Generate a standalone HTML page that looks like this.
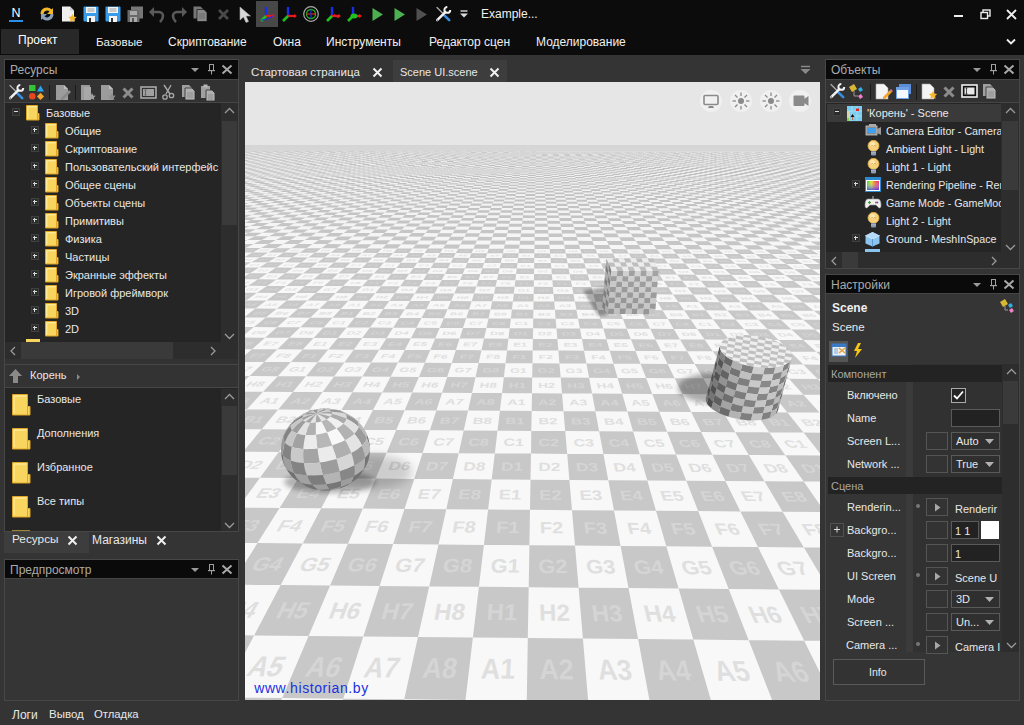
<!DOCTYPE html>
<html><head><meta charset="utf-8">
<style>
*{box-sizing:border-box;margin:0;padding:0}
html,body{width:1024px;height:725px;overflow:hidden;background:#343434;font-family:"Liberation Sans",sans-serif;color:#e8e8e8}
.a{position:absolute}
.t{position:absolute;white-space:nowrap;line-height:1}
svg{position:absolute;overflow:visible}
.ttl{position:absolute;background:#0a0a0a;height:20px}
.ttl span{position:absolute;left:5px;top:4px;font-size:12px;color:#aaaaaa;white-space:nowrap;line-height:1}
.bd{position:absolute;border:1px solid #454545}
</style></head><body>
<!-- top toolbar -->
<div class="a" style="left:0;top:0;width:1024px;height:55px;background:#0c0c0c"></div>
<div class="t" style="left:11.5px;top:7.42px;font-size:12.5px;color:#ffffff;font-weight:normal">N</div>
<div class="a" style="left:9px;top:20px;width:14px;height:2px;background:#2b8ee8"></div>
<svg style="left:39px;top:6px" width="16" height="16" viewBox="0 0 16 16"><path d="M3 8a5 5 0 0 1 9-3" stroke="#f0b82a" stroke-width="3" fill="none"/><path d="M14 2v6h-6z" fill="#f0b82a"/><path d="M13 8a5 5 0 0 1-9 3" stroke="#8aa0b8" stroke-width="3" fill="none"/><path d="M2 14V8h6z" fill="#8aa0b8"/></svg>
<svg style="left:61px;top:6px" width="16" height="16" viewBox="0 0 16 16"><path d="M1 0.5h8l4 4v11H1z" fill="#f0f0f0"/><path d="M9 0.5v4h4z" fill="#ccc"/><path d="M11.5 8l1.3 2.6 2.8.4-2 2 .5 2.8-2.6-1.4-2.6 1.4.5-2.8-2-2 2.8-.4z" fill="#f5b82e"/></svg>
<svg style="left:83px;top:6px" width="16" height="16" viewBox="0 0 16 16"><rect x="0.5" y="0.5" width="15" height="15" rx="1" fill="#3a9ce8"/><rect x="3" y="1" width="10" height="6" fill="#f4f4f4"/><path d="M4.5 3h7M4.5 5h7" stroke="#888" stroke-width="0.8"/><rect x="4" y="10" width="8" height="6" fill="#f4f4f4"/><rect x="6" y="12" width="2" height="4" fill="#333"/></svg>
<svg style="left:105px;top:6px" width="16" height="16" viewBox="0 0 16 16"><rect x="0.5" y="0.5" width="15" height="15" rx="1" fill="#3a9ce8"/><rect x="3" y="1" width="10" height="6" fill="#f4f4f4"/><path d="M4.5 3h7M4.5 5h7" stroke="#888" stroke-width="0.8"/><rect x="4" y="10" width="8" height="6" fill="#f4f4f4"/><rect x="6" y="12" width="2" height="4" fill="#333"/></svg>
<svg style="left:127px;top:6px" width="16" height="16" viewBox="0 0 16 16"><rect x="4" y="0.5" width="12" height="12" fill="#777"/><rect x="0.5" y="4" width="12" height="12" fill="#6a6a6a"/><rect x="3" y="5" width="7" height="4" fill="#aaa"/><rect x="3" y="11" width="7" height="5" fill="#aaa"/><rect x="5" y="12" width="2" height="4" fill="#555"/></svg>
<svg style="left:149px;top:6px" width="16" height="16" viewBox="0 0 16 16"><path d="M4 6h6a4 4 0 0 1 4 4c0 3-2 5-3 6" stroke="#5a5a5a" stroke-width="2.6" fill="none"/><path d="M0 6l5-5v10z" fill="#5a5a5a"/></svg>
<svg style="left:171px;top:6px" width="16" height="16" viewBox="0 0 16 16"><path d="M12 6H6a4 4 0 0 0-4 4c0 3 2 5 3 6" stroke="#5a5a5a" stroke-width="2.6" fill="none"/><path d="M16 6l-5-5v10z" fill="#5a5a5a"/></svg>
<svg style="left:193px;top:6px" width="15" height="16" viewBox="0 0 15 16"><path d="M0.5 0.5h7l3 3v9H0.5z" fill="#777"/><path d="M4 3.5h7l3 3v9H4z" fill="#8a8a8a" stroke="#111" stroke-width="0.7"/><path d="M6 8h6M6 10h6M6 12h6" stroke="#666" stroke-width="0.9"/></svg>
<svg style="left:217px;top:8px" width="13" height="13" viewBox="0 0 13 13"><path d="M2 2l9 9M11 2l-9 9" stroke="#4a4a4a" stroke-width="2.8"/></svg>
<svg style="left:239px;top:6px" width="12" height="17" viewBox="0 0 12 17"><path d="M1 1v13l3.5-3 2.5 5.5 2.5-1-2.5-5.5h4.5z" fill="#d8d8d8" stroke="#aaa" stroke-width="0.6"/></svg>
<div class="a" style="left:256px;top:1px;width:22px;height:26px;background:#484848"></div>
<svg style="left:259px;top:6px" width="18" height="18" viewBox="0 0 18 18"><path d="M7 10V1" stroke="#1a30e8" stroke-width="2.4"/><path d="M7 10h8" stroke="#e81a1a" stroke-width="2.2"/><path d="M16 10l-3-2v4z" fill="#e81a1a"/><path d="M7 10l-5 5" stroke="#20c020" stroke-width="2.6"/><path d="M2 14c3 0 9-2 12-4" stroke="#1a30e8" stroke-width="1.2" fill="none"/></svg>
<svg style="left:281px;top:6px" width="18" height="18" viewBox="0 0 18 18"><path d="M7 10V1" stroke="#1a30e8" stroke-width="2.4"/><path d="M7 10h8" stroke="#e81a1a" stroke-width="2.2"/><path d="M16 10l-3-2v4z" fill="#e81a1a"/><path d="M7 10l-5 5" stroke="#20c020" stroke-width="2.6"/></svg>
<svg style="left:303px;top:6px" width="16" height="16" viewBox="0 0 16 16"><circle cx="8" cy="8" r="7.3" fill="none" stroke="#aaa" stroke-width="1.2"/><circle cx="8" cy="8" r="4.5" fill="none" stroke="#20b020" stroke-width="1.3"/><path d="M3.5 8h9" stroke="#e02020" stroke-width="1.2"/><path d="M8 3.5v9" stroke="#2030e0" stroke-width="1.2"/></svg>
<svg style="left:325px;top:6px" width="18" height="18" viewBox="0 0 18 18"><path d="M7 10V1" stroke="#1a30e8" stroke-width="2.4"/><path d="M7 10h8" stroke="#e81a1a" stroke-width="2.2"/><path d="M16 10l-3-2v4z" fill="#e81a1a"/><path d="M7 10l-5 5" stroke="#20c020" stroke-width="2.6"/><path d="M9 8l4 4" stroke="#e81a1a" stroke-width="1"/></svg>
<svg style="left:346px;top:6px" width="18" height="18" viewBox="0 0 18 18"><path d="M7 10V1" stroke="#1a30e8" stroke-width="2.4"/><path d="M7 10h8" stroke="#e81a1a" stroke-width="2.2"/><path d="M16 10l-3-2v4z" fill="#e81a1a"/><path d="M7 10l-5 5" stroke="#20c020" stroke-width="2.6"/><ellipse cx="8" cy="10" rx="3.5" ry="2.5" fill="#20c020"/></svg>
<svg style="left:372px;top:7px" width="12" height="15" viewBox="0 0 12 15"><path d="M0.5 1l10.5 6.5L0.5 14z" fill="#4caf50"/></svg>
<svg style="left:394px;top:7px" width="12" height="15" viewBox="0 0 12 15"><path d="M0.5 1l10.5 6.5L0.5 14z" fill="#4caf50"/></svg>
<svg style="left:416px;top:7px" width="12" height="15" viewBox="0 0 12 15"><path d="M0.5 1l10.5 6.5L0.5 14z" fill="#505050"/></svg>
<svg style="left:435px;top:6px" width="17" height="17" viewBox="0 0 17 17"><path d="M2 1.5L7.5 7" stroke="#b0b0b0" stroke-width="1.2" stroke-linecap="round"/><path d="M8.8 8.8l5.4 5.4" stroke="#3a8ee0" stroke-width="2.6" stroke-linecap="round"/>
<path d="M2.2 14.2L10.3 6.1" stroke="#f2f2f2" stroke-width="2.4" stroke-linecap="round"/><path d="M12.3 1A2.9 2.9 0 1 0 15.2 3.9" stroke="#f2f2f2" stroke-width="2" fill="none"/><circle cx="2.3" cy="14.1" r="0.7" fill="#333"/></svg>
<svg style="left:460px;top:10px" width="8" height="10" viewBox="0 0 8 10"><path d="M0.5 1h7" stroke="#ddd" stroke-width="1.4"/><path d="M0 3.5h8l-4 4z" fill="#ddd"/></svg>
<div class="t" style="left:481px;top:7.84px;font-size:12px;color:#f0f0f0">Example...</div>
<div class="a" style="left:954px;top:15px;width:9px;height:2px;background:#eee"></div>
<svg style="left:980px;top:9px" width="11" height="11" viewBox="0 0 11 11"><rect x="3" y="1" width="7" height="6" fill="none" stroke="#eee" stroke-width="1.4"/><rect x="1" y="3.5" width="6.5" height="6" fill="#0c0c0c" stroke="#eee" stroke-width="1.4"/></svg>
<svg style="left:1006px;top:9px" width="11" height="11" viewBox="0 0 11 11"><path d="M1 1l9 9M10 1l-9 9" stroke="#eee" stroke-width="1.8"/></svg>
<svg style="left:1006px;top:38px" width="10" height="8" viewBox="0 0 10 8"><path d="M1 1.5l4 4 4-4" stroke="#eee" stroke-width="1.8" fill="none"/></svg>
<!-- menu -->
<div class="a" style="left:1px;top:29px;width:78px;height:25px;background:#282828"></div>
<div class="t" style="left:18px;top:34px;font-size:12px;color:#fff">Проект</div>
<div class="t" style="left:96px;top:36px;font-size:11.6px;color:#f0f0f0">Базовые</div>
<div class="t" style="left:168px;top:36px;font-size:12px;color:#f0f0f0">Скриптование</div>
<div class="t" style="left:273px;top:36px;font-size:12px;color:#f0f0f0">Окна</div>
<div class="t" style="left:326px;top:36px;font-size:12px;color:#f0f0f0">Инструменты</div>
<div class="t" style="left:429px;top:36px;font-size:12px;color:#f0f0f0">Редактор сцен</div>
<div class="t" style="left:536px;top:36px;font-size:12px;color:#f0f0f0">Моделирование</div>

<!-- ===== LEFT: Ресурсы panel ===== -->
<div class="a" style="left:4px;top:59px;width:235px;height:473px;border:1px solid #474747;background:#323232"></div>
<div class="a" style="left:5px;top:103px;width:233px;height:239px;background:#252525"></div>
<div class="ttl" style="left:5px;top:60px;width:233px;height:19px"><span style="font-size:12px;top:4px">Ресурсы</span></div>
<svg style="left:190px;top:66px" width="10" height="8"><path d="M1 2h8l-4 4z" fill="#9a9a9a"/></svg>
<svg style="left:206px;top:63px" width="10" height="13"><rect x="3.5" y="1.5" width="4" height="6" fill="none" stroke="#a0a0a0"/><rect x="2" y="7" width="7" height="1.2" fill="#a0a0a0"/><rect x="5" y="8" width="1" height="3.5" fill="#a0a0a0"/></svg>
<svg style="left:221px;top:64px" width="12" height="11"><path d="M1.5 1.5l9 8M10.5 1.5l-9 8" stroke="#a8a8a8" stroke-width="2"/></svg>
<div class="a" style="left:5px;top:79px;width:233px;height:24px;background:#323232;border-top:1px solid #454545;border-bottom:1px solid #454545"></div>
<svg width="0" height="0" style="position:absolute"><defs>
<symbol id="fold" viewBox="0 0 14 16"><path d="M0.5 0.5h11v8h1.5v6.5H0.5z" fill="#f8d55e" stroke="#e0a524"/><path d="M1.8 1.8h8.8M1.8 1.8v12" stroke="#fff2b0" stroke-width="1"/><path d="M11.5 8.5v6.5" stroke="#e0a524"/></symbol>
<symbol id="bulb" viewBox="0 0 13 16"><circle cx="6.5" cy="5.8" r="5.5" fill="#f8d27a" stroke="#e0ae4a" stroke-width="0.8"/><circle cx="5.5" cy="4.5" r="2.5" fill="#fde7b0"/><path d="M4 6.5l1-1.5 1.5 1.5 1.5-1.5 1 1.5" stroke="#d9a040" stroke-width="0.7" fill="none"/><rect x="4" y="11" width="5" height="4.5" rx="1" fill="#7d8fa8"/><path d="M4 12.5h5M4 14h5" stroke="#b8c4d4" stroke-width="0.6"/></symbol>
</defs></svg><svg style="left:8px;top:84px" width="17" height="17" viewBox="0 0 17 17"><path d="M2 1.5L7.5 7" stroke="#b0b0b0" stroke-width="1.2" stroke-linecap="round"/><path d="M8.8 8.8l5.4 5.4" stroke="#3a8ee0" stroke-width="2.6" stroke-linecap="round"/>
<path d="M2.2 14.2L10.3 6.1" stroke="#f2f2f2" stroke-width="2.4" stroke-linecap="round"/><path d="M12.3 1A2.9 2.9 0 1 0 15.2 3.9" stroke="#f2f2f2" stroke-width="2" fill="none"/><circle cx="2.3" cy="14.1" r="0.7" fill="#333"/></svg>
<svg style="left:28px;top:84px" width="17" height="17" viewBox="0 0 17 17"><rect x="1" y="1" width="6.5" height="6" fill="#36c236"/><path d="M9 7.5L12.5 1.5 16 7.5z" fill="#2aa6f0"/>
<circle cx="4.3" cy="12.3" r="3.3" fill="#e8461e"/><path d="M12.5 8.8l3.6 3.6-3.6 3.6-3.6-3.6z" fill="#f3a530"/></svg>
<div class="a" style="left:49px;top:85px;width:1px;height:15px;background:#1a1a1a"></div>
<svg style="left:54px;top:84px" width="17" height="17" viewBox="0 0 17 17"><path d="M2 1h8l4 4v11H2z" fill="#9c9c9c"/><path d="M10 1v4h4" fill="#bdbdbd"/><path d="M7 14l8-8 2 2-8 8H7z" fill="#8a8a8a"/></svg>
<div class="a" style="left:75px;top:85px;width:1px;height:15px;background:#1a1a1a"></div>
<svg style="left:80px;top:84px" width="17" height="17" viewBox="0 0 17 17"><path d="M1 1h9v15H1z" fill="#9a9a9a"/><path d="M4 3h7v13H4z" fill="#a8a8a8"/><path d="M12 9l1.2 2.4 2.6.3-1.9 1.8.5 2.6-2.4-1.3-2.4 1.3.5-2.6-1.9-1.8 2.6-.3z" fill="#a0a0a0"/></svg>
<svg style="left:100px;top:84px" width="17" height="17" viewBox="0 0 17 17"><path d="M1 1h8l4 4v11H1z" fill="#9c9c9c"/><path d="M9 1v4h4z" fill="#c0c0c0"/><path d="M12 9l1.2 2.4 2.6.3-1.9 1.8.5 2.6-2.4-1.3-2.4 1.3.5-2.6-1.9-1.8 2.6-.3z" fill="#8e8e8e"/></svg>
<svg style="left:121px;top:86px" width="14" height="14" viewBox="0 0 14 14"><path d="M2.5 2.5l9 9M11.5 2.5l-9 9" stroke="#8c8c8c" stroke-width="3"/></svg>
<svg style="left:140px;top:86px" width="17" height="13" viewBox="0 0 17 13"><rect x="1" y="1" width="15" height="11" fill="none" stroke="#a8a8a8" stroke-width="1.6"/><rect x="3" y="3" width="11" height="7" fill="#a0a0a0"/><path d="M4.5 4h2M5.5 4v5M4.5 9h2" stroke="#555" stroke-width="0.8"/></svg>
<svg style="left:161px;top:84px" width="15" height="17" viewBox="0 0 15 17"><path d="M3 1l6 9M10 1L5 10" stroke="#a8a8a8" stroke-width="1.4"/><circle cx="4" cy="13" r="2.2" fill="none" stroke="#a8a8a8" stroke-width="1.3"/><circle cx="10.5" cy="11.5" r="2.2" fill="none" stroke="#a8a8a8" stroke-width="1.3"/></svg>
<svg style="left:181px;top:84px" width="15" height="17" viewBox="0 0 15 17"><path d="M1 1h7l3 3v9H1z" fill="#a0a0a0"/><path d="M4 4h7l3 3v9H4z" fill="#b0b0b0" stroke="#2f2f2f" stroke-width="0.8"/><path d="M6 9h6M6 11h6M6 13h6" stroke="#8a8a8a" stroke-width="0.9"/></svg>
<svg style="left:200px;top:84px" width="16" height="17" viewBox="0 0 16 17"><path d="M1 2h9v12H1z" fill="#a0a0a0"/><rect x="3.5" y="0.5" width="4" height="3" fill="#b8b8b8"/><path d="M6 6h6l3 3v8H6z" fill="#b0b0b0" stroke="#2f2f2f" stroke-width="0.8"/><path d="M8 11h5M8 13h5M8 15h5" stroke="#8a8a8a" stroke-width="0.9"/></svg>
<!-- tree -->
<div class="a" style="left:221px;top:103px;width:17px;height:239px;background:#2d2d2d"></div>
<div class="a" style="left:222px;top:121px;width:15px;height:104px;background:#3a3a3a"></div>
<svg style="left:224px;top:107px" width="11" height="8"><path d="M1 6l4.5-4.5L10 6" stroke="#9a9a9a" stroke-width="1.3" fill="none"/></svg>
<svg style="left:224px;top:332px" width="11" height="8"><path d="M1 2l4.5 4.5L10 2" stroke="#9a9a9a" stroke-width="1.3" fill="none"/></svg>
<div class="a" style="left:0;top:0;width:221px;height:342px;overflow:hidden"><svg style="left:12px;top:108px" width="8" height="8" viewBox="0 0 8 8"><rect x="0.5" y="0.5" width="7" height="7" fill="#2c2c2c" stroke="#404040"/><rect x="2" y="3" width="4" height="1" fill="#d8d8d8"/></svg>
<svg style="left:26px;top:105px" width="14" height="16" viewBox="0 0 14 16"><use href="#fold"/></svg>
<div class="t" style="left:46px;top:107.69px;font-size:11px;color:#e8e8e8">Базовые</div>
<svg style="left:31px;top:126px" width="8" height="8" viewBox="0 0 8 8"><rect x="0.5" y="0.5" width="7" height="7" fill="#2c2c2c" stroke="#404040"/><rect x="2" y="3" width="4" height="1" fill="#d8d8d8"/><rect x="3" y="2" width="1" height="4" fill="#d8d8d8"/></svg>
<svg style="left:45px;top:123px" width="14" height="16" viewBox="0 0 14 16"><use href="#fold"/></svg>
<div class="t" style="left:65px;top:125.69px;font-size:11px;color:#e8e8e8">Общие</div>
<svg style="left:31px;top:144px" width="8" height="8" viewBox="0 0 8 8"><rect x="0.5" y="0.5" width="7" height="7" fill="#2c2c2c" stroke="#404040"/><rect x="2" y="3" width="4" height="1" fill="#d8d8d8"/><rect x="3" y="2" width="1" height="4" fill="#d8d8d8"/></svg>
<svg style="left:45px;top:141px" width="14" height="16" viewBox="0 0 14 16"><use href="#fold"/></svg>
<div class="t" style="left:65px;top:143.69px;font-size:11px;color:#e8e8e8">Скриптование</div>
<svg style="left:31px;top:162px" width="8" height="8" viewBox="0 0 8 8"><rect x="0.5" y="0.5" width="7" height="7" fill="#2c2c2c" stroke="#404040"/><rect x="2" y="3" width="4" height="1" fill="#d8d8d8"/><rect x="3" y="2" width="1" height="4" fill="#d8d8d8"/></svg>
<svg style="left:45px;top:159px" width="14" height="16" viewBox="0 0 14 16"><use href="#fold"/></svg>
<div class="t" style="left:65px;top:161.69px;font-size:11px;color:#e8e8e8">Пользовательский интерфейс</div>
<svg style="left:31px;top:180px" width="8" height="8" viewBox="0 0 8 8"><rect x="0.5" y="0.5" width="7" height="7" fill="#2c2c2c" stroke="#404040"/><rect x="2" y="3" width="4" height="1" fill="#d8d8d8"/><rect x="3" y="2" width="1" height="4" fill="#d8d8d8"/></svg>
<svg style="left:45px;top:177px" width="14" height="16" viewBox="0 0 14 16"><use href="#fold"/></svg>
<div class="t" style="left:65px;top:179.69px;font-size:11px;color:#e8e8e8">Общее сцены</div>
<svg style="left:31px;top:198px" width="8" height="8" viewBox="0 0 8 8"><rect x="0.5" y="0.5" width="7" height="7" fill="#2c2c2c" stroke="#404040"/><rect x="2" y="3" width="4" height="1" fill="#d8d8d8"/><rect x="3" y="2" width="1" height="4" fill="#d8d8d8"/></svg>
<svg style="left:45px;top:195px" width="14" height="16" viewBox="0 0 14 16"><use href="#fold"/></svg>
<div class="t" style="left:65px;top:197.69px;font-size:11px;color:#e8e8e8">Объекты сцены</div>
<svg style="left:31px;top:216px" width="8" height="8" viewBox="0 0 8 8"><rect x="0.5" y="0.5" width="7" height="7" fill="#2c2c2c" stroke="#404040"/><rect x="2" y="3" width="4" height="1" fill="#d8d8d8"/><rect x="3" y="2" width="1" height="4" fill="#d8d8d8"/></svg>
<svg style="left:45px;top:213px" width="14" height="16" viewBox="0 0 14 16"><use href="#fold"/></svg>
<div class="t" style="left:65px;top:215.69px;font-size:11px;color:#e8e8e8">Примитивы</div>
<svg style="left:31px;top:234px" width="8" height="8" viewBox="0 0 8 8"><rect x="0.5" y="0.5" width="7" height="7" fill="#2c2c2c" stroke="#404040"/><rect x="2" y="3" width="4" height="1" fill="#d8d8d8"/><rect x="3" y="2" width="1" height="4" fill="#d8d8d8"/></svg>
<svg style="left:45px;top:231px" width="14" height="16" viewBox="0 0 14 16"><use href="#fold"/></svg>
<div class="t" style="left:65px;top:233.69px;font-size:11px;color:#e8e8e8">Физика</div>
<svg style="left:31px;top:252px" width="8" height="8" viewBox="0 0 8 8"><rect x="0.5" y="0.5" width="7" height="7" fill="#2c2c2c" stroke="#404040"/><rect x="2" y="3" width="4" height="1" fill="#d8d8d8"/><rect x="3" y="2" width="1" height="4" fill="#d8d8d8"/></svg>
<svg style="left:45px;top:249px" width="14" height="16" viewBox="0 0 14 16"><use href="#fold"/></svg>
<div class="t" style="left:65px;top:251.69px;font-size:11px;color:#e8e8e8">Частицы</div>
<svg style="left:31px;top:270px" width="8" height="8" viewBox="0 0 8 8"><rect x="0.5" y="0.5" width="7" height="7" fill="#2c2c2c" stroke="#404040"/><rect x="2" y="3" width="4" height="1" fill="#d8d8d8"/><rect x="3" y="2" width="1" height="4" fill="#d8d8d8"/></svg>
<svg style="left:45px;top:267px" width="14" height="16" viewBox="0 0 14 16"><use href="#fold"/></svg>
<div class="t" style="left:65px;top:269.69px;font-size:11px;color:#e8e8e8">Экранные эффекты</div>
<svg style="left:31px;top:288px" width="8" height="8" viewBox="0 0 8 8"><rect x="0.5" y="0.5" width="7" height="7" fill="#2c2c2c" stroke="#404040"/><rect x="2" y="3" width="4" height="1" fill="#d8d8d8"/><rect x="3" y="2" width="1" height="4" fill="#d8d8d8"/></svg>
<svg style="left:45px;top:285px" width="14" height="16" viewBox="0 0 14 16"><use href="#fold"/></svg>
<div class="t" style="left:65px;top:287.69px;font-size:11px;color:#e8e8e8">Игровой фреймворк</div>
<svg style="left:31px;top:306px" width="8" height="8" viewBox="0 0 8 8"><rect x="0.5" y="0.5" width="7" height="7" fill="#2c2c2c" stroke="#404040"/><rect x="2" y="3" width="4" height="1" fill="#d8d8d8"/><rect x="3" y="2" width="1" height="4" fill="#d8d8d8"/></svg>
<svg style="left:45px;top:303px" width="14" height="16" viewBox="0 0 14 16"><use href="#fold"/></svg>
<div class="t" style="left:65px;top:305.69px;font-size:11px;color:#e8e8e8">3D</div>
<svg style="left:31px;top:324px" width="8" height="8" viewBox="0 0 8 8"><rect x="0.5" y="0.5" width="7" height="7" fill="#2c2c2c" stroke="#404040"/><rect x="2" y="3" width="4" height="1" fill="#d8d8d8"/><rect x="3" y="2" width="1" height="4" fill="#d8d8d8"/></svg>
<svg style="left:45px;top:321px" width="14" height="16" viewBox="0 0 14 16"><use href="#fold"/></svg>
<div class="t" style="left:65px;top:323.69px;font-size:11px;color:#e8e8e8">2D</div>
<div class="a" style="left:26px;top:339px;width:14px;height:3px;background:#f8d55e"></div></div>
<!-- hscroll -->
<div class="a" style="left:5px;top:342px;width:233px;height:17px;background:#2d2d2d"></div>
<div class="a" style="left:21px;top:342px;width:152px;height:17px;background:#3a3a3a"></div>
<svg style="left:9px;top:346px" width="8" height="10"><path d="M6 1L2 5l4 4" stroke="#9a9a9a" stroke-width="1.3" fill="none"/></svg>
<svg style="left:209px;top:346px" width="8" height="10"><path d="M2 1l4 4-4 4" stroke="#9a9a9a" stroke-width="1.3" fill="none"/></svg>
<!-- breadcrumb + list -->
<div class="a" style="left:5px;top:364px;width:233px;height:1px;background:#474747"></div>
<div class="a" style="left:5px;top:365px;width:233px;height:23px;background:#333333;border-bottom:1px solid #474747"></div>
<div class="a" style="left:5px;top:388px;width:233px;height:143px;background:#252525"></div>
<svg style="left:8px;top:368px" width="15" height="16"><path d="M7.5 1L1 8h4v7h5V8h4z" fill="#8a8a8a"/></svg>
<div class="t" style="left:30px;top:370px;font-size:11px">Корень</div>
<svg style="left:76px;top:373px" width="5" height="8"><path d="M1 1l3 3-3 3z" fill="#8a8a8a"/></svg>
<div class="a" style="left:221px;top:389px;width:17px;height:142px;background:#2d2d2d"></div>
<div class="a" style="left:222px;top:406px;width:15px;height:69px;background:#3a3a3a"></div>
<svg style="left:224px;top:393px" width="11" height="8"><path d="M1 6l4.5-4.5L10 6" stroke="#9a9a9a" stroke-width="1.3" fill="none"/></svg>
<svg style="left:224px;top:521px" width="11" height="8"><path d="M1 2l4.5 4.5L10 2" stroke="#9a9a9a" stroke-width="1.3" fill="none"/></svg>
<svg style="left:12px;top:394px" width="19" height="22" viewBox="0 0 19 22"><path d="M0.5 0.5h15v12h2.5v8.5H0.5z" fill="#f8d55e" stroke="#e0a524"/><path d="M2 2h12.5M2 2v17" stroke="#fff2b0"/><path d="M15.5 12.5v8.5" stroke="#e0a524"/></svg>
<div class="t" style="left:37px;top:394.19px;font-size:11px;color:#e8e8e8">Базовые</div>
<svg style="left:12px;top:428px" width="19" height="22" viewBox="0 0 19 22"><path d="M0.5 0.5h15v12h2.5v8.5H0.5z" fill="#f8d55e" stroke="#e0a524"/><path d="M2 2h12.5M2 2v17" stroke="#fff2b0"/><path d="M15.5 12.5v8.5" stroke="#e0a524"/></svg>
<div class="t" style="left:37px;top:428.19px;font-size:11px;color:#e8e8e8">Дополнения</div>
<svg style="left:12px;top:462px" width="19" height="22" viewBox="0 0 19 22"><path d="M0.5 0.5h15v12h2.5v8.5H0.5z" fill="#f8d55e" stroke="#e0a524"/><path d="M2 2h12.5M2 2v17" stroke="#fff2b0"/><path d="M15.5 12.5v8.5" stroke="#e0a524"/></svg>
<div class="t" style="left:37px;top:462.19px;font-size:11px;color:#e8e8e8">Избранное</div>
<svg style="left:12px;top:496px" width="19" height="22" viewBox="0 0 19 22"><path d="M0.5 0.5h15v12h2.5v8.5H0.5z" fill="#f8d55e" stroke="#e0a524"/><path d="M2 2h12.5M2 2v17" stroke="#fff2b0"/><path d="M15.5 12.5v8.5" stroke="#e0a524"/></svg>
<div class="t" style="left:37px;top:496.19px;font-size:11px;color:#e8e8e8">Все типы</div>
<div class="a" style="left:12px;top:530px;width:18px;height:1px;background:#a08530"></div>
<!-- tabs -->
<div class="a" style="left:4px;top:532px;width:85px;height:21px;background:#3d3d3d"></div>
<div class="t" style="left:12px;top:534px;font-size:11.8px">Ресурсы</div>
<svg style="left:67px;top:535px" width="11" height="11"><path d="M1.5 1.5l8 8M9.5 1.5l-8 8" stroke="#f0f0f0" stroke-width="2"/></svg>
<div class="t" style="left:92px;top:534px;font-size:12px">Магазины</div>
<svg style="left:156px;top:535px" width="11" height="11"><path d="M1.5 1.5l8 8M9.5 1.5l-8 8" stroke="#f0f0f0" stroke-width="2"/></svg>

<!-- ===== LEFT: Предпросмотр ===== -->
<div class="a" style="left:4px;top:559px;width:235px;height:142px;border:1px solid #474747;background:#353535"></div>
<div class="ttl" style="left:5px;top:560px;width:233px;height:19px;border-bottom:1px solid #454545"><span style="font-size:12px;top:4px">Предпросмотр</span></div>
<svg style="left:190px;top:566px" width="10" height="8"><path d="M1 2h8l-4 4z" fill="#9a9a9a"/></svg>
<svg style="left:206px;top:563px" width="10" height="13"><rect x="3.5" y="1.5" width="4" height="6" fill="none" stroke="#a0a0a0"/><rect x="2" y="7" width="7" height="1.2" fill="#a0a0a0"/><rect x="5" y="8" width="1" height="3.5" fill="#a0a0a0"/></svg>
<svg style="left:221px;top:564px" width="12" height="11"><path d="M1.5 1.5l9 8M10.5 1.5l-9 8" stroke="#a8a8a8" stroke-width="2"/></svg>

<!-- bottom bar -->
<div class="t" style="left:12px;top:709px;font-size:12px">Логи</div>
<div class="t" style="left:49px;top:709px;font-size:11.5px">Вывод</div>
<div class="t" style="left:94px;top:709px;font-size:11.3px">Отладка</div>

<!-- ===== CENTER tabs ===== -->
<div class="t" style="left:251px;top:67px;font-size:11.5px">Стартовая страница</div>
<svg style="left:372px;top:67px" width="11" height="11"><path d="M1.5 1.5l8 8M9.5 1.5l-8 8" stroke="#f0f0f0" stroke-width="2"/></svg>
<div class="a" style="left:393px;top:60px;width:114px;height:22px;background:#3d3d3d"></div>
<div class="t" style="left:400px;top:67px;font-size:11px">Scene UI.scene</div>
<svg style="left:489px;top:67px" width="11" height="11"><path d="M1.5 1.5l8 8M9.5 1.5l-8 8" stroke="#f0f0f0" stroke-width="2"/></svg>
<svg style="left:800px;top:65px" width="11" height="11"><path d="M1 1.5h9" stroke="#8a8a8a" stroke-width="1.5"/><path d="M0.5 4h10l-5 5z" fill="#8a8a8a"/></svg>

<!-- ===== RIGHT: Объекты ===== -->
<div class="a" style="left:825px;top:59px;width:195px;height:210px;border:1px solid #474747;background:#252525"></div>
<div class="ttl" style="left:826px;top:60px;width:193px;height:19px"><span style="font-size:12px;top:4px">Объекты</span></div>
<svg style="left:972px;top:66px" width="10" height="8"><path d="M1 2h8l-4 4z" fill="#9a9a9a"/></svg>
<svg style="left:988px;top:63px" width="10" height="13"><rect x="3.5" y="1.5" width="4" height="6" fill="none" stroke="#a0a0a0"/><rect x="2" y="7" width="7" height="1.2" fill="#a0a0a0"/><rect x="5" y="8" width="1" height="3.5" fill="#a0a0a0"/></svg>
<svg style="left:1003px;top:64px" width="12" height="11"><path d="M1.5 1.5l9 8M10.5 1.5l-9 8" stroke="#a8a8a8" stroke-width="2"/></svg>
<div class="a" style="left:826px;top:79px;width:193px;height:24px;background:#323232;border-top:1px solid #454545;border-bottom:1px solid #454545"></div>
<svg style="left:829px;top:83px" width="17" height="17" viewBox="0 0 17 17"><path d="M2 1.5L7.5 7" stroke="#b0b0b0" stroke-width="1.2" stroke-linecap="round"/><path d="M8.8 8.8l5.4 5.4" stroke="#3a8ee0" stroke-width="2.6" stroke-linecap="round"/>
<path d="M2.2 14.2L10.3 6.1" stroke="#f2f2f2" stroke-width="2.4" stroke-linecap="round"/><path d="M12.3 1A2.9 2.9 0 1 0 15.2 3.9" stroke="#f2f2f2" stroke-width="2" fill="none"/><circle cx="2.3" cy="14.1" r="0.7" fill="#333"/></svg>
<svg style="left:848px;top:83px" width="17" height="17" viewBox="0 0 17 17"><path d="M1 4l5-3 3 5-5 3z" fill="#d8b830"/><path d="M6 8v5h4" stroke="#999" fill="none"/><path d="M10 6l3-2 2 3-3 2z" fill="#30b0e8"/><path d="M10 13l3-2 2 3-3 2z" fill="#f080c8"/></svg>
<div class="a" style="left:870px;top:84px;width:1px;height:16px;background:#1a1a1a"></div>
<svg style="left:875px;top:83px" width="17" height="17" viewBox="0 0 17 17"><path d="M1 1h8l4 4v11H1z" fill="#f4f4f4" stroke="#aaa" stroke-width="0.6"/><path d="M8 14l7-7 2 2-7 7H8z" fill="#f3a530"/><path d="M15 7l2 2 1-1-2-2z" fill="#e070a0"/></svg>
<svg style="left:895px;top:83px" width="17" height="17" viewBox="0 0 17 17"><rect x="4" y="1" width="12" height="10" fill="#5b8ed6"/><rect x="1" y="4" width="13" height="12" fill="#6ea0e8"/><rect x="2" y="7" width="11" height="8" fill="#f4f8ff"/></svg>
<div class="a" style="left:916px;top:84px;width:1px;height:16px;background:#1a1a1a"></div>
<svg style="left:921px;top:83px" width="17" height="17" viewBox="0 0 17 17"><path d="M1 1h8l4 4v11H1z" fill="#f4f4f4" stroke="#aaa" stroke-width="0.6"/><path d="M12 8l1.3 2.6 2.8.4-2 2 .5 2.8-2.6-1.4-2.6 1.4.5-2.8-2-2 2.8-.4z" fill="#f5b82e"/></svg>
<svg style="left:942px;top:85px" width="14" height="14" viewBox="0 0 14 14"><path d="M2.5 2.5l9 9M11.5 2.5l-9 9" stroke="#8c8c8c" stroke-width="3"/></svg>
<svg style="left:961px;top:84px" width="17" height="15" viewBox="0 0 17 15"><rect x="1" y="1" width="15" height="12" fill="#111" stroke="#f0f0f0" stroke-width="1.6"/><rect x="3.5" y="3.5" width="10" height="7" fill="#e8e8e8"/><path d="M4.5 4h2M5.5 4v6M4.5 10h2" stroke="#222" stroke-width="0.8"/></svg>
<svg style="left:982px;top:83px" width="15" height="17" viewBox="0 0 15 17"><path d="M1 1h7l3 3v9H1z" fill="#a0a0a0"/><path d="M4 4h7l3 3v9H4z" fill="#b0b0b0" stroke="#2f2f2f" stroke-width="0.8"/><path d="M6 9h6M6 11h6M6 13h6" stroke="#8a8a8a" stroke-width="0.9"/></svg>
<div class="a" style="left:1001px;top:103px;width:18px;height:150px;background:#2d2d2d"></div>
<div class="a" style="left:1002px;top:121px;width:16px;height:69px;background:#3a3a3a"></div>
<svg style="left:1005px;top:107px" width="11" height="8"><path d="M1 6l4.5-4.5L10 6" stroke="#9a9a9a" stroke-width="1.3" fill="none"/></svg>
<svg style="left:1005px;top:243px" width="11" height="8"><path d="M1 2l4.5 4.5L10 2" stroke="#9a9a9a" stroke-width="1.3" fill="none"/></svg>
<div class="a" style="left:827px;top:104px;width:174px;height:18px;background:#3a3a3a"></div>
<div class="a" style="left:0;top:0;width:1001px;height:252px;overflow:hidden"><svg style="left:833px;top:108px" width="8" height="8" viewBox="0 0 8 8"><rect x="0.5" y="0.5" width="7" height="7" fill="#2c2c2c" stroke="#404040"/><rect x="2" y="3" width="4" height="1" fill="#d8d8d8"/></svg>
<svg style="left:847px;top:106px" width="15" height="15" viewBox="0 0 15 15"><rect width="15" height="15" fill="#78cdf0"/><rect x="0" y="5" width="3" height="10" fill="#e8d098"/><rect x="0" y="12" width="2" height="3" fill="#8acc40"/><path d="M5 0v15M10 0v15M0 5h15M0 10h15" stroke="#a8e0f6" stroke-width="0.8"/><path d="M5.5 14V9" stroke="#c07050"/><path d="M3.5 11l2-3 2 3z" fill="#111"/><rect x="9" y="2.5" width="3" height="2.5" fill="#e82020"/></svg>
<div class="t" style="left:867px;top:107.69px;font-size:11px;color:#e8e8e8">'Корень' - Scene</div>
<svg style="left:865px;top:124px" width="17" height="12" viewBox="0 0 17 12"><rect x="1" y="2" width="11" height="9" fill="#8c8c8c" stroke="#ccc" stroke-width="0.8"/><rect x="3" y="4" width="7" height="5" fill="#3fa0f0"/><path d="M12 5l4-2v8l-4-2z" fill="#9a9a9a"/><rect x="4" y="0" width="7" height="2" fill="#aaa"/></svg>
<div class="t" style="left:886px;top:125.94px;font-size:10.7px;color:#e8e8e8">Camera Editor - Camera</div>
<svg style="left:867px;top:140px" width="13" height="16" viewBox="0 0 13 16"><use href="#bulb"/></svg>
<div class="t" style="left:886px;top:143.94px;font-size:10.7px;color:#e8e8e8">Ambient Light - Light</div>
<svg style="left:867px;top:158px" width="13" height="16" viewBox="0 0 13 16"><use href="#bulb"/></svg>
<div class="t" style="left:886px;top:161.94px;font-size:10.7px;color:#e8e8e8">Light 1 - Light</div>
<svg style="left:852px;top:180px" width="8" height="8" viewBox="0 0 8 8"><rect x="0.5" y="0.5" width="7" height="7" fill="#2c2c2c" stroke="#404040"/><rect x="2" y="3" width="4" height="1" fill="#d8d8d8"/><rect x="3" y="2" width="1" height="4" fill="#d8d8d8"/></svg>
<svg style="left:865px;top:177px" width="16" height="15" viewBox="0 0 16 15"><defs><linearGradient id="rg" x1="0" x2="1"><stop offset="0" stop-color="#30d040"/><stop offset=".35" stop-color="#e0e020"/><stop offset=".7" stop-color="#f06030"/><stop offset="1" stop-color="#f02080"/></linearGradient><linearGradient id="rg2" x1="0" y1="0" x2="0" y2="1"><stop offset="0" stop-color="#fff" stop-opacity="0"/><stop offset="1" stop-color="#4040f0" stop-opacity=".8"/></linearGradient></defs><rect x="0.5" y="0.5" width="15" height="14" fill="#fff" stroke="#2a8ad0"/><rect x="1" y="1" width="14" height="2" fill="#2a8ad0"/><rect x="2" y="4" width="12" height="9" fill="url(#rg)"/><rect x="2" y="4" width="12" height="9" fill="url(#rg2)"/></svg>
<div class="t" style="left:886px;top:179.94px;font-size:10.7px;color:#e8e8e8">Rendering Pipeline - Rendering</div>
<svg style="left:865px;top:196px" width="16" height="13" viewBox="0 0 16 13"><path d="M3 3h10c2 0 3 3 3 6s-1 3-2 3l-3-3H5l-3 3c-1 0-2 0-2-3s1-6 3-6z" fill="#f0f0f0" stroke="#999" stroke-width="0.6"/><path d="M3 6.5h3M4.5 5v3" stroke="#40a030" stroke-width="1.2"/><circle cx="11" cy="6.5" r="0.9" fill="#e03030"/><circle cx="12.5" cy="6.5" r="0.9" fill="#3070e0"/><rect x="7.5" y="0" width="1" height="3" fill="#bbb"/></svg>
<div class="t" style="left:886px;top:197.94px;font-size:10.7px;color:#e8e8e8">Game Mode - GameMode</div>
<svg style="left:867px;top:212px" width="13" height="16" viewBox="0 0 13 16"><use href="#bulb"/></svg>
<div class="t" style="left:886px;top:215.94px;font-size:10.7px;color:#e8e8e8">Light 2 - Light</div>
<svg style="left:852px;top:234px" width="8" height="8" viewBox="0 0 8 8"><rect x="0.5" y="0.5" width="7" height="7" fill="#2c2c2c" stroke="#404040"/><rect x="2" y="3" width="4" height="1" fill="#d8d8d8"/><rect x="3" y="2" width="1" height="4" fill="#d8d8d8"/></svg>
<svg style="left:865px;top:231px" width="15" height="16" viewBox="0 0 15 16"><path d="M7.5 1L14.5 4.5v8L7.5 15.5 0.5 12.5v-8z" fill="#8cc4f0"/><path d="M0.5 4.5L7.5 8l7-3.5" stroke="#d8eeff" fill="none"/><path d="M7.5 8v7.5" stroke="#5a9ad0"/><path d="M7.5 1L0.5 4.5 7.5 8l7-3.5z" fill="#b8dcf8"/></svg>
<div class="t" style="left:886px;top:233.94px;font-size:10.7px;color:#e8e8e8">Ground - MeshInSpace</div>
<svg style="left:865px;top:249px" width="15" height="3" viewBox="0 0 15 3"><rect width="15" height="3" fill="#8cc4f0"/></svg></div>
<div class="a" style="left:826px;top:252px;width:193px;height:16px;background:#2d2d2d"></div>
<div class="a" style="left:842px;top:252px;width:16px;height:16px;background:#3a3a3a"></div>
<svg style="left:830px;top:256px" width="8" height="10"><path d="M6 1L2 5l4 4" stroke="#9a9a9a" stroke-width="1.3" fill="none"/></svg>
<svg style="left:990px;top:256px" width="8" height="10"><path d="M2 1l4 4-4 4" stroke="#9a9a9a" stroke-width="1.3" fill="none"/></svg>

<!-- ===== RIGHT: Настройки ===== -->
<div class="a" style="left:825px;top:274px;width:195px;height:427px;border:1px solid #474747;background:#353535"></div>
<div class="ttl" style="left:826px;top:275px;width:193px;height:19px;border-bottom:1px solid #454545"><span style="font-size:12px;top:4px">Настройки</span></div>
<svg style="left:972px;top:281px" width="10" height="8"><path d="M1 2h8l-4 4z" fill="#9a9a9a"/></svg>
<svg style="left:988px;top:278px" width="10" height="13"><rect x="3.5" y="1.5" width="4" height="6" fill="none" stroke="#a0a0a0"/><rect x="2" y="7" width="7" height="1.2" fill="#a0a0a0"/><rect x="5" y="8" width="1" height="3.5" fill="#a0a0a0"/></svg>
<svg style="left:1003px;top:279px" width="12" height="11"><path d="M1.5 1.5l9 8M10.5 1.5l-9 8" stroke="#a8a8a8" stroke-width="2"/></svg>
<div class="t" style="left:832px;top:301.84px;font-size:12px;color:#f0f0f0;font-weight:bold">Scene</div>
<div class="t" style="left:832px;top:322.27px;font-size:11.5px;color:#e8e8e8">Scene</div>
<svg style="left:999px;top:298px" width="16" height="16" viewBox="0 0 16 16"><path d="M1 4l5-3 3 5-5 3z" fill="#d8b830"/><path d="M6 8v4h3" stroke="#999" fill="none"/><path d="M9 7l3-2 2 3-3 2z" fill="#30b0e8"/><path d="M10 12l3-2 2 3-3 2z" fill="#f080c8"/></svg>
<div class="a" style="left:829px;top:341px;width:19px;height:21px;background:#555"></div>
<svg style="left:831px;top:342px" width="16" height="16" viewBox="0 0 16 16"><rect x="1" y="2" width="14" height="12" fill="#f0f0f0" stroke="#3a7ac8" stroke-width="1"/><rect x="1" y="2" width="14" height="3" fill="#3a7ac8"/><path d="M3 7h4M3 9h4M3 11h4" stroke="#6090d0" stroke-width="0.8"/><path d="M8 6l6 5M8 11l6-5" stroke="#e0a040" stroke-width="1.5"/></svg>
<svg style="left:853px;top:343px" width="10" height="15" viewBox="0 0 10 15"><path d="M5 0L1 8h3l-2 7 7-9H5l3-6z" fill="#f5c518"/></svg>
<div class="a" style="left:828px;top:364px;width:78px;height:288px;background:#353535"></div>
<div class="a" style="left:912px;top:364px;width:90px;height:288px;background:#313131"></div>
<div class="a" style="left:1002px;top:364px;width:17px;height:288px;background:#2d2d2d"></div>
<div class="a" style="left:1003px;top:381px;width:15px;height:43px;background:#3a3a3a"></div>
<svg style="left:1006px;top:368px" width="11" height="8" viewBox="0 0 11 8"><path d="M1 6l4.5-4.5L10 6" stroke="#9a9a9a" stroke-width="1.3" fill="none"/></svg>
<svg style="left:1006px;top:641px" width="11" height="8" viewBox="0 0 11 8"><path d="M1 2l4.5 4.5L10 2" stroke="#9a9a9a" stroke-width="1.3" fill="none"/></svg>
<div class="a" style="left:828px;top:365px;width:174px;height:17px;background:#232323"></div>
<div class="t" style="left:831px;top:368.69px;font-size:11px;color:#a8a8a8">Компонент</div>
<div class="a" style="left:828px;top:477px;width:174px;height:17px;background:#232323"></div>
<div class="t" style="left:831px;top:480.69px;font-size:11px;color:#a8a8a8">Сцена</div>
<div class="a" style="left:906px;top:382px;width:7px;height:95px;background:#3b3b3b"></div>
<div class="a" style="left:906px;top:494px;width:7px;height:158px;background:#3b3b3b"></div>
<div class="t" style="left:847px;top:389.69px;font-size:11px;color:#e8e8e8">Включено</div>
<svg style="left:951px;top:388px" width="15" height="15" viewBox="0 0 15 15"><rect x="0.5" y="0.5" width="14" height="14" fill="#252525" stroke="#aaa"/><path d="M3 7.5l3 3 6-7" stroke="#fff" stroke-width="1.8" fill="none"/></svg>
<div class="t" style="left:847px;top:412.69px;font-size:11px;color:#e8e8e8">Name</div>
<div class="a" style="left:951px;top:409px;width:49px;height:18px;background:#222;border:1px solid #5a5a5a"></div>
<div class="t" style="left:847px;top:435.69px;font-size:11px;color:#e8e8e8">Screen L...</div>
<div class="a" style="left:926px;top:432px;width:22px;height:18px;background:#333;border:1px solid #555"></div>
<div class="a" style="left:951px;top:432px;width:49px;height:18px;background:#2f2f2f;border:1px solid #5a5a5a"></div><div class="t" style="left:956px;top:436.19px;font-size:11px;color:#e8e8e8">Auto</div><svg style="left:985px;top:439px" width="9" height="5" viewBox="0 0 9 5"><path d="M0 0h9L4.5 5z" fill="#b0b0b0"/></svg>
<div class="t" style="left:847px;top:458.69px;font-size:11px;color:#e8e8e8">Network ...</div>
<div class="a" style="left:926px;top:455px;width:22px;height:18px;background:#333;border:1px solid #555"></div>
<div class="a" style="left:951px;top:455px;width:49px;height:18px;background:#2f2f2f;border:1px solid #5a5a5a"></div><div class="t" style="left:956px;top:459.19px;font-size:11px;color:#e8e8e8">True</div><svg style="left:985px;top:462px" width="9" height="5" viewBox="0 0 9 5"><path d="M0 0h9L4.5 5z" fill="#b0b0b0"/></svg>
<div class="t" style="left:847px;top:501.69px;font-size:11px;color:#e8e8e8">Renderin...</div>
<div class="a" style="left:916px;top:504px;width:4px;height:4px;border-radius:2px;background:#777"></div>
<div class="a" style="left:926px;top:498px;width:22px;height:18px;background:#333;border:1px solid #555"></div><svg style="left:935px;top:503px" width="6" height="9" viewBox="0 0 6 9"><path d="M0 0.5l5.5 4L0 8.5z" fill="#a8a8a8"/></svg>
<div class="t" style="left:955px;top:503.69px;font-size:11px;color:#e8e8e8">Renderir</div>
<svg style="left:830px;top:523px" width="14" height="14" viewBox="0 0 14 14"><rect x="0.5" y="0.5" width="13" height="13" fill="#353535" stroke="#505050"/><rect x="4" y="6" width="6" height="1" fill="#ddd"/><rect x="6.5" y="3.5" width="1" height="6" fill="#ddd"/></svg>
<div class="t" style="left:847px;top:524.69px;font-size:11px;color:#e8e8e8">Backgro...</div>
<div class="a" style="left:926px;top:521px;width:22px;height:18px;background:#333;border:1px solid #555"></div>
<div class="a" style="left:951px;top:521px;width:28px;height:18px;background:#222;border:1px solid #5a5a5a"></div>
<div class="t" style="left:955px;top:525.69px;font-size:11px;color:#e8e8e8">1 1</div>
<div class="a" style="left:981px;top:521px;width:18px;height:18px;background:#fff"></div>
<div class="t" style="left:847px;top:547.69px;font-size:11px;color:#e8e8e8">Backgro...</div>
<div class="a" style="left:926px;top:544px;width:22px;height:18px;background:#333;border:1px solid #555"></div>
<div class="a" style="left:951px;top:544px;width:49px;height:18px;background:#222;border:1px solid #5a5a5a"></div>
<div class="t" style="left:955px;top:548.69px;font-size:11px;color:#e8e8e8">1</div>
<div class="t" style="left:847px;top:570.69px;font-size:11px;color:#e8e8e8">UI Screen</div>
<div class="a" style="left:916px;top:573px;width:4px;height:4px;border-radius:2px;background:#777"></div>
<div class="a" style="left:926px;top:567px;width:22px;height:18px;background:#333;border:1px solid #555"></div><svg style="left:935px;top:572px" width="6" height="9" viewBox="0 0 6 9"><path d="M0 0.5l5.5 4L0 8.5z" fill="#a8a8a8"/></svg>
<div class="t" style="left:955px;top:572.69px;font-size:11px;color:#e8e8e8">Scene U</div>
<div class="t" style="left:847px;top:593.69px;font-size:11px;color:#e8e8e8">Mode</div>
<div class="a" style="left:926px;top:590px;width:22px;height:18px;background:#333;border:1px solid #555"></div>
<div class="a" style="left:951px;top:590px;width:49px;height:18px;background:#2f2f2f;border:1px solid #5a5a5a"></div><div class="t" style="left:956px;top:594.19px;font-size:11px;color:#e8e8e8">3D</div><svg style="left:985px;top:597px" width="9" height="5" viewBox="0 0 9 5"><path d="M0 0h9L4.5 5z" fill="#b0b0b0"/></svg>
<div class="t" style="left:847px;top:616.69px;font-size:11px;color:#e8e8e8">Screen ...</div>
<div class="a" style="left:926px;top:613px;width:22px;height:18px;background:#333;border:1px solid #555"></div>
<div class="a" style="left:951px;top:613px;width:49px;height:18px;background:#2f2f2f;border:1px solid #5a5a5a"></div><div class="t" style="left:956px;top:617.19px;font-size:11px;color:#e8e8e8">Un...</div><svg style="left:985px;top:620px" width="9" height="5" viewBox="0 0 9 5"><path d="M0 0h9L4.5 5z" fill="#b0b0b0"/></svg>
<div class="t" style="left:846px;top:639.69px;font-size:11px;color:#e8e8e8">Camera ...</div>
<div class="a" style="left:916px;top:642px;width:4px;height:4px;border-radius:2px;background:#777"></div>
<div class="a" style="left:926px;top:636px;width:22px;height:18px;background:#333;border:1px solid #555"></div><svg style="left:935px;top:641px" width="6" height="9" viewBox="0 0 6 9"><path d="M0 0.5l5.5 4L0 8.5z" fill="#a8a8a8"/></svg>
<div class="t" style="left:955px;top:641.69px;font-size:11px;color:#e8e8e8">Camera I</div>
<div class="a" style="left:833px;top:659px;width:92px;height:26px;background:#333;border:1px solid #5a5a5a"></div>
<div class="t" style="left:869px;top:667.11px;font-size:10.5px;color:#e8e8e8">Info</div>

<svg class="a" style="left:244px;top:82px" width="576" height="618" viewBox="0 0 576 618">
<defs><clipPath id="vc"><rect x="1" width="575" height="618"/></clipPath>
</defs>
<g clip-path="url(#vc)">
<rect width="576" height="618" fill="#e6e6e6"/>
<rect y="63" width="576" height="555" fill="#f8f8f8"/>
<linearGradient id="farg" x1="0" y1="0" x2="0" y2="1"><stop offset="0" stop-color="#e0e0e0"/><stop offset="1" stop-color="#e2e2e2"/></linearGradient><rect y="63" width="576" height="6.8" fill="url(#farg)"/>
<path d="M-63.8,693.5 4.9,694.4 38.2,616.0 -22.6,615.4ZM73.8,695.2 142.8,696.0 160.2,617.3 99.2,616.7ZM212.1,696.9 281.4,697.7 282.8,618.6 221.5,618.0ZM351.0,698.5 420.7,699.4 405.8,620.0 344.2,619.3ZM490.6,700.2 560.7,701.1 529.4,621.3 467.6,620.6ZM630.9,701.9 701.3,702.8 653.5,622.6 591.4,621.9Z" fill="#c8c8c8"/><path d="M-83.3,614.7 -22.6,615.4 10.1,553.4 -44.3,552.9ZM38.2,616.0 99.2,616.7 119.3,554.5 64.6,553.9ZM160.2,617.3 221.5,618.0 228.9,555.5 174.0,555.0ZM282.8,618.6 344.2,619.3 338.9,556.6 283.8,556.0ZM405.8,620.0 467.6,620.6 449.3,557.6 394.1,557.1ZM529.4,621.3 591.4,621.9 560.2,558.7 504.7,558.2ZM653.5,622.6 715.8,623.3 671.5,559.8 615.8,559.2Z" fill="#c8c8c8"/><path d="M-98.7,552.4 -44.3,552.9 -12.7,502.7 -62.0,502.2ZM10.1,553.4 64.6,553.9 86.1,503.5 36.7,503.1ZM119.3,554.5 174.0,555.0 185.2,504.4 135.6,504.0ZM228.9,555.5 283.8,556.0 284.7,505.3 234.9,504.8ZM338.9,556.6 394.1,557.1 384.5,506.1 334.6,505.7ZM449.3,557.6 504.7,558.2 484.7,507.0 434.6,506.6ZM560.2,558.7 615.8,559.2 585.2,507.9 534.9,507.4Z" fill="#c8c8c8"/><path d="M-111.1,501.8 -62.0,502.2 -31.5,460.7 -76.5,460.3ZM-12.7,502.7 36.7,503.1 58.7,461.4 13.5,461.0ZM86.1,503.5 135.6,504.0 149.1,462.1 103.9,461.8ZM185.2,504.4 234.9,504.8 239.9,462.9 194.5,462.5ZM284.7,505.3 334.6,505.7 331.0,463.6 285.4,463.2ZM384.5,506.1 434.6,506.6 422.3,464.3 376.6,463.9ZM484.7,507.0 534.9,507.4 514.0,465.0 468.1,464.7ZM585.2,507.9 635.6,508.3 605.9,465.8 559.9,465.4Z" fill="#c8c8c8"/><path d="M-31.5,460.7 13.5,461.0 35.6,426.0 -5.9,425.7ZM58.7,461.4 103.9,461.8 118.8,426.6 77.2,426.3ZM149.1,462.1 194.5,462.5 202.3,427.2 160.5,426.9ZM239.9,462.9 285.4,463.2 286.0,427.8 244.1,427.5ZM331.0,463.6 376.6,463.9 370.0,428.5 328.0,428.2ZM422.3,464.3 468.1,464.7 454.2,429.1 412.0,428.8ZM514.0,465.0 559.9,465.4 538.6,429.7 496.4,429.4ZM605.9,465.8 652.0,466.1 623.3,430.3 580.9,430.0Z" fill="#c8c8c8"/><path d="M-47.4,425.4 -5.9,425.7 15.9,395.8 -22.5,395.6ZM35.6,426.0 77.2,426.3 93.0,396.4 54.4,396.1ZM118.8,426.6 160.5,426.9 170.2,396.9 131.6,396.6ZM202.3,427.2 244.1,427.5 247.7,397.4 208.9,397.1ZM286.0,427.8 328.0,428.2 325.4,397.9 286.5,397.7ZM370.0,428.5 412.0,428.8 403.3,398.5 364.3,398.2ZM454.2,429.1 496.4,429.4 481.4,399.0 442.3,398.7ZM538.6,429.7 580.9,430.0 559.7,399.5 520.5,399.3ZM623.3,430.3 665.7,430.6 638.2,400.1 598.9,399.8Z" fill="#c8c8c8"/><path d="M-60.9,395.3 -22.5,395.6 -1.0,369.8 -36.8,369.6ZM15.9,395.8 54.4,396.1 70.7,370.3 34.8,370.0ZM93.0,396.4 131.6,396.6 142.6,370.7 106.6,370.5ZM170.2,396.9 208.9,397.1 214.7,371.2 178.6,370.9ZM247.7,397.4 286.5,397.7 287.0,371.6 250.8,371.4ZM325.4,397.9 364.3,398.2 359.4,372.1 323.2,371.9ZM403.3,398.5 442.3,398.7 432.0,372.6 395.7,372.3ZM481.4,399.0 520.5,399.3 504.8,373.0 468.4,372.8ZM559.7,399.5 598.9,399.8 577.8,373.5 541.3,373.3ZM638.2,400.1 677.5,400.4 651.0,374.0 614.4,373.7Z" fill="#c8c8c8"/><path d="M-72.6,369.3 -36.8,369.6 -15.8,347.1 -49.3,346.9ZM-1.0,369.8 34.8,370.0 51.3,347.5 17.7,347.3ZM70.7,370.3 106.6,370.5 118.5,347.9 84.9,347.7ZM142.6,370.7 178.6,370.9 185.9,348.3 152.2,348.1ZM214.7,371.2 250.8,371.4 253.5,348.7 219.7,348.5ZM287.0,371.6 323.2,371.9 321.2,349.1 287.3,348.9ZM359.4,372.1 395.7,372.3 389.1,349.5 355.1,349.3ZM432.0,372.6 468.4,372.8 457.1,350.0 423.1,349.8ZM504.8,373.0 541.3,373.3 525.3,350.4 491.2,350.2ZM577.8,373.5 614.4,373.7 593.7,350.8 559.5,350.6Z" fill="#c8c8c8"/><path d="M-82.7,346.7 -49.3,346.9 -28.8,327.2 -60.3,327.0ZM-15.8,347.1 17.7,347.3 34.2,327.5 2.7,327.4ZM51.3,347.5 84.9,347.7 97.4,327.9 65.8,327.7ZM118.5,347.9 152.2,348.1 160.7,328.3 129.0,328.1ZM185.9,348.3 219.7,348.5 224.1,328.6 192.4,328.4ZM253.5,348.7 287.3,348.9 287.7,329.0 255.9,328.8ZM321.2,349.1 355.1,349.3 351.4,329.3 319.5,329.2ZM389.1,349.5 423.1,349.8 415.2,329.7 383.3,329.5ZM457.1,350.0 491.2,350.2 479.2,330.1 447.2,329.9ZM525.3,350.4 559.5,350.6 543.4,330.4 511.3,330.2ZM593.7,350.8 627.9,351.0 607.6,330.8 575.5,330.6Z" fill="#c8c8c8"/><path d="M-28.8,327.2 2.7,327.4 19.1,309.8 -10.6,309.7ZM34.2,327.5 65.8,327.7 78.6,310.1 48.9,310.0ZM97.4,327.9 129.0,328.1 138.3,310.5 108.4,310.3ZM160.7,328.3 192.4,328.4 198.1,310.8 168.2,310.6ZM224.1,328.6 255.9,328.8 258.0,311.1 228.0,310.9ZM287.7,329.0 319.5,329.2 318.0,311.4 288.0,311.3ZM351.4,329.3 383.3,329.5 378.2,311.8 348.1,311.6ZM415.2,329.7 447.2,329.9 438.4,312.1 408.3,311.9ZM479.2,330.1 511.3,330.2 498.8,312.4 468.6,312.2ZM543.4,330.4 575.5,330.6 559.4,312.7 529.1,312.6ZM607.6,330.8 639.8,331.0 620.0,313.1 589.7,312.9Z" fill="#c8c8c8"/><path d="M-40.3,309.5 -10.6,309.7 5.6,294.0 -22.5,293.9ZM19.1,309.8 48.9,310.0 61.9,294.3 33.8,294.2ZM78.6,310.1 108.4,310.3 118.3,294.6 90.1,294.5ZM138.3,310.5 168.2,310.6 174.9,294.9 146.6,294.8ZM198.1,310.8 228.0,310.9 231.5,295.2 203.2,295.0ZM258.0,311.1 288.0,311.3 288.2,295.5 259.9,295.3ZM318.0,311.4 348.1,311.6 345.1,295.8 316.7,295.6ZM378.2,311.8 408.3,311.9 402.1,296.1 373.6,295.9ZM438.4,312.1 468.6,312.2 459.2,296.3 430.6,296.2ZM498.8,312.4 529.1,312.6 516.3,296.6 487.7,296.5ZM559.4,312.7 589.7,312.9 573.7,296.9 545.0,296.8ZM620.0,313.1 650.4,313.2 631.1,297.2 602.3,297.1Z" fill="#c8c8c8"/><path d="M-50.6,293.8 -22.5,293.9 -6.5,279.9 -33.2,279.7ZM5.6,294.0 33.8,294.2 46.9,280.1 20.2,280.0ZM61.9,294.3 90.1,294.5 100.4,280.4 73.7,280.2ZM118.3,294.6 146.6,294.8 154.0,280.6 127.2,280.5ZM174.9,294.9 203.2,295.0 207.7,280.9 180.9,280.8ZM231.5,295.2 259.9,295.3 261.5,281.2 234.6,281.0ZM288.2,295.5 316.7,295.6 315.4,281.4 288.5,281.3ZM345.1,295.8 373.6,295.9 369.5,281.7 342.4,281.6ZM402.1,296.1 430.6,296.2 423.6,281.9 396.5,281.8ZM459.2,296.3 487.7,296.5 477.8,282.2 450.6,282.1ZM516.3,296.6 545.0,296.8 532.1,282.5 504.9,282.3ZM573.7,296.9 602.3,297.1 586.5,282.7 559.3,282.6Z" fill="#c8c8c8"/><path d="M-59.8,279.6 -33.2,279.7 -17.4,267.1 -42.8,266.9ZM-6.5,279.9 20.2,280.0 33.4,267.3 8.0,267.2ZM46.9,280.1 73.7,280.2 84.3,267.5 58.8,267.4ZM100.4,280.4 127.2,280.5 135.2,267.8 109.7,267.7ZM154.0,280.6 180.9,280.8 186.3,268.0 160.8,267.9ZM207.7,280.9 234.6,281.0 237.5,268.2 211.9,268.1ZM261.5,281.2 288.5,281.3 288.7,268.5 263.1,268.4ZM315.4,281.4 342.4,281.6 340.0,268.7 314.4,268.6ZM369.5,281.7 396.5,281.8 391.5,269.0 365.7,268.8ZM423.6,281.9 450.6,282.1 443.0,269.2 417.2,269.1ZM477.8,282.2 504.9,282.3 494.6,269.4 468.8,269.3ZM532.1,282.5 559.3,282.6 546.3,269.7 520.4,269.6ZM586.5,282.7 613.7,282.9 598.1,269.9 572.2,269.8Z" fill="#c8c8c8"/><path d="M-68.1,266.8 -42.8,266.9 -27.3,255.5 -51.5,255.4ZM-17.4,267.1 8.0,267.2 21.1,255.7 -3.1,255.6ZM33.4,267.3 58.8,267.4 69.6,255.9 45.3,255.8ZM84.3,267.5 109.7,267.7 118.2,256.1 93.9,256.0ZM135.2,267.8 160.8,267.9 166.9,256.3 142.5,256.2ZM186.3,268.0 211.9,268.1 215.6,256.5 191.2,256.4ZM237.5,268.2 263.1,268.4 264.4,256.8 240.0,256.6ZM288.7,268.5 314.4,268.6 313.4,257.0 288.9,256.9ZM340.0,268.7 365.7,268.8 362.4,257.2 337.9,257.1ZM391.5,269.0 417.2,269.1 411.4,257.4 386.9,257.3ZM443.0,269.2 468.8,269.3 460.6,257.6 436.0,257.5ZM494.6,269.4 520.4,269.6 509.9,257.8 485.2,257.7ZM546.3,269.7 572.2,269.8 559.2,258.1 534.5,257.9ZM598.1,269.9 624.0,270.0 608.6,258.3 583.9,258.2Z" fill="#c8c8c8"/><path d="M-27.3,255.5 -3.1,255.6 9.9,245.1 -13.2,245.0ZM21.1,255.7 45.3,255.8 56.3,245.3 33.1,245.2ZM69.6,255.9 93.9,256.0 102.7,245.5 79.5,245.4ZM118.2,256.1 142.5,256.2 149.2,245.7 125.9,245.6ZM166.9,256.3 191.2,256.4 195.7,245.9 172.4,245.8ZM215.6,256.5 240.0,256.6 242.4,246.1 219.0,246.0ZM264.4,256.8 288.9,256.9 289.1,246.3 265.7,246.2ZM313.4,257.0 337.9,257.1 335.9,246.5 312.5,246.4ZM362.4,257.2 386.9,257.3 382.7,246.7 359.3,246.6ZM411.4,257.4 436.0,257.5 429.7,246.9 406.2,246.8ZM460.6,257.6 485.2,257.7 476.7,247.1 453.2,247.0ZM509.9,257.8 534.5,257.9 523.8,247.3 500.2,247.2ZM559.2,258.1 583.9,258.2 570.9,247.5 547.4,247.4ZM608.6,258.3 633.3,258.4 618.2,247.7 594.6,247.6Z" fill="#c8c8c8"/><path d="M-36.3,244.9 -13.2,245.0 -0.3,235.4 -22.5,235.3ZM9.9,245.1 33.1,245.2 44.0,235.6 21.8,235.5ZM56.3,245.3 79.5,245.4 88.5,235.8 66.2,235.7ZM102.7,245.5 125.9,245.6 133.0,235.9 110.7,235.8ZM149.2,245.7 172.4,245.8 177.5,236.1 155.2,236.0ZM195.7,245.9 219.0,246.0 222.2,236.3 199.8,236.2ZM242.4,246.1 265.7,246.2 266.9,236.5 244.5,236.4ZM289.1,246.3 312.5,246.4 311.6,236.7 289.2,236.6ZM335.9,246.5 359.3,246.6 356.5,236.8 334.0,236.8ZM382.7,246.7 406.2,246.8 401.4,237.0 378.9,236.9ZM429.7,246.9 453.2,247.0 446.4,237.2 423.9,237.1ZM476.7,247.1 500.2,247.2 491.4,237.4 468.9,237.3ZM523.8,247.3 547.4,247.4 536.5,237.6 514.0,237.5ZM570.9,247.5 594.6,247.6 581.7,237.8 559.1,237.7ZM618.2,247.7 641.8,247.8 627.0,237.9 604.3,237.9Z" fill="#c8c8c8"/><path d="M-44.6,235.2 -22.5,235.3 -9.7,226.5 -31.0,226.4ZM-0.3,235.4 21.8,235.5 32.8,226.7 11.5,226.6ZM44.0,235.6 66.2,235.7 75.4,226.8 54.1,226.7ZM88.5,235.8 110.7,235.8 118.1,227.0 96.7,226.9ZM133.0,235.9 155.2,236.0 160.8,227.2 139.4,227.1ZM177.5,236.1 199.8,236.2 203.6,227.3 182.2,227.2ZM222.2,236.3 244.5,236.4 246.5,227.5 225.0,227.4ZM266.9,236.5 289.2,236.6 289.4,227.7 267.9,227.6ZM311.6,236.7 334.0,236.8 332.4,227.8 310.9,227.7ZM356.5,236.8 378.9,236.9 375.4,228.0 353.9,227.9ZM401.4,237.0 423.9,237.1 418.5,228.2 397.0,228.1ZM446.4,237.2 468.9,237.3 461.7,228.3 440.1,228.2ZM491.4,237.4 514.0,237.5 504.9,228.5 483.3,228.4ZM536.5,237.6 559.1,237.7 548.3,228.7 526.6,228.6ZM581.7,237.8 604.3,237.9 591.6,228.8 569.9,228.8Z" fill="#c8c8c8"/><path d="M-52.2,226.3 -31.0,226.4 -18.4,218.3 -38.8,218.2ZM-9.7,226.5 11.5,226.6 22.5,218.4 2.0,218.4ZM32.8,226.7 54.1,226.7 63.4,218.6 42.9,218.5ZM75.4,226.8 96.7,226.9 104.4,218.7 83.9,218.7ZM118.1,227.0 139.4,227.1 145.4,218.9 124.9,218.8ZM160.8,227.2 182.2,227.2 186.5,219.1 166.0,219.0ZM203.6,227.3 225.0,227.4 227.7,219.2 207.1,219.1ZM246.5,227.5 267.9,227.6 268.9,219.4 248.3,219.3ZM289.4,227.7 310.9,227.7 310.2,219.5 289.5,219.4ZM332.4,227.8 353.9,227.9 351.5,219.7 330.8,219.6ZM375.4,228.0 397.0,228.1 392.9,219.8 372.2,219.8ZM418.5,228.2 440.1,228.2 434.3,220.0 413.6,219.9ZM461.7,228.3 483.3,228.4 475.9,220.2 455.1,220.1ZM504.9,228.5 526.6,228.6 517.4,220.3 496.6,220.2ZM548.3,228.7 569.9,228.8 559.1,220.5 538.2,220.4ZM591.6,228.8 613.3,228.9 600.7,220.6 579.9,220.5Z" fill="#c8c8c8"/><path d="M-18.4,218.3 2.0,218.4 12.9,210.8 -6.7,210.8ZM22.5,218.4 42.9,218.5 52.3,211.0 32.6,210.9ZM63.4,218.6 83.9,218.7 91.7,211.1 72.0,211.1ZM104.4,218.7 124.9,218.8 131.2,211.3 111.4,211.2ZM145.4,218.9 166.0,219.0 170.7,211.4 151.0,211.3ZM186.5,219.1 207.1,219.1 210.3,211.6 190.5,211.5ZM227.7,219.2 248.3,219.3 250.0,211.7 230.1,211.6ZM268.9,219.4 289.5,219.4 289.7,211.9 269.8,211.8ZM310.2,219.5 330.8,219.6 329.4,212.0 309.5,211.9ZM351.5,219.7 372.2,219.8 369.2,212.1 349.3,212.1ZM392.9,219.8 413.6,219.9 409.1,212.3 389.1,212.2ZM434.3,220.0 455.1,220.1 449.0,212.4 429.0,212.4ZM475.9,220.2 496.6,220.2 489.0,212.6 469.0,212.5ZM517.4,220.3 538.2,220.4 529.0,212.7 509.0,212.7ZM559.1,220.5 579.9,220.5 569.1,212.9 549.0,212.8ZM600.7,220.6 621.6,220.7 609.2,213.0 589.1,212.9Z" fill="#c8c8c8"/><path d="M-26.4,210.7 -6.7,210.8 4.1,203.8 -14.9,203.7ZM12.9,210.8 32.6,210.9 42.0,203.9 23.0,203.9ZM52.3,211.0 72.0,211.1 80.0,204.1 61.0,204.0ZM91.7,211.1 111.4,211.2 118.0,204.2 99.0,204.1ZM131.2,211.3 151.0,211.3 156.1,204.3 137.0,204.3ZM170.7,211.4 190.5,211.5 194.2,204.5 175.1,204.4ZM210.3,211.6 230.1,211.6 232.4,204.6 213.3,204.5ZM250.0,211.7 269.8,211.8 270.6,204.7 251.5,204.7ZM289.7,211.9 309.5,211.9 308.9,204.9 289.8,204.8ZM329.4,212.0 349.3,212.1 347.3,205.0 328.1,204.9ZM369.2,212.1 389.1,212.2 385.6,205.1 366.4,205.1ZM409.1,212.3 429.0,212.4 424.1,205.3 404.9,205.2ZM449.0,212.4 469.0,212.5 462.6,205.4 443.3,205.3ZM489.0,212.6 509.0,212.7 501.1,205.6 481.8,205.5ZM529.0,212.7 549.0,212.8 539.7,205.7 520.4,205.6ZM569.1,212.9 589.1,212.9 578.3,205.8 559.0,205.8ZM609.2,213.0 629.3,213.1 617.0,206.0 597.7,205.9Z" fill="#c8c8c8"/><path d="M-33.8,203.7 -14.9,203.7 -4.2,197.3 -22.5,197.2ZM4.1,203.8 23.0,203.9 32.4,197.4 14.1,197.3ZM42.0,203.9 61.0,204.0 69.1,197.5 50.7,197.4ZM80.0,204.1 99.0,204.1 105.7,197.6 87.4,197.6ZM118.0,204.2 137.0,204.3 142.5,197.8 124.1,197.7ZM156.1,204.3 175.1,204.4 179.3,197.9 160.9,197.8ZM194.2,204.5 213.3,204.5 216.1,198.0 197.7,197.9ZM232.4,204.6 251.5,204.7 253.0,198.1 234.5,198.1ZM270.6,204.7 289.8,204.8 289.9,198.3 271.4,198.2ZM308.9,204.9 328.1,204.9 326.9,198.4 308.4,198.3ZM347.3,205.0 366.4,205.1 363.9,198.5 345.4,198.4ZM385.6,205.1 404.9,205.2 400.9,198.6 382.4,198.6ZM424.1,205.3 443.3,205.3 438.0,198.8 419.5,198.7ZM462.6,205.4 481.8,205.5 475.2,198.9 456.6,198.8ZM501.1,205.6 520.4,205.6 512.4,199.0 493.8,198.9ZM539.7,205.7 559.0,205.8 549.7,199.1 531.0,199.1ZM578.3,205.8 597.7,205.9 587.0,199.3 568.3,199.2Z" fill="#c8c8c8"/><path d="M-40.7,197.1 -22.5,197.2 -11.9,191.1 -29.5,191.1ZM-4.2,197.3 14.1,197.3 23.5,191.3 5.8,191.2ZM32.4,197.4 50.7,197.4 58.9,191.4 41.2,191.3ZM69.1,197.5 87.4,197.6 94.3,191.5 76.6,191.4ZM105.7,197.6 124.1,197.7 129.8,191.6 112.0,191.6ZM142.5,197.8 160.9,197.8 165.3,191.7 147.5,191.7ZM179.3,197.9 197.7,197.9 200.9,191.9 183.1,191.8ZM216.1,198.0 234.5,198.1 236.5,192.0 218.7,191.9ZM253.0,198.1 271.4,198.2 272.1,192.1 254.3,192.0ZM289.9,198.3 308.4,198.3 307.8,192.2 290.0,192.1ZM326.9,198.4 345.4,198.4 343.6,192.3 325.7,192.3ZM363.9,198.5 382.4,198.6 379.4,192.4 361.5,192.4ZM400.9,198.6 419.5,198.7 415.2,192.6 397.3,192.5ZM438.0,198.8 456.6,198.8 451.1,192.7 433.1,192.6ZM475.2,198.9 493.8,198.9 487.0,192.8 469.0,192.7ZM512.4,199.0 531.0,199.1 523.0,192.9 505.0,192.9ZM549.7,199.1 568.3,199.2 559.0,193.0 541.0,193.0ZM587.0,199.3 605.6,199.3 595.0,193.2 577.0,193.1Z" fill="#c8c8c8"/><path d="M-47.2,191.0 -29.5,191.1 -19.0,185.4 -36.1,185.4ZM-11.9,191.1 5.8,191.2 15.1,185.6 -2.0,185.5ZM23.5,191.3 41.2,191.3 49.4,185.7 32.2,185.6ZM58.9,191.4 76.6,191.4 83.6,185.8 66.5,185.7ZM94.3,191.5 112.0,191.6 117.9,185.9 100.8,185.8ZM129.8,191.6 147.5,191.7 152.3,186.0 135.1,185.9ZM165.3,191.7 183.1,191.8 186.7,186.1 169.5,186.0ZM200.9,191.9 218.7,191.9 221.1,186.2 203.9,186.2ZM236.5,192.0 254.3,192.0 255.6,186.3 238.3,186.3ZM272.1,192.1 290.0,192.1 290.1,186.4 272.8,186.4ZM307.8,192.2 325.7,192.3 324.6,186.5 307.4,186.5ZM343.6,192.3 361.5,192.4 359.2,186.7 341.9,186.6ZM379.4,192.4 397.3,192.5 393.9,186.8 376.5,186.7ZM415.2,192.6 433.1,192.6 428.5,186.9 411.2,186.8ZM451.1,192.7 469.0,192.7 463.3,187.0 445.9,186.9ZM487.0,192.8 505.0,192.9 498.0,187.1 480.6,187.0ZM523.0,192.9 541.0,193.0 532.8,187.2 515.4,187.2ZM559.0,193.0 577.0,193.1 567.7,187.3 550.2,187.3ZM595.0,193.2 613.1,193.2 602.5,187.4 585.1,187.4Z" fill="#c8c8c8"/><path d="M-19.0,185.4 -2.0,185.5 7.3,180.2 -9.2,180.2ZM15.1,185.6 32.2,185.6 40.5,180.3 23.9,180.3ZM49.4,185.7 66.5,185.7 73.6,180.4 57.0,180.4ZM83.6,185.8 100.8,185.8 106.8,180.5 90.2,180.5ZM117.9,185.9 135.1,185.9 140.1,180.6 123.5,180.6ZM152.3,186.0 169.5,186.0 173.4,180.7 156.7,180.7ZM186.7,186.1 203.9,186.2 206.7,180.8 190.0,180.8ZM221.1,186.2 238.3,186.3 240.1,180.9 223.4,180.9ZM255.6,186.3 272.8,186.4 273.5,181.0 256.8,181.0ZM290.1,186.4 307.4,186.5 306.9,181.1 290.2,181.1ZM324.6,186.5 341.9,186.6 340.4,181.2 323.6,181.2ZM359.2,186.7 376.5,186.7 373.9,181.3 357.1,181.3ZM393.9,186.8 411.2,186.8 407.4,181.4 390.7,181.4ZM428.5,186.9 445.9,186.9 441.0,181.6 424.2,181.5ZM463.3,187.0 480.6,187.0 474.7,181.7 457.9,181.6ZM498.0,187.1 515.4,187.2 508.3,181.8 491.5,181.7ZM532.8,187.2 550.2,187.3 542.1,181.9 525.2,181.8ZM567.7,187.3 585.1,187.4 575.8,182.0 558.9,181.9ZM602.5,187.4 620.0,187.5 609.6,182.1 592.7,182.0Z" fill="#c8c8c8"/><path d="M-25.8,180.1 -9.2,180.2 -0.0,175.2 -16.0,175.1ZM7.3,180.2 23.9,180.3 32.1,175.3 16.0,175.2ZM40.5,180.3 57.0,180.4 64.2,175.4 48.2,175.3ZM73.6,180.4 90.2,180.5 96.4,175.5 80.3,175.4ZM106.8,180.5 123.5,180.6 128.6,175.6 112.5,175.5ZM140.1,180.6 156.7,180.7 160.9,175.7 144.8,175.6ZM173.4,180.7 190.0,180.8 193.2,175.8 177.0,175.7ZM206.7,180.8 223.4,180.9 225.5,175.9 209.3,175.8ZM240.1,180.9 256.8,181.0 257.9,176.0 241.7,175.9ZM273.5,181.0 290.2,181.1 290.3,176.1 274.1,176.0ZM306.9,181.1 323.6,181.2 322.7,176.2 306.5,176.1ZM340.4,181.2 357.1,181.3 355.2,176.3 338.9,176.2ZM373.9,181.3 390.7,181.4 387.7,176.4 371.4,176.3ZM407.4,181.4 424.2,181.5 420.2,176.5 403.9,176.4ZM441.0,181.6 457.9,181.6 452.8,176.6 436.5,176.5ZM474.7,181.7 491.5,181.7 485.4,176.7 469.1,176.6ZM508.3,181.8 525.2,181.8 518.0,176.8 501.7,176.7ZM542.1,181.9 558.9,181.9 550.7,176.9 534.4,176.8ZM575.8,182.0 592.7,182.0 583.5,177.0 567.1,176.9Z" fill="#c8c8c8"/><path d="M-32.1,175.1 -16.0,175.1 -6.9,170.5 -22.5,170.4ZM-0.0,175.2 16.0,175.2 24.2,170.6 8.7,170.5ZM32.1,175.3 48.2,175.3 55.4,170.7 39.8,170.6ZM64.2,175.4 80.3,175.4 86.6,170.7 71.0,170.7ZM96.4,175.5 112.5,175.5 117.9,170.8 102.3,170.8ZM128.6,175.6 144.8,175.6 149.2,170.9 133.5,170.9ZM160.9,175.7 177.0,175.7 180.5,171.0 164.8,171.0ZM193.2,175.8 209.3,175.8 211.8,171.1 196.1,171.1ZM225.5,175.9 241.7,175.9 243.2,171.2 227.5,171.2ZM257.9,176.0 274.1,176.0 274.6,171.3 258.9,171.2ZM290.3,176.1 306.5,176.1 306.1,171.4 290.3,171.3ZM322.7,176.2 338.9,176.2 337.5,171.5 321.8,171.4ZM355.2,176.3 371.4,176.3 369.1,171.6 353.3,171.5ZM387.7,176.4 403.9,176.4 400.6,171.7 384.8,171.6ZM420.2,176.5 436.5,176.5 432.2,171.8 416.4,171.7ZM452.8,176.6 469.1,176.6 463.8,171.9 448.0,171.8ZM485.4,176.7 501.7,176.7 495.5,171.9 479.7,171.9ZM518.0,176.8 534.4,176.8 527.2,172.0 511.3,172.0ZM550.7,176.9 567.1,176.9 558.9,172.1 543.0,172.1ZM583.5,177.0 599.8,177.0 590.7,172.2 574.8,172.2Z" fill="#c8c8c8"/><path d="M-38.0,170.4 -22.5,170.4 -13.4,166.0 -28.5,166.0ZM-6.9,170.5 8.7,170.5 16.8,166.1 1.7,166.1ZM24.2,170.6 39.8,170.6 47.1,166.2 32.0,166.2ZM55.4,170.7 71.0,170.7 77.4,166.3 62.3,166.2ZM86.6,170.7 102.3,170.8 107.7,166.4 92.6,166.3ZM117.9,170.8 133.5,170.9 138.1,166.5 122.9,166.4ZM149.2,170.9 164.8,171.0 168.5,166.5 153.3,166.5ZM180.5,171.0 196.1,171.1 198.9,166.6 183.7,166.6ZM211.8,171.1 227.5,171.2 229.4,166.7 214.2,166.7ZM243.2,171.2 258.9,171.2 259.9,166.8 244.6,166.8ZM274.6,171.3 290.3,171.3 290.4,166.9 275.1,166.8ZM306.1,171.4 321.8,171.4 321.0,167.0 305.7,166.9ZM337.5,171.5 353.3,171.5 351.6,167.1 336.3,167.0ZM369.1,171.6 384.8,171.6 382.2,167.2 366.9,167.1ZM400.6,171.7 416.4,171.7 412.8,167.2 397.5,167.2ZM432.2,171.8 448.0,171.8 443.5,167.3 428.2,167.3ZM463.8,171.9 479.7,171.9 474.2,167.4 458.9,167.4ZM495.5,171.9 511.3,172.0 505.0,167.5 489.6,167.5ZM527.2,172.0 543.0,172.1 535.8,167.6 520.4,167.6ZM558.9,172.1 574.8,172.2 566.6,167.7 551.2,167.6ZM590.7,172.2 606.6,172.3 597.4,167.8 582.0,167.7Z" fill="#c8c8c8"/><path d="M-13.4,166.0 1.7,166.1 9.9,161.9 -4.8,161.9ZM16.8,166.1 32.0,166.2 39.3,162.0 24.6,162.0ZM47.1,166.2 62.3,166.2 68.7,162.1 54.0,162.0ZM77.4,166.3 92.6,166.3 98.2,162.2 83.4,162.1ZM107.7,166.4 122.9,166.4 127.7,162.2 112.9,162.2ZM138.1,166.5 153.3,166.5 157.2,162.3 142.4,162.3ZM168.5,166.5 183.7,166.6 186.8,162.4 172.0,162.4ZM198.9,166.6 214.2,166.7 216.4,162.5 201.6,162.4ZM229.4,166.7 244.6,166.8 246.0,162.6 231.2,162.5ZM259.9,166.8 275.1,166.8 275.6,162.7 260.8,162.6ZM290.4,166.9 305.7,166.9 305.3,162.7 290.5,162.7ZM321.0,167.0 336.3,167.0 335.0,162.8 320.2,162.8ZM351.6,167.1 366.9,167.1 364.8,162.9 349.9,162.9ZM382.2,167.2 397.5,167.2 394.6,163.0 379.7,162.9ZM412.8,167.2 428.2,167.3 424.4,163.1 409.5,163.0ZM443.5,167.3 458.9,167.4 454.2,163.1 439.3,163.1ZM474.2,167.4 489.6,167.5 484.1,163.2 469.1,163.2ZM505.0,167.5 520.4,167.6 514.0,163.3 499.0,163.3ZM535.8,167.6 551.2,167.6 543.9,163.4 528.9,163.4ZM566.6,167.7 582.0,167.7 573.9,163.5 558.9,163.4ZM597.4,167.8 612.9,167.8 603.8,163.6 588.8,163.5Z" fill="#c8c8c8"/><path d="M-19.5,161.8 -4.8,161.9 3.3,157.9 -11.0,157.9ZM9.9,161.9 24.6,162.0 31.9,158.0 17.6,158.0ZM39.3,162.0 54.0,162.0 60.5,158.1 46.2,158.1ZM68.7,162.1 83.4,162.1 89.1,158.2 74.8,158.1ZM98.2,162.2 112.9,162.2 117.8,158.3 103.5,158.2ZM127.7,162.2 142.4,162.3 146.5,158.3 132.2,158.3ZM157.2,162.3 172.0,162.4 175.3,158.4 160.9,158.4ZM186.8,162.4 201.6,162.4 204.1,158.5 189.7,158.4ZM216.4,162.5 231.2,162.5 232.9,158.6 218.5,158.5ZM246.0,162.6 260.8,162.6 261.7,158.6 247.3,158.6ZM275.6,162.7 290.5,162.7 290.6,158.7 276.1,158.7ZM305.3,162.7 320.2,162.8 319.4,158.8 305.0,158.8ZM335.0,162.8 349.9,162.9 348.4,158.9 333.9,158.8ZM364.8,162.9 379.7,162.9 377.3,159.0 362.8,158.9ZM394.6,163.0 409.5,163.0 406.3,159.0 391.8,159.0ZM424.4,163.1 439.3,163.1 435.3,159.1 420.8,159.1ZM454.2,163.1 469.1,163.2 464.3,159.2 449.8,159.2ZM484.1,163.2 499.0,163.3 493.4,159.3 478.8,159.2ZM514.0,163.3 528.9,163.4 522.5,159.4 507.9,159.3ZM543.9,163.4 558.9,163.4 551.6,159.4 537.0,159.4ZM573.9,163.5 588.8,163.5 580.7,159.5 566.1,159.5ZM603.8,163.6 618.8,163.6 609.9,159.6 595.3,159.6Z" fill="#c8c8c8"/><path d="M-25.3,157.9 -11.0,157.9 -3.0,154.2 -16.9,154.1ZM3.3,157.9 17.6,158.0 24.8,154.3 10.9,154.2ZM31.9,158.0 46.2,158.1 52.7,154.3 38.8,154.3ZM60.5,158.1 74.8,158.1 80.6,154.4 66.6,154.4ZM89.1,158.2 103.5,158.2 108.5,154.5 94.6,154.4ZM117.8,158.3 132.2,158.3 136.5,154.6 122.5,154.5ZM146.5,158.3 160.9,158.4 164.4,154.6 150.4,154.6ZM175.3,158.4 189.7,158.4 192.4,154.7 178.4,154.7ZM204.1,158.5 218.5,158.5 220.4,154.8 206.4,154.7ZM232.9,158.6 247.3,158.6 248.5,154.9 234.5,154.8ZM261.7,158.6 276.1,158.7 276.6,154.9 262.5,154.9ZM290.6,158.7 305.0,158.8 304.7,155.0 290.6,155.0ZM319.4,158.8 333.9,158.8 332.8,155.1 318.7,155.0ZM348.4,158.9 362.8,158.9 361.0,155.2 346.9,155.1ZM377.3,159.0 391.8,159.0 389.1,155.2 375.0,155.2ZM406.3,159.0 420.8,159.1 417.4,155.3 403.3,155.3ZM435.3,159.1 449.8,159.2 445.6,155.4 431.5,155.3ZM464.3,159.2 478.8,159.2 473.9,155.5 459.7,155.4ZM493.4,159.3 507.9,159.3 502.2,155.5 488.0,155.5ZM522.5,159.4 537.0,159.4 530.5,155.6 516.3,155.6ZM551.6,159.4 566.1,159.5 558.8,155.7 544.7,155.6ZM580.7,159.5 595.3,159.6 587.2,155.8 573.0,155.7Z" fill="#c8c8c8"/><path d="M-30.8,154.1 -16.9,154.1 -8.9,150.6 -22.4,150.6ZM-3.0,154.2 10.9,154.2 18.2,150.7 4.6,150.7ZM24.8,154.3 38.8,154.3 45.3,150.8 31.8,150.7ZM52.7,154.3 66.6,154.4 72.5,150.8 58.9,150.8ZM80.6,154.4 94.6,154.4 99.7,150.9 86.1,150.9ZM108.5,154.5 122.5,154.5 126.9,151.0 113.3,150.9ZM136.5,154.6 150.4,154.6 154.1,151.0 140.5,151.0ZM164.4,154.6 178.4,154.7 181.4,151.1 167.7,151.1ZM192.4,154.7 206.4,154.7 208.7,151.2 195.0,151.2ZM220.4,154.8 234.5,154.8 236.0,151.3 222.3,151.2ZM248.5,154.9 262.5,154.9 263.3,151.3 249.6,151.3ZM276.6,154.9 290.6,155.0 290.7,151.4 277.0,151.4ZM304.7,155.0 318.7,155.0 318.1,151.5 304.4,151.4ZM332.8,155.1 346.9,155.1 345.5,151.5 331.8,151.5ZM361.0,155.2 375.0,155.2 372.9,151.6 359.2,151.6ZM389.1,155.2 403.3,155.3 400.4,151.7 386.7,151.6ZM417.4,155.3 431.5,155.3 427.9,151.8 414.1,151.7ZM445.6,155.4 459.7,155.4 455.4,151.8 441.6,151.8ZM473.9,155.5 488.0,155.5 482.9,151.9 469.2,151.9ZM502.2,155.5 516.3,155.6 510.5,152.0 496.7,151.9ZM530.5,155.6 544.7,155.6 538.1,152.0 524.3,152.0ZM558.8,155.7 573.0,155.7 565.7,152.1 551.9,152.1ZM587.2,155.8 601.4,155.8 593.4,152.2 579.6,152.1Z" fill="#c8c8c8"/><path d="M-36.0,150.6 -22.4,150.6 -14.5,147.2 -27.7,147.2ZM-8.9,150.6 4.6,150.7 11.9,147.3 -1.3,147.3ZM18.2,150.7 31.8,150.7 38.3,147.4 25.1,147.3ZM45.3,150.8 58.9,150.8 64.8,147.4 51.6,147.4ZM72.5,150.8 86.1,150.9 91.3,147.5 78.0,147.5ZM99.7,150.9 113.3,150.9 117.8,147.6 104.5,147.5ZM126.9,151.0 140.5,151.0 144.3,147.6 131.1,147.6ZM154.1,151.0 167.7,151.1 170.9,147.7 157.6,147.7ZM181.4,151.1 195.0,151.2 197.5,147.8 184.2,147.7ZM208.7,151.2 222.3,151.2 224.1,147.8 210.8,147.8ZM236.0,151.3 249.6,151.3 250.7,147.9 237.4,147.9ZM263.3,151.3 277.0,151.4 277.4,148.0 264.1,147.9ZM290.7,151.4 304.4,151.4 304.1,148.0 290.7,148.0ZM318.1,151.5 331.8,151.5 330.8,148.1 317.4,148.1ZM345.5,151.5 359.2,151.6 357.5,148.2 344.2,148.2ZM372.9,151.6 386.7,151.6 384.3,148.3 370.9,148.2ZM400.4,151.7 414.1,151.7 411.1,148.3 397.7,148.3ZM427.9,151.8 441.6,151.8 437.9,148.4 424.5,148.4ZM455.4,151.8 469.2,151.9 464.7,148.5 451.3,148.4ZM482.9,151.9 496.7,151.9 491.6,148.5 478.1,148.5ZM510.5,152.0 524.3,152.0 518.4,148.6 505.0,148.6ZM538.1,152.0 551.9,152.1 545.4,148.7 531.9,148.6ZM565.7,152.1 579.6,152.1 572.3,148.7 558.8,148.7ZM593.4,152.2 607.2,152.2 599.2,148.8 585.8,148.8Z" fill="#c8c8c8"/><path d="M-14.5,147.2 -1.3,147.3 5.9,144.1 -7.0,144.1ZM11.9,147.3 25.1,147.3 31.7,144.2 18.8,144.1ZM38.3,147.4 51.6,147.4 57.5,144.2 44.6,144.2ZM64.8,147.4 78.0,147.5 83.3,144.3 70.4,144.3ZM91.3,147.5 104.5,147.5 109.2,144.3 96.2,144.3ZM117.8,147.6 131.1,147.6 135.0,144.4 122.1,144.4ZM144.3,147.6 157.6,147.7 160.9,144.5 148.0,144.4ZM170.9,147.7 184.2,147.7 186.9,144.5 173.9,144.5ZM197.5,147.8 210.8,147.8 212.8,144.6 199.8,144.6ZM224.1,147.8 237.4,147.9 238.8,144.7 225.8,144.6ZM250.7,147.9 264.1,147.9 264.8,144.7 251.8,144.7ZM277.4,148.0 290.7,148.0 290.8,144.8 277.8,144.8ZM304.1,148.0 317.4,148.1 316.8,144.9 303.8,144.8ZM330.8,148.1 344.2,148.2 342.9,144.9 329.9,144.9ZM357.5,148.2 370.9,148.2 369.0,145.0 355.9,145.0ZM384.3,148.3 397.7,148.3 395.1,145.1 382.0,145.0ZM411.1,148.3 424.5,148.4 421.2,145.1 408.1,145.1ZM437.9,148.4 451.3,148.4 447.4,145.2 434.3,145.2ZM464.7,148.5 478.1,148.5 473.6,145.3 460.5,145.2ZM491.6,148.5 505.0,148.6 499.8,145.3 486.7,145.3ZM518.4,148.6 531.9,148.6 526.0,145.4 512.9,145.3ZM545.4,148.7 558.8,148.7 552.2,145.4 539.1,145.4ZM572.3,148.7 585.8,148.8 578.5,145.5 565.4,145.5ZM599.2,148.8 612.7,148.8 604.8,145.6 591.7,145.5Z" fill="#c8c8c8"/><path d="M-19.9,144.0 -7.0,144.1 0.2,141.0 -12.4,141.0ZM5.9,144.1 18.8,144.1 25.3,141.1 12.8,141.1ZM31.7,144.2 44.6,144.2 50.5,141.2 37.9,141.1ZM57.5,144.2 70.4,144.3 75.7,141.2 63.1,141.2ZM83.3,144.3 96.2,144.3 100.9,141.3 88.3,141.2ZM109.2,144.3 122.1,144.4 126.2,141.3 113.6,141.3ZM135.0,144.4 148.0,144.4 151.5,141.4 138.8,141.4ZM160.9,144.5 173.9,144.5 176.8,141.5 164.1,141.4ZM186.9,144.5 199.8,144.6 202.1,141.5 189.4,141.5ZM212.8,144.6 225.8,144.6 227.4,141.6 214.7,141.6ZM238.8,144.7 251.8,144.7 252.8,141.6 240.1,141.6ZM264.8,144.7 277.8,144.8 278.1,141.7 265.4,141.7ZM290.8,144.8 303.8,144.8 303.5,141.8 290.8,141.7ZM316.8,144.9 329.9,144.9 329.0,141.8 316.3,141.8ZM342.9,144.9 355.9,145.0 354.4,141.9 341.7,141.9ZM369.0,145.0 382.0,145.0 379.9,142.0 367.1,141.9ZM395.1,145.1 408.1,145.1 405.4,142.0 392.6,142.0ZM421.2,145.1 434.3,145.2 430.9,142.1 418.1,142.0ZM447.4,145.2 460.5,145.2 456.4,142.1 443.7,142.1ZM473.6,145.3 486.7,145.3 482.0,142.2 469.2,142.2ZM499.8,145.3 512.9,145.3 507.6,142.3 494.8,142.2ZM526.0,145.4 539.1,145.4 533.2,142.3 520.4,142.3ZM552.2,145.4 565.4,145.5 558.8,142.4 546.0,142.4ZM578.5,145.5 591.7,145.5 584.4,142.4 571.6,142.4Z" fill="#c8c8c8"/><path d="M-25.0,141.0 -12.4,141.0 -5.3,138.1 -17.5,138.1ZM0.2,141.0 12.8,141.1 19.3,138.2 7.0,138.1ZM25.3,141.1 37.9,141.1 43.9,138.2 31.6,138.2ZM50.5,141.2 63.1,141.2 68.5,138.3 56.2,138.3ZM75.7,141.2 88.3,141.2 93.1,138.3 80.8,138.3ZM100.9,141.3 113.6,141.3 117.8,138.4 105.4,138.4ZM126.2,141.3 138.8,141.4 142.4,138.5 130.1,138.4ZM151.5,141.4 164.1,141.4 167.1,138.5 154.8,138.5ZM176.8,141.5 189.4,141.5 191.8,138.6 179.5,138.6ZM202.1,141.5 214.7,141.6 216.6,138.6 204.2,138.6ZM227.4,141.6 240.1,141.6 241.3,138.7 228.9,138.7ZM252.8,141.6 265.4,141.7 266.1,138.8 253.7,138.7ZM278.1,141.7 290.8,141.7 290.9,138.8 278.5,138.8ZM303.5,141.8 316.3,141.8 315.7,138.9 303.3,138.8ZM329.0,141.8 341.7,141.9 340.5,138.9 328.1,138.9ZM354.4,141.9 367.1,141.9 365.4,139.0 353.0,139.0ZM379.9,142.0 392.6,142.0 390.3,139.1 377.8,139.0ZM405.4,142.0 418.1,142.0 415.2,139.1 402.7,139.1ZM430.9,142.1 443.7,142.1 440.1,139.2 427.6,139.1ZM456.4,142.1 469.2,142.2 465.1,139.2 452.6,139.2ZM482.0,142.2 494.8,142.2 490.0,139.3 477.5,139.3ZM507.6,142.3 520.4,142.3 515.0,139.3 502.5,139.3ZM533.2,142.3 546.0,142.4 540.0,139.4 527.5,139.4ZM558.8,142.4 571.6,142.4 565.0,139.5 552.5,139.4ZM584.4,142.4 597.3,142.5 590.1,139.5 577.6,139.5Z" fill="#c8c8c8"/><path d="M-29.8,138.1 -17.5,138.1 -10.5,135.3 -22.4,135.3ZM-5.3,138.1 7.0,138.1 13.5,135.4 1.5,135.4ZM19.3,138.2 31.6,138.2 37.6,135.4 25.5,135.4ZM43.9,138.2 56.2,138.3 61.6,135.5 49.6,135.5ZM68.5,138.3 80.8,138.3 85.6,135.6 73.6,135.5ZM93.1,138.3 105.4,138.4 109.7,135.6 97.7,135.6ZM117.8,138.4 130.1,138.4 133.8,135.7 121.8,135.6ZM142.4,138.5 154.8,138.5 157.9,135.7 145.9,135.7ZM167.1,138.5 179.5,138.6 182.1,135.8 170.0,135.7ZM191.8,138.6 204.2,138.6 206.2,135.8 194.1,135.8ZM216.6,138.6 228.9,138.7 230.4,135.9 218.3,135.9ZM241.3,138.7 253.7,138.7 254.6,135.9 242.5,135.9ZM266.1,138.8 278.5,138.8 278.8,136.0 266.7,136.0ZM290.9,138.8 303.3,138.8 303.1,136.1 290.9,136.0ZM315.7,138.9 328.1,138.9 327.3,136.1 315.2,136.1ZM340.5,138.9 353.0,139.0 351.6,136.2 339.4,136.1ZM365.4,139.0 377.8,139.0 375.9,136.2 363.7,136.2ZM390.3,139.1 402.7,139.1 400.2,136.3 388.0,136.3ZM415.2,139.1 427.6,139.1 424.5,136.3 412.4,136.3ZM440.1,139.2 452.6,139.2 448.9,136.4 436.7,136.4ZM465.1,139.2 477.5,139.3 473.3,136.5 461.1,136.4ZM490.0,139.3 502.5,139.3 497.7,136.5 485.5,136.5ZM515.0,139.3 527.5,139.4 522.1,136.6 509.9,136.5ZM540.0,139.4 552.5,139.4 546.6,136.6 534.3,136.6ZM565.0,139.5 577.6,139.5 571.0,136.7 558.8,136.7ZM590.1,139.5 602.6,139.6 595.5,136.7 583.3,136.7Z" fill="#c8c8c8"/><path d="M-10.5,135.3 1.5,135.4 8.0,132.7 -3.7,132.7ZM13.5,135.4 25.5,135.4 31.5,132.8 19.8,132.8ZM37.6,135.4 49.6,135.5 55.0,132.8 43.3,132.8ZM61.6,135.5 73.6,135.5 78.5,132.9 66.8,132.9ZM85.6,135.6 97.7,135.6 102.0,132.9 90.3,132.9ZM109.7,135.6 121.8,135.6 125.6,133.0 113.8,133.0ZM133.8,135.7 145.9,135.7 149.2,133.0 137.4,133.0ZM157.9,135.7 170.0,135.7 172.8,133.1 161.0,133.1ZM182.1,135.8 194.1,135.8 196.4,133.2 184.6,133.1ZM206.2,135.8 218.3,135.9 220.0,133.2 208.2,133.2ZM230.4,135.9 242.5,135.9 243.6,133.3 231.8,133.2ZM254.6,135.9 266.7,136.0 267.3,133.3 255.5,133.3ZM278.8,136.0 290.9,136.0 291.0,133.4 279.1,133.3ZM303.1,136.1 315.2,136.1 314.7,133.4 302.8,133.4ZM327.3,136.1 339.4,136.1 338.4,133.5 326.5,133.5ZM351.6,136.2 363.7,136.2 362.1,133.5 350.3,133.5ZM375.9,136.2 388.0,136.3 385.9,133.6 374.0,133.6ZM400.2,136.3 412.4,136.3 409.7,133.6 397.8,133.6ZM424.5,136.3 436.7,136.4 433.5,133.7 421.6,133.7ZM448.9,136.4 461.1,136.4 457.3,133.8 445.4,133.7ZM473.3,136.5 485.5,136.5 481.2,133.8 469.2,133.8ZM497.7,136.5 509.9,136.5 505.0,133.9 493.1,133.8ZM522.1,136.6 534.3,136.6 528.9,133.9 517.0,133.9ZM546.6,136.6 558.8,136.7 552.8,134.0 540.8,133.9ZM571.0,136.7 583.3,136.7 576.7,134.0 564.7,134.0ZM595.5,136.7 607.7,136.8 600.6,134.1 588.7,134.1Z" fill="#c8c8c8"/><path d="M-15.4,132.7 -3.7,132.7 2.8,130.2 -8.7,130.2ZM8.0,132.7 19.8,132.8 25.7,130.2 14.3,130.2ZM31.5,132.8 43.3,132.8 48.7,130.3 37.2,130.3ZM55.0,132.8 66.8,132.9 71.7,130.3 60.2,130.3ZM78.5,132.9 90.3,132.9 94.7,130.4 83.2,130.4ZM102.0,132.9 113.8,133.0 117.7,130.4 106.2,130.4ZM125.6,133.0 137.4,133.0 140.8,130.5 129.3,130.5ZM149.2,133.0 161.0,133.1 163.8,130.5 152.3,130.5ZM172.8,133.1 184.6,133.1 186.9,130.6 175.4,130.6ZM196.4,133.2 208.2,133.2 210.0,130.6 198.5,130.6ZM220.0,133.2 231.8,133.2 233.1,130.7 221.6,130.7ZM243.6,133.3 255.5,133.3 256.3,130.7 244.7,130.7ZM267.3,133.3 279.1,133.3 279.4,130.8 267.9,130.8ZM291.0,133.4 302.8,133.4 302.6,130.9 291.0,130.8ZM314.7,133.4 326.5,133.5 325.8,130.9 314.2,130.9ZM338.4,133.5 350.3,133.5 349.0,131.0 337.4,130.9ZM362.1,133.5 374.0,133.6 372.2,131.0 360.6,131.0ZM385.9,133.6 397.8,133.6 395.5,131.1 383.9,131.0ZM409.7,133.6 421.6,133.7 418.8,131.1 407.1,131.1ZM433.5,133.7 445.4,133.7 442.0,131.2 430.4,131.1ZM457.3,133.8 469.2,133.8 465.4,131.2 453.7,131.2ZM481.2,133.8 493.1,133.8 488.7,131.3 477.0,131.2ZM505.0,133.9 517.0,133.9 512.0,131.3 500.3,131.3ZM528.9,133.9 540.8,133.9 535.4,131.4 523.7,131.3ZM552.8,134.0 564.7,134.0 558.8,131.4 547.1,131.4ZM576.7,134.0 588.7,134.1 582.2,131.5 570.5,131.5ZM600.6,134.1 612.6,134.1 605.6,131.5 593.9,131.5Z" fill="#c8c8c8"/><path d="M-20.2,130.1 -8.7,130.2 -2.2,127.7 -13.5,127.7ZM2.8,130.2 14.3,130.2 20.2,127.8 9.0,127.8ZM25.7,130.2 37.2,130.3 42.7,127.8 31.4,127.8ZM48.7,130.3 60.2,130.3 65.2,127.9 53.9,127.9ZM71.7,130.3 83.2,130.4 87.7,127.9 76.4,127.9ZM94.7,130.4 106.2,130.4 110.2,128.0 98.9,128.0ZM117.7,130.4 129.3,130.5 132.8,128.0 121.5,128.0ZM140.8,130.5 152.3,130.5 155.3,128.1 144.0,128.1ZM163.8,130.5 175.4,130.6 177.9,128.1 166.6,128.1ZM186.9,130.6 198.5,130.6 200.5,128.2 189.2,128.2ZM210.0,130.6 221.6,130.7 223.1,128.2 211.8,128.2ZM233.1,130.7 244.7,130.7 245.7,128.3 234.4,128.3ZM256.3,130.7 267.9,130.8 268.4,128.3 257.1,128.3ZM279.4,130.8 291.0,130.8 291.1,128.4 279.7,128.4ZM302.6,130.9 314.2,130.9 313.7,128.4 302.4,128.4ZM325.8,130.9 337.4,130.9 336.5,128.5 325.1,128.5ZM349.0,131.0 360.6,131.0 359.2,128.5 347.8,128.5ZM372.2,131.0 383.9,131.0 381.9,128.6 370.5,128.6ZM395.5,131.1 407.1,131.1 404.7,128.6 393.3,128.6ZM418.8,131.1 430.4,131.1 427.4,128.7 416.1,128.7ZM442.0,131.2 453.7,131.2 450.2,128.7 438.8,128.7ZM465.4,131.2 477.0,131.2 473.1,128.8 461.6,128.8ZM488.7,131.3 500.3,131.3 495.9,128.8 484.5,128.8ZM512.0,131.3 523.7,131.3 518.7,128.9 507.3,128.9ZM535.4,131.4 547.1,131.4 541.6,128.9 530.2,128.9ZM558.8,131.4 570.5,131.5 564.5,129.0 553.0,129.0ZM582.2,131.5 593.9,131.5 587.4,129.0 575.9,129.0Z" fill="#c8c8c8"/><path d="M-24.7,127.7 -13.5,127.7 -7.1,125.4 -18.1,125.4ZM-2.2,127.7 9.0,127.8 14.9,125.5 3.9,125.4ZM20.2,127.8 31.4,127.8 36.9,125.5 25.9,125.5ZM42.7,127.8 53.9,127.9 58.9,125.6 47.9,125.5ZM65.2,127.9 76.4,127.9 81.0,125.6 69.9,125.6ZM87.7,127.9 98.9,128.0 103.0,125.7 92.0,125.6ZM110.2,128.0 121.5,128.0 125.1,125.7 114.0,125.7ZM132.8,128.0 144.0,128.1 147.2,125.8 136.1,125.7ZM155.3,128.1 166.6,128.1 169.3,125.8 158.2,125.8ZM177.9,128.1 189.2,128.2 191.4,125.8 180.3,125.8ZM200.5,128.2 211.8,128.2 213.5,125.9 202.4,125.9ZM223.1,128.2 234.4,128.3 235.7,125.9 224.6,125.9ZM245.7,128.3 257.1,128.3 257.8,126.0 246.7,126.0ZM268.4,128.3 279.7,128.4 280.0,126.0 268.9,126.0ZM291.1,128.4 302.4,128.4 302.2,126.1 291.1,126.1ZM313.7,128.4 325.1,128.5 324.4,126.1 313.3,126.1ZM336.5,128.5 347.8,128.5 346.7,126.2 335.5,126.2ZM359.2,128.5 370.5,128.6 368.9,126.2 357.8,126.2ZM381.9,128.6 393.3,128.6 391.2,126.3 380.0,126.3ZM404.7,128.6 416.1,128.7 413.5,126.3 402.3,126.3ZM427.4,128.7 438.8,128.7 435.8,126.4 424.6,126.3ZM450.2,128.7 461.6,128.8 458.1,126.4 446.9,126.4ZM473.1,128.8 484.5,128.8 480.4,126.5 469.3,126.4ZM495.9,128.8 507.3,128.9 502.8,126.5 491.6,126.5ZM518.7,128.9 530.2,128.9 525.2,126.6 514.0,126.5ZM541.6,128.9 553.0,129.0 547.5,126.6 536.3,126.6ZM564.5,129.0 575.9,129.0 570.0,126.7 558.7,126.6ZM587.4,129.0 598.8,129.1 592.4,126.7 581.2,126.7Z" fill="#c8c8c8"/><path d="M-29.0,125.4 -18.1,125.4 -11.7,123.2 -22.4,123.2ZM-7.1,125.4 3.9,125.4 9.8,123.2 -0.9,123.2ZM14.9,125.5 25.9,125.5 31.4,123.3 20.6,123.3ZM36.9,125.5 47.9,125.5 52.9,123.3 42.2,123.3ZM58.9,125.6 69.9,125.6 74.5,123.4 63.7,123.3ZM81.0,125.6 92.0,125.6 96.1,123.4 85.3,123.4ZM103.0,125.7 114.0,125.7 117.7,123.5 106.9,123.4ZM125.1,125.7 136.1,125.7 139.3,123.5 128.5,123.5ZM147.2,125.8 158.2,125.8 161.0,123.5 150.1,123.5ZM169.3,125.8 180.3,125.8 182.6,123.6 171.8,123.6ZM191.4,125.8 202.4,125.9 204.3,123.6 193.5,123.6ZM213.5,125.9 224.6,125.9 226.0,123.7 215.1,123.7ZM235.7,125.9 246.7,126.0 247.7,123.7 236.8,123.7ZM257.8,126.0 268.9,126.0 269.4,123.8 258.5,123.8ZM280.0,126.0 291.1,126.1 291.1,123.8 280.3,123.8ZM302.2,126.1 313.3,126.1 312.9,123.9 302.0,123.8ZM324.4,126.1 335.5,126.2 334.7,123.9 323.8,123.9ZM346.7,126.2 357.8,126.2 356.4,124.0 345.6,123.9ZM368.9,126.2 380.0,126.3 378.2,124.0 367.3,124.0ZM391.2,126.3 402.3,126.3 400.1,124.1 389.2,124.0ZM413.5,126.3 424.6,126.3 421.9,124.1 411.0,124.1ZM435.8,126.4 446.9,126.4 443.8,124.1 432.8,124.1ZM458.1,126.4 469.3,126.4 465.6,124.2 454.7,124.2ZM480.4,126.5 491.6,126.5 487.5,124.2 476.6,124.2ZM502.8,126.5 514.0,126.5 509.4,124.3 498.4,124.3ZM525.2,126.6 536.3,126.6 531.3,124.3 520.4,124.3ZM547.5,126.6 558.7,126.6 553.3,124.4 542.3,124.4ZM570.0,126.7 581.2,126.7 575.2,124.4 564.2,124.4ZM592.4,126.7 603.6,126.7 597.2,124.5 586.2,124.5Z" fill="#c8c8c8"/><path d="M-11.7,123.2 -0.9,123.2 5.0,121.1 -5.6,121.1ZM9.8,123.2 20.6,123.3 26.1,121.1 15.5,121.1ZM31.4,123.3 42.2,123.3 47.2,121.2 36.6,121.1ZM52.9,123.3 63.7,123.3 68.3,121.2 57.8,121.2ZM74.5,123.4 85.3,123.4 89.5,121.3 78.9,121.2ZM96.1,123.4 106.9,123.4 110.6,121.3 100.1,121.3ZM117.7,123.5 128.5,123.5 131.8,121.3 121.2,121.3ZM139.3,123.5 150.1,123.5 153.0,121.4 142.4,121.4ZM161.0,123.5 171.8,123.6 174.2,121.4 163.6,121.4ZM182.6,123.6 193.5,123.6 195.5,121.5 184.8,121.5ZM204.3,123.6 215.1,123.7 216.7,121.5 206.1,121.5ZM226.0,123.7 236.8,123.7 238.0,121.6 227.3,121.5ZM247.7,123.7 258.5,123.8 259.2,121.6 248.6,121.6ZM269.4,123.8 280.3,123.8 280.5,121.7 269.9,121.6ZM291.1,123.8 302.0,123.8 301.8,121.7 291.2,121.7ZM312.9,123.9 323.8,123.9 323.2,121.7 312.5,121.7ZM334.7,123.9 345.6,123.9 344.5,121.8 333.8,121.8ZM356.4,124.0 367.3,124.0 365.8,121.8 355.2,121.8ZM378.2,124.0 389.2,124.0 387.2,121.9 376.5,121.9ZM400.1,124.1 411.0,124.1 408.6,121.9 397.9,121.9ZM421.9,124.1 432.8,124.1 430.0,122.0 419.3,121.9ZM443.8,124.1 454.7,124.2 451.4,122.0 440.7,122.0ZM465.6,124.2 476.6,124.2 472.8,122.1 462.1,122.0ZM487.5,124.2 498.4,124.3 494.3,122.1 483.6,122.1ZM509.4,124.3 520.4,124.3 515.8,122.1 505.0,122.1ZM531.3,124.3 542.3,124.4 537.2,122.2 526.5,122.2ZM553.3,124.4 564.2,124.4 558.7,122.2 548.0,122.2ZM575.2,124.4 586.2,124.5 580.2,122.3 569.5,122.3ZM597.2,124.5 608.2,124.5 601.8,122.3 591.0,122.3Z" fill="#c8c8c8"/><path d="M-16.1,121.0 -5.6,121.1 0.3,119.0 -10.0,119.0ZM5.0,121.1 15.5,121.1 21.0,119.1 10.6,119.0ZM26.1,121.1 36.6,121.1 41.7,119.1 31.3,119.1ZM47.2,121.2 57.8,121.2 62.4,119.1 52.0,119.1ZM68.3,121.2 78.9,121.2 83.1,119.2 72.7,119.2ZM89.5,121.3 100.1,121.3 103.9,119.2 93.5,119.2ZM110.6,121.3 121.2,121.3 124.6,119.3 114.2,119.3ZM131.8,121.3 142.4,121.4 145.4,119.3 135.0,119.3ZM153.0,121.4 163.6,121.4 166.2,119.4 155.8,119.3ZM174.2,121.4 184.8,121.5 187.0,119.4 176.6,119.4ZM195.5,121.5 206.1,121.5 207.8,119.4 197.4,119.4ZM216.7,121.5 227.3,121.5 228.6,119.5 218.2,119.5ZM238.0,121.6 248.6,121.6 249.5,119.5 239.0,119.5ZM259.2,121.6 269.9,121.6 270.3,119.6 259.9,119.6ZM280.5,121.7 291.2,121.7 291.2,119.6 280.8,119.6ZM301.8,121.7 312.5,121.7 312.1,119.7 301.7,119.6ZM323.2,121.7 333.8,121.8 333.0,119.7 322.6,119.7ZM344.5,121.8 355.2,121.8 353.9,119.7 343.5,119.7ZM365.8,121.8 376.5,121.9 374.9,119.8 364.4,119.8ZM387.2,121.9 397.9,121.9 395.8,119.8 385.3,119.8ZM408.6,121.9 419.3,121.9 416.8,119.9 406.3,119.9ZM430.0,122.0 440.7,122.0 437.8,119.9 427.3,119.9ZM451.4,122.0 462.1,122.0 458.8,120.0 448.3,119.9ZM472.8,122.1 483.6,122.1 479.8,120.0 469.3,120.0ZM494.3,122.1 505.0,122.1 500.8,120.0 490.3,120.0ZM515.8,122.1 526.5,122.2 521.9,120.1 511.3,120.1ZM537.2,122.2 548.0,122.2 542.9,120.1 532.4,120.1ZM558.7,122.2 569.5,122.3 564.0,120.2 553.5,120.2ZM580.2,122.3 591.0,122.3 585.1,120.2 574.5,120.2Z" fill="#c8c8c8"/><path d="M-20.4,119.0 -10.0,119.0 -4.2,117.0 -14.3,117.0ZM0.3,119.0 10.6,119.0 16.1,117.1 5.9,117.1ZM21.0,119.1 31.3,119.1 36.4,117.1 26.2,117.1ZM41.7,119.1 52.0,119.1 56.7,117.2 46.5,117.1ZM62.4,119.1 72.7,119.2 77.0,117.2 66.8,117.2ZM83.1,119.2 93.5,119.2 97.3,117.2 87.2,117.2ZM103.9,119.2 114.2,119.3 117.7,117.3 107.5,117.3ZM124.6,119.3 135.0,119.3 138.0,117.3 127.9,117.3ZM145.4,119.3 155.8,119.3 158.4,117.4 148.2,117.3ZM166.2,119.4 176.6,119.4 178.8,117.4 168.6,117.4ZM187.0,119.4 197.4,119.4 199.2,117.5 189.0,117.4ZM207.8,119.4 218.2,119.5 219.7,117.5 209.4,117.5ZM228.6,119.5 239.0,119.5 240.1,117.5 229.9,117.5ZM249.5,119.5 259.9,119.6 260.5,117.6 250.3,117.6ZM270.3,119.6 280.8,119.6 281.0,117.6 270.8,117.6ZM291.2,119.6 301.7,119.6 301.5,117.7 291.2,117.6ZM312.1,119.7 322.6,119.7 322.0,117.7 311.7,117.7ZM333.0,119.7 343.5,119.7 342.5,117.7 332.2,117.7ZM353.9,119.7 364.4,119.8 363.0,117.8 352.8,117.8ZM374.9,119.8 385.3,119.8 383.6,117.8 373.3,117.8ZM395.8,119.8 406.3,119.9 404.1,117.9 393.8,117.8ZM416.8,119.9 427.3,119.9 424.7,117.9 414.4,117.9ZM437.8,119.9 448.3,119.9 445.3,117.9 435.0,117.9ZM458.8,120.0 469.3,120.0 465.9,118.0 455.6,118.0ZM479.8,120.0 490.3,120.0 486.5,118.0 476.2,118.0ZM500.8,120.0 511.3,120.1 507.1,118.1 496.8,118.0ZM521.9,120.1 532.4,120.1 527.7,118.1 517.4,118.1ZM542.9,120.1 553.5,120.2 548.4,118.2 538.1,118.1ZM564.0,120.2 574.5,120.2 569.1,118.2 558.7,118.2ZM585.1,120.2 595.6,120.2 589.7,118.2 579.4,118.2Z" fill="#c8c8c8"/><path d="M-24.5,117.0 -14.3,117.0 -8.5,115.1 -18.5,115.1ZM-4.2,117.0 5.9,117.1 11.4,115.2 1.4,115.2ZM16.1,117.1 26.2,117.1 31.3,115.2 21.3,115.2ZM36.4,117.1 46.5,117.1 51.2,115.3 41.2,115.2ZM56.7,117.2 66.8,117.2 71.1,115.3 61.2,115.3ZM77.0,117.2 87.2,117.2 91.1,115.3 81.1,115.3ZM97.3,117.2 107.5,117.3 111.0,115.4 101.0,115.4ZM117.7,117.3 127.9,117.3 131.0,115.4 121.0,115.4ZM138.0,117.3 148.2,117.3 151.0,115.5 141.0,115.4ZM158.4,117.4 168.6,117.4 171.0,115.5 161.0,115.5ZM178.8,117.4 189.0,117.4 191.0,115.5 181.0,115.5ZM199.2,117.5 209.4,117.5 211.0,115.6 201.0,115.6ZM219.7,117.5 229.9,117.5 231.1,115.6 221.0,115.6ZM240.1,117.5 250.3,117.6 251.1,115.7 241.1,115.6ZM260.5,117.6 270.8,117.6 271.2,115.7 261.2,115.7ZM281.0,117.6 291.2,117.6 291.3,115.7 281.2,115.7ZM301.5,117.7 311.7,117.7 311.4,115.8 301.3,115.8ZM322.0,117.7 332.2,117.7 331.5,115.8 321.4,115.8ZM342.5,117.7 352.8,117.8 351.6,115.8 341.5,115.8ZM363.0,117.8 373.3,117.8 371.8,115.9 361.7,115.9ZM383.6,117.8 393.8,117.8 391.9,115.9 381.8,115.9ZM404.1,117.9 414.4,117.9 412.1,116.0 402.0,115.9ZM424.7,117.9 435.0,117.9 432.3,116.0 422.2,116.0ZM445.3,117.9 455.6,118.0 452.5,116.0 442.4,116.0ZM465.9,118.0 476.2,118.0 472.7,116.1 462.6,116.1ZM486.5,118.0 496.8,118.0 492.9,116.1 482.8,116.1ZM507.1,118.1 517.4,118.1 513.1,116.2 503.0,116.1ZM527.7,118.1 538.1,118.1 533.4,116.2 523.2,116.2ZM548.4,118.2 558.7,118.2 553.6,116.2 543.5,116.2ZM569.1,118.2 579.4,118.2 573.9,116.3 563.8,116.3ZM589.7,118.2 600.1,118.3 594.2,116.3 584.1,116.3Z" fill="#c8c8c8"/><path d="M-28.4,115.1 -18.5,115.1 -12.7,113.3 -22.4,113.3ZM-8.5,115.1 1.4,115.2 6.8,113.3 -2.9,113.3ZM11.4,115.2 21.3,115.2 26.4,113.4 16.6,113.4ZM31.3,115.2 41.2,115.2 45.9,113.4 36.1,113.4ZM51.2,115.3 61.2,115.3 65.5,113.5 55.7,113.4ZM71.1,115.3 81.1,115.3 85.0,113.5 75.2,113.5ZM91.1,115.3 101.0,115.4 104.6,113.5 94.8,113.5ZM111.0,115.4 121.0,115.4 124.2,113.6 114.4,113.6ZM131.0,115.4 141.0,115.4 143.8,113.6 134.0,113.6ZM151.0,115.5 161.0,115.5 163.4,113.6 153.6,113.6ZM171.0,115.5 181.0,115.5 183.1,113.7 173.3,113.7ZM191.0,115.5 201.0,115.6 202.7,113.7 192.9,113.7ZM211.0,115.6 221.0,115.6 222.4,113.8 212.6,113.7ZM231.1,115.6 241.1,115.6 242.1,113.8 232.2,113.8ZM251.1,115.7 261.2,115.7 261.7,113.8 251.9,113.8ZM271.2,115.7 281.2,115.7 281.5,113.9 271.6,113.9ZM291.3,115.7 301.3,115.8 301.2,113.9 291.3,113.9ZM311.4,115.8 321.4,115.8 320.9,114.0 311.0,113.9ZM331.5,115.8 341.5,115.8 340.6,114.0 330.8,114.0ZM351.6,115.8 361.7,115.9 360.4,114.0 350.5,114.0ZM371.8,115.9 381.8,115.9 380.2,114.1 370.3,114.0ZM391.9,115.9 402.0,115.9 399.9,114.1 390.1,114.1ZM412.1,116.0 422.2,116.0 419.7,114.1 409.8,114.1ZM432.3,116.0 442.4,116.0 439.6,114.2 429.7,114.2ZM452.5,116.0 462.6,116.1 459.4,114.2 449.5,114.2ZM472.7,116.1 482.8,116.1 479.2,114.3 469.3,114.2ZM492.9,116.1 503.0,116.1 499.1,114.3 489.1,114.3ZM513.1,116.2 523.2,116.2 518.9,114.3 509.0,114.3ZM533.4,116.2 543.5,116.2 538.8,114.4 528.9,114.4ZM553.6,116.2 563.8,116.3 558.7,114.4 548.8,114.4ZM573.9,116.3 584.1,116.3 578.6,114.5 568.7,114.4ZM594.2,116.3 604.4,116.4 598.5,114.5 588.6,114.5Z" fill="#c8c8c8"/><path d="M-12.7,113.3 -2.9,113.3 2.5,111.6 -7.1,111.6ZM6.8,113.3 16.6,113.4 21.6,111.6 12.0,111.6ZM26.4,113.4 36.1,113.4 40.8,111.6 31.2,111.6ZM45.9,113.4 55.7,113.4 60.0,111.7 50.4,111.7ZM65.5,113.5 75.2,113.5 79.2,111.7 69.6,111.7ZM85.0,113.5 94.8,113.5 98.4,111.8 88.8,111.7ZM104.6,113.5 114.4,113.6 117.7,111.8 108.0,111.8ZM124.2,113.6 134.0,113.6 136.9,111.8 127.3,111.8ZM143.8,113.6 153.6,113.6 156.2,111.9 146.5,111.8ZM163.4,113.6 173.3,113.7 175.4,111.9 165.8,111.9ZM183.1,113.7 192.9,113.7 194.7,111.9 185.1,111.9ZM202.7,113.7 212.6,113.7 214.0,112.0 204.4,112.0ZM222.4,113.8 232.2,113.8 233.3,112.0 223.7,112.0ZM242.1,113.8 251.9,113.8 252.7,112.1 243.0,112.0ZM261.7,113.8 271.6,113.9 272.0,112.1 262.3,112.1ZM281.5,113.9 291.3,113.9 291.3,112.1 281.7,112.1ZM301.2,113.9 311.0,113.9 310.7,112.2 301.0,112.1ZM320.9,114.0 330.8,114.0 330.1,112.2 320.4,112.2ZM340.6,114.0 350.5,114.0 349.5,112.2 339.8,112.2ZM360.4,114.0 370.3,114.0 368.9,112.3 359.2,112.3ZM380.2,114.1 390.1,114.1 388.3,112.3 378.6,112.3ZM399.9,114.1 409.8,114.1 407.7,112.4 398.0,112.3ZM419.7,114.1 429.7,114.2 427.1,112.4 417.4,112.4ZM439.6,114.2 449.5,114.2 446.6,112.4 436.9,112.4ZM459.4,114.2 469.3,114.2 466.1,112.5 456.3,112.4ZM479.2,114.3 489.1,114.3 485.5,112.5 475.8,112.5ZM499.1,114.3 509.0,114.3 505.0,112.5 495.3,112.5ZM518.9,114.3 528.9,114.4 524.5,112.6 514.8,112.6ZM538.8,114.4 548.8,114.4 544.1,112.6 534.3,112.6ZM558.7,114.4 568.7,114.4 563.6,112.6 553.8,112.6ZM578.6,114.5 588.6,114.5 583.1,112.7 573.4,112.7Z" fill="#c8c8c8"/><path d="M-16.7,111.5 -7.1,111.6 -1.7,109.9 -11.2,109.9ZM2.5,111.6 12.0,111.6 17.1,109.9 7.7,109.9ZM21.6,111.6 31.2,111.6 35.9,109.9 26.5,109.9ZM40.8,111.6 50.4,111.7 54.8,110.0 45.3,110.0ZM60.0,111.7 69.6,111.7 73.6,110.0 64.2,110.0ZM79.2,111.7 88.8,111.7 92.5,110.0 83.0,110.0ZM98.4,111.8 108.0,111.8 111.4,110.1 101.9,110.1ZM117.7,111.8 127.3,111.8 130.3,110.1 120.8,110.1ZM136.9,111.8 146.5,111.8 149.2,110.2 139.7,110.1ZM156.2,111.9 165.8,111.9 168.1,110.2 158.6,110.2ZM175.4,111.9 185.1,111.9 187.0,110.2 177.5,110.2ZM194.7,111.9 204.4,112.0 206.0,110.3 196.5,110.2ZM214.0,112.0 223.7,112.0 224.9,110.3 215.4,110.3ZM233.3,112.0 243.0,112.0 243.9,110.3 234.4,110.3ZM252.7,112.1 262.3,112.1 262.9,110.4 253.4,110.4ZM272.0,112.1 281.7,112.1 281.9,110.4 272.4,110.4ZM291.3,112.1 301.0,112.1 300.9,110.4 291.4,110.4ZM310.7,112.2 320.4,112.2 319.9,110.5 310.4,110.5ZM330.1,112.2 339.8,112.2 338.9,110.5 329.4,110.5ZM349.5,112.2 359.2,112.3 358.0,110.5 348.4,110.5ZM368.9,112.3 378.6,112.3 377.0,110.6 367.5,110.6ZM388.3,112.3 398.0,112.3 396.1,110.6 386.6,110.6ZM407.7,112.4 417.4,112.4 415.2,110.7 405.6,110.6ZM427.1,112.4 436.9,112.4 434.3,110.7 424.7,110.7ZM446.6,112.4 456.3,112.4 453.4,110.7 443.8,110.7ZM466.1,112.5 475.8,112.5 472.5,110.8 462.9,110.7ZM485.5,112.5 495.3,112.5 491.6,110.8 482.1,110.8ZM505.0,112.5 514.8,112.6 510.8,110.8 501.2,110.8ZM524.5,112.6 534.3,112.6 529.9,110.9 520.4,110.9ZM544.1,112.6 553.8,112.6 549.1,110.9 539.5,110.9ZM563.6,112.6 573.4,112.7 568.3,110.9 558.7,110.9ZM583.1,112.7 592.9,112.7 587.5,111.0 577.9,111.0Z" fill="#c8c8c8"/><path d="M-20.6,109.8 -11.2,109.9 -5.8,108.2 -15.0,108.2ZM-1.7,109.9 7.7,109.9 12.7,108.3 3.4,108.2ZM17.1,109.9 26.5,109.9 31.2,108.3 21.9,108.3ZM35.9,109.9 45.3,110.0 49.7,108.3 40.4,108.3ZM54.8,110.0 64.2,110.0 68.2,108.4 58.9,108.3ZM73.6,110.0 83.0,110.0 86.7,108.4 77.5,108.4ZM92.5,110.0 101.9,110.1 105.3,108.4 96.0,108.4ZM111.4,110.1 120.8,110.1 123.8,108.5 114.6,108.5ZM130.3,110.1 139.7,110.1 142.4,108.5 133.1,108.5ZM149.2,110.2 158.6,110.2 161.0,108.5 151.7,108.5ZM168.1,110.2 177.5,110.2 179.6,108.6 170.3,108.6ZM187.0,110.2 196.5,110.2 198.2,108.6 188.9,108.6ZM206.0,110.3 215.4,110.3 216.8,108.6 207.5,108.6ZM224.9,110.3 234.4,110.3 235.4,108.7 226.1,108.7ZM243.9,110.3 253.4,110.4 254.1,108.7 244.8,108.7ZM262.9,110.4 272.4,110.4 272.7,108.7 263.4,108.7ZM281.9,110.4 291.4,110.4 291.4,108.8 282.1,108.8ZM300.9,110.4 310.4,110.5 310.1,108.8 300.7,108.8ZM319.9,110.5 329.4,110.5 328.8,108.8 319.4,108.8ZM338.9,110.5 348.4,110.5 347.5,108.9 338.1,108.9ZM358.0,110.5 367.5,110.6 366.2,108.9 356.8,108.9ZM377.0,110.6 386.6,110.6 384.9,109.0 375.5,108.9ZM396.1,110.6 405.6,110.6 403.6,109.0 394.3,109.0ZM415.2,110.7 424.7,110.7 422.4,109.0 413.0,109.0ZM434.3,110.7 443.8,110.7 441.2,109.1 431.8,109.0ZM453.4,110.7 462.9,110.7 459.9,109.1 450.5,109.1ZM472.5,110.8 482.1,110.8 478.7,109.1 469.3,109.1ZM491.6,110.8 501.2,110.8 497.5,109.2 488.1,109.1ZM510.8,110.8 520.4,110.9 516.3,109.2 506.9,109.2ZM529.9,110.9 539.5,110.9 535.1,109.2 525.7,109.2ZM549.1,110.9 558.7,110.9 554.0,109.3 544.6,109.3ZM568.3,110.9 577.9,111.0 572.8,109.3 563.4,109.3ZM587.5,111.0 597.1,111.0 591.7,109.3 582.3,109.3Z" fill="#c8c8c8"/><path d="M-24.3,108.2 -15.0,108.2 -9.7,106.6 -18.8,106.6ZM-5.8,108.2 3.4,108.2 8.4,106.7 -0.7,106.7ZM12.7,108.3 21.9,108.3 26.6,106.7 17.5,106.7ZM31.2,108.3 40.4,108.3 44.8,106.7 35.7,106.7ZM49.7,108.3 58.9,108.3 63.0,106.8 53.9,106.8ZM68.2,108.4 77.5,108.4 81.2,106.8 72.1,106.8ZM86.7,108.4 96.0,108.4 99.4,106.8 90.3,106.8ZM105.3,108.4 114.6,108.5 117.6,106.9 108.5,106.9ZM123.8,108.5 133.1,108.5 135.9,106.9 126.8,106.9ZM142.4,108.5 151.7,108.5 154.1,106.9 145.0,106.9ZM161.0,108.5 170.3,108.6 172.4,107.0 163.3,107.0ZM179.6,108.6 188.9,108.6 190.7,107.0 181.5,107.0ZM198.2,108.6 207.5,108.6 209.0,107.0 199.8,107.0ZM216.8,108.6 226.1,108.7 227.3,107.1 218.1,107.1ZM235.4,108.7 244.8,108.7 245.6,107.1 236.4,107.1ZM254.1,108.7 263.4,108.7 263.9,107.1 254.7,107.1ZM272.7,108.7 282.1,108.8 282.2,107.2 273.1,107.2ZM291.4,108.8 300.7,108.8 300.6,107.2 291.4,107.2ZM310.1,108.8 319.4,108.8 319.0,107.2 309.8,107.2ZM328.8,108.8 338.1,108.9 337.3,107.3 328.1,107.3ZM347.5,108.9 356.8,108.9 355.7,107.3 346.5,107.3ZM366.2,108.9 375.5,108.9 374.1,107.3 364.9,107.3ZM384.9,109.0 394.3,109.0 392.5,107.4 383.3,107.4ZM403.6,109.0 413.0,109.0 410.9,107.4 401.7,107.4ZM422.4,109.0 431.8,109.0 429.4,107.4 420.1,107.4ZM441.2,109.1 450.5,109.1 447.8,107.5 438.6,107.5ZM459.9,109.1 469.3,109.1 466.2,107.5 457.0,107.5ZM478.7,109.1 488.1,109.1 484.7,107.5 475.5,107.5ZM497.5,109.2 506.9,109.2 503.2,107.6 493.9,107.6ZM516.3,109.2 525.7,109.2 521.7,107.6 512.4,107.6ZM535.1,109.2 544.6,109.3 540.2,107.6 530.9,107.6ZM554.0,109.3 563.4,109.3 558.7,107.7 549.4,107.7ZM572.8,109.3 582.3,109.3 577.2,107.7 567.9,107.7ZM591.7,109.3 601.1,109.4 595.7,107.8 586.5,107.7Z" fill="#c8c8c8"/><path d="M-9.7,106.6 -0.7,106.7 4.3,105.1 -4.6,105.1ZM8.4,106.7 17.5,106.7 22.2,105.2 13.3,105.2ZM26.6,106.7 35.7,106.7 40.1,105.2 31.1,105.2ZM44.8,106.7 53.9,106.8 58.0,105.2 49.0,105.2ZM63.0,106.8 72.1,106.8 75.8,105.3 66.9,105.3ZM81.2,106.8 90.3,106.8 93.8,105.3 84.8,105.3ZM99.4,106.8 108.5,106.9 111.7,105.3 102.7,105.3ZM117.6,106.9 126.8,106.9 129.6,105.4 120.6,105.4ZM135.9,106.9 145.0,106.9 147.5,105.4 138.6,105.4ZM154.1,106.9 163.3,107.0 165.5,105.4 156.5,105.4ZM172.4,107.0 181.5,107.0 183.4,105.5 174.5,105.4ZM190.7,107.0 199.8,107.0 201.4,105.5 192.4,105.5ZM209.0,107.0 218.1,107.1 219.4,105.5 210.4,105.5ZM227.3,107.1 236.4,107.1 237.4,105.6 228.4,105.5ZM245.6,107.1 254.7,107.1 255.4,105.6 246.4,105.6ZM263.9,107.1 273.1,107.2 273.4,105.6 264.4,105.6ZM282.2,107.2 291.4,107.2 291.4,105.7 282.4,105.6ZM300.6,107.2 309.8,107.2 309.5,105.7 300.5,105.7ZM319.0,107.2 328.1,107.3 327.5,105.7 318.5,105.7ZM337.3,107.3 346.5,107.3 345.6,105.8 336.6,105.7ZM355.7,107.3 364.9,107.3 363.7,105.8 354.6,105.8ZM374.1,107.3 383.3,107.4 381.8,105.8 372.7,105.8ZM392.5,107.4 401.7,107.4 399.9,105.9 390.8,105.8ZM410.9,107.4 420.1,107.4 418.0,105.9 408.9,105.9ZM429.4,107.4 438.6,107.5 436.1,105.9 427.0,105.9ZM447.8,107.5 457.0,107.5 454.2,106.0 445.1,105.9ZM466.2,107.5 475.5,107.5 472.4,106.0 463.3,106.0ZM484.7,107.5 493.9,107.6 490.5,106.0 481.4,106.0ZM503.2,107.6 512.4,107.6 508.7,106.1 499.6,106.0ZM521.7,107.6 530.9,107.6 526.8,106.1 517.8,106.1ZM540.2,107.6 549.4,107.7 545.0,106.1 535.9,106.1ZM558.7,107.7 567.9,107.7 563.2,106.2 554.1,106.1ZM577.2,107.7 586.5,107.7 581.4,106.2 572.3,106.2ZM595.7,107.8 605.0,107.8 599.7,106.2 590.5,106.2Z" fill="#c8c8c8"/><path d="M-13.5,105.1 -4.6,105.1 0.4,103.7 -8.4,103.6ZM4.3,105.1 13.3,105.2 17.9,103.7 9.2,103.7ZM22.2,105.2 31.1,105.2 35.5,103.7 26.7,103.7ZM40.1,105.2 49.0,105.2 53.1,103.8 44.3,103.7ZM58.0,105.2 66.9,105.3 70.7,103.8 61.9,103.8ZM75.8,105.3 84.8,105.3 88.3,103.8 79.5,103.8ZM93.8,105.3 102.7,105.3 105.9,103.8 97.1,103.8ZM111.7,105.3 120.6,105.4 123.5,103.9 114.7,103.9ZM129.6,105.4 138.6,105.4 141.1,103.9 132.3,103.9ZM147.5,105.4 156.5,105.4 158.8,103.9 150.0,103.9ZM165.5,105.4 174.5,105.4 176.4,104.0 167.6,104.0ZM183.4,105.5 192.4,105.5 194.1,104.0 185.3,104.0ZM201.4,105.5 210.4,105.5 211.8,104.0 202.9,104.0ZM219.4,105.5 228.4,105.5 229.5,104.1 220.6,104.1ZM237.4,105.6 246.4,105.6 247.2,104.1 238.3,104.1ZM255.4,105.6 264.4,105.6 264.9,104.1 256.0,104.1ZM273.4,105.6 282.4,105.6 282.6,104.2 273.7,104.1ZM291.4,105.7 300.5,105.7 300.3,104.2 291.5,104.2ZM309.5,105.7 318.5,105.7 318.1,104.2 309.2,104.2ZM327.5,105.7 336.6,105.7 335.8,104.3 327.0,104.2ZM345.6,105.8 354.6,105.8 353.6,104.3 344.7,104.3ZM363.7,105.8 372.7,105.8 371.4,104.3 362.5,104.3ZM381.8,105.8 390.8,105.8 389.2,104.4 380.3,104.3ZM399.9,105.9 408.9,105.9 407.0,104.4 398.1,104.4ZM418.0,105.9 427.0,105.9 424.8,104.4 415.9,104.4ZM436.1,105.9 445.1,105.9 442.6,104.4 433.7,104.4ZM454.2,106.0 463.3,106.0 460.4,104.5 451.5,104.5ZM472.4,106.0 481.4,106.0 478.3,104.5 469.3,104.5ZM490.5,106.0 499.6,106.0 496.1,104.5 487.2,104.5ZM508.7,106.1 517.8,106.1 514.0,104.6 505.0,104.6ZM526.8,106.1 535.9,106.1 531.8,104.6 522.9,104.6ZM545.0,106.1 554.1,106.1 549.7,104.6 540.8,104.6ZM563.2,106.2 572.3,106.2 567.6,104.7 558.7,104.7ZM581.4,106.2 590.5,106.2 585.5,104.7 576.6,104.7Z" fill="#c8c8c8"/><path d="M-17.2,103.6 -8.4,103.6 -3.5,102.2 -12.1,102.2ZM0.4,103.7 9.2,103.7 13.8,102.3 5.2,102.2ZM17.9,103.7 26.7,103.7 31.1,102.3 22.4,102.3ZM35.5,103.7 44.3,103.7 48.4,102.3 39.7,102.3ZM53.1,103.8 61.9,103.8 65.7,102.4 57.0,102.3ZM70.7,103.8 79.5,103.8 83.0,102.4 74.3,102.4ZM88.3,103.8 97.1,103.8 100.3,102.4 91.6,102.4ZM105.9,103.8 114.7,103.9 117.6,102.4 109.0,102.4ZM123.5,103.9 132.3,103.9 135.0,102.5 126.3,102.5ZM141.1,103.9 150.0,103.9 152.3,102.5 143.6,102.5ZM158.8,103.9 167.6,104.0 169.7,102.5 161.0,102.5ZM176.4,104.0 185.3,104.0 187.1,102.6 178.4,102.5ZM194.1,104.0 202.9,104.0 204.4,102.6 195.7,102.6ZM211.8,104.0 220.6,104.1 221.8,102.6 213.1,102.6ZM229.5,104.1 238.3,104.1 239.2,102.7 230.5,102.6ZM247.2,104.1 256.0,104.1 256.6,102.7 247.9,102.7ZM264.9,104.1 273.7,104.1 274.1,102.7 265.3,102.7ZM282.6,104.2 291.5,104.2 291.5,102.7 282.8,102.7ZM300.3,104.2 309.2,104.2 308.9,102.8 300.2,102.8ZM318.1,104.2 327.0,104.2 326.4,102.8 317.7,102.8ZM335.8,104.3 344.7,104.3 343.9,102.8 335.1,102.8ZM353.6,104.3 362.5,104.3 361.3,102.9 352.6,102.9ZM371.4,104.3 380.3,104.3 378.8,102.9 370.1,102.9ZM389.2,104.4 398.1,104.4 396.3,102.9 387.6,102.9ZM407.0,104.4 415.9,104.4 413.8,103.0 405.1,102.9ZM424.8,104.4 433.7,104.4 431.3,103.0 422.6,103.0ZM442.6,104.4 451.5,104.5 448.9,103.0 440.1,103.0ZM460.4,104.5 469.3,104.5 466.4,103.1 457.6,103.0ZM478.3,104.5 487.2,104.5 484.0,103.1 475.2,103.1ZM496.1,104.5 505.0,104.6 501.5,103.1 492.7,103.1ZM514.0,104.6 522.9,104.6 519.1,103.1 510.3,103.1ZM531.8,104.6 540.8,104.6 536.7,103.2 527.9,103.2ZM549.7,104.6 558.7,104.7 554.3,103.2 545.5,103.2ZM567.6,104.7 576.6,104.7 571.9,103.2 563.1,103.2ZM585.5,104.7 594.5,104.7 589.5,103.3 580.7,103.3Z" fill="#c8c8c8"/><path d="M-20.7,102.2 -12.1,102.2 -7.2,100.8 -15.6,100.8ZM-3.5,102.2 5.2,102.2 9.8,100.9 1.3,100.9ZM13.8,102.3 22.4,102.3 26.8,100.9 18.3,100.9ZM31.1,102.3 39.7,102.3 43.8,100.9 35.3,100.9ZM48.4,102.3 57.0,102.3 60.8,101.0 52.3,100.9ZM65.7,102.4 74.3,102.4 77.9,101.0 69.3,101.0ZM83.0,102.4 91.6,102.4 94.9,101.0 86.4,101.0ZM100.3,102.4 109.0,102.4 111.9,101.0 103.4,101.0ZM117.6,102.4 126.3,102.5 129.0,101.1 120.5,101.1ZM135.0,102.5 143.6,102.5 146.1,101.1 137.5,101.1ZM152.3,102.5 161.0,102.5 163.1,101.1 154.6,101.1ZM169.7,102.5 178.4,102.5 180.2,101.2 171.7,101.2ZM187.1,102.6 195.7,102.6 197.3,101.2 188.8,101.2ZM204.4,102.6 213.1,102.6 214.4,101.2 205.9,101.2ZM221.8,102.6 230.5,102.6 231.5,101.3 223.0,101.2ZM239.2,102.7 247.9,102.7 248.7,101.3 240.1,101.3ZM256.6,102.7 265.3,102.7 265.8,101.3 257.2,101.3ZM274.1,102.7 282.8,102.7 282.9,101.3 274.4,101.3ZM291.5,102.7 300.2,102.8 300.1,101.4 291.5,101.4ZM308.9,102.8 317.7,102.8 317.3,101.4 308.7,101.4ZM326.4,102.8 335.1,102.8 334.4,101.4 325.9,101.4ZM343.9,102.8 352.6,102.9 351.6,101.5 343.0,101.4ZM361.3,102.9 370.1,102.9 368.8,101.5 360.2,101.5ZM378.8,102.9 387.6,102.9 386.0,101.5 377.4,101.5ZM396.3,102.9 405.1,102.9 403.2,101.6 394.6,101.5ZM413.8,103.0 422.6,103.0 420.5,101.6 411.9,101.6ZM431.3,103.0 440.1,103.0 437.7,101.6 429.1,101.6ZM448.9,103.0 457.6,103.0 455.0,101.6 446.3,101.6ZM466.4,103.1 475.2,103.1 472.2,101.7 463.6,101.7ZM484.0,103.1 492.7,103.1 489.5,101.7 480.9,101.7ZM501.5,103.1 510.3,103.1 506.8,101.7 498.1,101.7ZM519.1,103.1 527.9,103.2 524.1,101.8 515.4,101.7ZM536.7,103.2 545.5,103.2 541.4,101.8 532.7,101.8ZM554.3,103.2 563.1,103.2 558.7,101.8 550.0,101.8ZM571.9,103.2 580.7,103.3 576.0,101.9 567.3,101.8ZM589.5,103.3 598.3,103.3 593.3,101.9 584.6,101.9Z" fill="#c8c8c8"/><path d="M-24.1,100.8 -15.6,100.8 -10.7,99.5 -19.1,99.5ZM-7.2,100.8 1.3,100.9 6.0,99.5 -2.4,99.5ZM9.8,100.9 18.3,100.9 22.7,99.6 14.3,99.5ZM26.8,100.9 35.3,100.9 39.4,99.6 31.1,99.6ZM43.8,100.9 52.3,100.9 56.2,99.6 47.8,99.6ZM60.8,101.0 69.3,101.0 72.9,99.6 64.5,99.6ZM77.9,101.0 86.4,101.0 89.7,99.7 81.3,99.7ZM94.9,101.0 103.4,101.0 106.4,99.7 98.1,99.7ZM111.9,101.0 120.5,101.1 123.2,99.7 114.8,99.7ZM129.0,101.1 137.5,101.1 140.0,99.8 131.6,99.7ZM146.1,101.1 154.6,101.1 156.8,99.8 148.4,99.8ZM163.1,101.1 171.7,101.2 173.6,99.8 165.2,99.8ZM180.2,101.2 188.8,101.2 190.4,99.8 182.0,99.8ZM197.3,101.2 205.9,101.2 207.3,99.9 198.8,99.9ZM214.4,101.2 223.0,101.2 224.1,99.9 215.7,99.9ZM231.5,101.3 240.1,101.3 240.9,99.9 232.5,99.9ZM248.7,101.3 257.2,101.3 257.8,100.0 249.4,99.9ZM265.8,101.3 274.4,101.3 274.7,100.0 266.2,100.0ZM282.9,101.3 291.5,101.4 291.5,100.0 283.1,100.0ZM300.1,101.4 308.7,101.4 308.4,100.0 300.0,100.0ZM317.3,101.4 325.9,101.4 325.3,100.1 316.9,100.1ZM334.4,101.4 343.0,101.4 342.2,100.1 333.8,100.1ZM351.6,101.5 360.2,101.5 359.1,100.1 350.7,100.1ZM368.8,101.5 377.4,101.5 376.1,100.2 367.6,100.1ZM386.0,101.5 394.6,101.5 393.0,100.2 384.5,100.2ZM403.2,101.6 411.9,101.6 410.0,100.2 401.5,100.2ZM420.5,101.6 429.1,101.6 426.9,100.3 418.4,100.2ZM437.7,101.6 446.3,101.6 443.9,100.3 435.4,100.3ZM455.0,101.6 463.6,101.7 460.9,100.3 452.4,100.3ZM472.2,101.7 480.9,101.7 477.8,100.3 469.3,100.3ZM489.5,101.7 498.1,101.7 494.8,100.4 486.3,100.4ZM506.8,101.7 515.4,101.7 511.8,100.4 503.3,100.4ZM524.1,101.8 532.7,101.8 528.9,100.4 520.3,100.4ZM541.4,101.8 550.0,101.8 545.9,100.5 537.4,100.4ZM558.7,101.8 567.3,101.8 562.9,100.5 554.4,100.5ZM576.0,101.9 584.6,101.9 580.0,100.5 571.4,100.5ZM593.3,101.9 602.0,101.9 597.0,100.5 588.5,100.5Z" fill="#c8c8c8"/><path d="M-10.7,99.5 -2.4,99.5 2.2,98.2 -6.0,98.2ZM6.0,99.5 14.3,99.5 18.7,98.3 10.5,98.2ZM22.7,99.6 31.1,99.6 35.2,98.3 26.9,98.3ZM39.4,99.6 47.8,99.6 51.6,98.3 43.4,98.3ZM56.2,99.6 64.5,99.6 68.1,98.3 59.9,98.3ZM72.9,99.6 81.3,99.7 84.6,98.4 76.4,98.4ZM89.7,99.7 98.1,99.7 101.1,98.4 92.9,98.4ZM106.4,99.7 114.8,99.7 117.6,98.4 109.4,98.4ZM123.2,99.7 131.6,99.7 134.1,98.5 125.9,98.4ZM140.0,99.8 148.4,99.8 150.7,98.5 142.4,98.5ZM156.8,99.8 165.2,99.8 167.2,98.5 158.9,98.5ZM173.6,99.8 182.0,99.8 183.8,98.5 175.5,98.5ZM190.4,99.8 198.8,99.9 200.3,98.6 192.0,98.6ZM207.3,99.9 215.7,99.9 216.9,98.6 208.6,98.6ZM224.1,99.9 232.5,99.9 233.5,98.6 225.2,98.6ZM240.9,99.9 249.4,99.9 250.1,98.6 241.8,98.6ZM257.8,100.0 266.2,100.0 266.6,98.7 258.3,98.7ZM274.7,100.0 283.1,100.0 283.3,98.7 275.0,98.7ZM291.5,100.0 300.0,100.0 299.9,98.7 291.6,98.7ZM308.4,100.0 316.9,100.1 316.5,98.8 308.2,98.7ZM325.3,100.1 333.8,100.1 333.1,98.8 324.8,98.8ZM342.2,100.1 350.7,100.1 349.8,98.8 341.5,98.8ZM359.1,100.1 367.6,100.1 366.4,98.8 358.1,98.8ZM376.1,100.2 384.5,100.2 383.1,98.9 374.8,98.9ZM393.0,100.2 401.5,100.2 399.8,98.9 391.4,98.9ZM410.0,100.2 418.4,100.2 416.5,98.9 408.1,98.9ZM426.9,100.3 435.4,100.3 433.1,99.0 424.8,98.9ZM443.9,100.3 452.4,100.3 449.9,99.0 441.5,99.0ZM460.9,100.3 469.3,100.3 466.6,99.0 458.2,99.0ZM477.8,100.3 486.3,100.4 483.3,99.0 474.9,99.0ZM494.8,100.4 503.3,100.4 500.0,99.1 491.7,99.1ZM511.8,100.4 520.3,100.4 516.8,99.1 508.4,99.1ZM528.9,100.4 537.4,100.4 533.5,99.1 525.1,99.1ZM545.9,100.5 554.4,100.5 550.3,99.2 541.9,99.1ZM562.9,100.5 571.4,100.5 567.0,99.2 558.7,99.2ZM580.0,100.5 588.5,100.5 583.8,99.2 575.4,99.2Z" fill="#c8c8c8"/><path d="M-14.2,98.2 -6.0,98.2 -1.4,97.0 -9.5,97.0ZM2.2,98.2 10.5,98.2 14.8,97.0 6.7,97.0ZM18.7,98.3 26.9,98.3 31.0,97.0 22.9,97.0ZM35.2,98.3 43.4,98.3 47.2,97.1 39.1,97.0ZM51.6,98.3 59.9,98.3 63.5,97.1 55.3,97.1ZM68.1,98.3 76.4,98.4 79.7,97.1 71.6,97.1ZM84.6,98.4 92.9,98.4 95.9,97.1 87.8,97.1ZM101.1,98.4 109.4,98.4 112.2,97.2 104.1,97.1ZM117.6,98.4 125.9,98.4 128.5,97.2 120.3,97.2ZM134.1,98.5 142.4,98.5 144.7,97.2 136.6,97.2ZM150.7,98.5 158.9,98.5 161.0,97.2 152.9,97.2ZM167.2,98.5 175.5,98.5 177.3,97.3 169.2,97.3ZM183.8,98.5 192.0,98.6 193.6,97.3 185.4,97.3ZM200.3,98.6 208.6,98.6 209.9,97.3 201.7,97.3ZM216.9,98.6 225.2,98.6 226.2,97.4 218.1,97.3ZM233.5,98.6 241.8,98.6 242.5,97.4 234.4,97.4ZM250.1,98.6 258.3,98.7 258.9,97.4 250.7,97.4ZM266.6,98.7 275.0,98.7 275.2,97.4 267.1,97.4ZM283.3,98.7 291.6,98.7 291.6,97.5 283.4,97.4ZM299.9,98.7 308.2,98.7 307.9,97.5 299.8,97.5ZM316.5,98.8 324.8,98.8 324.3,97.5 316.1,97.5ZM333.1,98.8 341.5,98.8 340.7,97.5 332.5,97.5ZM349.8,98.8 358.1,98.8 357.1,97.6 348.9,97.6ZM366.4,98.8 374.8,98.9 373.5,97.6 365.3,97.6ZM383.1,98.9 391.4,98.9 389.9,97.6 381.7,97.6ZM399.8,98.9 408.1,98.9 406.3,97.7 398.1,97.6ZM416.5,98.9 424.8,98.9 422.8,97.7 414.5,97.7ZM433.1,99.0 441.5,99.0 439.2,97.7 431.0,97.7ZM449.9,99.0 458.2,99.0 455.6,97.7 447.4,97.7ZM466.6,99.0 474.9,99.0 472.1,97.8 463.9,97.7ZM483.3,99.0 491.7,99.1 488.6,97.8 480.3,97.8ZM500.0,99.1 508.4,99.1 505.0,97.8 496.8,97.8ZM516.8,99.1 525.1,99.1 521.5,97.8 513.3,97.8ZM533.5,99.1 541.9,99.1 538.0,97.9 529.8,97.9ZM550.3,99.2 558.7,99.2 554.5,97.9 546.3,97.9ZM567.0,99.2 575.4,99.2 571.0,97.9 562.8,97.9ZM583.8,99.2 592.2,99.2 587.6,98.0 579.3,97.9Z" fill="#c8c8c8"/><path d="M-17.6,96.9 -9.5,97.0 -4.9,95.8 -12.9,95.7ZM-1.4,97.0 6.7,97.0 11.1,95.8 3.1,95.8ZM14.8,97.0 22.9,97.0 27.0,95.8 19.0,95.8ZM31.0,97.0 39.1,97.0 43.0,95.8 35.0,95.8ZM47.2,97.1 55.3,97.1 59.0,95.9 51.0,95.8ZM63.5,97.1 71.6,97.1 74.9,95.9 66.9,95.9ZM79.7,97.1 87.8,97.1 90.9,95.9 82.9,95.9ZM95.9,97.1 104.1,97.1 106.9,95.9 98.9,95.9ZM112.2,97.2 120.3,97.2 122.9,96.0 114.9,95.9ZM128.5,97.2 136.6,97.2 139.0,96.0 131.0,96.0ZM144.7,97.2 152.9,97.2 155.0,96.0 147.0,96.0ZM161.0,97.2 169.2,97.3 171.0,96.0 163.0,96.0ZM177.3,97.3 185.4,97.3 187.1,96.1 179.1,96.1ZM193.6,97.3 201.7,97.3 203.1,96.1 195.1,96.1ZM209.9,97.3 218.1,97.3 219.2,96.1 211.2,96.1ZM226.2,97.4 234.4,97.4 235.3,96.1 227.2,96.1ZM242.5,97.4 250.7,97.4 251.4,96.2 243.3,96.2ZM258.9,97.4 267.1,97.4 267.5,96.2 259.4,96.2ZM275.2,97.4 283.4,97.4 283.6,96.2 275.5,96.2ZM291.6,97.5 299.8,97.5 299.7,96.3 291.6,96.2ZM307.9,97.5 316.1,97.5 315.8,96.3 307.7,96.3ZM324.3,97.5 332.5,97.5 331.9,96.3 323.8,96.3ZM340.7,97.5 348.9,97.6 348.0,96.3 340.0,96.3ZM357.1,97.6 365.3,97.6 364.2,96.4 356.1,96.3ZM373.5,97.6 381.7,97.6 380.3,96.4 372.3,96.4ZM389.9,97.6 398.1,97.6 396.5,96.4 388.4,96.4ZM406.3,97.7 414.5,97.7 412.7,96.4 404.6,96.4ZM422.8,97.7 431.0,97.7 428.9,96.5 420.8,96.5ZM439.2,97.7 447.4,97.7 445.1,96.5 437.0,96.5ZM455.6,97.7 463.9,97.7 461.3,96.5 453.2,96.5ZM472.1,97.8 480.3,97.8 477.5,96.5 469.4,96.5ZM488.6,97.8 496.8,97.8 493.7,96.6 485.6,96.6ZM505.0,97.8 513.3,97.8 509.9,96.6 501.8,96.6ZM521.5,97.8 529.8,97.9 526.1,96.6 518.0,96.6ZM538.0,97.9 546.3,97.9 542.4,96.7 534.3,96.6ZM554.5,97.9 562.8,97.9 558.6,96.7 550.5,96.7ZM571.0,97.9 579.3,97.9 574.9,96.7 566.8,96.7ZM587.6,98.0 595.8,98.0 591.2,96.7 583.0,96.7Z" fill="#c8c8c8"/><path d="M-20.8,95.7 -12.9,95.7 -8.3,94.6 -16.2,94.6ZM-4.9,95.8 3.1,95.8 7.4,94.6 -0.5,94.6ZM11.1,95.8 19.0,95.8 23.1,94.6 15.3,94.6ZM27.0,95.8 35.0,95.8 38.8,94.6 31.0,94.6ZM43.0,95.8 51.0,95.8 54.6,94.7 46.7,94.7ZM59.0,95.9 66.9,95.9 70.3,94.7 62.5,94.7ZM74.9,95.9 82.9,95.9 86.1,94.7 78.2,94.7ZM90.9,95.9 98.9,95.9 101.8,94.7 94.0,94.7ZM106.9,95.9 114.9,95.9 117.6,94.8 109.7,94.8ZM122.9,96.0 131.0,96.0 133.4,94.8 125.5,94.8ZM139.0,96.0 147.0,96.0 149.2,94.8 141.3,94.8ZM155.0,96.0 163.0,96.0 165.0,94.9 157.1,94.8ZM171.0,96.0 179.1,96.1 180.8,94.9 172.9,94.9ZM187.1,96.1 195.1,96.1 196.6,94.9 188.7,94.9ZM203.1,96.1 211.2,96.1 212.4,94.9 204.5,94.9ZM219.2,96.1 227.2,96.1 228.2,95.0 220.3,94.9ZM235.3,96.1 243.3,96.2 244.1,95.0 236.1,95.0ZM251.4,96.2 259.4,96.2 259.9,95.0 252.0,95.0ZM267.5,96.2 275.5,96.2 275.8,95.0 267.8,95.0ZM283.6,96.2 291.6,96.2 291.6,95.1 283.7,95.0ZM299.7,96.3 307.7,96.3 307.5,95.1 299.6,95.1ZM315.8,96.3 323.8,96.3 323.4,95.1 315.4,95.1ZM331.9,96.3 340.0,96.3 339.3,95.1 331.3,95.1ZM348.0,96.3 356.1,96.3 355.2,95.2 347.2,95.1ZM364.2,96.4 372.3,96.4 371.1,95.2 363.1,95.2ZM380.3,96.4 388.4,96.4 387.0,95.2 379.0,95.2ZM396.5,96.4 404.6,96.4 402.9,95.2 395.0,95.2ZM412.7,96.4 420.8,96.5 418.8,95.3 410.9,95.2ZM428.9,96.5 437.0,96.5 434.8,95.3 426.8,95.3ZM445.1,96.5 453.2,96.5 450.7,95.3 442.8,95.3ZM461.3,96.5 469.4,96.5 466.7,95.3 458.7,95.3ZM477.5,96.5 485.6,96.6 482.7,95.4 474.7,95.4ZM493.7,96.6 501.8,96.6 498.6,95.4 490.7,95.4ZM509.9,96.6 518.0,96.6 514.6,95.4 506.6,95.4ZM526.1,96.6 534.3,96.6 530.6,95.4 522.6,95.4ZM542.4,96.7 550.5,96.7 546.6,95.5 538.6,95.5ZM558.6,96.7 566.8,96.7 562.6,95.5 554.6,95.5ZM574.9,96.7 583.0,96.7 578.7,95.5 570.7,95.5ZM591.2,96.7 599.3,96.7 594.7,95.5 586.7,95.5Z" fill="#c8c8c8"/><path d="M-8.3,94.6 -0.5,94.6 3.9,93.4 -3.9,93.4ZM7.4,94.6 15.3,94.6 19.4,93.5 11.6,93.5ZM23.1,94.6 31.0,94.6 34.8,93.5 27.1,93.5ZM38.8,94.6 46.7,94.7 50.3,93.5 42.6,93.5ZM54.6,94.7 62.5,94.7 65.8,93.5 58.1,93.5ZM70.3,94.7 78.2,94.7 81.4,93.6 73.6,93.6ZM86.1,94.7 94.0,94.7 96.9,93.6 89.1,93.6ZM101.8,94.7 109.7,94.8 112.4,93.6 104.7,93.6ZM117.6,94.8 125.5,94.8 128.0,93.6 120.2,93.6ZM133.4,94.8 141.3,94.8 143.5,93.7 135.7,93.7ZM149.2,94.8 157.1,94.8 159.1,93.7 151.3,93.7ZM165.0,94.9 172.9,94.9 174.6,93.7 166.8,93.7ZM180.8,94.9 188.7,94.9 190.2,93.7 182.4,93.7ZM196.6,94.9 204.5,94.9 205.8,93.8 198.0,93.8ZM212.4,94.9 220.3,94.9 221.4,93.8 213.6,93.8ZM228.2,95.0 236.1,95.0 237.0,93.8 229.2,93.8ZM244.1,95.0 252.0,95.0 252.6,93.8 244.8,93.8ZM259.9,95.0 267.8,95.0 268.2,93.9 260.4,93.9ZM275.8,95.0 283.7,95.0 283.8,93.9 276.0,93.9ZM291.6,95.1 299.6,95.1 299.5,93.9 291.6,93.9ZM307.5,95.1 315.4,95.1 315.1,93.9 307.3,93.9ZM323.4,95.1 331.3,95.1 330.8,94.0 322.9,94.0ZM339.3,95.1 347.2,95.1 346.4,94.0 338.6,94.0ZM355.2,95.2 363.1,95.2 362.1,94.0 354.2,94.0ZM371.1,95.2 379.0,95.2 377.8,94.0 369.9,94.0ZM387.0,95.2 395.0,95.2 393.4,94.1 385.6,94.1ZM402.9,95.2 410.9,95.2 409.1,94.1 401.3,94.1ZM418.8,95.3 426.8,95.3 424.8,94.1 417.0,94.1ZM434.8,95.3 442.8,95.3 440.5,94.1 432.7,94.1ZM450.7,95.3 458.7,95.3 456.3,94.2 448.4,94.2ZM466.7,95.3 474.7,95.4 472.0,94.2 464.1,94.2ZM482.7,95.4 490.7,95.4 487.7,94.2 479.9,94.2ZM498.6,95.4 506.6,95.4 503.5,94.2 495.6,94.2ZM514.6,95.4 522.6,95.4 519.2,94.3 511.3,94.3ZM530.6,95.4 538.6,95.5 535.0,94.3 527.1,94.3ZM546.6,95.5 554.6,95.5 550.7,94.3 542.9,94.3ZM562.6,95.5 570.7,95.5 566.5,94.3 558.6,94.3ZM578.7,95.5 586.7,95.5 582.3,94.4 574.4,94.4ZM594.7,95.5 602.7,95.6 598.1,94.4 590.2,94.4Z" fill="#c8c8c8"/><path d="M-11.6,93.4 -3.9,93.4 0.4,92.3 -7.2,92.3ZM3.9,93.4 11.6,93.5 15.7,92.4 8.1,92.3ZM19.4,93.5 27.1,93.5 31.0,92.4 23.3,92.4ZM34.8,93.5 42.6,93.5 46.2,92.4 38.6,92.4ZM50.3,93.5 58.1,93.5 61.5,92.4 53.9,92.4ZM65.8,93.5 73.6,93.6 76.8,92.5 69.1,92.4ZM81.4,93.6 89.1,93.6 92.1,92.5 84.4,92.5ZM96.9,93.6 104.7,93.6 107.4,92.5 99.7,92.5ZM112.4,93.6 120.2,93.6 122.7,92.5 115.0,92.5ZM128.0,93.6 135.7,93.7 138.0,92.5 130.4,92.5ZM143.5,93.7 151.3,93.7 153.3,92.6 145.7,92.6ZM159.1,93.7 166.8,93.7 168.7,92.6 161.0,92.6ZM174.6,93.7 182.4,93.7 184.0,92.6 176.4,92.6ZM190.2,93.7 198.0,93.8 199.4,92.6 191.7,92.6ZM205.8,93.8 213.6,93.8 214.7,92.7 207.1,92.7ZM221.4,93.8 229.2,93.8 230.1,92.7 222.4,92.7ZM237.0,93.8 244.8,93.8 245.5,92.7 237.8,92.7ZM252.6,93.8 260.4,93.9 260.9,92.7 253.2,92.7ZM268.2,93.9 276.0,93.9 276.3,92.8 268.6,92.8ZM283.8,93.9 291.6,93.9 291.7,92.8 284.0,92.8ZM299.5,93.9 307.3,93.9 307.1,92.8 299.4,92.8ZM315.1,93.9 322.9,94.0 322.5,92.8 314.8,92.8ZM330.8,94.0 338.6,94.0 337.9,92.9 330.2,92.9ZM346.4,94.0 354.2,94.0 353.4,92.9 345.6,92.9ZM362.1,94.0 369.9,94.0 368.8,92.9 361.1,92.9ZM377.8,94.0 385.6,94.1 384.2,92.9 376.5,92.9ZM393.4,94.1 401.3,94.1 399.7,93.0 392.0,92.9ZM409.1,94.1 417.0,94.1 415.2,93.0 407.4,93.0ZM424.8,94.1 432.7,94.1 430.6,93.0 422.9,93.0ZM440.5,94.1 448.4,94.2 446.1,93.0 438.4,93.0ZM456.3,94.2 464.1,94.2 461.6,93.1 453.9,93.0ZM472.0,94.2 479.9,94.2 477.1,93.1 469.4,93.1ZM487.7,94.2 495.6,94.2 492.6,93.1 484.9,93.1ZM503.5,94.2 511.3,94.3 508.1,93.1 500.4,93.1ZM519.2,94.3 527.1,94.3 523.7,93.2 515.9,93.1ZM535.0,94.3 542.9,94.3 539.2,93.2 531.4,93.2ZM550.7,94.3 558.6,94.3 554.7,93.2 547.0,93.2ZM566.5,94.3 574.4,94.4 570.3,93.2 562.5,93.2ZM582.3,94.4 590.2,94.4 585.9,93.3 578.1,93.2Z" fill="#c8c8c8"/><path d="M-14.8,92.3 -7.2,92.3 -2.9,91.2 -10.4,91.2ZM0.4,92.3 8.1,92.3 12.1,91.3 4.6,91.3ZM15.7,92.4 23.3,92.4 27.2,91.3 19.7,91.3ZM31.0,92.4 38.6,92.4 42.2,91.3 34.7,91.3ZM46.2,92.4 53.9,92.4 57.3,91.3 49.8,91.3ZM61.5,92.4 69.1,92.4 72.3,91.4 64.8,91.4ZM76.8,92.5 84.4,92.5 87.4,91.4 79.9,91.4ZM92.1,92.5 99.7,92.5 102.5,91.4 95.0,91.4ZM107.4,92.5 115.0,92.5 117.6,91.4 110.0,91.4ZM122.7,92.5 130.4,92.5 132.7,91.5 125.1,91.4ZM138.0,92.5 145.7,92.6 147.8,91.5 140.2,91.5ZM153.3,92.6 161.0,92.6 162.9,91.5 155.3,91.5ZM168.7,92.6 176.4,92.6 178.0,91.5 170.5,91.5ZM184.0,92.6 191.7,92.6 193.2,91.6 185.6,91.5ZM199.4,92.6 207.1,92.7 208.3,91.6 200.7,91.6ZM214.7,92.7 222.4,92.7 223.4,91.6 215.9,91.6ZM230.1,92.7 237.8,92.7 238.6,91.6 231.0,91.6ZM245.5,92.7 253.2,92.7 253.7,91.6 246.2,91.6ZM260.9,92.7 268.6,92.8 268.9,91.7 261.3,91.7ZM276.3,92.8 284.0,92.8 284.1,91.7 276.5,91.7ZM291.7,92.8 299.4,92.8 299.3,91.7 291.7,91.7ZM307.1,92.8 314.8,92.8 314.5,91.7 306.9,91.7ZM322.5,92.8 330.2,92.9 329.7,91.8 322.1,91.8ZM337.9,92.9 345.6,92.9 344.9,91.8 337.3,91.8ZM353.4,92.9 361.1,92.9 360.1,91.8 352.5,91.8ZM368.8,92.9 376.5,92.9 375.3,91.8 367.7,91.8ZM384.2,92.9 392.0,92.9 390.5,91.9 382.9,91.9ZM399.7,93.0 407.4,93.0 405.8,91.9 398.2,91.9ZM415.2,93.0 422.9,93.0 421.0,91.9 413.4,91.9ZM430.6,93.0 438.4,93.0 436.3,91.9 428.7,91.9ZM446.1,93.0 453.9,93.0 451.6,92.0 443.9,91.9ZM461.6,93.1 469.4,93.1 466.8,92.0 459.2,92.0ZM477.1,93.1 484.9,93.1 482.1,92.0 474.5,92.0ZM492.6,93.1 500.4,93.1 497.4,92.0 489.8,92.0ZM508.1,93.1 515.9,93.1 512.7,92.1 505.0,92.0ZM523.7,93.2 531.4,93.2 528.0,92.1 520.3,92.1ZM539.2,93.2 547.0,93.2 543.3,92.1 535.7,92.1ZM554.7,93.2 562.5,93.2 558.6,92.1 551.0,92.1ZM570.3,93.2 578.1,93.2 574.0,92.1 566.3,92.1ZM585.9,93.3 593.6,93.3 589.3,92.2 581.6,92.2Z" fill="#c8c8c8"/><path d="M-17.9,91.2 -10.4,91.2 -6.1,90.2 -13.5,90.2ZM-2.9,91.2 4.6,91.3 8.7,90.2 1.3,90.2ZM12.1,91.3 19.7,91.3 23.5,90.2 16.1,90.2ZM27.2,91.3 34.7,91.3 38.3,90.3 30.9,90.3ZM42.2,91.3 49.8,91.3 53.2,90.3 45.8,90.3ZM57.3,91.3 64.8,91.4 68.0,90.3 60.6,90.3ZM72.3,91.4 79.9,91.4 82.9,90.3 75.5,90.3ZM87.4,91.4 95.0,91.4 97.8,90.4 90.3,90.3ZM102.5,91.4 110.0,91.4 112.6,90.4 105.2,90.4ZM117.6,91.4 125.1,91.4 127.5,90.4 120.1,90.4ZM132.7,91.5 140.2,91.5 142.4,90.4 135.0,90.4ZM147.8,91.5 155.3,91.5 157.3,90.4 149.8,90.4ZM162.9,91.5 170.5,91.5 172.2,90.5 164.7,90.5ZM178.0,91.5 185.6,91.5 187.1,90.5 179.6,90.5ZM193.2,91.6 200.7,91.6 202.0,90.5 194.6,90.5ZM208.3,91.6 215.9,91.6 217.0,90.5 209.5,90.5ZM223.4,91.6 231.0,91.6 231.9,90.6 224.4,90.6ZM238.6,91.6 246.2,91.6 246.8,90.6 239.4,90.6ZM253.7,91.6 261.3,91.7 261.8,90.6 254.3,90.6ZM268.9,91.7 276.5,91.7 276.7,90.6 269.3,90.6ZM284.1,91.7 291.7,91.7 291.7,90.7 284.2,90.6ZM299.3,91.7 306.9,91.7 306.7,90.7 299.2,90.7ZM314.5,91.7 322.1,91.8 321.7,90.7 314.2,90.7ZM329.7,91.8 337.3,91.8 336.6,90.7 329.1,90.7ZM344.9,91.8 352.5,91.8 351.6,90.7 344.1,90.7ZM360.1,91.8 367.7,91.8 366.6,90.8 359.1,90.8ZM375.3,91.8 382.9,91.9 381.7,90.8 374.1,90.8ZM390.5,91.9 398.2,91.9 396.7,90.8 389.2,90.8ZM405.8,91.9 413.4,91.9 411.7,90.8 404.2,90.8ZM421.0,91.9 428.7,91.9 426.7,90.9 419.2,90.9ZM436.3,91.9 443.9,91.9 441.8,90.9 434.3,90.9ZM451.6,92.0 459.2,92.0 456.8,90.9 449.3,90.9ZM466.8,92.0 474.5,92.0 471.9,90.9 464.4,90.9ZM482.1,92.0 489.8,92.0 487.0,91.0 479.4,90.9ZM497.4,92.0 505.0,92.0 502.0,91.0 494.5,91.0ZM512.7,92.1 520.3,92.1 517.1,91.0 509.6,91.0ZM528.0,92.1 535.7,92.1 532.2,91.0 524.7,91.0ZM543.3,92.1 551.0,92.1 547.3,91.0 539.7,91.0ZM558.6,92.1 566.3,92.1 562.4,91.1 554.9,91.1ZM574.0,92.1 581.6,92.2 577.5,91.1 570.0,91.1ZM589.3,92.2 597.0,92.2 592.6,91.1 585.1,91.1Z" fill="#c8c8c8"/><path d="M-21.0,90.2 -13.5,90.2 -9.3,89.2 -16.6,89.2ZM-6.1,90.2 1.3,90.2 5.3,89.2 -2.0,89.2ZM8.7,90.2 16.1,90.2 19.9,89.2 12.6,89.2ZM23.5,90.2 30.9,90.3 34.6,89.2 27.3,89.2ZM38.3,90.3 45.8,90.3 49.2,89.3 41.9,89.2ZM53.2,90.3 60.6,90.3 63.8,89.3 56.5,89.3ZM68.0,90.3 75.5,90.3 78.5,89.3 71.2,89.3ZM82.9,90.3 90.3,90.3 93.1,89.3 85.8,89.3ZM97.8,90.4 105.2,90.4 107.8,89.3 100.5,89.3ZM112.6,90.4 120.1,90.4 122.5,89.4 115.1,89.4ZM127.5,90.4 135.0,90.4 137.2,89.4 129.8,89.4ZM142.4,90.4 149.8,90.4 151.8,89.4 144.5,89.4ZM157.3,90.4 164.7,90.5 166.5,89.4 159.2,89.4ZM172.2,90.5 179.6,90.5 181.2,89.5 173.9,89.5ZM187.1,90.5 194.6,90.5 195.9,89.5 188.6,89.5ZM202.0,90.5 209.5,90.5 210.7,89.5 203.3,89.5ZM217.0,90.5 224.4,90.6 225.4,89.5 218.0,89.5ZM231.9,90.6 239.4,90.6 240.1,89.6 232.7,89.5ZM246.8,90.6 254.3,90.6 254.8,89.6 247.5,89.6ZM261.8,90.6 269.3,90.6 269.6,89.6 262.2,89.6ZM276.7,90.6 284.2,90.6 284.3,89.6 277.0,89.6ZM291.7,90.7 299.2,90.7 299.1,89.6 291.7,89.6ZM306.7,90.7 314.2,90.7 313.9,89.7 306.5,89.7ZM321.7,90.7 329.1,90.7 328.6,89.7 321.3,89.7ZM336.6,90.7 344.1,90.7 343.4,89.7 336.0,89.7ZM351.6,90.7 359.1,90.8 358.2,89.7 350.8,89.7ZM366.6,90.8 374.1,90.8 373.0,89.8 365.6,89.7ZM381.7,90.8 389.2,90.8 387.8,89.8 380.4,89.8ZM396.7,90.8 404.2,90.8 402.6,89.8 395.2,89.8ZM411.7,90.8 419.2,90.9 417.5,89.8 410.0,89.8ZM426.7,90.9 434.3,90.9 432.3,89.8 424.9,89.8ZM441.8,90.9 449.3,90.9 447.1,89.9 439.7,89.9ZM456.8,90.9 464.4,90.9 462.0,89.9 454.5,89.9ZM471.9,90.9 479.4,90.9 476.8,89.9 469.4,89.9ZM487.0,91.0 494.5,91.0 491.7,89.9 484.2,89.9ZM502.0,91.0 509.6,91.0 506.5,90.0 499.1,89.9ZM517.1,91.0 524.7,91.0 521.4,90.0 514.0,90.0ZM532.2,91.0 539.7,91.0 536.3,90.0 528.8,90.0ZM547.3,91.0 554.9,91.1 551.2,90.0 543.7,90.0ZM562.4,91.1 570.0,91.1 566.1,90.1 558.6,90.0ZM577.5,91.1 585.1,91.1 581.0,90.1 573.5,90.1ZM592.6,91.1 600.2,91.1 595.9,90.1 588.4,90.1Z" fill="#c8c8c8"/><path d="M-9.3,89.2 -2.0,89.2 2.1,88.2 -5.1,88.2ZM5.3,89.2 12.6,89.2 16.5,88.2 9.3,88.2ZM19.9,89.2 27.3,89.2 30.9,88.2 23.7,88.2ZM34.6,89.2 41.9,89.2 45.3,88.3 38.1,88.3ZM49.2,89.3 56.5,89.3 59.8,88.3 52.5,88.3ZM63.8,89.3 71.2,89.3 74.2,88.3 67.0,88.3ZM78.5,89.3 85.8,89.3 88.7,88.3 81.4,88.3ZM93.1,89.3 100.5,89.3 103.1,88.4 95.9,88.3ZM107.8,89.3 115.1,89.4 117.6,88.4 110.3,88.4ZM122.5,89.4 129.8,89.4 132.1,88.4 124.8,88.4ZM137.2,89.4 144.5,89.4 146.5,88.4 139.3,88.4ZM151.8,89.4 159.2,89.4 161.0,88.4 153.8,88.4ZM166.5,89.4 173.9,89.5 175.5,88.5 168.3,88.4ZM181.2,89.5 188.6,89.5 190.0,88.5 182.8,88.5ZM195.9,89.5 203.3,89.5 204.5,88.5 197.3,88.5ZM210.7,89.5 218.0,89.5 219.0,88.5 211.8,88.5ZM225.4,89.5 232.7,89.5 233.6,88.5 226.3,88.5ZM240.1,89.6 247.5,89.6 248.1,88.6 240.8,88.6ZM254.8,89.6 262.2,89.6 262.6,88.6 255.4,88.6ZM269.6,89.6 277.0,89.6 277.2,88.6 269.9,88.6ZM284.3,89.6 291.7,89.6 291.7,88.6 284.5,88.6ZM299.1,89.6 306.5,89.7 306.3,88.7 299.0,88.6ZM313.9,89.7 321.3,89.7 320.9,88.7 313.6,88.7ZM328.6,89.7 336.0,89.7 335.4,88.7 328.1,88.7ZM343.4,89.7 350.8,89.7 350.0,88.7 342.7,88.7ZM358.2,89.7 365.6,89.7 364.6,88.7 357.3,88.7ZM373.0,89.8 380.4,89.8 379.2,88.8 371.9,88.8ZM387.8,89.8 395.2,89.8 393.8,88.8 386.5,88.8ZM402.6,89.8 410.0,89.8 408.4,88.8 401.1,88.8ZM417.5,89.8 424.9,89.8 423.0,88.8 415.7,88.8ZM432.3,89.8 439.7,89.9 437.7,88.9 430.4,88.8ZM447.1,89.9 454.5,89.9 452.3,88.9 445.0,88.9ZM462.0,89.9 469.4,89.9 466.9,88.9 459.6,88.9ZM476.8,89.9 484.2,89.9 481.6,88.9 474.3,88.9ZM491.7,89.9 499.1,89.9 496.2,88.9 488.9,88.9ZM506.5,90.0 514.0,90.0 510.9,89.0 503.6,89.0ZM521.4,90.0 528.8,90.0 525.6,89.0 518.2,89.0ZM536.3,90.0 543.7,90.0 540.3,89.0 532.9,89.0ZM551.2,90.0 558.6,90.0 554.9,89.0 547.6,89.0ZM566.1,90.1 573.5,90.1 569.6,89.1 562.3,89.0ZM581.0,90.1 588.4,90.1 584.3,89.1 577.0,89.1Z" fill="#c8c8c8"/><path d="M-12.4,88.2 -5.1,88.2 -1.1,87.2 -8.2,87.2ZM2.1,88.2 9.3,88.2 13.1,87.3 6.0,87.2ZM16.5,88.2 23.7,88.2 27.3,87.3 20.2,87.3ZM30.9,88.2 38.1,88.3 41.6,87.3 34.4,87.3ZM45.3,88.3 52.5,88.3 55.8,87.3 48.7,87.3ZM59.8,88.3 67.0,88.3 70.0,87.3 62.9,87.3ZM74.2,88.3 81.4,88.3 84.3,87.4 77.2,87.3ZM88.7,88.3 95.9,88.3 98.6,87.4 91.4,87.4ZM103.1,88.4 110.3,88.4 112.8,87.4 105.7,87.4ZM117.6,88.4 124.8,88.4 127.1,87.4 120.0,87.4ZM132.1,88.4 139.3,88.4 141.4,87.4 134.2,87.4ZM146.5,88.4 153.8,88.4 155.7,87.5 148.5,87.5ZM161.0,88.4 168.3,88.4 170.0,87.5 162.8,87.5ZM175.5,88.5 182.8,88.5 184.3,87.5 177.1,87.5ZM190.0,88.5 197.3,88.5 198.6,87.5 191.4,87.5ZM204.5,88.5 211.8,88.5 212.9,87.5 205.7,87.5ZM219.0,88.5 226.3,88.5 227.2,87.6 220.0,87.6ZM233.6,88.5 240.8,88.6 241.5,87.6 234.4,87.6ZM248.1,88.6 255.4,88.6 255.9,87.6 248.7,87.6ZM262.6,88.6 269.9,88.6 270.2,87.6 263.0,87.6ZM277.2,88.6 284.5,88.6 284.6,87.7 277.4,87.6ZM291.7,88.6 299.0,88.6 298.9,87.7 291.8,87.7ZM306.3,88.7 313.6,88.7 313.3,87.7 306.1,87.7ZM320.9,88.7 328.1,88.7 327.7,87.7 320.5,87.7ZM335.4,88.7 342.7,88.7 342.1,87.7 334.9,87.7ZM350.0,88.7 357.3,88.7 356.4,87.8 349.2,87.8ZM364.6,88.7 371.9,88.8 370.8,87.8 363.6,87.8ZM379.2,88.8 386.5,88.8 385.2,87.8 378.0,87.8ZM393.8,88.8 401.1,88.8 399.6,87.8 392.4,87.8ZM408.4,88.8 415.7,88.8 414.1,87.9 406.9,87.8ZM423.0,88.8 430.4,88.8 428.5,87.9 421.3,87.9ZM437.7,88.9 445.0,88.9 442.9,87.9 435.7,87.9ZM452.3,88.9 459.6,88.9 457.4,87.9 450.1,87.9ZM466.9,88.9 474.3,88.9 471.8,87.9 464.6,87.9ZM481.6,88.9 488.9,88.9 486.2,88.0 479.0,87.9ZM496.2,88.9 503.6,89.0 500.7,88.0 493.5,88.0ZM510.9,89.0 518.2,89.0 515.2,88.0 507.9,88.0ZM525.6,89.0 532.9,89.0 529.6,88.0 522.4,88.0ZM540.3,89.0 547.6,89.0 544.1,88.0 536.9,88.0ZM554.9,89.0 562.3,89.0 558.6,88.1 551.4,88.1ZM569.6,89.1 577.0,89.1 573.1,88.1 565.9,88.1ZM584.3,89.1 591.7,89.1 587.6,88.1 580.4,88.1Z" fill="#c8c8c8"/><path d="M-15.3,87.2 -8.2,87.2 -4.2,86.3 -11.2,86.3ZM-1.1,87.2 6.0,87.2 9.8,86.3 2.8,86.3ZM13.1,87.3 20.2,87.3 23.8,86.3 16.8,86.3ZM27.3,87.3 34.4,87.3 37.9,86.3 30.9,86.3ZM41.6,87.3 48.7,87.3 51.9,86.4 44.9,86.4ZM55.8,87.3 62.9,87.3 66.0,86.4 59.0,86.4ZM70.0,87.3 77.2,87.3 80.0,86.4 73.0,86.4ZM84.3,87.4 91.4,87.4 94.1,86.4 87.1,86.4ZM98.6,87.4 105.7,87.4 108.2,86.5 101.1,86.4ZM112.8,87.4 120.0,87.4 122.3,86.5 115.2,86.5ZM127.1,87.4 134.2,87.4 136.4,86.5 129.3,86.5ZM141.4,87.4 148.5,87.5 150.4,86.5 143.4,86.5ZM155.7,87.5 162.8,87.5 164.5,86.5 157.5,86.5ZM170.0,87.5 177.1,87.5 178.7,86.6 171.6,86.5ZM184.3,87.5 191.4,87.5 192.8,86.6 185.7,86.6ZM198.6,87.5 205.7,87.5 206.9,86.6 199.8,86.6ZM212.9,87.5 220.0,87.6 221.0,86.6 214.0,86.6ZM227.2,87.6 234.4,87.6 235.2,86.6 228.1,86.6ZM241.5,87.6 248.7,87.6 249.3,86.7 242.2,86.7ZM255.9,87.6 263.0,87.6 263.4,86.7 256.4,86.7ZM270.2,87.6 277.4,87.6 277.6,86.7 270.5,86.7ZM284.6,87.7 291.8,87.7 291.8,86.7 284.7,86.7ZM298.9,87.7 306.1,87.7 305.9,86.7 298.9,86.7ZM313.3,87.7 320.5,87.7 320.1,86.8 313.0,86.8ZM327.7,87.7 334.9,87.7 334.3,86.8 327.2,86.8ZM342.1,87.7 349.2,87.8 348.5,86.8 341.4,86.8ZM356.4,87.8 363.6,87.8 362.7,86.8 355.6,86.8ZM370.8,87.8 378.0,87.8 376.9,86.9 369.8,86.8ZM385.2,87.8 392.4,87.8 391.1,86.9 384.0,86.9ZM399.6,87.8 406.9,87.8 405.3,86.9 398.2,86.9ZM414.1,87.9 421.3,87.9 419.5,86.9 412.4,86.9ZM428.5,87.9 435.7,87.9 433.8,86.9 426.7,86.9ZM442.9,87.9 450.1,87.9 448.0,87.0 440.9,86.9ZM457.4,87.9 464.6,87.9 462.3,87.0 455.1,87.0ZM471.8,87.9 479.0,87.9 476.5,87.0 469.4,87.0ZM486.2,88.0 493.5,88.0 490.8,87.0 483.6,87.0ZM500.7,88.0 507.9,88.0 505.0,87.0 497.9,87.0ZM515.2,88.0 522.4,88.0 519.3,87.1 512.2,87.1ZM529.6,88.0 536.9,88.0 533.6,87.1 526.5,87.1ZM544.1,88.0 551.4,88.1 547.9,87.1 540.7,87.1ZM558.6,88.1 565.9,88.1 562.2,87.1 555.0,87.1ZM573.1,88.1 580.4,88.1 576.5,87.1 569.3,87.1ZM587.6,88.1 594.9,88.1 590.8,87.2 583.6,87.2Z" fill="#c8c8c8"/><path d="M-18.2,86.3 -11.2,86.3 -7.2,85.4 -14.1,85.4ZM-4.2,86.3 2.8,86.3 6.6,85.4 -0.3,85.4ZM9.8,86.3 16.8,86.3 20.5,85.4 13.5,85.4ZM23.8,86.3 30.9,86.3 34.3,85.4 27.4,85.4ZM37.9,86.3 44.9,86.4 48.2,85.5 41.2,85.4ZM51.9,86.4 59.0,86.4 62.0,85.5 55.1,85.5ZM66.0,86.4 73.0,86.4 75.9,85.5 69.0,85.5ZM80.0,86.4 87.1,86.4 89.8,85.5 82.9,85.5ZM94.1,86.4 101.1,86.4 103.7,85.5 96.7,85.5ZM108.2,86.5 115.2,86.5 117.6,85.6 110.6,85.5ZM122.3,86.5 129.3,86.5 131.5,85.6 124.5,85.6ZM136.4,86.5 143.4,86.5 145.4,85.6 138.4,85.6ZM150.4,86.5 157.5,86.5 159.3,85.6 152.3,85.6ZM164.5,86.5 171.6,86.5 173.2,85.6 166.2,85.6ZM178.7,86.6 185.7,86.6 187.1,85.7 180.2,85.6ZM192.8,86.6 199.8,86.6 201.1,85.7 194.1,85.7ZM206.9,86.6 214.0,86.6 215.0,85.7 208.0,85.7ZM221.0,86.6 228.1,86.6 228.9,85.7 222.0,85.7ZM235.2,86.6 242.2,86.7 242.9,85.7 235.9,85.7ZM249.3,86.7 256.4,86.7 256.9,85.8 249.9,85.7ZM263.4,86.7 270.5,86.7 270.8,85.8 263.8,85.8ZM277.6,86.7 284.7,86.7 284.8,85.8 277.8,85.8ZM291.8,86.7 298.9,86.7 298.8,85.8 291.8,85.8ZM305.9,86.7 313.0,86.8 312.8,85.8 305.8,85.8ZM320.1,86.8 327.2,86.8 326.8,85.9 319.8,85.8ZM334.3,86.8 341.4,86.8 340.8,85.9 333.7,85.9ZM348.5,86.8 355.6,86.8 354.8,85.9 347.8,85.9ZM362.7,86.8 369.8,86.8 368.8,85.9 361.8,85.9ZM376.9,86.9 384.0,86.9 382.8,85.9 375.8,85.9ZM391.1,86.9 398.2,86.9 396.8,86.0 389.8,86.0ZM405.3,86.9 412.4,86.9 410.8,86.0 403.8,86.0ZM419.5,86.9 426.7,86.9 424.9,86.0 417.9,86.0ZM433.8,86.9 440.9,86.9 438.9,86.0 431.9,86.0ZM448.0,87.0 455.1,87.0 453.0,86.0 446.0,86.0ZM462.3,87.0 469.4,87.0 467.1,86.1 460.0,86.1ZM476.5,87.0 483.6,87.0 481.1,86.1 474.1,86.1ZM490.8,87.0 497.9,87.0 495.2,86.1 488.2,86.1ZM505.0,87.0 512.2,87.1 509.3,86.1 502.2,86.1ZM519.3,87.1 526.5,87.1 523.4,86.1 516.3,86.1ZM533.6,87.1 540.7,87.1 537.5,86.2 530.4,86.2ZM547.9,87.1 555.0,87.1 551.6,86.2 544.5,86.2ZM562.2,87.1 569.3,87.1 565.7,86.2 558.6,86.2ZM576.5,87.1 583.6,87.2 579.8,86.2 572.7,86.2ZM590.8,87.2 598.0,87.2 593.9,86.2 586.8,86.2Z" fill="#c8c8c8"/><path d="M-7.2,85.4 -0.3,85.4 3.5,84.5 -3.3,84.5ZM6.6,85.4 13.5,85.4 17.2,84.5 10.3,84.5ZM20.5,85.4 27.4,85.4 30.8,84.5 24.0,84.5ZM34.3,85.4 41.2,85.4 44.5,84.6 37.7,84.5ZM48.2,85.5 55.1,85.5 58.2,84.6 51.4,84.6ZM62.0,85.5 69.0,85.5 71.9,84.6 65.0,84.6ZM75.9,85.5 82.9,85.5 85.6,84.6 78.7,84.6ZM89.8,85.5 96.7,85.5 99.3,84.6 92.4,84.6ZM103.7,85.5 110.6,85.5 113.0,84.7 106.1,84.6ZM117.6,85.6 124.5,85.6 126.7,84.7 119.9,84.7ZM131.5,85.6 138.4,85.6 140.4,84.7 133.6,84.7ZM145.4,85.6 152.3,85.6 154.2,84.7 147.3,84.7ZM159.3,85.6 166.2,85.6 167.9,84.7 161.0,84.7ZM173.2,85.6 180.2,85.6 181.6,84.8 174.8,84.7ZM187.1,85.7 194.1,85.7 195.4,84.8 188.5,84.8ZM201.1,85.7 208.0,85.7 209.1,84.8 202.3,84.8ZM215.0,85.7 222.0,85.7 222.9,84.8 216.0,84.8ZM228.9,85.7 235.9,85.7 236.7,84.8 229.8,84.8ZM242.9,85.7 249.9,85.7 250.4,84.9 243.5,84.8ZM256.9,85.8 263.8,85.8 264.2,84.9 257.3,84.9ZM270.8,85.8 277.8,85.8 278.0,84.9 271.1,84.9ZM284.8,85.8 291.8,85.8 291.8,84.9 284.9,84.9ZM298.8,85.8 305.8,85.8 305.6,84.9 298.7,84.9ZM312.8,85.8 319.8,85.8 319.4,85.0 312.5,84.9ZM326.8,85.9 333.7,85.9 333.2,85.0 326.3,85.0ZM340.8,85.9 347.8,85.9 347.0,85.0 340.1,85.0ZM354.8,85.9 361.8,85.9 360.9,85.0 353.9,85.0ZM368.8,85.9 375.8,85.9 374.7,85.0 367.8,85.0ZM382.8,85.9 389.8,86.0 388.5,85.1 381.6,85.0ZM396.8,86.0 403.8,86.0 402.4,85.1 395.5,85.1ZM410.8,86.0 417.9,86.0 416.2,85.1 409.3,85.1ZM424.9,86.0 431.9,86.0 430.1,85.1 423.2,85.1ZM438.9,86.0 446.0,86.0 444.0,85.1 437.0,85.1ZM453.0,86.0 460.0,86.1 457.8,85.2 450.9,85.1ZM467.1,86.1 474.1,86.1 471.7,85.2 464.8,85.2ZM481.1,86.1 488.2,86.1 485.6,85.2 478.7,85.2ZM495.2,86.1 502.2,86.1 499.5,85.2 492.5,85.2ZM509.3,86.1 516.3,86.1 513.4,85.2 506.4,85.2ZM523.4,86.1 530.4,86.2 527.3,85.3 520.3,85.2ZM537.5,86.2 544.5,86.2 541.2,85.3 534.3,85.3ZM551.6,86.2 558.6,86.2 555.1,85.3 548.2,85.3ZM565.7,86.2 572.7,86.2 569.1,85.3 562.1,85.3ZM579.8,86.2 586.8,86.2 583.0,85.3 576.0,85.3Z" fill="#c8c8c8"/><path d="M-10.1,84.5 -3.3,84.5 0.5,83.6 -6.3,83.6ZM3.5,84.5 10.3,84.5 14.0,83.6 7.2,83.6ZM17.2,84.5 24.0,84.5 27.5,83.7 20.7,83.7ZM30.8,84.5 37.7,84.5 41.0,83.7 34.2,83.7ZM44.5,84.6 51.4,84.6 54.5,83.7 47.7,83.7ZM58.2,84.6 65.0,84.6 68.0,83.7 61.2,83.7ZM71.9,84.6 78.7,84.6 81.5,83.7 74.7,83.7ZM85.6,84.6 92.4,84.6 95.0,83.8 88.2,83.8ZM99.3,84.6 106.1,84.6 108.5,83.8 101.8,83.8ZM113.0,84.7 119.9,84.7 122.1,83.8 115.3,83.8ZM126.7,84.7 133.6,84.7 135.6,83.8 128.8,83.8ZM140.4,84.7 147.3,84.7 149.2,83.8 142.4,83.8ZM154.2,84.7 161.0,84.7 162.7,83.9 155.9,83.8ZM167.9,84.7 174.8,84.7 176.3,83.9 169.5,83.9ZM181.6,84.8 188.5,84.8 189.8,83.9 183.1,83.9ZM195.4,84.8 202.3,84.8 203.4,83.9 196.6,83.9ZM209.1,84.8 216.0,84.8 217.0,83.9 210.2,83.9ZM222.9,84.8 229.8,84.8 230.6,84.0 223.8,83.9ZM236.7,84.8 243.5,84.8 244.2,84.0 237.4,84.0ZM250.4,84.9 257.3,84.9 257.8,84.0 251.0,84.0ZM264.2,84.9 271.1,84.9 271.4,84.0 264.6,84.0ZM278.0,84.9 284.9,84.9 285.0,84.0 278.2,84.0ZM291.8,84.9 298.7,84.9 298.6,84.1 291.8,84.0ZM305.6,84.9 312.5,84.9 312.2,84.1 305.4,84.1ZM319.4,85.0 326.3,85.0 325.9,84.1 319.1,84.1ZM333.2,85.0 340.1,85.0 339.5,84.1 332.7,84.1ZM347.0,85.0 353.9,85.0 353.2,84.1 346.3,84.1ZM360.9,85.0 367.8,85.0 366.8,84.2 360.0,84.1ZM374.7,85.0 381.6,85.0 380.5,84.2 373.6,84.2ZM388.5,85.1 395.5,85.1 394.1,84.2 387.3,84.2ZM402.4,85.1 409.3,85.1 407.8,84.2 401.0,84.2ZM416.2,85.1 423.2,85.1 421.5,84.2 414.6,84.2ZM430.1,85.1 437.0,85.1 435.2,84.2 428.3,84.2ZM444.0,85.1 450.9,85.1 448.9,84.3 442.0,84.3ZM457.8,85.2 464.8,85.2 462.6,84.3 455.7,84.3ZM471.7,85.2 478.7,85.2 476.3,84.3 469.4,84.3ZM485.6,85.2 492.5,85.2 490.0,84.3 483.1,84.3ZM499.5,85.2 506.4,85.2 503.7,84.3 496.8,84.3ZM513.4,85.2 520.3,85.2 517.4,84.4 510.5,84.4ZM527.3,85.3 534.3,85.3 531.1,84.4 524.3,84.4ZM541.2,85.3 548.2,85.3 544.9,84.4 538.0,84.4ZM555.1,85.3 562.1,85.3 558.6,84.4 551.7,84.4ZM569.1,85.3 576.0,85.3 572.4,84.4 565.5,84.4ZM583.0,85.3 590.0,85.3 586.1,84.5 579.2,84.5Z" fill="#c8c8c8"/><path d="M-13.0,83.6 -6.3,83.6 -2.5,82.8 -9.1,82.8ZM0.5,83.6 7.2,83.6 10.8,82.8 4.2,82.8ZM14.0,83.6 20.7,83.7 24.2,82.8 17.5,82.8ZM27.5,83.7 34.2,83.7 37.5,82.8 30.8,82.8ZM41.0,83.7 47.7,83.7 50.8,82.9 44.1,82.8ZM54.5,83.7 61.2,83.7 64.1,82.9 57.5,82.9ZM68.0,83.7 74.7,83.7 77.5,82.9 70.8,82.9ZM81.5,83.7 88.2,83.8 90.8,82.9 84.2,82.9ZM95.0,83.8 101.8,83.8 104.2,82.9 97.5,82.9ZM108.5,83.8 115.3,83.8 117.6,82.9 110.9,82.9ZM122.1,83.8 128.8,83.8 130.9,83.0 124.2,83.0ZM135.6,83.8 142.4,83.8 144.3,83.0 137.6,83.0ZM149.2,83.8 155.9,83.8 157.7,83.0 151.0,83.0ZM162.7,83.9 169.5,83.9 171.1,83.0 164.4,83.0ZM176.3,83.9 183.1,83.9 184.5,83.0 177.8,83.0ZM189.8,83.9 196.6,83.9 197.9,83.1 191.2,83.1ZM203.4,83.9 210.2,83.9 211.3,83.1 204.6,83.1ZM217.0,83.9 223.8,83.9 224.7,83.1 218.0,83.1ZM230.6,84.0 237.4,84.0 238.1,83.1 231.4,83.1ZM244.2,84.0 251.0,84.0 251.5,83.1 244.8,83.1ZM257.8,84.0 264.6,84.0 264.9,83.2 258.2,83.1ZM271.4,84.0 278.2,84.0 278.4,83.2 271.7,83.2ZM285.0,84.0 291.8,84.0 291.8,83.2 285.1,83.2ZM298.6,84.1 305.4,84.1 305.3,83.2 298.5,83.2ZM312.2,84.1 319.1,84.1 318.7,83.2 312.0,83.2ZM325.9,84.1 332.7,84.1 332.2,83.3 325.5,83.2ZM339.5,84.1 346.3,84.1 345.7,83.3 338.9,83.3ZM353.2,84.1 360.0,84.1 359.1,83.3 352.4,83.3ZM366.8,84.2 373.6,84.2 372.6,83.3 365.9,83.3ZM380.5,84.2 387.3,84.2 386.1,83.3 379.4,83.3ZM394.1,84.2 401.0,84.2 399.6,83.3 392.8,83.3ZM407.8,84.2 414.6,84.2 413.1,83.4 406.3,83.4ZM421.5,84.2 428.3,84.2 426.6,83.4 419.8,83.4ZM435.2,84.2 442.0,84.3 440.1,83.4 433.4,83.4ZM448.9,84.3 455.7,84.3 453.6,83.4 446.9,83.4ZM462.6,84.3 469.4,84.3 467.1,83.4 460.4,83.4ZM476.3,84.3 483.1,84.3 480.7,83.5 473.9,83.5ZM490.0,84.3 496.8,84.3 494.2,83.5 487.4,83.5ZM503.7,84.3 510.5,84.4 507.8,83.5 501.0,83.5ZM517.4,84.4 524.3,84.4 521.3,83.5 514.5,83.5ZM531.1,84.4 538.0,84.4 534.9,83.5 528.1,83.5ZM544.9,84.4 551.7,84.4 548.4,83.6 541.6,83.6ZM558.6,84.4 565.5,84.4 562.0,83.6 555.2,83.6ZM572.4,84.4 579.2,84.5 575.6,83.6 568.8,83.6ZM586.1,84.5 593.0,84.5 589.2,83.6 582.4,83.6Z" fill="#c8c8c8"/><path d="M-15.8,82.8 -9.1,82.8 -5.4,82.0 -11.9,81.9ZM-2.5,82.8 4.2,82.8 7.8,82.0 1.2,82.0ZM10.8,82.8 17.5,82.8 20.9,82.0 14.4,82.0ZM24.2,82.8 30.8,82.8 34.1,82.0 27.5,82.0ZM37.5,82.8 44.1,82.8 47.3,82.0 40.7,82.0ZM50.8,82.9 57.5,82.9 60.4,82.0 53.8,82.0ZM64.1,82.9 70.8,82.9 73.6,82.1 67.0,82.1ZM77.5,82.9 84.2,82.9 86.8,82.1 80.2,82.1ZM90.8,82.9 97.5,82.9 100.0,82.1 93.4,82.1ZM104.2,82.9 110.9,82.9 113.2,82.1 106.6,82.1ZM117.6,82.9 124.2,83.0 126.4,82.1 119.8,82.1ZM130.9,83.0 137.6,83.0 139.6,82.2 133.0,82.1ZM144.3,83.0 151.0,83.0 152.8,82.2 146.2,82.2ZM157.7,83.0 164.4,83.0 166.0,82.2 159.4,82.2ZM171.1,83.0 177.8,83.0 179.2,82.2 172.6,82.2ZM184.5,83.0 191.2,83.1 192.4,82.2 185.8,82.2ZM197.9,83.1 204.6,83.1 205.7,82.2 199.1,82.2ZM211.3,83.1 218.0,83.1 218.9,82.3 212.3,82.3ZM224.7,83.1 231.4,83.1 232.2,82.3 225.5,82.3ZM238.1,83.1 244.8,83.1 245.4,82.3 238.8,82.3ZM251.5,83.1 258.2,83.1 258.7,82.3 252.0,82.3ZM264.9,83.2 271.7,83.2 271.9,82.3 265.3,82.3ZM278.4,83.2 285.1,83.2 285.2,82.4 278.6,82.4ZM291.8,83.2 298.5,83.2 298.5,82.4 291.8,82.4ZM305.3,83.2 312.0,83.2 311.8,82.4 305.1,82.4ZM318.7,83.2 325.5,83.2 325.1,82.4 318.4,82.4ZM332.2,83.3 338.9,83.3 338.3,82.4 331.7,82.4ZM345.7,83.3 352.4,83.3 351.6,82.5 345.0,82.4ZM359.1,83.3 365.9,83.3 365.0,82.5 358.3,82.5ZM372.6,83.3 379.4,83.3 378.3,82.5 371.6,82.5ZM386.1,83.3 392.8,83.3 391.6,82.5 384.9,82.5ZM399.6,83.3 406.3,83.4 404.9,82.5 398.2,82.5ZM413.1,83.4 419.8,83.4 418.2,82.5 411.6,82.5ZM426.6,83.4 433.4,83.4 431.6,82.6 424.9,82.6ZM440.1,83.4 446.9,83.4 444.9,82.6 438.3,82.6ZM453.6,83.4 460.4,83.4 458.3,82.6 451.6,82.6ZM467.1,83.4 473.9,83.5 471.6,82.6 465.0,82.6ZM480.7,83.5 487.4,83.5 485.0,82.6 478.3,82.6ZM494.2,83.5 501.0,83.5 498.4,82.7 491.7,82.6ZM507.8,83.5 514.5,83.5 511.7,82.7 505.1,82.7ZM521.3,83.5 528.1,83.5 525.1,82.7 518.4,82.7ZM534.9,83.5 541.6,83.6 538.5,82.7 531.8,82.7ZM548.4,83.6 555.2,83.6 551.9,82.7 545.2,82.7ZM562.0,83.6 568.8,83.6 565.3,82.8 558.6,82.7ZM575.6,83.6 582.4,83.6 578.7,82.8 572.0,82.8ZM589.2,83.6 595.9,83.6 592.1,82.8 585.4,82.8Z" fill="#c8c8c8"/><path d="M-18.5,81.9 -11.9,81.9 -8.2,81.1 -14.6,81.1ZM-5.4,82.0 1.2,82.0 4.8,81.2 -1.7,81.2ZM7.8,82.0 14.4,82.0 17.8,81.2 11.3,81.2ZM20.9,82.0 27.5,82.0 30.8,81.2 24.3,81.2ZM34.1,82.0 40.7,82.0 43.8,81.2 37.3,81.2ZM47.3,82.0 53.8,82.0 56.8,81.2 50.3,81.2ZM60.4,82.0 67.0,82.1 69.8,81.3 63.3,81.2ZM73.6,82.1 80.2,82.1 82.8,81.3 76.3,81.3ZM86.8,82.1 93.4,82.1 95.8,81.3 89.3,81.3ZM100.0,82.1 106.6,82.1 108.9,81.3 102.4,81.3ZM113.2,82.1 119.8,82.1 121.9,81.3 115.4,81.3ZM126.4,82.1 133.0,82.1 134.9,81.3 128.4,81.3ZM139.6,82.2 146.2,82.2 148.0,81.4 141.5,81.4ZM152.8,82.2 159.4,82.2 161.0,81.4 154.5,81.4ZM166.0,82.2 172.6,82.2 174.1,81.4 167.6,81.4ZM179.2,82.2 185.8,82.2 187.1,81.4 180.6,81.4ZM192.4,82.2 199.1,82.2 200.2,81.4 193.7,81.4ZM205.7,82.2 212.3,82.3 213.3,81.5 206.8,81.4ZM218.9,82.3 225.5,82.3 226.4,81.5 219.8,81.5ZM232.2,82.3 238.8,82.3 239.5,81.5 232.9,81.5ZM245.4,82.3 252.0,82.3 252.5,81.5 246.0,81.5ZM258.7,82.3 265.3,82.3 265.6,81.5 259.1,81.5ZM271.9,82.3 278.6,82.4 278.7,81.5 272.2,81.5ZM285.2,82.4 291.8,82.4 291.9,81.6 285.3,81.6ZM298.5,82.4 305.1,82.4 305.0,81.6 298.4,81.6ZM311.8,82.4 318.4,82.4 318.1,81.6 311.5,81.6ZM325.1,82.4 331.7,82.4 331.2,81.6 324.7,81.6ZM338.3,82.4 345.0,82.4 344.3,81.6 337.8,81.6ZM351.6,82.5 358.3,82.5 357.5,81.7 350.9,81.6ZM365.0,82.5 371.6,82.5 370.6,81.7 364.1,81.7ZM378.3,82.5 384.9,82.5 383.8,81.7 377.2,81.7ZM391.6,82.5 398.2,82.5 396.9,81.7 390.4,81.7ZM404.9,82.5 411.6,82.5 410.1,81.7 403.5,81.7ZM418.2,82.5 424.9,82.6 423.3,81.7 416.7,81.7ZM431.6,82.6 438.3,82.6 436.4,81.8 429.9,81.8ZM444.9,82.6 451.6,82.6 449.6,81.8 443.0,81.8ZM458.3,82.6 465.0,82.6 462.8,81.8 456.2,81.8ZM471.6,82.6 478.3,82.6 476.0,81.8 469.4,81.8ZM485.0,82.6 491.7,82.6 489.2,81.8 482.6,81.8ZM498.4,82.7 505.1,82.7 502.4,81.9 495.8,81.8ZM511.7,82.7 518.4,82.7 515.6,81.9 509.0,81.9ZM525.1,82.7 531.8,82.7 528.8,81.9 522.2,81.9ZM538.5,82.7 545.2,82.7 542.1,81.9 535.4,81.9ZM551.9,82.7 558.6,82.7 555.3,81.9 548.7,81.9ZM565.3,82.8 572.0,82.8 568.5,81.9 561.9,81.9ZM578.7,82.8 585.4,82.8 581.8,82.0 575.1,82.0ZM592.1,82.8 598.8,82.8 595.0,82.0 588.4,82.0Z" fill="#c8c8c8"/><path d="M-8.2,81.1 -1.7,81.2 1.9,80.4 -4.5,80.4ZM4.8,81.2 11.3,81.2 14.7,80.4 8.3,80.4ZM17.8,81.2 24.3,81.2 27.6,80.4 21.2,80.4ZM30.8,81.2 37.3,81.2 40.4,80.4 34.0,80.4ZM43.8,81.2 50.3,81.2 53.3,80.4 46.8,80.4ZM56.8,81.2 63.3,81.2 66.1,80.5 59.7,80.5ZM69.8,81.3 76.3,81.3 79.0,80.5 72.5,80.5ZM82.8,81.3 89.3,81.3 91.8,80.5 85.4,80.5ZM95.8,81.3 102.4,81.3 104.7,80.5 98.2,80.5ZM108.9,81.3 115.4,81.3 117.6,80.5 111.1,80.5ZM121.9,81.3 128.4,81.3 130.4,80.6 124.0,80.5ZM134.9,81.3 141.5,81.4 143.3,80.6 136.9,80.6ZM148.0,81.4 154.5,81.4 156.2,80.6 149.8,80.6ZM161.0,81.4 167.6,81.4 169.1,80.6 162.6,80.6ZM174.1,81.4 180.6,81.4 182.0,80.6 175.5,80.6ZM187.1,81.4 193.7,81.4 194.9,80.6 188.4,80.6ZM200.2,81.4 206.8,81.4 207.8,80.7 201.3,80.7ZM213.3,81.5 219.8,81.5 220.7,80.7 214.3,80.7ZM226.4,81.5 232.9,81.5 233.6,80.7 227.2,80.7ZM239.5,81.5 246.0,81.5 246.6,80.7 240.1,80.7ZM252.5,81.5 259.1,81.5 259.5,80.7 253.0,80.7ZM265.6,81.5 272.2,81.5 272.4,80.7 266.0,80.7ZM278.7,81.5 285.3,81.6 285.4,80.8 278.9,80.8ZM291.9,81.6 298.4,81.6 298.3,80.8 291.9,80.8ZM305.0,81.6 311.5,81.6 311.3,80.8 304.8,80.8ZM318.1,81.6 324.7,81.6 324.3,80.8 317.8,80.8ZM331.2,81.6 337.8,81.6 337.2,80.8 330.7,80.8ZM344.3,81.6 350.9,81.6 350.2,80.9 343.7,80.8ZM357.5,81.7 364.1,81.7 363.2,80.9 356.7,80.9ZM370.6,81.7 377.2,81.7 376.2,80.9 369.7,80.9ZM383.8,81.7 390.4,81.7 389.2,80.9 382.7,80.9ZM396.9,81.7 403.5,81.7 402.2,80.9 395.7,80.9ZM410.1,81.7 416.7,81.7 415.2,80.9 408.7,80.9ZM423.3,81.7 429.9,81.8 428.2,81.0 421.7,81.0ZM436.4,81.8 443.0,81.8 441.2,81.0 434.7,81.0ZM449.6,81.8 456.2,81.8 454.2,81.0 447.7,81.0ZM462.8,81.8 469.4,81.8 467.2,81.0 460.7,81.0ZM476.0,81.8 482.6,81.8 480.3,81.0 473.8,81.0ZM489.2,81.8 495.8,81.8 493.3,81.1 486.8,81.0ZM502.4,81.9 509.0,81.9 506.4,81.1 499.8,81.1ZM515.6,81.9 522.2,81.9 519.4,81.1 512.9,81.1ZM528.8,81.9 535.4,81.9 532.5,81.1 525.9,81.1ZM542.1,81.9 548.7,81.9 545.5,81.1 539.0,81.1ZM555.3,81.9 561.9,81.9 558.6,81.1 552.1,81.1ZM568.5,81.9 575.1,82.0 571.7,81.2 565.1,81.2ZM581.8,82.0 588.4,82.0 584.7,81.2 578.2,81.2Z" fill="#c8c8c8"/><path d="M-10.9,80.4 -4.5,80.4 -0.9,79.6 -7.2,79.6ZM1.9,80.4 8.3,80.4 11.8,79.6 5.4,79.6ZM14.7,80.4 21.2,80.4 24.4,79.6 18.1,79.6ZM27.6,80.4 34.0,80.4 37.1,79.7 30.8,79.7ZM40.4,80.4 46.8,80.4 49.8,79.7 43.5,79.7ZM53.3,80.4 59.7,80.5 62.5,79.7 56.1,79.7ZM66.1,80.5 72.5,80.5 75.2,79.7 68.8,79.7ZM79.0,80.5 85.4,80.5 87.9,79.7 81.5,79.7ZM91.8,80.5 98.2,80.5 100.6,79.7 94.2,79.7ZM104.7,80.5 111.1,80.5 113.3,79.8 107.0,79.8ZM117.6,80.5 124.0,80.5 126.0,79.8 119.7,79.8ZM130.4,80.6 136.9,80.6 138.8,79.8 132.4,79.8ZM143.3,80.6 149.8,80.6 151.5,79.8 145.1,79.8ZM156.2,80.6 162.6,80.6 164.2,79.8 157.8,79.8ZM169.1,80.6 175.5,80.6 177.0,79.9 170.6,79.8ZM182.0,80.6 188.4,80.6 189.7,79.9 183.3,79.9ZM194.9,80.6 201.3,80.7 202.5,79.9 196.1,79.9ZM207.8,80.7 214.3,80.7 215.2,79.9 208.8,79.9ZM220.7,80.7 227.2,80.7 228.0,79.9 221.6,79.9ZM233.6,80.7 240.1,80.7 240.7,79.9 234.4,79.9ZM246.6,80.7 253.0,80.7 253.5,80.0 247.1,79.9ZM259.5,80.7 266.0,80.7 266.3,80.0 259.9,80.0ZM272.4,80.7 278.9,80.8 279.1,80.0 272.7,80.0ZM285.4,80.8 291.9,80.8 291.9,80.0 285.5,80.0ZM298.3,80.8 304.8,80.8 304.7,80.0 298.3,80.0ZM311.3,80.8 317.8,80.8 317.5,80.0 311.1,80.0ZM324.3,80.8 330.7,80.8 330.3,80.1 323.9,80.1ZM337.2,80.8 343.7,80.8 343.1,80.1 336.7,80.1ZM350.2,80.9 356.7,80.9 355.9,80.1 349.5,80.1ZM363.2,80.9 369.7,80.9 368.7,80.1 362.3,80.1ZM376.2,80.9 382.7,80.9 381.6,80.1 375.2,80.1ZM389.2,80.9 395.7,80.9 394.4,80.1 388.0,80.1ZM402.2,80.9 408.7,80.9 407.3,80.2 400.8,80.2ZM415.2,80.9 421.7,81.0 420.1,80.2 413.7,80.2ZM428.2,81.0 434.7,81.0 433.0,80.2 426.5,80.2ZM441.2,81.0 447.7,81.0 445.8,80.2 439.4,80.2ZM454.2,81.0 460.7,81.0 458.7,80.2 452.3,80.2ZM467.2,81.0 473.8,81.0 471.6,80.3 465.1,80.2ZM480.3,81.0 486.8,81.0 484.4,80.3 478.0,80.3ZM493.3,81.1 499.8,81.1 497.3,80.3 490.9,80.3ZM506.4,81.1 512.9,81.1 510.2,80.3 503.8,80.3ZM519.4,81.1 525.9,81.1 523.1,80.3 516.7,80.3ZM532.5,81.1 539.0,81.1 536.0,80.3 529.6,80.3ZM545.5,81.1 552.1,81.1 548.9,80.4 542.5,80.3ZM558.6,81.1 565.1,81.2 561.8,80.4 555.4,80.4ZM571.7,81.2 578.2,81.2 574.7,80.4 568.3,80.4ZM584.7,81.2 591.3,81.2 587.7,80.4 581.2,80.4Z" fill="#c8c8c8"/><path d="M-13.6,79.6 -7.2,79.6 -3.7,78.9 -9.9,78.9ZM-0.9,79.6 5.4,79.6 8.8,78.9 2.6,78.9ZM11.8,79.6 18.1,79.6 21.4,78.9 15.1,78.9ZM24.4,79.6 30.8,79.7 33.9,78.9 27.6,78.9ZM37.1,79.7 43.5,79.7 46.4,78.9 40.2,78.9ZM49.8,79.7 56.1,79.7 59.0,78.9 52.7,78.9ZM62.5,79.7 68.8,79.7 71.5,79.0 65.2,79.0ZM75.2,79.7 81.5,79.7 84.1,79.0 77.8,79.0ZM87.9,79.7 94.2,79.7 96.6,79.0 90.3,79.0ZM100.6,79.7 107.0,79.8 109.2,79.0 102.9,79.0ZM113.3,79.8 119.7,79.8 121.7,79.0 115.5,79.0ZM126.0,79.8 132.4,79.8 134.3,79.0 128.0,79.0ZM138.8,79.8 145.1,79.8 146.9,79.1 140.6,79.1ZM151.5,79.8 157.8,79.8 159.5,79.1 153.2,79.1ZM164.2,79.8 170.6,79.8 172.0,79.1 165.8,79.1ZM177.0,79.9 183.3,79.9 184.6,79.1 178.3,79.1ZM189.7,79.9 196.1,79.9 197.2,79.1 190.9,79.1ZM202.5,79.9 208.8,79.9 209.8,79.1 203.5,79.1ZM215.2,79.9 221.6,79.9 222.4,79.2 216.1,79.2ZM228.0,79.9 234.4,79.9 235.1,79.2 228.8,79.2ZM240.7,79.9 247.1,79.9 247.7,79.2 241.4,79.2ZM253.5,80.0 259.9,80.0 260.3,79.2 254.0,79.2ZM266.3,80.0 272.7,80.0 272.9,79.2 266.6,79.2ZM279.1,80.0 285.5,80.0 285.6,79.3 279.3,79.2ZM291.9,80.0 298.3,80.0 298.2,79.3 291.9,79.3ZM304.7,80.0 311.1,80.0 310.9,79.3 304.5,79.3ZM317.5,80.0 323.9,80.1 323.5,79.3 317.2,79.3ZM330.3,80.1 336.7,80.1 336.2,79.3 329.8,79.3ZM343.1,80.1 349.5,80.1 348.8,79.3 342.5,79.3ZM355.9,80.1 362.3,80.1 361.5,79.4 355.2,79.3ZM368.7,80.1 375.2,80.1 374.2,79.4 367.8,79.4ZM381.6,80.1 388.0,80.1 386.9,79.4 380.5,79.4ZM394.4,80.1 400.8,80.2 399.5,79.4 393.2,79.4ZM407.3,80.2 413.7,80.2 412.2,79.4 405.9,79.4ZM420.1,80.2 426.5,80.2 424.9,79.4 418.6,79.4ZM433.0,80.2 439.4,80.2 437.6,79.5 431.3,79.4ZM445.8,80.2 452.3,80.2 450.3,79.5 444.0,79.5ZM458.7,80.2 465.1,80.2 463.1,79.5 456.7,79.5ZM471.6,80.3 478.0,80.3 475.8,79.5 469.4,79.5ZM484.4,80.3 490.9,80.3 488.5,79.5 482.1,79.5ZM497.3,80.3 503.8,80.3 501.2,79.5 494.9,79.5ZM510.2,80.3 516.7,80.3 514.0,79.6 507.6,79.6ZM523.1,80.3 529.6,80.3 526.7,79.6 520.3,79.6ZM536.0,80.3 542.5,80.3 539.5,79.6 533.1,79.6ZM548.9,80.4 555.4,80.4 552.2,79.6 545.8,79.6ZM561.8,80.4 568.3,80.4 565.0,79.6 558.6,79.6ZM574.7,80.4 581.2,80.4 577.7,79.6 571.3,79.6ZM587.7,80.4 594.1,80.4 590.5,79.7 584.1,79.7Z" fill="#c8c8c8"/><path d="M-16.2,78.8 -9.9,78.9 -6.4,78.1 -12.5,78.1ZM-3.7,78.9 2.6,78.9 6.0,78.1 -0.2,78.1ZM8.8,78.9 15.1,78.9 18.4,78.2 12.2,78.2ZM21.4,78.9 27.6,78.9 30.8,78.2 24.6,78.2ZM33.9,78.9 40.2,78.9 43.1,78.2 36.9,78.2ZM46.4,78.9 52.7,78.9 55.5,78.2 49.3,78.2ZM59.0,78.9 65.2,79.0 67.9,78.2 61.7,78.2ZM71.5,79.0 77.8,79.0 80.3,78.2 74.1,78.2ZM84.1,79.0 90.3,79.0 92.7,78.3 86.5,78.3ZM96.6,79.0 102.9,79.0 105.1,78.3 98.9,78.3ZM109.2,79.0 115.5,79.0 117.5,78.3 111.3,78.3ZM121.7,79.0 128.0,79.0 130.0,78.3 123.8,78.3ZM134.3,79.0 140.6,79.1 142.4,78.3 136.2,78.3ZM146.9,79.1 153.2,79.1 154.8,78.3 148.6,78.3ZM159.5,79.1 165.8,79.1 167.3,78.4 161.0,78.4ZM172.0,79.1 178.3,79.1 179.7,78.4 173.5,78.4ZM184.6,79.1 190.9,79.1 192.1,78.4 185.9,78.4ZM197.2,79.1 203.5,79.1 204.6,78.4 198.4,78.4ZM209.8,79.1 216.1,79.2 217.0,78.4 210.8,78.4ZM222.4,79.2 228.8,79.2 229.5,78.4 223.3,78.4ZM235.1,79.2 241.4,79.2 242.0,78.5 235.7,78.5ZM247.7,79.2 254.0,79.2 254.5,78.5 248.2,78.5ZM260.3,79.2 266.6,79.2 266.9,78.5 260.7,78.5ZM272.9,79.2 279.3,79.2 279.4,78.5 273.2,78.5ZM285.6,79.3 291.9,79.3 291.9,78.5 285.7,78.5ZM298.2,79.3 304.5,79.3 304.4,78.5 298.2,78.5ZM310.9,79.3 317.2,79.3 316.9,78.6 310.6,78.6ZM323.5,79.3 329.8,79.3 329.4,78.6 323.2,78.6ZM336.2,79.3 342.5,79.3 341.9,78.6 335.7,78.6ZM348.8,79.3 355.2,79.3 354.4,78.6 348.2,78.6ZM361.5,79.4 367.8,79.4 367.0,78.6 360.7,78.6ZM374.2,79.4 380.5,79.4 379.5,78.6 373.2,78.6ZM386.9,79.4 393.2,79.4 392.0,78.7 385.7,78.7ZM399.5,79.4 405.9,79.4 404.6,78.7 398.3,78.7ZM412.2,79.4 418.6,79.4 417.1,78.7 410.8,78.7ZM424.9,79.4 431.3,79.4 429.6,78.7 423.4,78.7ZM437.6,79.5 444.0,79.5 442.2,78.7 435.9,78.7ZM450.3,79.5 456.7,79.5 454.8,78.7 448.5,78.7ZM463.1,79.5 469.4,79.5 467.3,78.8 461.0,78.8ZM475.8,79.5 482.1,79.5 479.9,78.8 473.6,78.8ZM488.5,79.5 494.9,79.5 492.5,78.8 486.2,78.8ZM501.2,79.5 507.6,79.6 505.1,78.8 498.8,78.8ZM514.0,79.6 520.3,79.6 517.6,78.8 511.3,78.8ZM526.7,79.6 533.1,79.6 530.2,78.8 523.9,78.8ZM539.5,79.6 545.8,79.6 542.8,78.9 536.5,78.9ZM552.2,79.6 558.6,79.6 555.4,78.9 549.1,78.9ZM565.0,79.6 571.3,79.6 568.0,78.9 561.7,78.9ZM577.7,79.6 584.1,79.7 580.7,78.9 574.3,78.9ZM590.5,79.7 596.9,79.7 593.3,78.9 587.0,78.9Z" fill="#c8c8c8"/><path d="M-18.7,78.1 -12.5,78.1 -9.0,77.4 -15.1,77.4ZM-6.4,78.1 -0.2,78.1 3.2,77.4 -2.9,77.4ZM6.0,78.1 12.2,78.2 15.5,77.4 9.3,77.4ZM18.4,78.2 24.6,78.2 27.7,77.5 21.6,77.5ZM30.8,78.2 36.9,78.2 39.9,77.5 33.8,77.5ZM43.1,78.2 49.3,78.2 52.2,77.5 46.0,77.5ZM55.5,78.2 61.7,78.2 64.4,77.5 58.3,77.5ZM67.9,78.2 74.1,78.2 76.7,77.5 70.5,77.5ZM80.3,78.2 86.5,78.3 88.9,77.5 82.8,77.5ZM92.7,78.3 98.9,78.3 101.2,77.6 95.0,77.6ZM105.1,78.3 111.3,78.3 113.4,77.6 107.3,77.6ZM117.5,78.3 123.8,78.3 125.7,77.6 119.6,77.6ZM130.0,78.3 136.2,78.3 138.0,77.6 131.9,77.6ZM142.4,78.3 148.6,78.3 150.3,77.6 144.1,77.6ZM154.8,78.3 161.0,78.4 162.6,77.6 156.4,77.6ZM167.3,78.4 173.5,78.4 174.9,77.7 168.7,77.7ZM179.7,78.4 185.9,78.4 187.2,77.7 181.0,77.7ZM192.1,78.4 198.4,78.4 199.5,77.7 193.3,77.7ZM204.6,78.4 210.8,78.4 211.8,77.7 205.6,77.7ZM217.0,78.4 223.3,78.4 224.1,77.7 217.9,77.7ZM229.5,78.4 235.7,78.5 236.4,77.7 230.3,77.7ZM242.0,78.5 248.2,78.5 248.7,77.8 242.6,77.7ZM254.5,78.5 260.7,78.5 261.1,77.8 254.9,77.8ZM266.9,78.5 273.2,78.5 273.4,77.8 267.2,77.8ZM279.4,78.5 285.7,78.5 285.7,77.8 279.6,77.8ZM291.9,78.5 298.2,78.5 298.1,77.8 291.9,77.8ZM304.4,78.5 310.6,78.6 310.4,77.8 304.3,77.8ZM316.9,78.6 323.2,78.6 322.8,77.9 316.6,77.8ZM329.4,78.6 335.7,78.6 335.2,77.9 329.0,77.9ZM341.9,78.6 348.2,78.6 347.5,77.9 341.3,77.9ZM354.4,78.6 360.7,78.6 359.9,77.9 353.7,77.9ZM367.0,78.6 373.2,78.6 372.3,77.9 366.1,77.9ZM379.5,78.6 385.7,78.7 384.7,77.9 378.5,77.9ZM392.0,78.7 398.3,78.7 397.1,78.0 390.9,77.9ZM404.6,78.7 410.8,78.7 409.4,78.0 403.2,78.0ZM417.1,78.7 423.4,78.7 421.8,78.0 415.6,78.0ZM429.6,78.7 435.9,78.7 434.2,78.0 428.0,78.0ZM442.2,78.7 448.5,78.7 446.7,78.0 440.5,78.0ZM454.8,78.7 461.0,78.8 459.1,78.0 452.9,78.0ZM467.3,78.8 473.6,78.8 471.5,78.1 465.3,78.0ZM479.9,78.8 486.2,78.8 483.9,78.1 477.7,78.1ZM492.5,78.8 498.8,78.8 496.3,78.1 490.1,78.1ZM505.1,78.8 511.3,78.8 508.8,78.1 502.6,78.1ZM517.6,78.8 523.9,78.8 521.2,78.1 515.0,78.1ZM530.2,78.8 536.5,78.9 533.7,78.1 527.4,78.1ZM542.8,78.9 549.1,78.9 546.1,78.2 539.9,78.1ZM555.4,78.9 561.7,78.9 558.6,78.2 552.4,78.2ZM568.0,78.9 574.3,78.9 571.0,78.2 564.8,78.2ZM580.7,78.9 587.0,78.9 583.5,78.2 577.3,78.2Z" fill="#c8c8c8"/><path d="M-9.0,77.4 -2.9,77.4 0.5,76.7 -5.5,76.7ZM3.2,77.4 9.3,77.4 12.6,76.7 6.6,76.7ZM15.5,77.4 21.6,77.5 24.7,76.8 18.6,76.8ZM27.7,77.5 33.8,77.5 36.8,76.8 30.7,76.8ZM39.9,77.5 46.0,77.5 48.9,76.8 42.8,76.8ZM52.2,77.5 58.3,77.5 61.0,76.8 54.9,76.8ZM64.4,77.5 70.5,77.5 73.1,76.8 67.0,76.8ZM76.7,77.5 82.8,77.5 85.2,76.8 79.2,76.8ZM88.9,77.5 95.0,77.6 97.3,76.9 91.3,76.9ZM101.2,77.6 107.3,77.6 109.5,76.9 103.4,76.9ZM113.4,77.6 119.6,77.6 121.6,76.9 115.5,76.9ZM125.7,77.6 131.9,77.6 133.7,76.9 127.6,76.9ZM138.0,77.6 144.1,77.6 145.9,76.9 139.8,76.9ZM150.3,77.6 156.4,77.6 158.0,76.9 151.9,76.9ZM162.6,77.6 168.7,77.7 170.1,77.0 164.1,76.9ZM174.9,77.7 181.0,77.7 182.3,77.0 176.2,77.0ZM187.2,77.7 193.3,77.7 194.5,77.0 188.4,77.0ZM199.5,77.7 205.6,77.7 206.6,77.0 200.5,77.0ZM211.8,77.7 217.9,77.7 218.8,77.0 212.7,77.0ZM224.1,77.7 230.3,77.7 231.0,77.0 224.9,77.0ZM236.4,77.7 242.6,77.7 243.2,77.1 237.1,77.0ZM248.7,77.8 254.9,77.8 255.3,77.1 249.2,77.1ZM261.1,77.8 267.2,77.8 267.5,77.1 261.4,77.1ZM273.4,77.8 279.6,77.8 279.7,77.1 273.6,77.1ZM285.7,77.8 291.9,77.8 291.9,77.1 285.8,77.1ZM298.1,77.8 304.3,77.8 304.1,77.1 298.0,77.1ZM310.4,77.8 316.6,77.8 316.3,77.1 310.2,77.1ZM322.8,77.9 329.0,77.9 328.6,77.2 322.5,77.2ZM335.2,77.9 341.3,77.9 340.8,77.2 334.7,77.2ZM347.5,77.9 353.7,77.9 353.0,77.2 346.9,77.2ZM359.9,77.9 366.1,77.9 365.2,77.2 359.1,77.2ZM372.3,77.9 378.5,77.9 377.5,77.2 371.4,77.2ZM384.7,77.9 390.9,77.9 389.7,77.2 383.6,77.2ZM397.1,78.0 403.2,78.0 402.0,77.3 395.8,77.3ZM409.4,78.0 415.6,78.0 414.2,77.3 408.1,77.3ZM421.8,78.0 428.0,78.0 426.5,77.3 420.4,77.3ZM434.2,78.0 440.5,78.0 438.7,77.3 432.6,77.3ZM446.7,78.0 452.9,78.0 451.0,77.3 444.9,77.3ZM459.1,78.0 465.3,78.0 463.3,77.3 457.1,77.3ZM471.5,78.1 477.7,78.1 475.6,77.4 469.4,77.3ZM483.9,78.1 490.1,78.1 487.8,77.4 481.7,77.4ZM496.3,78.1 502.6,78.1 500.1,77.4 494.0,77.4ZM508.8,78.1 515.0,78.1 512.4,77.4 506.3,77.4ZM521.2,78.1 527.4,78.1 524.7,77.4 518.6,77.4ZM533.7,78.1 539.9,78.1 537.0,77.4 530.9,77.4ZM546.1,78.2 552.4,78.2 549.3,77.5 543.2,77.4ZM558.6,78.2 564.8,78.2 561.7,77.5 555.5,77.5ZM571.0,78.2 577.3,78.2 574.0,77.5 567.8,77.5ZM583.5,78.2 589.8,78.2 586.3,77.5 580.1,77.5Z" fill="#c8c8c8"/><path d="M-11.6,76.7 -5.5,76.7 -2.1,76.1 -8.1,76.0ZM0.5,76.7 6.6,76.7 9.8,76.1 3.8,76.1ZM12.6,76.7 18.6,76.8 21.8,76.1 15.8,76.1ZM24.7,76.8 30.7,76.8 33.7,76.1 27.7,76.1ZM36.8,76.8 42.8,76.8 45.7,76.1 39.7,76.1ZM48.9,76.8 54.9,76.8 57.6,76.1 51.7,76.1ZM61.0,76.8 67.0,76.8 69.6,76.1 63.6,76.1ZM73.1,76.8 79.2,76.8 81.6,76.2 75.6,76.2ZM85.2,76.8 91.3,76.9 93.6,76.2 87.6,76.2ZM97.3,76.9 103.4,76.9 105.5,76.2 99.6,76.2ZM109.5,76.9 115.5,76.9 117.5,76.2 111.5,76.2ZM121.6,76.9 127.6,76.9 129.5,76.2 123.5,76.2ZM133.7,76.9 139.8,76.9 141.5,76.2 135.5,76.2ZM145.9,76.9 151.9,76.9 153.5,76.3 147.5,76.2ZM158.0,76.9 164.1,76.9 165.5,76.3 159.5,76.3ZM170.1,77.0 176.2,77.0 177.6,76.3 171.5,76.3ZM182.3,77.0 188.4,77.0 189.6,76.3 183.6,76.3ZM194.5,77.0 200.5,77.0 201.6,76.3 195.6,76.3ZM206.6,77.0 212.7,77.0 213.6,76.3 207.6,76.3ZM218.8,77.0 224.9,77.0 225.7,76.3 219.6,76.3ZM231.0,77.0 237.1,77.0 237.7,76.4 231.7,76.4ZM243.2,77.1 249.2,77.1 249.7,76.4 243.7,76.4ZM255.3,77.1 261.4,77.1 261.8,76.4 255.8,76.4ZM267.5,77.1 273.6,77.1 273.8,76.4 267.8,76.4ZM279.7,77.1 285.8,77.1 285.9,76.4 279.9,76.4ZM291.9,77.1 298.0,77.1 298.0,76.4 291.9,76.4ZM304.1,77.1 310.2,77.1 310.0,76.5 304.0,76.4ZM316.3,77.1 322.5,77.2 322.1,76.5 316.1,76.5ZM328.6,77.2 334.7,77.2 334.2,76.5 328.2,76.5ZM340.8,77.2 346.9,77.2 346.3,76.5 340.2,76.5ZM353.0,77.2 359.1,77.2 358.4,76.5 352.3,76.5ZM365.2,77.2 371.4,77.2 370.5,76.5 364.4,76.5ZM377.5,77.2 383.6,77.2 382.6,76.6 376.5,76.5ZM389.7,77.2 395.8,77.3 394.7,76.6 388.6,76.6ZM402.0,77.3 408.1,77.3 406.8,76.6 400.7,76.6ZM414.2,77.3 420.4,77.3 418.9,76.6 412.8,76.6ZM426.5,77.3 432.6,77.3 431.0,76.6 425.0,76.6ZM438.7,77.3 444.9,77.3 443.1,76.6 437.1,76.6ZM451.0,77.3 457.1,77.3 455.3,76.6 449.2,76.6ZM463.3,77.3 469.4,77.3 467.4,76.7 461.3,76.7ZM475.6,77.4 481.7,77.4 479.5,76.7 473.5,76.7ZM487.8,77.4 494.0,77.4 491.7,76.7 485.6,76.7ZM500.1,77.4 506.3,77.4 503.8,76.7 497.8,76.7ZM512.4,77.4 518.6,77.4 516.0,76.7 509.9,76.7ZM524.7,77.4 530.9,77.4 528.2,76.7 522.1,76.7ZM537.0,77.4 543.2,77.4 540.3,76.8 534.2,76.7ZM549.3,77.5 555.5,77.5 552.5,76.8 546.4,76.8ZM561.7,77.5 567.8,77.5 564.7,76.8 558.6,76.8ZM574.0,77.5 580.1,77.5 576.8,76.8 570.8,76.8ZM586.3,77.5 592.5,77.5 589.0,76.8 582.9,76.8Z" fill="#c8c8c8"/><path d="M-14.1,76.0 -8.1,76.0 -4.7,75.4 -10.6,75.4ZM-2.1,76.1 3.8,76.1 7.1,75.4 1.2,75.4ZM9.8,76.1 15.8,76.1 18.9,75.4 13.0,75.4ZM21.8,76.1 27.7,76.1 30.7,75.4 24.8,75.4ZM33.7,76.1 39.7,76.1 42.5,75.4 36.6,75.4ZM45.7,76.1 51.7,76.1 54.4,75.5 48.5,75.5ZM57.6,76.1 63.6,76.1 66.2,75.5 60.3,75.5ZM69.6,76.1 75.6,76.2 78.0,75.5 72.1,75.5ZM81.6,76.2 87.6,76.2 89.9,75.5 84.0,75.5ZM93.6,76.2 99.6,76.2 101.7,75.5 95.8,75.5ZM105.5,76.2 111.5,76.2 113.6,75.5 107.7,75.5ZM117.5,76.2 123.5,76.2 125.4,75.6 119.5,75.5ZM129.5,76.2 135.5,76.2 137.3,75.6 131.4,75.6ZM141.5,76.2 147.5,76.2 149.2,75.6 143.2,75.6ZM153.5,76.3 159.5,76.3 161.0,75.6 155.1,75.6ZM165.5,76.3 171.5,76.3 172.9,75.6 167.0,75.6ZM177.6,76.3 183.6,76.3 184.8,75.6 178.9,75.6ZM189.6,76.3 195.6,76.3 196.7,75.6 190.7,75.6ZM201.6,76.3 207.6,76.3 208.6,75.7 202.6,75.7ZM213.6,76.3 219.6,76.3 220.5,75.7 214.5,75.7ZM225.7,76.3 231.7,76.4 232.4,75.7 226.4,75.7ZM237.7,76.4 243.7,76.4 244.3,75.7 238.3,75.7ZM249.7,76.4 255.8,76.4 256.2,75.7 250.2,75.7ZM261.8,76.4 267.8,76.4 268.1,75.7 262.1,75.7ZM273.8,76.4 279.9,76.4 280.0,75.8 274.1,75.7ZM285.9,76.4 291.9,76.4 292.0,75.8 286.0,75.8ZM298.0,76.4 304.0,76.4 303.9,75.8 297.9,75.8ZM310.0,76.5 316.1,76.5 315.8,75.8 309.8,75.8ZM322.1,76.5 328.2,76.5 327.8,75.8 321.8,75.8ZM334.2,76.5 340.2,76.5 339.7,75.8 333.7,75.8ZM346.3,76.5 352.3,76.5 351.7,75.8 345.7,75.8ZM358.4,76.5 364.4,76.5 363.6,75.9 357.6,75.9ZM370.5,76.5 376.5,76.5 375.6,75.9 369.6,75.9ZM382.6,76.6 388.6,76.6 387.5,75.9 381.6,75.9ZM394.7,76.6 400.7,76.6 399.5,75.9 393.5,75.9ZM406.8,76.6 412.8,76.6 411.5,75.9 405.5,75.9ZM418.9,76.6 425.0,76.6 423.5,75.9 417.5,75.9ZM431.0,76.6 437.1,76.6 435.4,76.0 429.5,75.9ZM443.1,76.6 449.2,76.6 447.4,76.0 441.4,76.0ZM455.3,76.6 461.3,76.7 459.4,76.0 453.4,76.0ZM467.4,76.7 473.5,76.7 471.4,76.0 465.4,76.0ZM479.5,76.7 485.6,76.7 483.4,76.0 477.4,76.0ZM491.7,76.7 497.8,76.7 495.4,76.0 489.4,76.0ZM503.8,76.7 509.9,76.7 507.5,76.0 501.5,76.0ZM516.0,76.7 522.1,76.7 519.5,76.1 513.5,76.1ZM528.2,76.7 534.2,76.7 531.5,76.1 525.5,76.1ZM540.3,76.8 546.4,76.8 543.5,76.1 537.5,76.1ZM552.5,76.8 558.6,76.8 555.6,76.1 549.5,76.1ZM564.7,76.8 570.8,76.8 567.6,76.1 561.6,76.1ZM576.8,76.8 582.9,76.8 579.7,76.1 573.6,76.1ZM589.0,76.8 595.1,76.8 591.7,76.2 585.7,76.1Z" fill="#c8c8c8"/><path d="M-16.5,75.4 -10.6,75.4 -7.3,74.7 -13.1,74.7ZM-4.7,75.4 1.2,75.4 4.4,74.7 -1.4,74.7ZM7.1,75.4 13.0,75.4 16.1,74.8 10.3,74.8ZM18.9,75.4 24.8,75.4 27.8,74.8 21.9,74.8ZM30.7,75.4 36.6,75.4 39.5,74.8 33.6,74.8ZM42.5,75.4 48.5,75.5 51.2,74.8 45.3,74.8ZM54.4,75.5 60.3,75.5 62.9,74.8 57.0,74.8ZM66.2,75.5 72.1,75.5 74.6,74.8 68.7,74.8ZM78.0,75.5 84.0,75.5 86.3,74.9 80.4,74.8ZM89.9,75.5 95.8,75.5 98.0,74.9 92.1,74.9ZM101.7,75.5 107.7,75.5 109.7,74.9 103.9,74.9ZM113.6,75.5 119.5,75.5 121.4,74.9 115.6,74.9ZM125.4,75.6 131.4,75.6 133.2,74.9 127.3,74.9ZM137.3,75.6 143.2,75.6 144.9,74.9 139.0,74.9ZM149.2,75.6 155.1,75.6 156.6,74.9 150.8,74.9ZM161.0,75.6 167.0,75.6 168.4,75.0 162.5,74.9ZM172.9,75.6 178.9,75.6 180.1,75.0 174.3,75.0ZM184.8,75.6 190.7,75.6 191.9,75.0 186.0,75.0ZM196.7,75.6 202.6,75.7 203.6,75.0 197.8,75.0ZM208.6,75.7 214.5,75.7 215.4,75.0 209.5,75.0ZM220.5,75.7 226.4,75.7 227.2,75.0 221.3,75.0ZM232.4,75.7 238.3,75.7 238.9,75.0 233.0,75.0ZM244.3,75.7 250.2,75.7 250.7,75.1 244.8,75.1ZM256.2,75.7 262.1,75.7 262.5,75.1 256.6,75.1ZM268.1,75.7 274.1,75.7 274.3,75.1 268.4,75.1ZM280.0,75.8 286.0,75.8 286.1,75.1 280.2,75.1ZM292.0,75.8 297.9,75.8 297.9,75.1 292.0,75.1ZM303.9,75.8 309.8,75.8 309.7,75.1 303.8,75.1ZM315.8,75.8 321.8,75.8 321.5,75.2 315.6,75.1ZM327.8,75.8 333.7,75.8 333.3,75.2 327.4,75.2ZM339.7,75.8 345.7,75.8 345.1,75.2 339.2,75.2ZM351.7,75.8 357.6,75.9 356.9,75.2 351.0,75.2ZM363.6,75.9 369.6,75.9 368.7,75.2 362.8,75.2ZM375.6,75.9 381.6,75.9 380.6,75.2 374.6,75.2ZM387.5,75.9 393.5,75.9 392.4,75.2 386.5,75.2ZM399.5,75.9 405.5,75.9 404.2,75.3 398.3,75.3ZM411.5,75.9 417.5,75.9 416.1,75.3 410.2,75.3ZM423.5,75.9 429.5,75.9 427.9,75.3 422.0,75.3ZM435.4,76.0 441.4,76.0 439.8,75.3 433.9,75.3ZM447.4,76.0 453.4,76.0 451.6,75.3 445.7,75.3ZM459.4,76.0 465.4,76.0 463.5,75.3 457.6,75.3ZM471.4,76.0 477.4,76.0 475.4,75.3 469.4,75.3ZM483.4,76.0 489.4,76.0 487.2,75.4 481.3,75.4ZM495.4,76.0 501.5,76.0 499.1,75.4 493.2,75.4ZM507.5,76.0 513.5,76.1 511.0,75.4 505.1,75.4ZM519.5,76.1 525.5,76.1 522.9,75.4 516.9,75.4ZM531.5,76.1 537.5,76.1 534.8,75.4 528.8,75.4ZM543.5,76.1 549.5,76.1 546.7,75.4 540.7,75.4ZM555.6,76.1 561.6,76.1 558.6,75.5 552.6,75.4ZM567.6,76.1 573.6,76.1 570.5,75.5 564.5,75.5ZM579.7,76.1 585.7,76.1 582.4,75.5 576.4,75.5ZM591.7,76.2 597.7,76.2 594.3,75.5 588.3,75.5Z" fill="#c8c8c8"/><path d="M-7.3,74.7 -1.4,74.7 1.8,74.1 -4.0,74.1ZM4.4,74.7 10.3,74.8 13.4,74.1 7.6,74.1ZM16.1,74.8 21.9,74.8 24.9,74.1 19.1,74.1ZM27.8,74.8 33.6,74.8 36.5,74.2 30.7,74.1ZM39.5,74.8 45.3,74.8 48.0,74.2 42.3,74.2ZM51.2,74.8 57.0,74.8 59.6,74.2 53.8,74.2ZM62.9,74.8 68.7,74.8 71.2,74.2 65.4,74.2ZM74.6,74.8 80.4,74.8 82.8,74.2 77.0,74.2ZM86.3,74.9 92.1,74.9 94.3,74.2 88.6,74.2ZM98.0,74.9 103.9,74.9 105.9,74.2 100.1,74.2ZM109.7,74.9 115.6,74.9 117.5,74.3 111.7,74.2ZM121.4,74.9 127.3,74.9 129.1,74.3 123.3,74.3ZM133.2,74.9 139.0,74.9 140.7,74.3 134.9,74.3ZM144.9,74.9 150.8,74.9 152.3,74.3 146.5,74.3ZM156.6,74.9 162.5,74.9 163.9,74.3 158.1,74.3ZM168.4,75.0 174.3,75.0 175.6,74.3 169.8,74.3ZM180.1,75.0 186.0,75.0 187.2,74.3 181.4,74.3ZM191.9,75.0 197.8,75.0 198.8,74.4 193.0,74.4ZM203.6,75.0 209.5,75.0 210.4,74.4 204.6,74.4ZM215.4,75.0 221.3,75.0 222.1,74.4 216.3,74.4ZM227.2,75.0 233.0,75.0 233.7,74.4 227.9,74.4ZM238.9,75.0 244.8,75.1 245.4,74.4 239.5,74.4ZM250.7,75.1 256.6,75.1 257.0,74.4 251.2,74.4ZM262.5,75.1 268.4,75.1 268.7,74.4 262.8,74.4ZM274.3,75.1 280.2,75.1 280.3,74.5 274.5,74.5ZM286.1,75.1 292.0,75.1 292.0,74.5 286.1,74.5ZM297.9,75.1 303.8,75.1 303.6,74.5 297.8,74.5ZM309.7,75.1 315.6,75.1 315.3,74.5 309.5,74.5ZM321.5,75.2 327.4,75.2 327.0,74.5 321.1,74.5ZM333.3,75.2 339.2,75.2 338.7,74.5 332.8,74.5ZM345.1,75.2 351.0,75.2 350.4,74.6 344.5,74.5ZM356.9,75.2 362.8,75.2 362.0,74.6 356.2,74.6ZM368.7,75.2 374.6,75.2 373.7,74.6 367.9,74.6ZM380.6,75.2 386.5,75.2 385.4,74.6 379.6,74.6ZM392.4,75.2 398.3,75.3 397.1,74.6 391.3,74.6ZM404.2,75.3 410.2,75.3 408.9,74.6 403.0,74.6ZM416.1,75.3 422.0,75.3 420.6,74.6 414.7,74.6ZM427.9,75.3 433.9,75.3 432.3,74.7 426.4,74.6ZM439.8,75.3 445.7,75.3 444.0,74.7 438.2,74.7ZM451.6,75.3 457.6,75.3 455.7,74.7 449.9,74.7ZM463.5,75.3 469.4,75.3 467.5,74.7 461.6,74.7ZM475.4,75.3 481.3,75.4 479.2,74.7 473.3,74.7ZM487.2,75.4 493.2,75.4 491.0,74.7 485.1,74.7ZM499.1,75.4 505.1,75.4 502.7,74.7 496.8,74.7ZM511.0,75.4 516.9,75.4 514.5,74.8 508.6,74.8ZM522.9,75.4 528.8,75.4 526.2,74.8 520.3,74.8ZM534.8,75.4 540.7,75.4 538.0,74.8 532.1,74.8ZM546.7,75.4 552.6,75.4 549.7,74.8 543.9,74.8ZM558.6,75.5 564.5,75.5 561.5,74.8 555.6,74.8ZM570.5,75.5 576.4,75.5 573.3,74.8 567.4,74.8ZM582.4,75.5 588.3,75.5 585.1,74.8 579.2,74.8Z" fill="#c8c8c8"/><path d="M-9.7,74.1 -4.0,74.1 -0.7,73.5 -6.4,73.5ZM1.8,74.1 7.6,74.1 10.7,73.5 5.0,73.5ZM13.4,74.1 19.1,74.1 22.1,73.5 16.4,73.5ZM24.9,74.1 30.7,74.1 33.5,73.5 27.8,73.5ZM36.5,74.2 42.3,74.2 45.0,73.5 39.3,73.5ZM48.0,74.2 53.8,74.2 56.4,73.6 50.7,73.6ZM59.6,74.2 65.4,74.2 67.9,73.6 62.1,73.6ZM71.2,74.2 77.0,74.2 79.3,73.6 73.6,73.6ZM82.8,74.2 88.6,74.2 90.8,73.6 85.1,73.6ZM94.3,74.2 100.1,74.2 102.2,73.6 96.5,73.6ZM105.9,74.2 111.7,74.2 113.7,73.6 108.0,73.6ZM117.5,74.3 123.3,74.3 125.2,73.6 119.4,73.6ZM129.1,74.3 134.9,74.3 136.6,73.7 130.9,73.7ZM140.7,74.3 146.5,74.3 148.1,73.7 142.4,73.7ZM152.3,74.3 158.1,74.3 159.6,73.7 153.9,73.7ZM163.9,74.3 169.8,74.3 171.1,73.7 165.3,73.7ZM175.6,74.3 181.4,74.3 182.6,73.7 176.8,73.7ZM187.2,74.3 193.0,74.4 194.1,73.7 188.3,73.7ZM198.8,74.4 204.6,74.4 205.6,73.7 199.8,73.7ZM210.4,74.4 216.3,74.4 217.1,73.8 211.3,73.8ZM222.1,74.4 227.9,74.4 228.6,73.8 222.8,73.8ZM233.7,74.4 239.5,74.4 240.1,73.8 234.4,73.8ZM245.4,74.4 251.2,74.4 251.6,73.8 245.9,73.8ZM257.0,74.4 262.8,74.4 263.2,73.8 257.4,73.8ZM268.7,74.4 274.5,74.5 274.7,73.8 268.9,73.8ZM280.3,74.5 286.1,74.5 286.2,73.8 280.4,73.8ZM292.0,74.5 297.8,74.5 297.8,73.9 292.0,73.9ZM303.6,74.5 309.5,74.5 309.3,73.9 303.5,73.9ZM315.3,74.5 321.1,74.5 320.8,73.9 315.1,73.9ZM327.0,74.5 332.8,74.5 332.4,73.9 326.6,73.9ZM338.7,74.5 344.5,74.5 343.9,73.9 338.2,73.9ZM350.4,74.6 356.2,74.6 355.5,73.9 349.7,73.9ZM362.0,74.6 367.9,74.6 367.1,73.9 361.3,73.9ZM373.7,74.6 379.6,74.6 378.6,74.0 372.9,74.0ZM385.4,74.6 391.3,74.6 390.2,74.0 384.4,74.0ZM397.1,74.6 403.0,74.6 401.8,74.0 396.0,74.0ZM408.9,74.6 414.7,74.6 413.4,74.0 407.6,74.0ZM420.6,74.6 426.4,74.6 425.0,74.0 419.2,74.0ZM432.3,74.7 438.2,74.7 436.6,74.0 430.8,74.0ZM444.0,74.7 449.9,74.7 448.2,74.1 442.4,74.0ZM455.7,74.7 461.6,74.7 459.8,74.1 454.0,74.1ZM467.5,74.7 473.3,74.7 471.4,74.1 465.6,74.1ZM479.2,74.7 485.1,74.7 483.0,74.1 477.2,74.1ZM491.0,74.7 496.8,74.7 494.6,74.1 488.8,74.1ZM502.7,74.7 508.6,74.8 506.2,74.1 500.4,74.1ZM514.5,74.8 520.3,74.8 517.8,74.1 512.0,74.1ZM526.2,74.8 532.1,74.8 529.5,74.2 523.7,74.1ZM538.0,74.8 543.9,74.8 541.1,74.2 535.3,74.2ZM549.7,74.8 555.6,74.8 552.7,74.2 546.9,74.2ZM561.5,74.8 567.4,74.8 564.4,74.2 558.6,74.2ZM573.3,74.8 579.2,74.8 576.0,74.2 570.2,74.2ZM585.1,74.8 591.0,74.9 587.7,74.2 581.9,74.2Z" fill="#c8c8c8"/><path d="M-12.2,73.5 -6.4,73.5 -3.2,72.9 -8.9,72.9ZM-0.7,73.5 5.0,73.5 8.1,72.9 2.4,72.9ZM10.7,73.5 16.4,73.5 19.4,72.9 13.7,72.9ZM22.1,73.5 27.8,73.5 30.7,72.9 25.0,72.9ZM33.5,73.5 39.3,73.5 42.0,72.9 36.3,72.9ZM45.0,73.5 50.7,73.6 53.3,72.9 47.7,72.9ZM56.4,73.6 62.1,73.6 64.6,73.0 59.0,73.0ZM67.9,73.6 73.6,73.6 76.0,73.0 70.3,73.0ZM79.3,73.6 85.1,73.6 87.3,73.0 81.6,73.0ZM90.8,73.6 96.5,73.6 98.6,73.0 93.0,73.0ZM102.2,73.6 108.0,73.6 110.0,73.0 104.3,73.0ZM113.7,73.6 119.4,73.6 121.3,73.0 115.6,73.0ZM125.2,73.6 130.9,73.7 132.7,73.0 127.0,73.0ZM136.6,73.7 142.4,73.7 144.0,73.1 138.3,73.1ZM148.1,73.7 153.9,73.7 155.4,73.1 149.7,73.1ZM159.6,73.7 165.3,73.7 166.7,73.1 161.0,73.1ZM171.1,73.7 176.8,73.7 178.1,73.1 172.4,73.1ZM182.6,73.7 188.3,73.7 189.5,73.1 183.8,73.1ZM194.1,73.7 199.8,73.7 200.8,73.1 195.1,73.1ZM205.6,73.7 211.3,73.8 212.2,73.1 206.5,73.1ZM217.1,73.8 222.8,73.8 223.6,73.2 217.9,73.2ZM228.6,73.8 234.4,73.8 235.0,73.2 229.3,73.2ZM240.1,73.8 245.9,73.8 246.4,73.2 240.7,73.2ZM251.6,73.8 257.4,73.8 257.8,73.2 252.1,73.2ZM263.2,73.8 268.9,73.8 269.2,73.2 263.5,73.2ZM274.7,73.8 280.4,73.8 280.6,73.2 274.9,73.2ZM286.2,73.8 292.0,73.9 292.0,73.2 286.3,73.2ZM297.8,73.9 303.5,73.9 303.4,73.3 297.7,73.3ZM309.3,73.9 315.1,73.9 314.8,73.3 309.1,73.3ZM320.8,73.9 326.6,73.9 326.3,73.3 320.5,73.3ZM332.4,73.9 338.2,73.9 337.7,73.3 332.0,73.3ZM343.9,73.9 349.7,73.9 349.1,73.3 343.4,73.3ZM355.5,73.9 361.3,73.9 360.6,73.3 354.8,73.3ZM367.1,73.9 372.9,74.0 372.0,73.3 366.3,73.3ZM378.6,74.0 384.4,74.0 383.4,73.4 377.7,73.4ZM390.2,74.0 396.0,74.0 394.9,73.4 389.2,73.4ZM401.8,74.0 407.6,74.0 406.3,73.4 400.6,73.4ZM413.4,74.0 419.2,74.0 417.8,73.4 412.1,73.4ZM425.0,74.0 430.8,74.0 429.3,73.4 423.5,73.4ZM436.6,74.0 442.4,74.0 440.7,73.4 435.0,73.4ZM448.2,74.1 454.0,74.1 452.2,73.4 446.5,73.4ZM459.8,74.1 465.6,74.1 463.7,73.5 458.0,73.5ZM471.4,74.1 477.2,74.1 475.2,73.5 469.4,73.5ZM483.0,74.1 488.8,74.1 486.7,73.5 480.9,73.5ZM494.6,74.1 500.4,74.1 498.2,73.5 492.4,73.5ZM506.2,74.1 512.0,74.1 509.7,73.5 503.9,73.5ZM517.8,74.1 523.7,74.1 521.2,73.5 515.4,73.5ZM529.5,74.2 535.3,74.2 532.7,73.5 526.9,73.5ZM541.1,74.2 546.9,74.2 544.2,73.6 538.4,73.6ZM552.7,74.2 558.6,74.2 555.7,73.6 549.9,73.6ZM564.4,74.2 570.2,74.2 567.2,73.6 561.4,73.6ZM576.0,74.2 581.9,74.2 578.7,73.6 573.0,73.6ZM587.7,74.2 593.5,74.2 590.3,73.6 584.5,73.6Z" fill="#c8c8c8"/><path d="M-14.5,72.9 -8.9,72.9 -5.7,72.3 -11.3,72.3ZM-3.2,72.9 2.4,72.9 5.5,72.3 -0.1,72.3ZM8.1,72.9 13.7,72.9 16.7,72.3 11.1,72.3ZM19.4,72.9 25.0,72.9 27.9,72.3 22.3,72.3ZM30.7,72.9 36.3,72.9 39.1,72.3 33.5,72.3ZM42.0,72.9 47.7,72.9 50.3,72.3 44.7,72.3ZM53.3,72.9 59.0,73.0 61.5,72.4 55.9,72.4ZM64.6,73.0 70.3,73.0 72.7,72.4 67.1,72.4ZM76.0,73.0 81.6,73.0 83.9,72.4 78.3,72.4ZM87.3,73.0 93.0,73.0 95.1,72.4 89.5,72.4ZM98.6,73.0 104.3,73.0 106.3,72.4 100.7,72.4ZM110.0,73.0 115.6,73.0 117.5,72.4 111.9,72.4ZM121.3,73.0 127.0,73.0 128.7,72.4 123.1,72.4ZM132.7,73.0 138.3,73.1 140.0,72.5 134.4,72.5ZM144.0,73.1 149.7,73.1 151.2,72.5 145.6,72.5ZM155.4,73.1 161.0,73.1 162.4,72.5 156.8,72.5ZM166.7,73.1 172.4,73.1 173.7,72.5 168.1,72.5ZM178.1,73.1 183.8,73.1 184.9,72.5 179.3,72.5ZM189.5,73.1 195.1,73.1 196.2,72.5 190.6,72.5ZM200.8,73.1 206.5,73.1 207.4,72.5 201.8,72.5ZM212.2,73.1 217.9,73.2 218.7,72.6 213.1,72.6ZM223.6,73.2 229.3,73.2 230.0,72.6 224.3,72.6ZM235.0,73.2 240.7,73.2 241.2,72.6 235.6,72.6ZM246.4,73.2 252.1,73.2 252.5,72.6 246.9,72.6ZM257.8,73.2 263.5,73.2 263.8,72.6 258.2,72.6ZM269.2,73.2 274.9,73.2 275.1,72.6 269.4,72.6ZM280.6,73.2 286.3,73.2 286.4,72.6 280.7,72.6ZM292.0,73.2 297.7,73.3 297.7,72.7 292.0,72.6ZM303.4,73.3 309.1,73.3 308.9,72.7 303.3,72.7ZM314.8,73.3 320.5,73.3 320.2,72.7 314.6,72.7ZM326.3,73.3 332.0,73.3 331.5,72.7 325.9,72.7ZM337.7,73.3 343.4,73.3 342.9,72.7 337.2,72.7ZM349.1,73.3 354.8,73.3 354.2,72.7 348.5,72.7ZM360.6,73.3 366.3,73.3 365.5,72.7 359.8,72.7ZM372.0,73.3 377.7,73.4 376.8,72.8 371.1,72.7ZM383.4,73.4 389.2,73.4 388.1,72.8 382.5,72.8ZM394.9,73.4 400.6,73.4 399.5,72.8 393.8,72.8ZM406.3,73.4 412.1,73.4 410.8,72.8 405.1,72.8ZM417.8,73.4 423.5,73.4 422.1,72.8 416.5,72.8ZM429.3,73.4 435.0,73.4 433.5,72.8 427.8,72.8ZM440.7,73.4 446.5,73.4 444.8,72.8 439.2,72.8ZM452.2,73.4 458.0,73.5 456.2,72.9 450.5,72.8ZM463.7,73.5 469.4,73.5 467.5,72.9 461.9,72.9ZM475.2,73.5 480.9,73.5 478.9,72.9 473.2,72.9ZM486.7,73.5 492.4,73.5 490.3,72.9 484.6,72.9ZM498.2,73.5 503.9,73.5 501.6,72.9 496.0,72.9ZM509.7,73.5 515.4,73.5 513.0,72.9 507.3,72.9ZM521.2,73.5 526.9,73.5 524.4,72.9 518.7,72.9ZM532.7,73.5 538.4,73.6 535.8,72.9 530.1,72.9ZM544.2,73.6 549.9,73.6 547.2,73.0 541.5,73.0ZM555.7,73.6 561.4,73.6 558.6,73.0 552.9,73.0ZM567.2,73.6 573.0,73.6 570.0,73.0 564.3,73.0ZM578.7,73.6 584.5,73.6 581.4,73.0 575.7,73.0ZM590.3,73.6 596.0,73.6 592.8,73.0 587.1,73.0Z" fill="#c8c8c8"/><path d="M-16.8,72.3 -11.3,72.3 -8.1,71.7 -13.6,71.7ZM-5.7,72.3 -0.1,72.3 3.0,71.7 -2.5,71.7ZM5.5,72.3 11.1,72.3 14.1,71.7 8.5,71.7ZM16.7,72.3 22.3,72.3 25.1,71.7 19.6,71.7ZM27.9,72.3 33.5,72.3 36.2,71.7 30.7,71.7ZM39.1,72.3 44.7,72.3 47.3,71.8 41.7,71.8ZM50.3,72.3 55.9,72.4 58.4,71.8 52.8,71.8ZM61.5,72.4 67.1,72.4 69.4,71.8 63.9,71.8ZM72.7,72.4 78.3,72.4 80.5,71.8 75.0,71.8ZM83.9,72.4 89.5,72.4 91.6,71.8 86.1,71.8ZM95.1,72.4 100.7,72.4 102.7,71.8 97.2,71.8ZM106.3,72.4 111.9,72.4 113.8,71.8 108.3,71.8ZM117.5,72.4 123.1,72.4 124.9,71.9 119.4,71.9ZM128.7,72.4 134.4,72.5 136.0,71.9 130.5,71.9ZM140.0,72.5 145.6,72.5 147.1,71.9 141.6,71.9ZM151.2,72.5 156.8,72.5 158.3,71.9 152.7,71.9ZM162.4,72.5 168.1,72.5 169.4,71.9 163.8,71.9ZM173.7,72.5 179.3,72.5 180.5,71.9 174.9,71.9ZM184.9,72.5 190.6,72.5 191.6,71.9 186.1,71.9ZM196.2,72.5 201.8,72.5 202.8,72.0 197.2,71.9ZM207.4,72.5 213.1,72.6 213.9,72.0 208.3,72.0ZM218.7,72.6 224.3,72.6 225.1,72.0 219.5,72.0ZM230.0,72.6 235.6,72.6 236.2,72.0 230.6,72.0ZM241.2,72.6 246.9,72.6 247.4,72.0 241.8,72.0ZM252.5,72.6 258.2,72.6 258.5,72.0 252.9,72.0ZM263.8,72.6 269.4,72.6 269.7,72.0 264.1,72.0ZM275.1,72.6 280.7,72.6 280.8,72.0 275.3,72.0ZM286.4,72.6 292.0,72.6 292.0,72.1 286.4,72.1ZM297.7,72.7 303.3,72.7 303.2,72.1 297.6,72.1ZM308.9,72.7 314.6,72.7 314.4,72.1 308.8,72.1ZM320.2,72.7 325.9,72.7 325.5,72.1 320.0,72.1ZM331.5,72.7 337.2,72.7 336.7,72.1 331.1,72.1ZM342.9,72.7 348.5,72.7 347.9,72.1 342.3,72.1ZM354.2,72.7 359.8,72.7 359.1,72.1 353.5,72.1ZM365.5,72.7 371.1,72.7 370.3,72.2 364.7,72.2ZM376.8,72.8 382.5,72.8 381.5,72.2 375.9,72.2ZM388.1,72.8 393.8,72.8 392.7,72.2 387.1,72.2ZM399.5,72.8 405.1,72.8 403.9,72.2 398.3,72.2ZM410.8,72.8 416.5,72.8 415.2,72.2 409.6,72.2ZM422.1,72.8 427.8,72.8 426.4,72.2 420.8,72.2ZM433.5,72.8 439.2,72.8 437.6,72.2 432.0,72.2ZM444.8,72.8 450.5,72.8 448.8,72.3 443.2,72.2ZM456.2,72.9 461.9,72.9 460.1,72.3 454.5,72.3ZM467.5,72.9 473.2,72.9 471.3,72.3 465.7,72.3ZM478.9,72.9 484.6,72.9 482.6,72.3 476.9,72.3ZM490.3,72.9 496.0,72.9 493.8,72.3 488.2,72.3ZM501.6,72.9 507.3,72.9 505.1,72.3 499.4,72.3ZM513.0,72.9 518.7,72.9 516.3,72.3 510.7,72.3ZM524.4,72.9 530.1,72.9 527.6,72.4 521.9,72.3ZM535.8,72.9 541.5,73.0 538.8,72.4 533.2,72.4ZM547.2,73.0 552.9,73.0 550.1,72.4 544.5,72.4ZM558.6,73.0 564.3,73.0 561.4,72.4 555.7,72.4ZM570.0,73.0 575.7,73.0 572.7,72.4 567.0,72.4ZM581.4,73.0 587.1,73.0 583.9,72.4 578.3,72.4Z" fill="#c8c8c8"/><path d="M-8.1,71.7 -2.5,71.7 0.5,71.1 -4.9,71.1ZM3.0,71.7 8.5,71.7 11.5,71.2 6.0,71.1ZM14.1,71.7 19.6,71.7 22.4,71.2 17.0,71.2ZM25.1,71.7 30.7,71.7 33.4,71.2 27.9,71.2ZM36.2,71.7 41.7,71.8 44.4,71.2 38.9,71.2ZM47.3,71.8 52.8,71.8 55.3,71.2 49.8,71.2ZM58.4,71.8 63.9,71.8 66.3,71.2 60.8,71.2ZM69.4,71.8 75.0,71.8 77.3,71.2 71.8,71.2ZM80.5,71.8 86.1,71.8 88.2,71.2 82.7,71.2ZM91.6,71.8 97.2,71.8 99.2,71.3 93.7,71.3ZM102.7,71.8 108.3,71.8 110.2,71.3 104.7,71.3ZM113.8,71.8 119.4,71.9 121.2,71.3 115.7,71.3ZM124.9,71.9 130.5,71.9 132.2,71.3 126.7,71.3ZM136.0,71.9 141.6,71.9 143.2,71.3 137.7,71.3ZM147.1,71.9 152.7,71.9 154.2,71.3 148.7,71.3ZM158.3,71.9 163.8,71.9 165.2,71.3 159.7,71.3ZM169.4,71.9 174.9,71.9 176.2,71.4 170.7,71.3ZM180.5,71.9 186.1,71.9 187.2,71.4 181.7,71.4ZM191.6,71.9 197.2,71.9 198.2,71.4 192.7,71.4ZM202.8,72.0 208.3,72.0 209.2,71.4 203.7,71.4ZM213.9,72.0 219.5,72.0 220.3,71.4 214.7,71.4ZM225.1,72.0 230.6,72.0 231.3,71.4 225.8,71.4ZM236.2,72.0 241.8,72.0 242.3,71.4 236.8,71.4ZM247.4,72.0 252.9,72.0 253.4,71.4 247.8,71.4ZM258.5,72.0 264.1,72.0 264.4,71.5 258.9,71.5ZM269.7,72.0 275.3,72.0 275.4,71.5 269.9,71.5ZM280.8,72.0 286.4,72.1 286.5,71.5 281.0,71.5ZM292.0,72.1 297.6,72.1 297.6,71.5 292.0,71.5ZM303.2,72.1 308.8,72.1 308.6,71.5 303.1,71.5ZM314.4,72.1 320.0,72.1 319.7,71.5 314.1,71.5ZM325.5,72.1 331.1,72.1 330.7,71.5 325.2,71.5ZM336.7,72.1 342.3,72.1 341.8,71.6 336.3,71.5ZM347.9,72.1 353.5,72.1 352.9,71.6 347.4,71.6ZM359.1,72.1 364.7,72.2 364.0,71.6 358.4,71.6ZM370.3,72.2 375.9,72.2 375.1,71.6 369.5,71.6ZM381.5,72.2 387.1,72.2 386.1,71.6 380.6,71.6ZM392.7,72.2 398.3,72.2 397.2,71.6 391.7,71.6ZM403.9,72.2 409.6,72.2 408.3,71.6 402.8,71.6ZM415.2,72.2 420.8,72.2 419.4,71.6 413.9,71.6ZM426.4,72.2 432.0,72.2 430.5,71.7 425.0,71.7ZM437.6,72.2 443.2,72.2 441.6,71.7 436.1,71.7ZM448.8,72.3 454.5,72.3 452.8,71.7 447.2,71.7ZM460.1,72.3 465.7,72.3 463.9,71.7 458.3,71.7ZM471.3,72.3 476.9,72.3 475.0,71.7 469.4,71.7ZM482.6,72.3 488.2,72.3 486.1,71.7 480.6,71.7ZM493.8,72.3 499.4,72.3 497.3,71.7 491.7,71.7ZM505.1,72.3 510.7,72.3 508.4,71.8 502.8,71.7ZM516.3,72.3 521.9,72.3 519.5,71.8 514.0,71.8ZM527.6,72.4 533.2,72.4 530.7,71.8 525.1,71.8ZM538.8,72.4 544.5,72.4 541.8,71.8 536.3,71.8ZM550.1,72.4 555.7,72.4 553.0,71.8 547.4,71.8ZM561.4,72.4 567.0,72.4 564.1,71.8 558.6,71.8ZM572.7,72.4 578.3,72.4 575.3,71.8 569.7,71.8ZM583.9,72.4 589.6,72.4 586.5,71.8 580.9,71.8Z" fill="#c8c8c8"/><path d="M-10.4,71.1 -4.9,71.1 -1.9,70.6 -7.3,70.6ZM0.5,71.1 6.0,71.1 9.0,70.6 3.6,70.6ZM11.5,71.2 17.0,71.2 19.8,70.6 14.4,70.6ZM22.4,71.2 27.9,71.2 30.6,70.6 25.2,70.6ZM33.4,71.2 38.9,71.2 41.5,70.6 36.1,70.6ZM44.4,71.2 49.8,71.2 52.3,70.6 46.9,70.6ZM55.3,71.2 60.8,71.2 63.2,70.7 57.8,70.6ZM66.3,71.2 71.8,71.2 74.0,70.7 68.6,70.7ZM77.3,71.2 82.7,71.2 84.9,70.7 79.5,70.7ZM88.2,71.2 93.7,71.3 95.8,70.7 90.3,70.7ZM99.2,71.3 104.7,71.3 106.6,70.7 101.2,70.7ZM110.2,71.3 115.7,71.3 117.5,70.7 112.1,70.7ZM121.2,71.3 126.7,71.3 128.4,70.7 123.0,70.7ZM132.2,71.3 137.7,71.3 139.3,70.7 133.8,70.7ZM143.2,71.3 148.7,71.3 150.2,70.8 144.7,70.8ZM154.2,71.3 159.7,71.3 161.0,70.8 155.6,70.8ZM165.2,71.3 170.7,71.3 171.9,70.8 166.5,70.8ZM176.2,71.4 181.7,71.4 182.8,70.8 177.4,70.8ZM187.2,71.4 192.7,71.4 193.7,70.8 188.3,70.8ZM198.2,71.4 203.7,71.4 204.6,70.8 199.2,70.8ZM209.2,71.4 214.7,71.4 215.6,70.8 210.1,70.8ZM220.3,71.4 225.8,71.4 226.5,70.9 221.0,70.8ZM231.3,71.4 236.8,71.4 237.4,70.9 231.9,70.9ZM242.3,71.4 247.8,71.4 248.3,70.9 242.8,70.9ZM253.4,71.4 258.9,71.5 259.2,70.9 253.8,70.9ZM264.4,71.5 269.9,71.5 270.2,70.9 264.7,70.9ZM275.4,71.5 281.0,71.5 281.1,70.9 275.6,70.9ZM286.5,71.5 292.0,71.5 292.0,70.9 286.6,70.9ZM297.6,71.5 303.1,71.5 303.0,70.9 297.5,70.9ZM308.6,71.5 314.1,71.5 313.9,71.0 308.4,71.0ZM319.7,71.5 325.2,71.5 324.9,71.0 319.4,71.0ZM330.7,71.5 336.3,71.5 335.8,71.0 330.3,71.0ZM341.8,71.6 347.4,71.6 346.8,71.0 341.3,71.0ZM352.9,71.6 358.4,71.6 357.8,71.0 352.3,71.0ZM364.0,71.6 369.5,71.6 368.7,71.0 363.2,71.0ZM375.1,71.6 380.6,71.6 379.7,71.0 374.2,71.0ZM386.1,71.6 391.7,71.6 390.7,71.0 385.2,71.0ZM397.2,71.6 402.8,71.6 401.6,71.1 396.2,71.1ZM408.3,71.6 413.9,71.6 412.6,71.1 407.1,71.1ZM419.4,71.6 425.0,71.7 423.6,71.1 418.1,71.1ZM430.5,71.7 436.1,71.7 434.6,71.1 429.1,71.1ZM441.6,71.7 447.2,71.7 445.6,71.1 440.1,71.1ZM452.8,71.7 458.3,71.7 456.6,71.1 451.1,71.1ZM463.9,71.7 469.4,71.7 467.6,71.1 462.1,71.1ZM475.0,71.7 480.6,71.7 478.6,71.2 473.1,71.1ZM486.1,71.7 491.7,71.7 489.6,71.2 484.1,71.2ZM497.3,71.7 502.8,71.7 500.7,71.2 495.1,71.2ZM508.4,71.8 514.0,71.8 511.7,71.2 506.2,71.2ZM519.5,71.8 525.1,71.8 522.7,71.2 517.2,71.2ZM530.7,71.8 536.3,71.8 533.7,71.2 528.2,71.2ZM541.8,71.8 547.4,71.8 544.8,71.2 539.2,71.2ZM553.0,71.8 558.6,71.8 555.8,71.2 550.3,71.2ZM564.1,71.8 569.7,71.8 566.8,71.3 561.3,71.3ZM575.3,71.8 580.9,71.8 577.9,71.3 572.4,71.3ZM586.5,71.8 592.1,71.9 588.9,71.3 583.4,71.3Z" fill="#c8c8c8"/><path d="M-12.7,70.6 -7.3,70.6 -4.2,70.0 -9.6,70.0ZM-1.9,70.6 3.6,70.6 6.5,70.0 1.1,70.0ZM9.0,70.6 14.4,70.6 17.2,70.1 11.9,70.0ZM19.8,70.6 25.2,70.6 28.0,70.1 22.6,70.1ZM30.6,70.6 36.1,70.6 38.7,70.1 33.3,70.1ZM41.5,70.6 46.9,70.6 49.4,70.1 44.1,70.1ZM52.3,70.6 57.8,70.6 60.2,70.1 54.8,70.1ZM63.2,70.7 68.6,70.7 70.9,70.1 65.5,70.1ZM74.0,70.7 79.5,70.7 81.7,70.1 76.3,70.1ZM84.9,70.7 90.3,70.7 92.4,70.1 87.0,70.1ZM95.8,70.7 101.2,70.7 103.2,70.2 97.8,70.1ZM106.6,70.7 112.1,70.7 113.9,70.2 108.5,70.2ZM117.5,70.7 123.0,70.7 124.7,70.2 119.3,70.2ZM128.4,70.7 133.8,70.7 135.5,70.2 130.1,70.2ZM139.3,70.7 144.7,70.8 146.2,70.2 140.8,70.2ZM150.2,70.8 155.6,70.8 157.0,70.2 151.6,70.2ZM161.0,70.8 166.5,70.8 167.8,70.2 162.4,70.2ZM171.9,70.8 177.4,70.8 178.6,70.2 173.2,70.2ZM182.8,70.8 188.3,70.8 189.4,70.3 184.0,70.3ZM193.7,70.8 199.2,70.8 200.1,70.3 194.8,70.3ZM204.6,70.8 210.1,70.8 210.9,70.3 205.5,70.3ZM215.6,70.8 221.0,70.8 221.7,70.3 216.3,70.3ZM226.5,70.9 231.9,70.9 232.5,70.3 227.1,70.3ZM237.4,70.9 242.8,70.9 243.4,70.3 238.0,70.3ZM248.3,70.9 253.8,70.9 254.2,70.3 248.8,70.3ZM259.2,70.9 264.7,70.9 265.0,70.3 259.6,70.3ZM270.2,70.9 275.6,70.9 275.8,70.4 270.4,70.4ZM281.1,70.9 286.6,70.9 286.6,70.4 281.2,70.4ZM292.0,70.9 297.5,70.9 297.5,70.4 292.0,70.4ZM303.0,70.9 308.4,71.0 308.3,70.4 302.9,70.4ZM313.9,71.0 319.4,71.0 319.1,70.4 313.7,70.4ZM324.9,71.0 330.3,71.0 330.0,70.4 324.5,70.4ZM335.8,71.0 341.3,71.0 340.8,70.4 335.4,70.4ZM346.8,71.0 352.3,71.0 351.7,70.5 346.2,70.4ZM357.8,71.0 363.2,71.0 362.5,70.5 357.1,70.5ZM368.7,71.0 374.2,71.0 373.4,70.5 367.9,70.5ZM379.7,71.0 385.2,71.0 384.2,70.5 378.8,70.5ZM390.7,71.0 396.2,71.1 395.1,70.5 389.7,70.5ZM401.6,71.1 407.1,71.1 406.0,70.5 400.5,70.5ZM412.6,71.1 418.1,71.1 416.8,70.5 411.4,70.5ZM423.6,71.1 429.1,71.1 427.7,70.5 422.3,70.5ZM434.6,71.1 440.1,71.1 438.6,70.6 433.2,70.6ZM445.6,71.1 451.1,71.1 449.5,70.6 444.0,70.6ZM456.6,71.1 462.1,71.1 460.4,70.6 454.9,70.6ZM467.6,71.1 473.1,71.1 471.3,70.6 465.8,70.6ZM478.6,71.2 484.1,71.2 482.2,70.6 476.7,70.6ZM489.6,71.2 495.1,71.2 493.1,70.6 487.6,70.6ZM500.7,71.2 506.2,71.2 504.0,70.6 498.5,70.6ZM511.7,71.2 517.2,71.2 514.9,70.6 509.4,70.6ZM522.7,71.2 528.2,71.2 525.8,70.7 520.3,70.7ZM533.7,71.2 539.2,71.2 536.7,70.7 531.3,70.7ZM544.8,71.2 550.3,71.2 547.6,70.7 542.2,70.7ZM555.8,71.2 561.3,71.3 558.6,70.7 553.1,70.7ZM566.8,71.3 572.4,71.3 569.5,70.7 564.0,70.7ZM577.9,71.3 583.4,71.3 580.4,70.7 575.0,70.7ZM588.9,71.3 594.5,71.3 591.4,70.7 585.9,70.7Z" fill="#c8c8c8"/><path d="M-14.9,70.0 -9.6,70.0 -6.5,69.5 -11.8,69.5ZM-4.2,70.0 1.1,70.0 4.1,69.5 -1.2,69.5ZM6.5,70.0 11.9,70.0 14.7,69.5 9.4,69.5ZM17.2,70.1 22.6,70.1 25.3,69.5 20.0,69.5ZM28.0,70.1 33.3,70.1 35.9,69.5 30.6,69.5ZM38.7,70.1 44.1,70.1 46.6,69.6 41.3,69.5ZM49.4,70.1 54.8,70.1 57.2,69.6 51.9,69.6ZM60.2,70.1 65.5,70.1 67.8,69.6 62.5,69.6ZM70.9,70.1 76.3,70.1 78.5,69.6 73.2,69.6ZM81.7,70.1 87.0,70.1 89.1,69.6 83.8,69.6ZM92.4,70.1 97.8,70.1 99.8,69.6 94.4,69.6ZM103.2,70.2 108.5,70.2 110.4,69.6 105.1,69.6ZM113.9,70.2 119.3,70.2 121.1,69.6 115.7,69.6ZM124.7,70.2 130.1,70.2 131.7,69.7 126.4,69.6ZM135.5,70.2 140.8,70.2 142.4,69.7 137.0,69.7ZM146.2,70.2 151.6,70.2 153.0,69.7 147.7,69.7ZM157.0,70.2 162.4,70.2 163.7,69.7 158.4,69.7ZM167.8,70.2 173.2,70.2 174.4,69.7 169.1,69.7ZM178.6,70.2 184.0,70.3 185.1,69.7 179.7,69.7ZM189.4,70.3 194.8,70.3 195.7,69.7 190.4,69.7ZM200.1,70.3 205.5,70.3 206.4,69.7 201.1,69.7ZM210.9,70.3 216.3,70.3 217.1,69.8 211.8,69.7ZM221.7,70.3 227.1,70.3 227.8,69.8 222.5,69.8ZM232.5,70.3 238.0,70.3 238.5,69.8 233.2,69.8ZM243.4,70.3 248.8,70.3 249.2,69.8 243.9,69.8ZM254.2,70.3 259.6,70.3 259.9,69.8 254.6,69.8ZM265.0,70.3 270.4,70.4 270.6,69.8 265.3,69.8ZM275.8,70.4 281.2,70.4 281.3,69.8 276.0,69.8ZM286.6,70.4 292.0,70.4 292.1,69.8 286.7,69.8ZM297.5,70.4 302.9,70.4 302.8,69.9 297.4,69.9ZM308.3,70.4 313.7,70.4 313.5,69.9 308.1,69.9ZM319.1,70.4 324.5,70.4 324.2,69.9 318.9,69.9ZM330.0,70.4 335.4,70.4 335.0,69.9 329.6,69.9ZM340.8,70.4 346.2,70.4 345.7,69.9 340.3,69.9ZM351.7,70.5 357.1,70.5 356.4,69.9 351.1,69.9ZM362.5,70.5 367.9,70.5 367.2,69.9 361.8,69.9ZM373.4,70.5 378.8,70.5 377.9,69.9 372.6,69.9ZM384.2,70.5 389.7,70.5 388.7,70.0 383.3,70.0ZM395.1,70.5 400.5,70.5 399.4,70.0 394.1,70.0ZM406.0,70.5 411.4,70.5 410.2,70.0 404.8,70.0ZM416.8,70.5 422.3,70.5 421.0,70.0 415.6,70.0ZM427.7,70.5 433.2,70.6 431.7,70.0 426.3,70.0ZM438.6,70.6 444.0,70.6 442.5,70.0 437.1,70.0ZM449.5,70.6 454.9,70.6 453.3,70.0 447.9,70.0ZM460.4,70.6 465.8,70.6 464.1,70.0 458.7,70.0ZM471.3,70.6 476.7,70.6 474.8,70.1 469.4,70.1ZM482.2,70.6 487.6,70.6 485.6,70.1 480.2,70.1ZM493.1,70.6 498.5,70.6 496.4,70.1 491.0,70.1ZM504.0,70.6 509.4,70.6 507.2,70.1 501.8,70.1ZM514.9,70.6 520.3,70.7 518.0,70.1 512.6,70.1ZM525.8,70.7 531.3,70.7 528.8,70.1 523.4,70.1ZM536.7,70.7 542.2,70.7 539.6,70.1 534.2,70.1ZM547.6,70.7 553.1,70.7 550.4,70.2 545.0,70.1ZM558.6,70.7 564.0,70.7 561.3,70.2 555.9,70.2ZM569.5,70.7 575.0,70.7 572.1,70.2 566.7,70.2ZM580.4,70.7 585.9,70.7 582.9,70.2 577.5,70.2Z" fill="#c8c8c8"/>
<g font-family="Liberation Sans" font-weight="bold" font-size="46" text-anchor="middle"><text transform="matrix(0.5751 0.0058 -0.2947 0.6183 9.4 551.8)" x="50" y="68" fill="#dfdfdf">A5</text><text transform="matrix(0.5762 0.0058 -0.2320 0.6196 63.7 552.3)" x="50" y="68" fill="#d5d5d5">A6</text><text transform="matrix(0.5774 0.0058 -0.1690 0.6208 118.2 552.8)" x="50" y="68" fill="#dfdfdf">A7</text><text transform="matrix(0.5785 0.0058 -0.1058 0.6221 172.8 553.4)" x="50" y="68" fill="#d5d5d5">A8</text><text transform="matrix(0.5797 0.0059 -0.0424 0.6234 227.5 553.9)" x="50" y="68" fill="#dfdfdf">A1</text><text transform="matrix(0.5809 0.0059 0.0213 0.6246 282.3 554.4)" x="50" y="68" fill="#d5d5d5">A2</text><text transform="matrix(0.5820 0.0059 0.0853 0.6259 337.1 554.9)" x="50" y="68" fill="#dfdfdf">A3</text><text transform="matrix(0.5832 0.0059 0.1495 0.6272 392.1 555.4)" x="50" y="68" fill="#d5d5d5">A4</text><text transform="matrix(0.5844 0.0059 0.2140 0.6285 447.2 556.0)" x="50" y="68" fill="#dfdfdf">A5</text><text transform="matrix(0.5856 0.0059 0.2788 0.6298 502.4 556.5)" x="50" y="68" fill="#d5d5d5">A6</text><text transform="matrix(0.5867 0.0059 0.3438 0.6310 557.7 557.0)" x="50" y="68" fill="#dfdfdf">A7</text><text transform="matrix(0.5177 0.0047 -0.2902 0.5015 -13.2 501.5)" x="50" y="68" fill="#dfdfdf">H4</text><text transform="matrix(0.5186 0.0047 -0.2394 0.5025 36.0 501.9)" x="50" y="68" fill="#d5d5d5">H5</text><text transform="matrix(0.5196 0.0047 -0.1885 0.5034 85.3 502.3)" x="50" y="68" fill="#dfdfdf">H6</text><text transform="matrix(0.5205 0.0048 -0.1373 0.5043 134.7 502.8)" x="50" y="68" fill="#d5d5d5">H7</text><text transform="matrix(0.5214 0.0048 -0.0859 0.5052 184.2 503.2)" x="50" y="68" fill="#dfdfdf">H8</text><text transform="matrix(0.5224 0.0048 -0.0344 0.5062 233.8 503.6)" x="50" y="68" fill="#d5d5d5">H1</text><text transform="matrix(0.5233 0.0048 0.0173 0.5071 283.4 504.0)" x="50" y="68" fill="#dfdfdf">H2</text><text transform="matrix(0.5243 0.0048 0.0692 0.5080 333.2 504.5)" x="50" y="68" fill="#d5d5d5">H3</text><text transform="matrix(0.5252 0.0048 0.1213 0.5090 383.0 504.9)" x="50" y="68" fill="#dfdfdf">H4</text><text transform="matrix(0.5262 0.0048 0.1736 0.5099 432.9 505.3)" x="50" y="68" fill="#d5d5d5">H5</text><text transform="matrix(0.5271 0.0048 0.2261 0.5108 482.9 505.8)" x="50" y="68" fill="#dfdfdf">H6</text><text transform="matrix(0.5281 0.0048 0.2788 0.5118 533.0 506.2)" x="50" y="68" fill="#d5d5d5">H7</text><text transform="matrix(0.4707 0.0039 -0.2825 0.4150 -32.0 459.8)" x="50" y="68" fill="#dfdfdf">G3</text><text transform="matrix(0.4715 0.0039 -0.2405 0.4157 13.0 460.1)" x="50" y="68" fill="#d5d5d5">G4</text><text transform="matrix(0.4723 0.0039 -0.1984 0.4164 58.1 460.5)" x="50" y="68" fill="#dfdfdf">G5</text><text transform="matrix(0.4731 0.0039 -0.1561 0.4171 103.2 460.9)" x="50" y="68" fill="#d5d5d5">G6</text><text transform="matrix(0.4738 0.0039 -0.1137 0.4177 148.4 461.2)" x="50" y="68" fill="#dfdfdf">G7</text><text transform="matrix(0.4746 0.0040 -0.0712 0.4184 193.6 461.6)" x="50" y="68" fill="#d5d5d5">G8</text><text transform="matrix(0.4754 0.0040 -0.0285 0.4191 238.9 461.9)" x="50" y="68" fill="#dfdfdf">G1</text><text transform="matrix(0.4762 0.0040 0.0143 0.4198 284.3 462.3)" x="50" y="68" fill="#d5d5d5">G2</text><text transform="matrix(0.4770 0.0040 0.0573 0.4206 329.8 462.7)" x="50" y="68" fill="#dfdfdf">G3</text><text transform="matrix(0.4778 0.0040 0.1004 0.4213 375.4 463.0)" x="50" y="68" fill="#d5d5d5">G4</text><text transform="matrix(0.4785 0.0040 0.1437 0.4220 421.0 463.4)" x="50" y="68" fill="#dfdfdf">G5</text><text transform="matrix(0.4793 0.0040 0.1871 0.4227 466.6 463.7)" x="50" y="68" fill="#d5d5d5">G6</text><text transform="matrix(0.4801 0.0040 0.2306 0.4234 512.4 464.1)" x="50" y="68" fill="#dfdfdf">G7</text><text transform="matrix(0.4809 0.0040 0.2743 0.4241 558.2 464.5)" x="50" y="68" fill="#d5d5d5">G8</text><text transform="matrix(0.4322 0.0033 -0.2380 0.3496 -6.3 425.0)" x="50" y="68" fill="#d5d5d5">F3</text><text transform="matrix(0.4329 0.0033 -0.2026 0.3501 35.1 425.3)" x="50" y="68" fill="#dfdfdf">F4</text><text transform="matrix(0.4335 0.0033 -0.1671 0.3506 76.6 425.6)" x="50" y="68" fill="#d5d5d5">F5</text><text transform="matrix(0.4342 0.0033 -0.1315 0.3512 118.2 425.9)" x="50" y="68" fill="#dfdfdf">F6</text><text transform="matrix(0.4348 0.0033 -0.0957 0.3517 159.8 426.2)" x="50" y="68" fill="#d5d5d5">F7</text><text transform="matrix(0.4355 0.0033 -0.0599 0.3522 201.5 426.5)" x="50" y="68" fill="#dfdfdf">F8</text><text transform="matrix(0.4362 0.0033 -0.0240 0.3528 243.3 426.8)" x="50" y="68" fill="#d5d5d5">F1</text><text transform="matrix(0.4368 0.0034 0.0121 0.3533 285.1 427.1)" x="50" y="68" fill="#dfdfdf">F2</text><text transform="matrix(0.4375 0.0034 0.0482 0.3539 327.0 427.4)" x="50" y="68" fill="#d5d5d5">F3</text><text transform="matrix(0.4381 0.0034 0.0845 0.3544 368.9 427.8)" x="50" y="68" fill="#dfdfdf">F4</text><text transform="matrix(0.4388 0.0034 0.1209 0.3550 410.9 428.1)" x="50" y="68" fill="#d5d5d5">F5</text><text transform="matrix(0.4395 0.0034 0.1574 0.3555 453.0 428.4)" x="50" y="68" fill="#dfdfdf">F6</text><text transform="matrix(0.4401 0.0034 0.1940 0.3561 495.1 428.7)" x="50" y="68" fill="#d5d5d5">F7</text><text transform="matrix(0.4408 0.0034 0.2307 0.3566 537.3 429.0)" x="50" y="68" fill="#dfdfdf">F8</text><text transform="matrix(0.3990 0.0028 -0.2334 0.2980 -22.8 395.0)" x="50" y="68" fill="#d5d5d5">E2</text><text transform="matrix(0.3996 0.0028 -0.2032 0.2985 15.6 395.3)" x="50" y="68" fill="#dfdfdf">E3</text><text transform="matrix(0.4001 0.0028 -0.1730 0.2989 54.0 395.5)" x="50" y="68" fill="#d5d5d5">E4</text><text transform="matrix(0.4007 0.0028 -0.1426 0.2993 92.5 395.8)" x="50" y="68" fill="#dfdfdf">E5</text><text transform="matrix(0.4012 0.0029 -0.1122 0.2997 131.0 396.1)" x="50" y="68" fill="#d5d5d5">E6</text><text transform="matrix(0.4018 0.0029 -0.0817 0.3002 169.6 396.3)" x="50" y="68" fill="#dfdfdf">E7</text><text transform="matrix(0.4023 0.0029 -0.0511 0.3006 208.3 396.6)" x="50" y="68" fill="#d5d5d5">E8</text><text transform="matrix(0.4029 0.0029 -0.0205 0.3010 247.0 396.8)" x="50" y="68" fill="#dfdfdf">E1</text><text transform="matrix(0.4035 0.0029 0.0103 0.3014 285.7 397.1)" x="50" y="68" fill="#d5d5d5">E2</text><text transform="matrix(0.4040 0.0029 0.0411 0.3019 324.6 397.4)" x="50" y="68" fill="#dfdfdf">E3</text><text transform="matrix(0.4046 0.0029 0.0721 0.3023 363.4 397.6)" x="50" y="68" fill="#d5d5d5">E4</text><text transform="matrix(0.4052 0.0029 0.1031 0.3027 402.3 397.9)" x="50" y="68" fill="#dfdfdf">E5</text><text transform="matrix(0.4057 0.0029 0.1342 0.3032 441.3 398.2)" x="50" y="68" fill="#d5d5d5">E6</text><text transform="matrix(0.4063 0.0029 0.1654 0.3036 480.3 398.4)" x="50" y="68" fill="#dfdfdf">E7</text><text transform="matrix(0.4069 0.0029 0.1967 0.3040 519.4 398.7)" x="50" y="68" fill="#d5d5d5">E8</text><text transform="matrix(0.4074 0.0029 0.2280 0.3045 558.5 399.0)" x="50" y="68" fill="#dfdfdf">E1</text><text transform="matrix(0.3705 0.0025 -0.2276 0.2571 -37.1 369.1)" x="50" y="68" fill="#d5d5d5">D1</text><text transform="matrix(0.3710 0.0025 -0.2016 0.2575 -1.3 369.3)" x="50" y="68" fill="#dfdfdf">D2</text><text transform="matrix(0.3715 0.0025 -0.1755 0.2578 34.5 369.6)" x="50" y="68" fill="#d5d5d5">D3</text><text transform="matrix(0.3720 0.0025 -0.1494 0.2582 70.3 369.8)" x="50" y="68" fill="#dfdfdf">D4</text><text transform="matrix(0.3724 0.0025 -0.1232 0.2585 106.2 370.0)" x="50" y="68" fill="#d5d5d5">D5</text><text transform="matrix(0.3729 0.0025 -0.0969 0.2588 142.1 370.3)" x="50" y="68" fill="#dfdfdf">D6</text><text transform="matrix(0.3734 0.0025 -0.0706 0.2592 178.1 370.5)" x="50" y="68" fill="#d5d5d5">D7</text><text transform="matrix(0.3739 0.0025 -0.0441 0.2595 214.1 370.7)" x="50" y="68" fill="#dfdfdf">D8</text><text transform="matrix(0.3744 0.0025 -0.0177 0.2599 250.2 371.0)" x="50" y="68" fill="#d5d5d5">D1</text><text transform="matrix(0.3748 0.0025 0.0089 0.2602 286.3 371.2)" x="50" y="68" fill="#dfdfdf">D2</text><text transform="matrix(0.3753 0.0025 0.0355 0.2606 322.4 371.4)" x="50" y="68" fill="#d5d5d5">D3</text><text transform="matrix(0.3758 0.0025 0.0622 0.2609 358.6 371.6)" x="50" y="68" fill="#dfdfdf">D4</text><text transform="matrix(0.3763 0.0025 0.0890 0.2612 394.9 371.9)" x="50" y="68" fill="#d5d5d5">D5</text><text transform="matrix(0.3768 0.0025 0.1158 0.2616 431.2 372.1)" x="50" y="68" fill="#dfdfdf">D6</text><text transform="matrix(0.3773 0.0025 0.1427 0.2619 467.5 372.3)" x="50" y="68" fill="#d5d5d5">D7</text><text transform="matrix(0.3778 0.0025 0.1697 0.2623 503.9 372.6)" x="50" y="68" fill="#dfdfdf">D8</text><text transform="matrix(0.3783 0.0025 0.1967 0.2626 540.3 372.8)" x="50" y="68" fill="#d5d5d5">D1</text><text transform="matrix(0.3462 0.0021 -0.1986 0.2244 -16.0 346.8)" x="50" y="68" fill="#dfdfdf">C1</text><text transform="matrix(0.3467 0.0021 -0.1759 0.2247 17.4 347.0)" x="50" y="68" fill="#d5d5d5">C2</text><text transform="matrix(0.3471 0.0022 -0.1532 0.2249 51.0 347.2)" x="50" y="68" fill="#dfdfdf">C3</text><text transform="matrix(0.3475 0.0022 -0.1303 0.2252 84.5 347.4)" x="50" y="68" fill="#d5d5d5">C4</text><text transform="matrix(0.3479 0.0022 -0.1075 0.2255 118.1 347.6)" x="50" y="68" fill="#dfdfdf">C5</text><text transform="matrix(0.3483 0.0022 -0.0845 0.2258 151.8 347.8)" x="50" y="68" fill="#d5d5d5">C6</text><text transform="matrix(0.3488 0.0022 -0.0615 0.2261 185.5 348.0)" x="50" y="68" fill="#dfdfdf">C7</text><text transform="matrix(0.3492 0.0022 -0.0385 0.2263 219.2 348.2)" x="50" y="68" fill="#d5d5d5">C8</text><text transform="matrix(0.3496 0.0022 -0.0154 0.2266 253.0 348.4)" x="50" y="68" fill="#dfdfdf">C1</text><text transform="matrix(0.3500 0.0022 0.0078 0.2269 286.8 348.6)" x="50" y="68" fill="#d5d5d5">C2</text><text transform="matrix(0.3504 0.0022 0.0310 0.2272 320.6 348.8)" x="50" y="68" fill="#dfdfdf">C3</text><text transform="matrix(0.3509 0.0022 0.0542 0.2275 354.5 349.0)" x="50" y="68" fill="#d5d5d5">C4</text><text transform="matrix(0.3513 0.0022 0.0776 0.2277 388.4 349.2)" x="50" y="68" fill="#dfdfdf">C5</text><text transform="matrix(0.3517 0.0022 0.1009 0.2280 422.4 349.4)" x="50" y="68" fill="#d5d5d5">C6</text><text transform="matrix(0.3521 0.0022 0.1244 0.2283 456.4 349.6)" x="50" y="68" fill="#dfdfdf">C7</text><text transform="matrix(0.3526 0.0022 0.1479 0.2286 490.4 349.8)" x="50" y="68" fill="#d5d5d5">C8</text><text transform="matrix(0.3530 0.0022 0.1714 0.2289 524.5 350.0)" x="50" y="68" fill="#dfdfdf">C1</text><text transform="matrix(0.3534 0.0022 0.1950 0.2292 558.6 350.2)" x="50" y="68" fill="#d5d5d5">C2</text><text transform="matrix(0.3246 0.0019 -0.1948 0.1973 -29.0 326.9)" x="50" y="68" fill="#dfdfdf">B8</text><text transform="matrix(0.3250 0.0019 -0.1748 0.1975 2.5 327.1)" x="50" y="68" fill="#d5d5d5">B1</text><text transform="matrix(0.3253 0.0019 -0.1548 0.1977 34.0 327.2)" x="50" y="68" fill="#dfdfdf">B2</text><text transform="matrix(0.3257 0.0019 -0.1348 0.1980 65.5 327.4)" x="50" y="68" fill="#d5d5d5">B3</text><text transform="matrix(0.3261 0.0019 -0.1147 0.1982 97.1 327.6)" x="50" y="68" fill="#dfdfdf">B4</text><text transform="matrix(0.3264 0.0019 -0.0946 0.1984 128.7 327.8)" x="50" y="68" fill="#d5d5d5">B5</text><text transform="matrix(0.3268 0.0019 -0.0744 0.1987 160.3 327.9)" x="50" y="68" fill="#dfdfdf">B6</text><text transform="matrix(0.3272 0.0019 -0.0541 0.1989 192.0 328.1)" x="50" y="68" fill="#d5d5d5">B7</text><text transform="matrix(0.3275 0.0019 -0.0339 0.1991 223.7 328.3)" x="50" y="68" fill="#dfdfdf">B8</text><text transform="matrix(0.3279 0.0019 -0.0135 0.1994 255.4 328.5)" x="50" y="68" fill="#d5d5d5">B1</text><text transform="matrix(0.3283 0.0019 0.0068 0.1996 287.2 328.7)" x="50" y="68" fill="#dfdfdf">B2</text><text transform="matrix(0.3287 0.0019 0.0272 0.1998 319.0 328.8)" x="50" y="68" fill="#d5d5d5">B3</text><text transform="matrix(0.3290 0.0019 0.0477 0.2000 350.8 329.0)" x="50" y="68" fill="#dfdfdf">B4</text><text transform="matrix(0.3294 0.0019 0.0682 0.2003 382.7 329.2)" x="50" y="68" fill="#d5d5d5">B5</text><text transform="matrix(0.3298 0.0019 0.0888 0.2005 414.6 329.4)" x="50" y="68" fill="#dfdfdf">B6</text><text transform="matrix(0.3301 0.0019 0.1094 0.2007 446.6 329.6)" x="50" y="68" fill="#d5d5d5">B7</text><text transform="matrix(0.3305 0.0019 0.1300 0.2010 478.5 329.7)" x="50" y="68" fill="#dfdfdf">B8</text><text transform="matrix(0.3309 0.0019 0.1507 0.2012 510.6 329.9)" x="50" y="68" fill="#d5d5d5">B1</text><text transform="matrix(0.3313 0.0019 0.1714 0.2015 542.6 330.1)" x="50" y="68" fill="#dfdfdf">B2</text><text transform="matrix(0.3317 0.0019 0.1922 0.2017 574.7 330.3)" x="50" y="68" fill="#d5d5d5">B3</text><text transform="matrix(0.3058 0.0017 -0.1728 0.1750 -10.8 309.4)" x="50" y="68" fill="#d5d5d5">A8</text><text transform="matrix(0.3061 0.0017 -0.1551 0.1752 18.9 309.6)" x="50" y="68" fill="#dfdfdf">A1</text><text transform="matrix(0.3065 0.0017 -0.1373 0.1754 48.6 309.7)" x="50" y="68" fill="#d5d5d5">A2</text><text transform="matrix(0.3068 0.0017 -0.1195 0.1756 78.4 309.9)" x="50" y="68" fill="#dfdfdf">A3</text><text transform="matrix(0.3071 0.0017 -0.1017 0.1758 108.2 310.1)" x="50" y="68" fill="#d5d5d5">A4</text><text transform="matrix(0.3074 0.0017 -0.0839 0.1760 138.0 310.2)" x="50" y="68" fill="#dfdfdf">A5</text><text transform="matrix(0.3078 0.0017 -0.0659 0.1762 167.8 310.4)" x="50" y="68" fill="#d5d5d5">A6</text><text transform="matrix(0.3081 0.0017 -0.0480 0.1763 197.7 310.5)" x="50" y="68" fill="#dfdfdf">A7</text><text transform="matrix(0.3084 0.0017 -0.0300 0.1765 227.6 310.7)" x="50" y="68" fill="#d5d5d5">A8</text><text transform="matrix(0.3087 0.0017 -0.0120 0.1767 257.6 310.9)" x="50" y="68" fill="#dfdfdf">A1</text><text transform="matrix(0.3091 0.0017 0.0060 0.1769 287.5 311.0)" x="50" y="68" fill="#d5d5d5">A2</text><text transform="matrix(0.3094 0.0017 0.0241 0.1771 317.5 311.2)" x="50" y="68" fill="#dfdfdf">A3</text><text transform="matrix(0.3097 0.0017 0.0423 0.1773 347.6 311.3)" x="50" y="68" fill="#d5d5d5">A4</text><text transform="matrix(0.3101 0.0017 0.0604 0.1775 377.6 311.5)" x="50" y="68" fill="#dfdfdf">A5</text><text transform="matrix(0.3104 0.0017 0.0787 0.1777 407.7 311.7)" x="50" y="68" fill="#d5d5d5">A6</text><text transform="matrix(0.3107 0.0017 0.0969 0.1779 437.8 311.8)" x="50" y="68" fill="#dfdfdf">A7</text><text transform="matrix(0.3111 0.0017 0.1152 0.1781 468.0 312.0)" x="50" y="68" fill="#d5d5d5">A8</text><text transform="matrix(0.3114 0.0017 0.1335 0.1783 498.2 312.1)" x="50" y="68" fill="#dfdfdf">A1</text><text transform="matrix(0.3117 0.0017 0.1519 0.1785 528.4 312.3)" x="50" y="68" fill="#d5d5d5">A2</text><text transform="matrix(0.3121 0.0017 0.1703 0.1787 558.7 312.5)" x="50" y="68" fill="#dfdfdf">A3</text><text transform="matrix(0.2888 0.0015 -0.1701 0.1561 -22.7 293.7)" x="50" y="68" fill="#d5d5d5">H7</text><text transform="matrix(0.2891 0.0015 -0.1543 0.1563 5.4 293.8)" x="50" y="68" fill="#dfdfdf">H8</text><text transform="matrix(0.2894 0.0015 -0.1385 0.1565 33.6 294.0)" x="50" y="68" fill="#d5d5d5">H1</text><text transform="matrix(0.2897 0.0015 -0.1226 0.1566 61.7 294.1)" x="50" y="68" fill="#dfdfdf">H2</text><text transform="matrix(0.2899 0.0015 -0.1067 0.1568 89.9 294.3)" x="50" y="68" fill="#d5d5d5">H3</text><text transform="matrix(0.2902 0.0015 -0.0908 0.1569 118.1 294.4)" x="50" y="68" fill="#dfdfdf">H4</text><text transform="matrix(0.2905 0.0015 -0.0749 0.1571 146.3 294.5)" x="50" y="68" fill="#d5d5d5">H5</text><text transform="matrix(0.2908 0.0015 -0.0589 0.1573 174.5 294.7)" x="50" y="68" fill="#dfdfdf">H6</text><text transform="matrix(0.2911 0.0015 -0.0429 0.1574 202.8 294.8)" x="50" y="68" fill="#d5d5d5">H7</text><text transform="matrix(0.2914 0.0015 -0.0268 0.1576 231.1 295.0)" x="50" y="68" fill="#dfdfdf">H8</text><text transform="matrix(0.2917 0.0015 -0.0107 0.1578 259.5 295.1)" x="50" y="68" fill="#d5d5d5">H1</text><text transform="matrix(0.2920 0.0015 0.0054 0.1579 287.8 295.3)" x="50" y="68" fill="#dfdfdf">H2</text><text transform="matrix(0.2923 0.0015 0.0215 0.1581 316.2 295.4)" x="50" y="68" fill="#d5d5d5">H3</text><text transform="matrix(0.2926 0.0015 0.0377 0.1582 344.7 295.5)" x="50" y="68" fill="#dfdfdf">H4</text><text transform="matrix(0.2929 0.0015 0.0539 0.1584 373.1 295.7)" x="50" y="68" fill="#d5d5d5">H5</text><text transform="matrix(0.2932 0.0015 0.0702 0.1586 401.6 295.8)" x="50" y="68" fill="#dfdfdf">H6</text><text transform="matrix(0.2935 0.0015 0.0865 0.1587 430.1 296.0)" x="50" y="68" fill="#d5d5d5">H7</text><text transform="matrix(0.2938 0.0015 0.1028 0.1589 458.6 296.1)" x="50" y="68" fill="#dfdfdf">H8</text><text transform="matrix(0.2941 0.0015 0.1191 0.1591 487.2 296.3)" x="50" y="68" fill="#d5d5d5">H1</text><text transform="matrix(0.2944 0.0015 0.1355 0.1592 515.8 296.4)" x="50" y="68" fill="#dfdfdf">H2</text><text transform="matrix(0.2947 0.0015 0.1519 0.1594 544.4 296.6)" x="50" y="68" fill="#d5d5d5">H3</text><text transform="matrix(0.2950 0.0015 0.1684 0.1596 573.0 296.7)" x="50" y="68" fill="#dfdfdf">H4</text><text transform="matrix(0.2736 0.0014 -0.1670 0.1402 -33.3 279.6)" x="50" y="68" fill="#d5d5d5">G6</text><text transform="matrix(0.2738 0.0014 -0.1529 0.1403 -6.6 279.7)" x="50" y="68" fill="#dfdfdf">G7</text><text transform="matrix(0.2741 0.0014 -0.1387 0.1404 20.0 279.8)" x="50" y="68" fill="#d5d5d5">G8</text><text transform="matrix(0.2743 0.0014 -0.1244 0.1406 46.7 279.9)" x="50" y="68" fill="#dfdfdf">G1</text><text transform="matrix(0.2746 0.0014 -0.1102 0.1407 73.5 280.1)" x="50" y="68" fill="#d5d5d5">G2</text><text transform="matrix(0.2749 0.0014 -0.0959 0.1408 100.2 280.2)" x="50" y="68" fill="#dfdfdf">G3</text><text transform="matrix(0.2751 0.0014 -0.0816 0.1410 127.0 280.3)" x="50" y="68" fill="#d5d5d5">G4</text><text transform="matrix(0.2754 0.0014 -0.0672 0.1411 153.8 280.5)" x="50" y="68" fill="#dfdfdf">G5</text><text transform="matrix(0.2757 0.0014 -0.0529 0.1413 180.6 280.6)" x="50" y="68" fill="#d5d5d5">G6</text><text transform="matrix(0.2759 0.0014 -0.0385 0.1414 207.4 280.7)" x="50" y="68" fill="#dfdfdf">G7</text><text transform="matrix(0.2762 0.0014 -0.0241 0.1415 234.3 280.8)" x="50" y="68" fill="#d5d5d5">G8</text><text transform="matrix(0.2764 0.0014 -0.0096 0.1417 261.2 281.0)" x="50" y="68" fill="#dfdfdf">G1</text><text transform="matrix(0.2767 0.0014 0.0048 0.1418 288.1 281.1)" x="50" y="68" fill="#d5d5d5">G2</text><text transform="matrix(0.2770 0.0014 0.0193 0.1420 315.1 281.2)" x="50" y="68" fill="#dfdfdf">G3</text><text transform="matrix(0.2772 0.0014 0.0339 0.1421 342.0 281.4)" x="50" y="68" fill="#d5d5d5">G4</text><text transform="matrix(0.2775 0.0014 0.0484 0.1422 369.0 281.5)" x="50" y="68" fill="#dfdfdf">G5</text><text transform="matrix(0.2778 0.0014 0.0630 0.1424 396.1 281.6)" x="50" y="68" fill="#d5d5d5">G6</text><text transform="matrix(0.2780 0.0014 0.0776 0.1425 423.1 281.8)" x="50" y="68" fill="#dfdfdf">G7</text><text transform="matrix(0.2783 0.0014 0.0923 0.1427 450.2 281.9)" x="50" y="68" fill="#d5d5d5">G8</text><text transform="matrix(0.2786 0.0014 0.1069 0.1428 477.3 282.0)" x="50" y="68" fill="#dfdfdf">G1</text><text transform="matrix(0.2788 0.0014 0.1216 0.1429 504.4 282.2)" x="50" y="68" fill="#d5d5d5">G2</text><text transform="matrix(0.2791 0.0014 0.1364 0.1431 531.5 282.3)" x="50" y="68" fill="#dfdfdf">G3</text><text transform="matrix(0.2794 0.0014 0.1511 0.1432 558.7 282.4)" x="50" y="68" fill="#d5d5d5">G4</text><text transform="matrix(0.2601 0.0012 -0.1509 0.1266 -17.5 266.9)" x="50" y="68" fill="#dfdfdf">F6</text><text transform="matrix(0.2603 0.0012 -0.1381 0.1267 7.8 267.0)" x="50" y="68" fill="#d5d5d5">F7</text><text transform="matrix(0.2606 0.0012 -0.1253 0.1269 33.2 267.1)" x="50" y="68" fill="#dfdfdf">F8</text><text transform="matrix(0.2608 0.0012 -0.1124 0.1270 58.6 267.3)" x="50" y="68" fill="#d5d5d5">F1</text><text transform="matrix(0.2610 0.0012 -0.0995 0.1271 84.1 267.4)" x="50" y="68" fill="#dfdfdf">F2</text><text transform="matrix(0.2613 0.0012 -0.0866 0.1272 109.5 267.5)" x="50" y="68" fill="#d5d5d5">F3</text><text transform="matrix(0.2615 0.0012 -0.0737 0.1273 135.0 267.6)" x="50" y="68" fill="#dfdfdf">F4</text><text transform="matrix(0.2618 0.0012 -0.0607 0.1275 160.5 267.7)" x="50" y="68" fill="#d5d5d5">F5</text><text transform="matrix(0.2620 0.0012 -0.0478 0.1276 186.0 267.9)" x="50" y="68" fill="#dfdfdf">F6</text><text transform="matrix(0.2622 0.0012 -0.0348 0.1277 211.6 268.0)" x="50" y="68" fill="#d5d5d5">F7</text><text transform="matrix(0.2625 0.0012 -0.0217 0.1278 237.2 268.1)" x="50" y="68" fill="#dfdfdf">F8</text><text transform="matrix(0.2627 0.0012 -0.0087 0.1279 262.8 268.2)" x="50" y="68" fill="#d5d5d5">F1</text><text transform="matrix(0.2629 0.0012 0.0044 0.1281 288.4 268.3)" x="50" y="68" fill="#dfdfdf">F2</text><text transform="matrix(0.2632 0.0012 0.0175 0.1282 314.0 268.4)" x="50" y="68" fill="#d5d5d5">F3</text><text transform="matrix(0.2634 0.0012 0.0306 0.1283 339.7 268.6)" x="50" y="68" fill="#dfdfdf">F4</text><text transform="matrix(0.2637 0.0012 0.0437 0.1284 365.4 268.7)" x="50" y="68" fill="#d5d5d5">F5</text><text transform="matrix(0.2639 0.0012 0.0569 0.1285 391.1 268.8)" x="50" y="68" fill="#dfdfdf">F6</text><text transform="matrix(0.2641 0.0012 0.0701 0.1287 416.8 268.9)" x="50" y="68" fill="#d5d5d5">F7</text><text transform="matrix(0.2644 0.0013 0.0833 0.1288 442.5 269.0)" x="50" y="68" fill="#dfdfdf">F8</text><text transform="matrix(0.2646 0.0013 0.0965 0.1289 468.3 269.2)" x="50" y="68" fill="#d5d5d5">F1</text><text transform="matrix(0.2649 0.0013 0.1098 0.1290 494.1 269.3)" x="50" y="68" fill="#dfdfdf">F2</text><text transform="matrix(0.2651 0.0013 0.1231 0.1291 519.9 269.4)" x="50" y="68" fill="#d5d5d5">F3</text><text transform="matrix(0.2653 0.0013 0.1364 0.1293 545.8 269.5)" x="50" y="68" fill="#dfdfdf">F4</text><text transform="matrix(0.2656 0.0013 0.1497 0.1294 571.7 269.6)" x="50" y="68" fill="#d5d5d5">F5</text><text transform="matrix(0.2477 0.0011 -0.1486 0.1149 -27.4 255.3)" x="50" y="68" fill="#dfdfdf">E5</text><text transform="matrix(0.2479 0.0011 -0.1370 0.1150 -3.2 255.4)" x="50" y="68" fill="#d5d5d5">E6</text><text transform="matrix(0.2481 0.0011 -0.1254 0.1151 21.0 255.5)" x="50" y="68" fill="#dfdfdf">E7</text><text transform="matrix(0.2483 0.0011 -0.1137 0.1152 45.2 255.6)" x="50" y="68" fill="#d5d5d5">E8</text><text transform="matrix(0.2485 0.0011 -0.1020 0.1153 69.4 255.8)" x="50" y="68" fill="#dfdfdf">E1</text><text transform="matrix(0.2488 0.0011 -0.0903 0.1154 93.7 255.9)" x="50" y="68" fill="#d5d5d5">E2</text><text transform="matrix(0.2490 0.0011 -0.0786 0.1155 118.0 256.0)" x="50" y="68" fill="#dfdfdf">E3</text><text transform="matrix(0.2492 0.0011 -0.0669 0.1156 142.3 256.1)" x="50" y="68" fill="#d5d5d5">E4</text><text transform="matrix(0.2494 0.0011 -0.0551 0.1157 166.6 256.2)" x="50" y="68" fill="#dfdfdf">E5</text><text transform="matrix(0.2496 0.0011 -0.0434 0.1158 191.0 256.3)" x="50" y="68" fill="#d5d5d5">E6</text><text transform="matrix(0.2498 0.0011 -0.0316 0.1159 215.4 256.4)" x="50" y="68" fill="#dfdfdf">E7</text><text transform="matrix(0.2500 0.0011 -0.0197 0.1160 239.8 256.5)" x="50" y="68" fill="#d5d5d5">E8</text><text transform="matrix(0.2503 0.0011 -0.0079 0.1161 264.2 256.6)" x="50" y="68" fill="#dfdfdf">E1</text><text transform="matrix(0.2505 0.0011 0.0040 0.1162 288.6 256.7)" x="50" y="68" fill="#d5d5d5">E2</text><text transform="matrix(0.2507 0.0011 0.0159 0.1163 313.1 256.8)" x="50" y="68" fill="#dfdfdf">E3</text><text transform="matrix(0.2509 0.0011 0.0278 0.1164 337.5 256.9)" x="50" y="68" fill="#d5d5d5">E4</text><text transform="matrix(0.2511 0.0011 0.0397 0.1165 362.0 257.0)" x="50" y="68" fill="#dfdfdf">E5</text><text transform="matrix(0.2513 0.0011 0.0516 0.1166 386.5 257.2)" x="50" y="68" fill="#d5d5d5">E6</text><text transform="matrix(0.2516 0.0011 0.0636 0.1167 411.1 257.3)" x="50" y="68" fill="#dfdfdf">E7</text><text transform="matrix(0.2518 0.0011 0.0756 0.1168 435.6 257.4)" x="50" y="68" fill="#d5d5d5">E8</text><text transform="matrix(0.2520 0.0011 0.0876 0.1169 460.2 257.5)" x="50" y="68" fill="#dfdfdf">E1</text><text transform="matrix(0.2522 0.0011 0.0996 0.1170 484.8 257.6)" x="50" y="68" fill="#d5d5d5">E2</text><text transform="matrix(0.2524 0.0011 0.1117 0.1171 509.4 257.7)" x="50" y="68" fill="#dfdfdf">E3</text><text transform="matrix(0.2527 0.0011 0.1237 0.1173 534.1 257.8)" x="50" y="68" fill="#d5d5d5">E4</text><text transform="matrix(0.2529 0.0011 0.1358 0.1174 558.7 257.9)" x="50" y="68" fill="#dfdfdf">E5</text><text transform="matrix(0.2531 0.0011 0.1479 0.1175 583.4 258.0)" x="50" y="68" fill="#d5d5d5">E6</text><text transform="matrix(0.2366 0.0010 -0.1356 0.1048 -13.3 244.9)" x="50" y="68" fill="#d5d5d5">D5</text><text transform="matrix(0.2368 0.0010 -0.1250 0.1048 9.8 245.0)" x="50" y="68" fill="#dfdfdf">D6</text><text transform="matrix(0.2370 0.0010 -0.1143 0.1049 32.9 245.1)" x="50" y="68" fill="#d5d5d5">D7</text><text transform="matrix(0.2372 0.0010 -0.1037 0.1050 56.1 245.2)" x="50" y="68" fill="#dfdfdf">D8</text><text transform="matrix(0.2374 0.0010 -0.0931 0.1051 79.3 245.3)" x="50" y="68" fill="#d5d5d5">D1</text><text transform="matrix(0.2376 0.0010 -0.0824 0.1052 102.5 245.4)" x="50" y="68" fill="#dfdfdf">D2</text><text transform="matrix(0.2378 0.0010 -0.0717 0.1053 125.7 245.5)" x="50" y="68" fill="#d5d5d5">D3</text><text transform="matrix(0.2380 0.0010 -0.0610 0.1054 149.0 245.6)" x="50" y="68" fill="#dfdfdf">D4</text><text transform="matrix(0.2382 0.0010 -0.0503 0.1055 172.2 245.7)" x="50" y="68" fill="#d5d5d5">D5</text><text transform="matrix(0.2384 0.0010 -0.0395 0.1056 195.5 245.8)" x="50" y="68" fill="#dfdfdf">D6</text><text transform="matrix(0.2386 0.0010 -0.0288 0.1057 218.8 245.8)" x="50" y="68" fill="#d5d5d5">D7</text><text transform="matrix(0.2387 0.0010 -0.0180 0.1057 242.1 245.9)" x="50" y="68" fill="#dfdfdf">D8</text><text transform="matrix(0.2389 0.0010 -0.0072 0.1058 265.4 246.0)" x="50" y="68" fill="#d5d5d5">D1</text><text transform="matrix(0.2391 0.0010 0.0036 0.1059 288.8 246.1)" x="50" y="68" fill="#dfdfdf">D2</text><text transform="matrix(0.2393 0.0010 0.0145 0.1060 312.2 246.2)" x="50" y="68" fill="#d5d5d5">D3</text><text transform="matrix(0.2395 0.0010 0.0253 0.1061 335.6 246.3)" x="50" y="68" fill="#dfdfdf">D4</text><text transform="matrix(0.2397 0.0010 0.0362 0.1062 359.0 246.4)" x="50" y="68" fill="#d5d5d5">D5</text><text transform="matrix(0.2399 0.0010 0.0471 0.1063 382.4 246.5)" x="50" y="68" fill="#dfdfdf">D6</text><text transform="matrix(0.2401 0.0010 0.0580 0.1064 405.9 246.6)" x="50" y="68" fill="#d5d5d5">D7</text><text transform="matrix(0.2403 0.0010 0.0689 0.1065 429.3 246.7)" x="50" y="68" fill="#dfdfdf">D8</text><text transform="matrix(0.2405 0.0010 0.0798 0.1066 452.8 246.8)" x="50" y="68" fill="#d5d5d5">D1</text><text transform="matrix(0.2407 0.0010 0.0908 0.1067 476.3 246.9)" x="50" y="68" fill="#dfdfdf">D2</text><text transform="matrix(0.2409 0.0010 0.1017 0.1067 499.8 247.0)" x="50" y="68" fill="#d5d5d5">D3</text><text transform="matrix(0.2411 0.0010 0.1127 0.1068 523.4 247.1)" x="50" y="68" fill="#dfdfdf">D4</text><text transform="matrix(0.2413 0.0010 0.1237 0.1069 546.9 247.2)" x="50" y="68" fill="#d5d5d5">D5</text><text transform="matrix(0.2415 0.0010 0.1348 0.1070 570.5 247.3)" x="50" y="68" fill="#dfdfdf">D6</text><text transform="matrix(0.2263 0.0009 -0.1338 0.0959 -22.6 235.2)" x="50" y="68" fill="#d5d5d5">C4</text><text transform="matrix(0.2265 0.0009 -0.1241 0.0959 -0.4 235.3)" x="50" y="68" fill="#dfdfdf">C5</text><text transform="matrix(0.2266 0.0009 -0.1144 0.0960 21.7 235.4)" x="50" y="68" fill="#d5d5d5">C6</text><text transform="matrix(0.2268 0.0009 -0.1047 0.0961 43.9 235.5)" x="50" y="68" fill="#dfdfdf">C7</text><text transform="matrix(0.2270 0.0009 -0.0950 0.0962 66.1 235.6)" x="50" y="68" fill="#d5d5d5">C8</text><text transform="matrix(0.2272 0.0009 -0.0852 0.0962 88.3 235.6)" x="50" y="68" fill="#dfdfdf">C1</text><text transform="matrix(0.2274 0.0009 -0.0754 0.0963 110.5 235.7)" x="50" y="68" fill="#d5d5d5">C2</text><text transform="matrix(0.2275 0.0009 -0.0656 0.0964 132.8 235.8)" x="50" y="68" fill="#dfdfdf">C3</text><text transform="matrix(0.2277 0.0009 -0.0558 0.0965 155.0 235.9)" x="50" y="68" fill="#d5d5d5">C4</text><text transform="matrix(0.2279 0.0009 -0.0460 0.0966 177.3 236.0)" x="50" y="68" fill="#dfdfdf">C5</text><text transform="matrix(0.2281 0.0009 -0.0362 0.0966 199.6 236.1)" x="50" y="68" fill="#d5d5d5">C6</text><text transform="matrix(0.2282 0.0009 -0.0263 0.0967 221.9 236.2)" x="50" y="68" fill="#dfdfdf">C7</text><text transform="matrix(0.2284 0.0009 -0.0165 0.0968 244.3 236.3)" x="50" y="68" fill="#d5d5d5">C8</text><text transform="matrix(0.2286 0.0009 -0.0066 0.0969 266.6 236.4)" x="50" y="68" fill="#dfdfdf">C1</text><text transform="matrix(0.2288 0.0009 0.0033 0.0970 289.0 236.5)" x="50" y="68" fill="#d5d5d5">C2</text><text transform="matrix(0.2290 0.0010 0.0132 0.0970 311.4 236.6)" x="50" y="68" fill="#dfdfdf">C3</text><text transform="matrix(0.2292 0.0010 0.0232 0.0971 333.8 236.6)" x="50" y="68" fill="#d5d5d5">C4</text><text transform="matrix(0.2293 0.0010 0.0331 0.0972 356.2 236.7)" x="50" y="68" fill="#dfdfdf">C5</text><text transform="matrix(0.2295 0.0010 0.0431 0.0973 378.6 236.8)" x="50" y="68" fill="#d5d5d5">C6</text><text transform="matrix(0.2297 0.0010 0.0530 0.0974 401.1 236.9)" x="50" y="68" fill="#dfdfdf">C7</text><text transform="matrix(0.2299 0.0010 0.0630 0.0974 423.5 237.0)" x="50" y="68" fill="#d5d5d5">C8</text><text transform="matrix(0.2301 0.0010 0.0730 0.0975 446.0 237.1)" x="50" y="68" fill="#dfdfdf">C1</text><text transform="matrix(0.2302 0.0010 0.0831 0.0976 468.5 237.2)" x="50" y="68" fill="#d5d5d5">C2</text><text transform="matrix(0.2304 0.0010 0.0931 0.0977 491.1 237.3)" x="50" y="68" fill="#dfdfdf">C3</text><text transform="matrix(0.2306 0.0010 0.1032 0.0978 513.6 237.4)" x="50" y="68" fill="#d5d5d5">C4</text><text transform="matrix(0.2308 0.0010 0.1132 0.0978 536.2 237.5)" x="50" y="68" fill="#dfdfdf">C5</text><text transform="matrix(0.2310 0.0010 0.1233 0.0979 558.7 237.6)" x="50" y="68" fill="#d5d5d5">C6</text><text transform="matrix(0.2312 0.0010 0.1334 0.0980 581.3 237.7)" x="50" y="68" fill="#dfdfdf">C7</text><text transform="matrix(0.2168 0.0009 -0.1319 0.0880 -31.1 226.3)" x="50" y="68" fill="#d5d5d5">B3</text><text transform="matrix(0.2170 0.0009 -0.1230 0.0881 -9.8 226.4)" x="50" y="68" fill="#dfdfdf">B4</text><text transform="matrix(0.2172 0.0009 -0.1141 0.0882 11.4 226.5)" x="50" y="68" fill="#d5d5d5">B5</text><text transform="matrix(0.2173 0.0009 -0.1052 0.0882 32.7 226.6)" x="50" y="68" fill="#dfdfdf">B6</text><text transform="matrix(0.2175 0.0009 -0.0962 0.0883 54.0 226.6)" x="50" y="68" fill="#d5d5d5">B7</text><text transform="matrix(0.2176 0.0009 -0.0873 0.0884 75.3 226.7)" x="50" y="68" fill="#dfdfdf">B8</text><text transform="matrix(0.2178 0.0009 -0.0783 0.0885 96.6 226.8)" x="50" y="68" fill="#d5d5d5">B1</text><text transform="matrix(0.2180 0.0009 -0.0693 0.0885 117.9 226.9)" x="50" y="68" fill="#dfdfdf">B2</text><text transform="matrix(0.2181 0.0009 -0.0603 0.0886 139.3 227.0)" x="50" y="68" fill="#d5d5d5">B3</text><text transform="matrix(0.2183 0.0009 -0.0513 0.0887 160.6 227.1)" x="50" y="68" fill="#dfdfdf">B4</text><text transform="matrix(0.2185 0.0009 -0.0423 0.0887 182.0 227.1)" x="50" y="68" fill="#d5d5d5">B5</text><text transform="matrix(0.2186 0.0009 -0.0332 0.0888 203.4 227.2)" x="50" y="68" fill="#dfdfdf">B6</text><text transform="matrix(0.2188 0.0009 -0.0242 0.0889 224.8 227.3)" x="50" y="68" fill="#d5d5d5">B7</text><text transform="matrix(0.2190 0.0009 -0.0151 0.0889 246.3 227.4)" x="50" y="68" fill="#dfdfdf">B8</text><text transform="matrix(0.2191 0.0009 -0.0060 0.0890 267.7 227.5)" x="50" y="68" fill="#d5d5d5">B1</text><text transform="matrix(0.2193 0.0009 0.0030 0.0891 289.2 227.6)" x="50" y="68" fill="#dfdfdf">B2</text><text transform="matrix(0.2195 0.0009 0.0122 0.0891 310.6 227.7)" x="50" y="68" fill="#d5d5d5">B3</text><text transform="matrix(0.2196 0.0009 0.0213 0.0892 332.1 227.7)" x="50" y="68" fill="#dfdfdf">B4</text><text transform="matrix(0.2198 0.0009 0.0304 0.0893 353.6 227.8)" x="50" y="68" fill="#d5d5d5">B5</text><text transform="matrix(0.2200 0.0009 0.0396 0.0894 375.2 227.9)" x="50" y="68" fill="#dfdfdf">B6</text><text transform="matrix(0.2201 0.0009 0.0487 0.0894 396.7 228.0)" x="50" y="68" fill="#d5d5d5">B7</text><text transform="matrix(0.2203 0.0009 0.0579 0.0895 418.2 228.1)" x="50" y="68" fill="#dfdfdf">B8</text><text transform="matrix(0.2205 0.0009 0.0671 0.0896 439.8 228.2)" x="50" y="68" fill="#d5d5d5">B1</text><text transform="matrix(0.2206 0.0009 0.0763 0.0896 461.4 228.2)" x="50" y="68" fill="#dfdfdf">B2</text><text transform="matrix(0.2208 0.0009 0.0855 0.0897 483.0 228.3)" x="50" y="68" fill="#d5d5d5">B3</text><text transform="matrix(0.2210 0.0009 0.0947 0.0898 504.6 228.4)" x="50" y="68" fill="#dfdfdf">B4</text><text transform="matrix(0.2211 0.0009 0.1040 0.0899 526.3 228.5)" x="50" y="68" fill="#d5d5d5">B5</text><text transform="matrix(0.2213 0.0009 0.1132 0.0899 547.9 228.6)" x="50" y="68" fill="#dfdfdf">B6</text><text transform="matrix(0.2215 0.0009 0.1225 0.0900 569.6 228.7)" x="50" y="68" fill="#d5d5d5">B7</text><text transform="matrix(0.2083 0.0008 -0.1217 0.0812 -18.5 218.2)" x="50" y="68" fill="#dfdfdf">A3</text><text transform="matrix(0.2084 0.0008 -0.1135 0.0813 1.9 218.3)" x="50" y="68" fill="#d5d5d5">A4</text><text transform="matrix(0.2086 0.0008 -0.1052 0.0813 22.4 218.4)" x="50" y="68" fill="#dfdfdf">A5</text><text transform="matrix(0.2087 0.0008 -0.0970 0.0814 42.8 218.4)" x="50" y="68" fill="#d5d5d5">A6</text><text transform="matrix(0.2089 0.0008 -0.0887 0.0814 63.3 218.5)" x="50" y="68" fill="#dfdfdf">A7</text><text transform="matrix(0.2090 0.0008 -0.0805 0.0815 83.8 218.6)" x="50" y="68" fill="#d5d5d5">A8</text><text transform="matrix(0.2092 0.0008 -0.0722 0.0816 104.2 218.7)" x="50" y="68" fill="#dfdfdf">A1</text><text transform="matrix(0.2093 0.0008 -0.0639 0.0816 124.8 218.7)" x="50" y="68" fill="#d5d5d5">A2</text><text transform="matrix(0.2095 0.0008 -0.0556 0.0817 145.3 218.8)" x="50" y="68" fill="#dfdfdf">A3</text><text transform="matrix(0.2096 0.0008 -0.0473 0.0818 165.8 218.9)" x="50" y="68" fill="#d5d5d5">A4</text><text transform="matrix(0.2098 0.0008 -0.0390 0.0818 186.4 219.0)" x="50" y="68" fill="#dfdfdf">A5</text><text transform="matrix(0.2099 0.0008 -0.0307 0.0819 206.9 219.1)" x="50" y="68" fill="#d5d5d5">A6</text><text transform="matrix(0.2101 0.0008 -0.0223 0.0819 227.5 219.1)" x="50" y="68" fill="#dfdfdf">A7</text><text transform="matrix(0.2103 0.0008 -0.0139 0.0820 248.1 219.2)" x="50" y="68" fill="#d5d5d5">A8</text><text transform="matrix(0.2104 0.0008 -0.0056 0.0821 268.7 219.3)" x="50" y="68" fill="#dfdfdf">A1</text><text transform="matrix(0.2106 0.0008 0.0028 0.0821 289.3 219.4)" x="50" y="68" fill="#d5d5d5">A2</text><text transform="matrix(0.2107 0.0008 0.0112 0.0822 310.0 219.4)" x="50" y="68" fill="#dfdfdf">A3</text><text transform="matrix(0.2109 0.0008 0.0196 0.0822 330.6 219.5)" x="50" y="68" fill="#d5d5d5">A4</text><text transform="matrix(0.2110 0.0008 0.0280 0.0823 351.3 219.6)" x="50" y="68" fill="#dfdfdf">A5</text><text transform="matrix(0.2112 0.0008 0.0365 0.0824 371.9 219.7)" x="50" y="68" fill="#d5d5d5">A6</text><text transform="matrix(0.2113 0.0008 0.0449 0.0824 392.6 219.8)" x="50" y="68" fill="#dfdfdf">A7</text><text transform="matrix(0.2115 0.0008 0.0534 0.0825 413.4 219.8)" x="50" y="68" fill="#d5d5d5">A8</text><text transform="matrix(0.2116 0.0008 0.0618 0.0826 434.1 219.9)" x="50" y="68" fill="#dfdfdf">A1</text><text transform="matrix(0.2118 0.0008 0.0703 0.0826 454.8 220.0)" x="50" y="68" fill="#d5d5d5">A2</text><text transform="matrix(0.2119 0.0008 0.0788 0.0827 475.6 220.1)" x="50" y="68" fill="#dfdfdf">A3</text><text transform="matrix(0.2121 0.0008 0.0873 0.0827 496.3 220.1)" x="50" y="68" fill="#d5d5d5">A4</text><text transform="matrix(0.2123 0.0008 0.0958 0.0828 517.1 220.2)" x="50" y="68" fill="#dfdfdf">A5</text><text transform="matrix(0.2124 0.0008 0.1044 0.0829 537.9 220.3)" x="50" y="68" fill="#d5d5d5">A6</text><text transform="matrix(0.2126 0.0008 0.1129 0.0829 558.7 220.4)" x="50" y="68" fill="#dfdfdf">A7</text><text transform="matrix(0.2127 0.0008 0.1215 0.0830 579.6 220.5)" x="50" y="68" fill="#d5d5d5">A8</text><text transform="matrix(0.2002 0.0007 -0.1202 0.0751 -26.5 210.6)" x="50" y="68" fill="#dfdfdf">H2</text><text transform="matrix(0.2004 0.0007 -0.1126 0.0751 -6.8 210.7)" x="50" y="68" fill="#d5d5d5">H3</text><text transform="matrix(0.2005 0.0007 -0.1050 0.0752 12.8 210.8)" x="50" y="68" fill="#dfdfdf">H4</text><text transform="matrix(0.2007 0.0007 -0.0974 0.0752 32.5 210.8)" x="50" y="68" fill="#d5d5d5">H5</text><text transform="matrix(0.2008 0.0007 -0.0897 0.0753 52.2 210.9)" x="50" y="68" fill="#dfdfdf">H6</text><text transform="matrix(0.2009 0.0007 -0.0821 0.0753 71.9 211.0)" x="50" y="68" fill="#d5d5d5">H7</text><text transform="matrix(0.2011 0.0007 -0.0744 0.0754 91.6 211.1)" x="50" y="68" fill="#dfdfdf">H8</text><text transform="matrix(0.2012 0.0007 -0.0668 0.0755 111.3 211.1)" x="50" y="68" fill="#d5d5d5">H1</text><text transform="matrix(0.2014 0.0007 -0.0591 0.0755 131.1 211.2)" x="50" y="68" fill="#dfdfdf">H2</text><text transform="matrix(0.2015 0.0007 -0.0514 0.0756 150.8 211.3)" x="50" y="68" fill="#d5d5d5">H3</text><text transform="matrix(0.2016 0.0007 -0.0438 0.0756 170.6 211.3)" x="50" y="68" fill="#dfdfdf">H4</text><text transform="matrix(0.2018 0.0007 -0.0361 0.0757 190.4 211.4)" x="50" y="68" fill="#d5d5d5">H5</text><text transform="matrix(0.2019 0.0007 -0.0284 0.0757 210.2 211.5)" x="50" y="68" fill="#dfdfdf">H6</text><text transform="matrix(0.2021 0.0007 -0.0206 0.0758 230.0 211.6)" x="50" y="68" fill="#d5d5d5">H7</text><text transform="matrix(0.2022 0.0007 -0.0129 0.0758 249.8 211.6)" x="50" y="68" fill="#dfdfdf">H8</text><text transform="matrix(0.2023 0.0007 -0.0052 0.0759 269.6 211.7)" x="50" y="68" fill="#d5d5d5">H1</text><text transform="matrix(0.2025 0.0008 0.0026 0.0759 289.5 211.8)" x="50" y="68" fill="#dfdfdf">H2</text><text transform="matrix(0.2026 0.0008 0.0104 0.0760 309.3 211.9)" x="50" y="68" fill="#d5d5d5">H3</text><text transform="matrix(0.2028 0.0008 0.0181 0.0761 329.2 211.9)" x="50" y="68" fill="#dfdfdf">H4</text><text transform="matrix(0.2029 0.0008 0.0259 0.0761 349.1 212.0)" x="50" y="68" fill="#d5d5d5">H5</text><text transform="matrix(0.2031 0.0008 0.0337 0.0762 369.0 212.1)" x="50" y="68" fill="#dfdfdf">H6</text><text transform="matrix(0.2032 0.0008 0.0415 0.0762 388.9 212.1)" x="50" y="68" fill="#d5d5d5">H7</text><text transform="matrix(0.2033 0.0008 0.0493 0.0763 408.8 212.2)" x="50" y="68" fill="#dfdfdf">H8</text><text transform="matrix(0.2035 0.0008 0.0572 0.0763 428.8 212.3)" x="50" y="68" fill="#d5d5d5">H1</text><text transform="matrix(0.2036 0.0008 0.0650 0.0764 448.7 212.4)" x="50" y="68" fill="#dfdfdf">H2</text><text transform="matrix(0.2038 0.0008 0.0729 0.0765 468.7 212.4)" x="50" y="68" fill="#d5d5d5">H3</text><text transform="matrix(0.2039 0.0008 0.0807 0.0765 488.7 212.5)" x="50" y="68" fill="#dfdfdf">H4</text><text transform="matrix(0.2041 0.0008 0.0886 0.0766 508.7 212.6)" x="50" y="68" fill="#d5d5d5">H5</text><text transform="matrix(0.2042 0.0008 0.0965 0.0766 528.7 212.6)" x="50" y="68" fill="#dfdfdf">H6</text><text transform="matrix(0.2043 0.0008 0.1044 0.0767 548.7 212.7)" x="50" y="68" fill="#d5d5d5">H7</text><text transform="matrix(0.2045 0.0008 0.1123 0.0767 568.8 212.8)" x="50" y="68" fill="#dfdfdf">H8</text><text transform="matrix(0.2046 0.0008 0.1202 0.0768 588.8 212.9)" x="50" y="68" fill="#d5d5d5">H1</text><text transform="matrix(0.1929 0.0007 -0.1115 0.0697 -15.0 203.7)" x="50" y="68" fill="#d5d5d5">G2</text><text transform="matrix(0.1931 0.0007 -0.1045 0.0697 4.0 203.7)" x="50" y="68" fill="#dfdfdf">G3</text><text transform="matrix(0.1932 0.0007 -0.0974 0.0698 22.9 203.8)" x="50" y="68" fill="#d5d5d5">G4</text><text transform="matrix(0.1933 0.0007 -0.0903 0.0698 41.9 203.9)" x="50" y="68" fill="#dfdfdf">G5</text><text transform="matrix(0.1935 0.0007 -0.0833 0.0699 60.9 203.9)" x="50" y="68" fill="#d5d5d5">G6</text><text transform="matrix(0.1936 0.0007 -0.0762 0.0699 79.9 204.0)" x="50" y="68" fill="#dfdfdf">G7</text><text transform="matrix(0.1937 0.0007 -0.0691 0.0700 98.9 204.1)" x="50" y="68" fill="#d5d5d5">G8</text><text transform="matrix(0.1938 0.0007 -0.0620 0.0700 117.9 204.1)" x="50" y="68" fill="#dfdfdf">G1</text><text transform="matrix(0.1940 0.0007 -0.0549 0.0701 136.9 204.2)" x="50" y="68" fill="#d5d5d5">G2</text><text transform="matrix(0.1941 0.0007 -0.0477 0.0701 156.0 204.3)" x="50" y="68" fill="#dfdfdf">G3</text><text transform="matrix(0.1942 0.0007 -0.0406 0.0702 175.0 204.3)" x="50" y="68" fill="#d5d5d5">G4</text><text transform="matrix(0.1944 0.0007 -0.0335 0.0702 194.1 204.4)" x="50" y="68" fill="#dfdfdf">G5</text><text transform="matrix(0.1945 0.0007 -0.0263 0.0703 213.2 204.5)" x="50" y="68" fill="#d5d5d5">G6</text><text transform="matrix(0.1946 0.0007 -0.0191 0.0703 232.2 204.5)" x="50" y="68" fill="#dfdfdf">G7</text><text transform="matrix(0.1948 0.0007 -0.0120 0.0703 251.3 204.6)" x="50" y="68" fill="#d5d5d5">G8</text><text transform="matrix(0.1949 0.0007 -0.0048 0.0704 270.5 204.7)" x="50" y="68" fill="#dfdfdf">G1</text><text transform="matrix(0.1950 0.0007 0.0024 0.0704 289.6 204.7)" x="50" y="68" fill="#d5d5d5">G2</text><text transform="matrix(0.1952 0.0007 0.0096 0.0705 308.7 204.8)" x="50" y="68" fill="#dfdfdf">G3</text><text transform="matrix(0.1953 0.0007 0.0168 0.0705 327.9 204.9)" x="50" y="68" fill="#d5d5d5">G4</text><text transform="matrix(0.1954 0.0007 0.0240 0.0706 347.1 204.9)" x="50" y="68" fill="#dfdfdf">G5</text><text transform="matrix(0.1955 0.0007 0.0313 0.0706 366.2 205.0)" x="50" y="68" fill="#d5d5d5">G6</text><text transform="matrix(0.1957 0.0007 0.0385 0.0707 385.4 205.1)" x="50" y="68" fill="#dfdfdf">G7</text><text transform="matrix(0.1958 0.0007 0.0458 0.0707 404.6 205.1)" x="50" y="68" fill="#d5d5d5">G8</text><text transform="matrix(0.1959 0.0007 0.0530 0.0708 423.9 205.2)" x="50" y="68" fill="#dfdfdf">G1</text><text transform="matrix(0.1961 0.0007 0.0603 0.0708 443.1 205.3)" x="50" y="68" fill="#d5d5d5">G2</text><text transform="matrix(0.1962 0.0007 0.0676 0.0709 462.3 205.3)" x="50" y="68" fill="#dfdfdf">G3</text><text transform="matrix(0.1963 0.0007 0.0749 0.0709 481.6 205.4)" x="50" y="68" fill="#d5d5d5">G4</text><text transform="matrix(0.1965 0.0007 0.0822 0.0710 500.9 205.5)" x="50" y="68" fill="#dfdfdf">G5</text><text transform="matrix(0.1966 0.0007 0.0895 0.0710 520.1 205.6)" x="50" y="68" fill="#d5d5d5">G6</text><text transform="matrix(0.1967 0.0007 0.0968 0.0711 539.4 205.6)" x="50" y="68" fill="#dfdfdf">G7</text><text transform="matrix(0.1969 0.0007 0.1041 0.0711 558.7 205.7)" x="50" y="68" fill="#d5d5d5">G8</text><text transform="matrix(0.1970 0.0007 0.1115 0.0712 578.1 205.8)" x="50" y="68" fill="#dfdfdf">G1</text><text transform="matrix(0.1860 0.0006 -0.1103 0.0648 -22.5 197.1)" x="50" y="68" fill="#d5d5d5">F1</text><text transform="matrix(0.1861 0.0006 -0.1037 0.0648 -4.3 197.2)" x="50" y="68" fill="#dfdfdf">F2</text><text transform="matrix(0.1863 0.0006 -0.0972 0.0649 14.0 197.3)" x="50" y="68" fill="#d5d5d5">F3</text><text transform="matrix(0.1864 0.0006 -0.0906 0.0649 32.3 197.3)" x="50" y="68" fill="#dfdfdf">F4</text><text transform="matrix(0.1865 0.0006 -0.0840 0.0649 50.6 197.4)" x="50" y="68" fill="#d5d5d5">F5</text><text transform="matrix(0.1866 0.0006 -0.0775 0.0650 69.0 197.4)" x="50" y="68" fill="#dfdfdf">F6</text><text transform="matrix(0.1867 0.0006 -0.0709 0.0650 87.3 197.5)" x="50" y="68" fill="#d5d5d5">F7</text><text transform="matrix(0.1869 0.0006 -0.0643 0.0651 105.6 197.6)" x="50" y="68" fill="#dfdfdf">F8</text><text transform="matrix(0.1870 0.0006 -0.0577 0.0651 124.0 197.6)" x="50" y="68" fill="#d5d5d5">F1</text><text transform="matrix(0.1871 0.0006 -0.0510 0.0652 142.4 197.7)" x="50" y="68" fill="#dfdfdf">F2</text><text transform="matrix(0.1872 0.0006 -0.0444 0.0652 160.7 197.8)" x="50" y="68" fill="#d5d5d5">F3</text><text transform="matrix(0.1873 0.0006 -0.0378 0.0653 179.1 197.8)" x="50" y="68" fill="#dfdfdf">F4</text><text transform="matrix(0.1875 0.0006 -0.0311 0.0653 197.5 197.9)" x="50" y="68" fill="#d5d5d5">F5</text><text transform="matrix(0.1876 0.0006 -0.0245 0.0653 215.9 197.9)" x="50" y="68" fill="#dfdfdf">F6</text><text transform="matrix(0.1877 0.0006 -0.0178 0.0654 234.4 198.0)" x="50" y="68" fill="#d5d5d5">F7</text><text transform="matrix(0.1878 0.0007 -0.0111 0.0654 252.8 198.1)" x="50" y="68" fill="#dfdfdf">F8</text><text transform="matrix(0.1880 0.0007 -0.0044 0.0655 271.3 198.1)" x="50" y="68" fill="#d5d5d5">F1</text><text transform="matrix(0.1881 0.0007 0.0022 0.0655 289.7 198.2)" x="50" y="68" fill="#dfdfdf">F2</text><text transform="matrix(0.1882 0.0007 0.0089 0.0656 308.2 198.3)" x="50" y="68" fill="#d5d5d5">F3</text><text transform="matrix(0.1883 0.0007 0.0156 0.0656 326.7 198.3)" x="50" y="68" fill="#dfdfdf">F4</text><text transform="matrix(0.1884 0.0007 0.0224 0.0657 345.2 198.4)" x="50" y="68" fill="#d5d5d5">F5</text><text transform="matrix(0.1886 0.0007 0.0291 0.0657 363.7 198.4)" x="50" y="68" fill="#dfdfdf">F6</text><text transform="matrix(0.1887 0.0007 0.0358 0.0657 382.2 198.5)" x="50" y="68" fill="#d5d5d5">F7</text><text transform="matrix(0.1888 0.0007 0.0426 0.0658 400.7 198.6)" x="50" y="68" fill="#dfdfdf">F8</text><text transform="matrix(0.1889 0.0007 0.0493 0.0658 419.3 198.6)" x="50" y="68" fill="#d5d5d5">F1</text><text transform="matrix(0.1891 0.0007 0.0561 0.0659 437.8 198.7)" x="50" y="68" fill="#dfdfdf">F2</text><text transform="matrix(0.1892 0.0007 0.0628 0.0659 456.4 198.8)" x="50" y="68" fill="#d5d5d5">F3</text><text transform="matrix(0.1893 0.0007 0.0696 0.0660 475.0 198.8)" x="50" y="68" fill="#dfdfdf">F4</text><text transform="matrix(0.1894 0.0007 0.0764 0.0660 493.6 198.9)" x="50" y="68" fill="#d5d5d5">F5</text><text transform="matrix(0.1896 0.0007 0.0832 0.0661 512.2 199.0)" x="50" y="68" fill="#dfdfdf">F6</text><text transform="matrix(0.1897 0.0007 0.0900 0.0661 530.8 199.0)" x="50" y="68" fill="#d5d5d5">F7</text><text transform="matrix(0.1898 0.0007 0.0968 0.0662 549.4 199.1)" x="50" y="68" fill="#dfdfdf">F8</text><text transform="matrix(0.1899 0.0007 0.1036 0.0662 568.1 199.1)" x="50" y="68" fill="#d5d5d5">F1</text><text transform="matrix(0.1901 0.0007 0.1105 0.0662 586.7 199.2)" x="50" y="68" fill="#dfdfdf">F2</text><text transform="matrix(0.1796 0.0006 -0.1090 0.0604 -29.6 191.0)" x="50" y="68" fill="#d5d5d5">E8</text><text transform="matrix(0.1797 0.0006 -0.1029 0.0604 -11.9 191.1)" x="50" y="68" fill="#dfdfdf">E1</text><text transform="matrix(0.1798 0.0006 -0.0968 0.0605 5.7 191.2)" x="50" y="68" fill="#d5d5d5">E2</text><text transform="matrix(0.1799 0.0006 -0.0907 0.0605 23.4 191.2)" x="50" y="68" fill="#dfdfdf">E3</text><text transform="matrix(0.1800 0.0006 -0.0845 0.0605 41.1 191.3)" x="50" y="68" fill="#d5d5d5">E4</text><text transform="matrix(0.1801 0.0006 -0.0784 0.0606 58.8 191.3)" x="50" y="68" fill="#dfdfdf">E5</text><text transform="matrix(0.1803 0.0006 -0.0722 0.0606 76.5 191.4)" x="50" y="68" fill="#d5d5d5">E6</text><text transform="matrix(0.1804 0.0006 -0.0661 0.0607 94.2 191.4)" x="50" y="68" fill="#dfdfdf">E7</text><text transform="matrix(0.1805 0.0006 -0.0599 0.0607 111.9 191.5)" x="50" y="68" fill="#d5d5d5">E8</text><text transform="matrix(0.1806 0.0006 -0.0538 0.0607 129.7 191.6)" x="50" y="68" fill="#dfdfdf">E1</text><text transform="matrix(0.1807 0.0006 -0.0476 0.0608 147.4 191.6)" x="50" y="68" fill="#d5d5d5">E2</text><text transform="matrix(0.1808 0.0006 -0.0414 0.0608 165.2 191.7)" x="50" y="68" fill="#dfdfdf">E3</text><text transform="matrix(0.1809 0.0006 -0.0352 0.0609 183.0 191.7)" x="50" y="68" fill="#d5d5d5">E4</text><text transform="matrix(0.1810 0.0006 -0.0290 0.0609 200.7 191.8)" x="50" y="68" fill="#dfdfdf">E5</text><text transform="matrix(0.1812 0.0006 -0.0228 0.0609 218.5 191.9)" x="50" y="68" fill="#d5d5d5">E6</text><text transform="matrix(0.1813 0.0006 -0.0166 0.0610 236.3 191.9)" x="50" y="68" fill="#dfdfdf">E7</text><text transform="matrix(0.1814 0.0006 -0.0104 0.0610 254.2 192.0)" x="50" y="68" fill="#d5d5d5">E8</text><text transform="matrix(0.1815 0.0006 -0.0041 0.0611 272.0 192.0)" x="50" y="68" fill="#dfdfdf">E1</text><text transform="matrix(0.1816 0.0006 0.0021 0.0611 289.8 192.1)" x="50" y="68" fill="#d5d5d5">E2</text><text transform="matrix(0.1817 0.0006 0.0083 0.0611 307.7 192.2)" x="50" y="68" fill="#dfdfdf">E3</text><text transform="matrix(0.1818 0.0006 0.0146 0.0612 325.5 192.2)" x="50" y="68" fill="#d5d5d5">E4</text><text transform="matrix(0.1820 0.0006 0.0208 0.0612 343.4 192.3)" x="50" y="68" fill="#dfdfdf">E5</text><text transform="matrix(0.1821 0.0006 0.0271 0.0613 361.3 192.3)" x="50" y="68" fill="#d5d5d5">E6</text><text transform="matrix(0.1822 0.0006 0.0334 0.0613 379.2 192.4)" x="50" y="68" fill="#dfdfdf">E7</text><text transform="matrix(0.1823 0.0006 0.0397 0.0613 397.1 192.4)" x="50" y="68" fill="#d5d5d5">E8</text><text transform="matrix(0.1824 0.0006 0.0460 0.0614 415.0 192.5)" x="50" y="68" fill="#dfdfdf">E1</text><text transform="matrix(0.1825 0.0006 0.0523 0.0614 432.9 192.6)" x="50" y="68" fill="#d5d5d5">E2</text><text transform="matrix(0.1826 0.0006 0.0586 0.0615 450.9 192.6)" x="50" y="68" fill="#dfdfdf">E3</text><text transform="matrix(0.1828 0.0006 0.0649 0.0615 468.8 192.7)" x="50" y="68" fill="#d5d5d5">E4</text><text transform="matrix(0.1829 0.0006 0.0712 0.0615 486.8 192.7)" x="50" y="68" fill="#dfdfdf">E5</text><text transform="matrix(0.1830 0.0006 0.0776 0.0616 504.7 192.8)" x="50" y="68" fill="#d5d5d5">E6</text><text transform="matrix(0.1831 0.0006 0.0839 0.0616 522.7 192.9)" x="50" y="68" fill="#dfdfdf">E7</text><text transform="matrix(0.1832 0.0006 0.0902 0.0617 540.7 192.9)" x="50" y="68" fill="#d5d5d5">E8</text><text transform="matrix(0.1833 0.0006 0.0966 0.0617 558.7 193.0)" x="50" y="68" fill="#dfdfdf">E1</text><text transform="matrix(0.1835 0.0006 0.1030 0.0617 576.7 193.0)" x="50" y="68" fill="#d5d5d5">E2</text><text transform="matrix(0.1737 0.0006 -0.1019 0.0565 -19.1 185.4)" x="50" y="68" fill="#dfdfdf">D8</text><text transform="matrix(0.1738 0.0006 -0.0962 0.0565 -2.0 185.5)" x="50" y="68" fill="#d5d5d5">D1</text><text transform="matrix(0.1739 0.0006 -0.0905 0.0565 15.1 185.5)" x="50" y="68" fill="#dfdfdf">D2</text><text transform="matrix(0.1740 0.0006 -0.0848 0.0566 32.2 185.6)" x="50" y="68" fill="#d5d5d5">D3</text><text transform="matrix(0.1741 0.0006 -0.0790 0.0566 49.3 185.6)" x="50" y="68" fill="#dfdfdf">D4</text><text transform="matrix(0.1742 0.0006 -0.0733 0.0566 66.4 185.7)" x="50" y="68" fill="#d5d5d5">D5</text><text transform="matrix(0.1743 0.0006 -0.0675 0.0567 83.5 185.7)" x="50" y="68" fill="#dfdfdf">D6</text><text transform="matrix(0.1744 0.0006 -0.0618 0.0567 100.7 185.8)" x="50" y="68" fill="#d5d5d5">D7</text><text transform="matrix(0.1745 0.0006 -0.0560 0.0567 117.8 185.8)" x="50" y="68" fill="#dfdfdf">D8</text><text transform="matrix(0.1746 0.0006 -0.0503 0.0568 135.0 185.9)" x="50" y="68" fill="#d5d5d5">D1</text><text transform="matrix(0.1747 0.0006 -0.0445 0.0568 152.2 185.9)" x="50" y="68" fill="#dfdfdf">D2</text><text transform="matrix(0.1748 0.0006 -0.0387 0.0569 169.4 186.0)" x="50" y="68" fill="#d5d5d5">D3</text><text transform="matrix(0.1749 0.0006 -0.0329 0.0569 186.6 186.1)" x="50" y="68" fill="#dfdfdf">D4</text><text transform="matrix(0.1750 0.0006 -0.0271 0.0569 203.8 186.1)" x="50" y="68" fill="#d5d5d5">D5</text><text transform="matrix(0.1752 0.0006 -0.0213 0.0570 221.0 186.2)" x="50" y="68" fill="#dfdfdf">D6</text><text transform="matrix(0.1753 0.0006 -0.0155 0.0570 238.2 186.2)" x="50" y="68" fill="#d5d5d5">D7</text><text transform="matrix(0.1754 0.0006 -0.0097 0.0570 255.4 186.3)" x="50" y="68" fill="#dfdfdf">D8</text><text transform="matrix(0.1755 0.0006 -0.0039 0.0571 272.7 186.3)" x="50" y="68" fill="#d5d5d5">D1</text><text transform="matrix(0.1756 0.0006 0.0020 0.0571 289.9 186.4)" x="50" y="68" fill="#dfdfdf">D2</text><text transform="matrix(0.1757 0.0006 0.0078 0.0571 307.2 186.4)" x="50" y="68" fill="#d5d5d5">D3</text><text transform="matrix(0.1758 0.0006 0.0136 0.0572 324.5 186.5)" x="50" y="68" fill="#dfdfdf">D4</text><text transform="matrix(0.1759 0.0006 0.0195 0.0572 341.8 186.6)" x="50" y="68" fill="#d5d5d5">D5</text><text transform="matrix(0.1760 0.0006 0.0253 0.0573 359.1 186.6)" x="50" y="68" fill="#dfdfdf">D6</text><text transform="matrix(0.1761 0.0006 0.0312 0.0573 376.4 186.7)" x="50" y="68" fill="#d5d5d5">D7</text><text transform="matrix(0.1762 0.0006 0.0371 0.0573 393.7 186.7)" x="50" y="68" fill="#dfdfdf">D8</text><text transform="matrix(0.1763 0.0006 0.0430 0.0574 411.0 186.8)" x="50" y="68" fill="#d5d5d5">D1</text><text transform="matrix(0.1764 0.0006 0.0488 0.0574 428.4 186.8)" x="50" y="68" fill="#dfdfdf">D2</text><text transform="matrix(0.1765 0.0006 0.0547 0.0574 445.7 186.9)" x="50" y="68" fill="#d5d5d5">D3</text><text transform="matrix(0.1767 0.0006 0.0606 0.0575 463.1 186.9)" x="50" y="68" fill="#dfdfdf">D4</text><text transform="matrix(0.1768 0.0006 0.0666 0.0575 480.4 187.0)" x="50" y="68" fill="#d5d5d5">D5</text><text transform="matrix(0.1769 0.0006 0.0725 0.0575 497.8 187.1)" x="50" y="68" fill="#dfdfdf">D6</text><text transform="matrix(0.1770 0.0006 0.0784 0.0576 515.2 187.1)" x="50" y="68" fill="#d5d5d5">D7</text><text transform="matrix(0.1771 0.0006 0.0843 0.0576 532.6 187.2)" x="50" y="68" fill="#dfdfdf">D8</text><text transform="matrix(0.1772 0.0006 0.0903 0.0577 550.0 187.2)" x="50" y="68" fill="#d5d5d5">D1</text><text transform="matrix(0.1773 0.0006 0.0962 0.0577 567.4 187.3)" x="50" y="68" fill="#dfdfdf">D2</text><text transform="matrix(0.1774 0.0006 0.1022 0.0577 584.9 187.3)" x="50" y="68" fill="#d5d5d5">D3</text><text transform="matrix(0.1681 0.0005 -0.1008 0.0529 -25.8 180.1)" x="50" y="68" fill="#dfdfdf">C7</text><text transform="matrix(0.1682 0.0005 -0.0955 0.0529 -9.3 180.1)" x="50" y="68" fill="#d5d5d5">C8</text><text transform="matrix(0.1682 0.0005 -0.0901 0.0529 7.3 180.2)" x="50" y="68" fill="#dfdfdf">C1</text><text transform="matrix(0.1683 0.0005 -0.0848 0.0530 23.8 180.2)" x="50" y="68" fill="#d5d5d5">C2</text><text transform="matrix(0.1684 0.0005 -0.0794 0.0530 40.4 180.3)" x="50" y="68" fill="#dfdfdf">C3</text><text transform="matrix(0.1685 0.0005 -0.0740 0.0530 57.0 180.3)" x="50" y="68" fill="#d5d5d5">C4</text><text transform="matrix(0.1686 0.0005 -0.0687 0.0531 73.6 180.4)" x="50" y="68" fill="#dfdfdf">C5</text><text transform="matrix(0.1687 0.0005 -0.0633 0.0531 90.1 180.4)" x="50" y="68" fill="#d5d5d5">C6</text><text transform="matrix(0.1688 0.0005 -0.0579 0.0531 106.8 180.5)" x="50" y="68" fill="#dfdfdf">C7</text><text transform="matrix(0.1689 0.0005 -0.0525 0.0532 123.4 180.5)" x="50" y="68" fill="#d5d5d5">C8</text><text transform="matrix(0.1690 0.0005 -0.0471 0.0532 140.0 180.6)" x="50" y="68" fill="#dfdfdf">C1</text><text transform="matrix(0.1691 0.0005 -0.0417 0.0532 156.6 180.6)" x="50" y="68" fill="#d5d5d5">C2</text><text transform="matrix(0.1692 0.0005 -0.0363 0.0533 173.3 180.7)" x="50" y="68" fill="#dfdfdf">C3</text><text transform="matrix(0.1693 0.0005 -0.0308 0.0533 189.9 180.7)" x="50" y="68" fill="#d5d5d5">C4</text><text transform="matrix(0.1694 0.0005 -0.0254 0.0533 206.6 180.8)" x="50" y="68" fill="#dfdfdf">C5</text><text transform="matrix(0.1695 0.0005 -0.0200 0.0534 223.3 180.8)" x="50" y="68" fill="#d5d5d5">C6</text><text transform="matrix(0.1696 0.0005 -0.0145 0.0534 239.9 180.9)" x="50" y="68" fill="#dfdfdf">C7</text><text transform="matrix(0.1697 0.0005 -0.0091 0.0534 256.6 180.9)" x="50" y="68" fill="#d5d5d5">C8</text><text transform="matrix(0.1698 0.0005 -0.0036 0.0535 273.3 181.0)" x="50" y="68" fill="#dfdfdf">C1</text><text transform="matrix(0.1699 0.0005 0.0018 0.0535 290.0 181.0)" x="50" y="68" fill="#d5d5d5">C2</text><text transform="matrix(0.1700 0.0005 0.0073 0.0535 306.8 181.1)" x="50" y="68" fill="#dfdfdf">C3</text><text transform="matrix(0.1701 0.0005 0.0128 0.0536 323.5 181.1)" x="50" y="68" fill="#d5d5d5">C4</text><text transform="matrix(0.1702 0.0005 0.0183 0.0536 340.2 181.2)" x="50" y="68" fill="#dfdfdf">C5</text><text transform="matrix(0.1703 0.0005 0.0237 0.0536 357.0 181.2)" x="50" y="68" fill="#d5d5d5">C6</text><text transform="matrix(0.1704 0.0005 0.0292 0.0537 373.7 181.3)" x="50" y="68" fill="#dfdfdf">C7</text><text transform="matrix(0.1705 0.0005 0.0347 0.0537 390.5 181.4)" x="50" y="68" fill="#d5d5d5">C8</text><text transform="matrix(0.1706 0.0005 0.0402 0.0537 407.3 181.4)" x="50" y="68" fill="#dfdfdf">C1</text><text transform="matrix(0.1707 0.0005 0.0457 0.0538 424.1 181.5)" x="50" y="68" fill="#d5d5d5">C2</text><text transform="matrix(0.1708 0.0005 0.0513 0.0538 440.9 181.5)" x="50" y="68" fill="#dfdfdf">C3</text><text transform="matrix(0.1709 0.0005 0.0568 0.0538 457.7 181.6)" x="50" y="68" fill="#d5d5d5">C4</text><text transform="matrix(0.1710 0.0005 0.0623 0.0539 474.5 181.6)" x="50" y="68" fill="#dfdfdf">C5</text><text transform="matrix(0.1711 0.0005 0.0679 0.0539 491.3 181.7)" x="50" y="68" fill="#d5d5d5">C6</text><text transform="matrix(0.1712 0.0005 0.0734 0.0539 508.2 181.7)" x="50" y="68" fill="#dfdfdf">C7</text><text transform="matrix(0.1713 0.0005 0.0790 0.0540 525.0 181.8)" x="50" y="68" fill="#d5d5d5">C8</text><text transform="matrix(0.1714 0.0005 0.0845 0.0540 541.9 181.8)" x="50" y="68" fill="#dfdfdf">C1</text><text transform="matrix(0.1715 0.0005 0.0901 0.0540 558.7 181.9)" x="50" y="68" fill="#d5d5d5">C2</text><text transform="matrix(0.1716 0.0005 0.0957 0.0541 575.6 181.9)" x="50" y="68" fill="#dfdfdf">C3</text><text transform="matrix(0.1628 0.0005 -0.0997 0.0496 -32.1 175.1)" x="50" y="68" fill="#dfdfdf">B6</text><text transform="matrix(0.1629 0.0005 -0.0947 0.0496 -16.1 175.1)" x="50" y="68" fill="#d5d5d5">B7</text><text transform="matrix(0.1630 0.0005 -0.0897 0.0497 -0.1 175.1)" x="50" y="68" fill="#dfdfdf">B8</text><text transform="matrix(0.1631 0.0005 -0.0846 0.0497 16.0 175.2)" x="50" y="68" fill="#d5d5d5">B1</text><text transform="matrix(0.1632 0.0005 -0.0796 0.0497 32.0 175.2)" x="50" y="68" fill="#dfdfdf">B2</text><text transform="matrix(0.1632 0.0005 -0.0746 0.0498 48.1 175.3)" x="50" y="68" fill="#d5d5d5">B3</text><text transform="matrix(0.1633 0.0005 -0.0695 0.0498 64.2 175.3)" x="50" y="68" fill="#dfdfdf">B4</text><text transform="matrix(0.1634 0.0005 -0.0645 0.0498 80.3 175.4)" x="50" y="68" fill="#d5d5d5">B5</text><text transform="matrix(0.1635 0.0005 -0.0594 0.0499 96.3 175.4)" x="50" y="68" fill="#dfdfdf">B6</text><text transform="matrix(0.1636 0.0005 -0.0544 0.0499 112.4 175.5)" x="50" y="68" fill="#d5d5d5">B7</text><text transform="matrix(0.1637 0.0005 -0.0493 0.0499 128.6 175.5)" x="50" y="68" fill="#dfdfdf">B8</text><text transform="matrix(0.1638 0.0005 -0.0442 0.0499 144.7 175.6)" x="50" y="68" fill="#d5d5d5">B1</text><text transform="matrix(0.1639 0.0005 -0.0391 0.0500 160.8 175.6)" x="50" y="68" fill="#dfdfdf">B2</text><text transform="matrix(0.1640 0.0005 -0.0340 0.0500 176.9 175.7)" x="50" y="68" fill="#d5d5d5">B3</text><text transform="matrix(0.1641 0.0005 -0.0290 0.0500 193.1 175.7)" x="50" y="68" fill="#dfdfdf">B4</text><text transform="matrix(0.1642 0.0005 -0.0239 0.0501 209.2 175.8)" x="50" y="68" fill="#d5d5d5">B5</text><text transform="matrix(0.1643 0.0005 -0.0188 0.0501 225.4 175.8)" x="50" y="68" fill="#dfdfdf">B6</text><text transform="matrix(0.1644 0.0005 -0.0136 0.0501 241.6 175.9)" x="50" y="68" fill="#d5d5d5">B7</text><text transform="matrix(0.1645 0.0005 -0.0085 0.0502 257.7 175.9)" x="50" y="68" fill="#dfdfdf">B8</text><text transform="matrix(0.1645 0.0005 -0.0034 0.0502 273.9 176.0)" x="50" y="68" fill="#d5d5d5">B1</text><text transform="matrix(0.1646 0.0005 0.0017 0.0502 290.1 176.0)" x="50" y="68" fill="#dfdfdf">B2</text><text transform="matrix(0.1647 0.0005 0.0068 0.0502 306.3 176.1)" x="50" y="68" fill="#d5d5d5">B3</text><text transform="matrix(0.1648 0.0005 0.0120 0.0503 322.6 176.1)" x="50" y="68" fill="#dfdfdf">B4</text><text transform="matrix(0.1649 0.0005 0.0171 0.0503 338.8 176.2)" x="50" y="68" fill="#d5d5d5">B5</text><text transform="matrix(0.1650 0.0005 0.0223 0.0503 355.0 176.2)" x="50" y="68" fill="#dfdfdf">B6</text><text transform="matrix(0.1651 0.0005 0.0274 0.0504 371.3 176.3)" x="50" y="68" fill="#d5d5d5">B7</text><text transform="matrix(0.1652 0.0005 0.0326 0.0504 387.5 176.3)" x="50" y="68" fill="#dfdfdf">B8</text><text transform="matrix(0.1653 0.0005 0.0378 0.0504 403.8 176.4)" x="50" y="68" fill="#d5d5d5">B1</text><text transform="matrix(0.1654 0.0005 0.0429 0.0505 420.0 176.4)" x="50" y="68" fill="#dfdfdf">B2</text><text transform="matrix(0.1655 0.0005 0.0481 0.0505 436.3 176.5)" x="50" y="68" fill="#d5d5d5">B3</text><text transform="matrix(0.1656 0.0005 0.0533 0.0505 452.6 176.5)" x="50" y="68" fill="#dfdfdf">B4</text><text transform="matrix(0.1657 0.0005 0.0585 0.0505 468.9 176.6)" x="50" y="68" fill="#d5d5d5">B5</text><text transform="matrix(0.1658 0.0005 0.0637 0.0506 485.2 176.6)" x="50" y="68" fill="#dfdfdf">B6</text><text transform="matrix(0.1659 0.0005 0.0689 0.0506 501.5 176.7)" x="50" y="68" fill="#d5d5d5">B7</text><text transform="matrix(0.1660 0.0005 0.0741 0.0506 517.9 176.7)" x="50" y="68" fill="#dfdfdf">B8</text><text transform="matrix(0.1661 0.0005 0.0793 0.0507 534.2 176.8)" x="50" y="68" fill="#d5d5d5">B1</text><text transform="matrix(0.1661 0.0005 0.0845 0.0507 550.5 176.8)" x="50" y="68" fill="#dfdfdf">B2</text><text transform="matrix(0.1662 0.0005 0.0898 0.0507 566.9 176.9)" x="50" y="68" fill="#d5d5d5">B3</text><text transform="matrix(0.1663 0.0005 0.0950 0.0508 583.3 176.9)" x="50" y="68" fill="#dfdfdf">B4</text><text transform="matrix(0.1579 0.0005 -0.0938 0.0467 -22.5 170.4)" x="50" y="68" fill="#d5d5d5">A6</text><text transform="matrix(0.1580 0.0005 -0.0891 0.0467 -6.9 170.4)" x="50" y="68" fill="#dfdfdf">A7</text><text transform="matrix(0.1581 0.0005 -0.0844 0.0467 8.6 170.5)" x="50" y="68" fill="#d5d5d5">A8</text><text transform="matrix(0.1582 0.0005 -0.0796 0.0468 24.2 170.5)" x="50" y="68" fill="#dfdfdf">A1</text><text transform="matrix(0.1583 0.0005 -0.0749 0.0468 39.8 170.6)" x="50" y="68" fill="#d5d5d5">A2</text><text transform="matrix(0.1584 0.0005 -0.0701 0.0468 55.4 170.6)" x="50" y="68" fill="#dfdfdf">A3</text><text transform="matrix(0.1584 0.0005 -0.0654 0.0468 71.0 170.7)" x="50" y="68" fill="#d5d5d5">A4</text><text transform="matrix(0.1585 0.0005 -0.0606 0.0469 86.6 170.7)" x="50" y="68" fill="#dfdfdf">A5</text><text transform="matrix(0.1586 0.0005 -0.0559 0.0469 102.2 170.8)" x="50" y="68" fill="#d5d5d5">A6</text><text transform="matrix(0.1587 0.0005 -0.0511 0.0469 117.8 170.8)" x="50" y="68" fill="#dfdfdf">A7</text><text transform="matrix(0.1588 0.0005 -0.0464 0.0470 133.4 170.8)" x="50" y="68" fill="#d5d5d5">A8</text><text transform="matrix(0.1589 0.0005 -0.0416 0.0470 149.1 170.9)" x="50" y="68" fill="#dfdfdf">A1</text><text transform="matrix(0.1590 0.0005 -0.0368 0.0470 164.7 170.9)" x="50" y="68" fill="#d5d5d5">A2</text><text transform="matrix(0.1591 0.0005 -0.0320 0.0470 180.4 171.0)" x="50" y="68" fill="#dfdfdf">A3</text><text transform="matrix(0.1591 0.0005 -0.0272 0.0471 196.0 171.0)" x="50" y="68" fill="#d5d5d5">A4</text><text transform="matrix(0.1592 0.0005 -0.0224 0.0471 211.7 171.1)" x="50" y="68" fill="#dfdfdf">A5</text><text transform="matrix(0.1593 0.0005 -0.0176 0.0471 227.4 171.1)" x="50" y="68" fill="#d5d5d5">A6</text><text transform="matrix(0.1594 0.0005 -0.0128 0.0471 243.1 171.2)" x="50" y="68" fill="#dfdfdf">A7</text><text transform="matrix(0.1595 0.0005 -0.0080 0.0472 258.8 171.2)" x="50" y="68" fill="#d5d5d5">A8</text><text transform="matrix(0.1596 0.0005 -0.0032 0.0472 274.5 171.3)" x="50" y="68" fill="#dfdfdf">A1</text><text transform="matrix(0.1597 0.0005 0.0016 0.0472 290.2 171.3)" x="50" y="68" fill="#d5d5d5">A2</text><text transform="matrix(0.1598 0.0005 0.0064 0.0473 305.9 171.4)" x="50" y="68" fill="#dfdfdf">A3</text><text transform="matrix(0.1598 0.0005 0.0113 0.0473 321.7 171.4)" x="50" y="68" fill="#d5d5d5">A4</text><text transform="matrix(0.1599 0.0005 0.0161 0.0473 337.4 171.4)" x="50" y="68" fill="#dfdfdf">A5</text><text transform="matrix(0.1600 0.0005 0.0210 0.0473 353.2 171.5)" x="50" y="68" fill="#d5d5d5">A6</text><text transform="matrix(0.1601 0.0005 0.0258 0.0474 368.9 171.5)" x="50" y="68" fill="#dfdfdf">A7</text><text transform="matrix(0.1602 0.0005 0.0307 0.0474 384.7 171.6)" x="50" y="68" fill="#d5d5d5">A8</text><text transform="matrix(0.1603 0.0005 0.0355 0.0474 400.5 171.6)" x="50" y="68" fill="#dfdfdf">A1</text><text transform="matrix(0.1604 0.0005 0.0404 0.0474 416.3 171.7)" x="50" y="68" fill="#d5d5d5">A2</text><text transform="matrix(0.1605 0.0005 0.0452 0.0475 432.1 171.7)" x="50" y="68" fill="#dfdfdf">A3</text><text transform="matrix(0.1606 0.0005 0.0501 0.0475 447.9 171.8)" x="50" y="68" fill="#d5d5d5">A4</text><text transform="matrix(0.1606 0.0005 0.0550 0.0475 463.7 171.8)" x="50" y="68" fill="#dfdfdf">A5</text><text transform="matrix(0.1607 0.0005 0.0599 0.0476 479.5 171.9)" x="50" y="68" fill="#d5d5d5">A6</text><text transform="matrix(0.1608 0.0005 0.0648 0.0476 495.3 171.9)" x="50" y="68" fill="#dfdfdf">A7</text><text transform="matrix(0.1609 0.0005 0.0697 0.0476 511.2 172.0)" x="50" y="68" fill="#d5d5d5">A8</text><text transform="matrix(0.1610 0.0005 0.0746 0.0476 527.0 172.0)" x="50" y="68" fill="#dfdfdf">A1</text><text transform="matrix(0.1611 0.0005 0.0795 0.0477 542.9 172.0)" x="50" y="68" fill="#d5d5d5">A2</text><text transform="matrix(0.1612 0.0005 0.0844 0.0477 558.7 172.1)" x="50" y="68" fill="#dfdfdf">A3</text><text transform="matrix(0.1613 0.0005 0.0893 0.0477 574.6 172.1)" x="50" y="68" fill="#d5d5d5">A4</text><text transform="matrix(0.1614 0.0005 0.0942 0.0477 590.5 172.2)" x="50" y="68" fill="#dfdfdf">A5</text><text transform="matrix(0.1533 0.0004 -0.0929 0.0440 -28.5 165.9)" x="50" y="68" fill="#d5d5d5">H5</text><text transform="matrix(0.1533 0.0004 -0.0884 0.0440 -13.4 166.0)" x="50" y="68" fill="#dfdfdf">H6</text><text transform="matrix(0.1534 0.0004 -0.0840 0.0440 1.7 166.0)" x="50" y="68" fill="#d5d5d5">H7</text><text transform="matrix(0.1535 0.0004 -0.0795 0.0440 16.8 166.1)" x="50" y="68" fill="#dfdfdf">H8</text><text transform="matrix(0.1536 0.0004 -0.0750 0.0441 31.9 166.1)" x="50" y="68" fill="#d5d5d5">H1</text><text transform="matrix(0.1537 0.0004 -0.0706 0.0441 47.1 166.2)" x="50" y="68" fill="#dfdfdf">H2</text><text transform="matrix(0.1537 0.0004 -0.0661 0.0441 62.2 166.2)" x="50" y="68" fill="#d5d5d5">H3</text><text transform="matrix(0.1538 0.0004 -0.0616 0.0441 77.3 166.2)" x="50" y="68" fill="#dfdfdf">H4</text><text transform="matrix(0.1539 0.0004 -0.0572 0.0442 92.5 166.3)" x="50" y="68" fill="#d5d5d5">H5</text><text transform="matrix(0.1540 0.0004 -0.0527 0.0442 107.7 166.3)" x="50" y="68" fill="#dfdfdf">H6</text><text transform="matrix(0.1541 0.0004 -0.0482 0.0442 122.8 166.4)" x="50" y="68" fill="#d5d5d5">H7</text><text transform="matrix(0.1542 0.0004 -0.0437 0.0442 138.0 166.4)" x="50" y="68" fill="#dfdfdf">H8</text><text transform="matrix(0.1542 0.0004 -0.0392 0.0443 153.2 166.5)" x="50" y="68" fill="#d5d5d5">H1</text><text transform="matrix(0.1543 0.0004 -0.0347 0.0443 168.4 166.5)" x="50" y="68" fill="#dfdfdf">H2</text><text transform="matrix(0.1544 0.0004 -0.0302 0.0443 183.6 166.6)" x="50" y="68" fill="#d5d5d5">H3</text><text transform="matrix(0.1545 0.0004 -0.0257 0.0443 198.8 166.6)" x="50" y="68" fill="#dfdfdf">H4</text><text transform="matrix(0.1546 0.0004 -0.0211 0.0444 214.1 166.6)" x="50" y="68" fill="#d5d5d5">H5</text><text transform="matrix(0.1547 0.0004 -0.0166 0.0444 229.3 166.7)" x="50" y="68" fill="#dfdfdf">H6</text><text transform="matrix(0.1547 0.0004 -0.0121 0.0444 244.5 166.7)" x="50" y="68" fill="#d5d5d5">H7</text><text transform="matrix(0.1548 0.0004 -0.0076 0.0444 259.8 166.8)" x="50" y="68" fill="#dfdfdf">H8</text><text transform="matrix(0.1549 0.0004 -0.0030 0.0445 275.0 166.8)" x="50" y="68" fill="#d5d5d5">H1</text><text transform="matrix(0.1550 0.0004 0.0015 0.0445 290.3 166.9)" x="50" y="68" fill="#dfdfdf">H2</text><text transform="matrix(0.1551 0.0005 0.0061 0.0445 305.6 166.9)" x="50" y="68" fill="#d5d5d5">H3</text><text transform="matrix(0.1551 0.0005 0.0106 0.0445 320.8 166.9)" x="50" y="68" fill="#dfdfdf">H4</text><text transform="matrix(0.1552 0.0005 0.0152 0.0446 336.1 167.0)" x="50" y="68" fill="#d5d5d5">H5</text><text transform="matrix(0.1553 0.0005 0.0197 0.0446 351.4 167.0)" x="50" y="68" fill="#dfdfdf">H6</text><text transform="matrix(0.1554 0.0005 0.0243 0.0446 366.7 167.1)" x="50" y="68" fill="#d5d5d5">H7</text><text transform="matrix(0.1555 0.0005 0.0289 0.0446 382.0 167.1)" x="50" y="68" fill="#dfdfdf">H8</text><text transform="matrix(0.1556 0.0005 0.0335 0.0447 397.4 167.2)" x="50" y="68" fill="#d5d5d5">H1</text><text transform="matrix(0.1556 0.0005 0.0380 0.0447 412.7 167.2)" x="50" y="68" fill="#dfdfdf">H2</text><text transform="matrix(0.1557 0.0005 0.0426 0.0447 428.0 167.3)" x="50" y="68" fill="#d5d5d5">H3</text><text transform="matrix(0.1558 0.0005 0.0472 0.0447 443.4 167.3)" x="50" y="68" fill="#dfdfdf">H4</text><text transform="matrix(0.1559 0.0005 0.0518 0.0448 458.7 167.3)" x="50" y="68" fill="#d5d5d5">H5</text><text transform="matrix(0.1560 0.0005 0.0564 0.0448 474.1 167.4)" x="50" y="68" fill="#dfdfdf">H6</text><text transform="matrix(0.1561 0.0005 0.0610 0.0448 489.5 167.4)" x="50" y="68" fill="#d5d5d5">H7</text><text transform="matrix(0.1562 0.0005 0.0656 0.0448 504.8 167.5)" x="50" y="68" fill="#dfdfdf">H8</text><text transform="matrix(0.1562 0.0005 0.0702 0.0449 520.2 167.5)" x="50" y="68" fill="#d5d5d5">H1</text><text transform="matrix(0.1563 0.0005 0.0749 0.0449 535.6 167.6)" x="50" y="68" fill="#dfdfdf">H2</text><text transform="matrix(0.1564 0.0005 0.0795 0.0449 551.0 167.6)" x="50" y="68" fill="#d5d5d5">H3</text><text transform="matrix(0.1565 0.0005 0.0841 0.0450 566.4 167.7)" x="50" y="68" fill="#dfdfdf">H4</text><text transform="matrix(0.1566 0.0005 0.0888 0.0450 581.8 167.7)" x="50" y="68" fill="#d5d5d5">H5</text></g>
<linearGradient id="fog" x1="0" y1="0" x2="0" y2="1"><stop offset="0" stop-color="#000" stop-opacity="0.05"/><stop offset="1" stop-color="#000" stop-opacity="0"/></linearGradient><rect y="63" width="576" height="120" fill="url(#fog)"/>
<rect width="576" height="63" fill="#e6e6e6"/>
<defs><filter id="blur4" x="-50%" y="-50%" width="200%" height="200%"><feGaussianBlur stdDeviation="5"/></filter><filter id="blur2" x="-50%" y="-50%" width="200%" height="200%"><feGaussianBlur stdDeviation="2.5"/></filter><filter id="blur1" x="-50%" y="-50%" width="200%" height="200%"><feGaussianBlur stdDeviation="1.5"/></filter></defs><ellipse cx="128" cy="390" rx="40" ry="17" fill="#000" opacity="0.17" filter="url(#blur4)"/><ellipse cx="86" cy="400" rx="46" ry="11" fill="#000" opacity="0.28" filter="url(#blur2)"/><path d="M339.0,208.0 362.0,205.0 364.0,233.0 354.0,234.0Z" fill="#000" opacity="0.30" filter="url(#blur1)"/><ellipse cx="468" cy="306" rx="34" ry="15" fill="#000" opacity="0.30" filter="url(#blur2)"/><path d="M72.6,331.8 72.6,331.8 72.6,331.8 72.6,331.8 72.6,331.8 69.3,331.8 66.1,331.9 62.9,332.4 60.0,333.1 59.4,333.8 58.9,334.5 58.5,335.2 58.3,335.8 61.7,334.4 65.2,333.3 68.9,332.4Z" fill="#d0d0d0"/><path d="M72.6,331.8 72.6,331.8 72.6,331.8 72.6,331.8 72.6,331.8 70.2,331.1 67.9,330.6 65.7,330.5 63.7,330.6 62.6,331.2 61.6,331.8 60.7,332.5 60.0,333.1 62.9,332.4 66.1,331.9 69.3,331.8Z" fill="#989898"/><path d="M72.6,331.8 72.6,331.8 72.6,331.8 72.6,331.8 72.6,331.8 71.5,330.6 70.5,329.6 69.6,328.9 68.8,328.5 67.4,329.0 66.1,329.5 64.8,330.0 63.7,330.6 65.7,330.5 67.9,330.6 70.2,331.1Z" fill="#cbcbcb"/><path d="M72.6,331.8 72.6,331.8 72.6,331.8 72.6,331.8 72.6,331.8 73.0,330.3 73.5,329.0 74.0,328.0 74.6,327.3 73.1,327.5 71.7,327.8 70.2,328.1 68.8,328.5 69.6,328.9 70.5,329.6 71.5,330.6Z" fill="#979797"/><path d="M72.6,331.8 72.6,331.8 72.6,331.8 72.6,331.8 72.6,331.8 74.4,330.2 76.3,328.9 78.2,327.9 80.1,327.1 78.8,327.1 77.4,327.1 76.0,327.2 74.6,327.3 74.0,328.0 73.5,329.0 73.0,330.3Z" fill="#cecece"/><path d="M72.6,331.8 72.6,331.8 72.6,331.8 72.6,331.8 72.6,331.8 75.6,330.4 78.6,329.3 81.6,328.5 84.7,328.0 83.7,327.7 82.6,327.4 81.4,327.2 80.1,327.1 78.2,327.9 76.3,328.9 74.4,330.2Z" fill="#9b9b9b"/><path d="M72.6,331.8 72.6,331.8 72.6,331.8 72.6,331.8 72.6,331.8 76.3,330.9 80.0,330.2 83.7,329.8 87.4,329.7 86.9,329.2 86.3,328.7 85.5,328.3 84.7,328.0 81.6,328.5 78.6,329.3 75.6,330.4Z" fill="#d6d6d6"/><path d="M72.6,331.8 72.6,331.8 72.6,331.8 72.6,331.8 72.6,331.8 76.4,331.5 80.3,331.4 84.1,331.6 88.0,332.1 88.0,331.5 88.0,330.9 87.8,330.3 87.4,329.7 83.7,329.8 80.0,330.2 76.3,330.9Z" fill="#a2a2a2"/><path d="M72.6,331.8 72.6,331.8 72.6,331.8 72.6,331.8 72.6,331.8 76.0,332.2 79.4,332.8 82.9,333.7 86.3,334.8 86.9,334.1 87.4,333.5 87.8,332.8 88.0,332.1 84.1,331.6 80.3,331.4 76.4,331.5Z" fill="#e0e0e0"/><path d="M72.6,331.8 72.6,331.8 72.6,331.8 72.6,331.8 72.6,331.8 75.0,332.8 77.5,334.1 80.1,335.6 82.6,337.4 83.7,336.8 84.7,336.1 85.5,335.5 86.3,334.8 82.9,333.7 79.4,332.8 76.0,332.2Z" fill="#a8a8a8"/><path d="M72.6,331.8 72.6,331.8 72.6,331.8 72.6,331.8 72.6,331.8 73.7,333.4 74.9,335.1 76.2,337.2 77.5,339.4 78.9,339.0 80.2,338.5 81.4,338.0 82.6,337.4 80.1,335.6 77.5,334.1 75.0,332.8Z" fill="#e5e5e5"/><path d="M72.6,331.8 72.6,331.8 72.6,331.8 72.6,331.8 72.6,331.8 72.3,333.7 72.0,335.8 71.8,338.1 71.7,340.6 73.2,340.4 74.6,340.2 76.1,339.8 77.5,339.4 76.2,337.2 74.9,335.1 73.7,333.4Z" fill="#aaaaaa"/><path d="M72.6,331.8 72.6,331.8 72.6,331.8 72.6,331.8 72.6,331.8 70.8,333.7 69.2,335.9 67.6,338.2 66.1,340.8 67.4,340.9 68.8,340.9 70.2,340.8 71.7,340.6 71.8,338.1 72.0,335.8 72.3,333.7Z" fill="#e3e3e3"/><path d="M72.6,331.8 72.6,331.8 72.6,331.8 72.6,331.8 72.6,331.8 69.7,333.5 66.9,335.4 64.2,337.6 61.6,340.0 62.6,340.3 63.7,340.5 64.9,340.7 66.1,340.8 67.6,338.2 69.2,335.9 70.8,333.7Z" fill="#a5a5a5"/><path d="M72.6,331.8 72.6,331.8 72.6,331.8 72.6,331.8 72.6,331.8 69.0,333.1 65.5,334.5 62.1,336.3 58.9,338.2 59.4,338.8 60.0,339.2 60.7,339.6 61.6,340.0 64.2,337.6 66.9,335.4 69.7,333.5Z" fill="#dadada"/><path d="M72.6,331.8 72.6,331.8 72.6,331.8 72.6,331.8 72.6,331.8 68.9,332.4 65.2,333.3 61.7,334.4 58.3,335.8 58.2,336.5 58.3,337.1 58.5,337.7 58.9,338.2 62.1,336.3 65.5,334.5 69.0,333.1Z" fill="#9e9e9e"/><path d="M58.3,335.8 58.5,335.2 58.9,334.5 59.4,333.8 60.0,333.1 57.2,334.1 54.6,335.4 52.1,336.9 49.9,338.6 48.8,339.9 47.9,341.2 47.2,342.4 46.8,343.7 49.3,341.4 52.1,339.3 55.1,337.5Z" fill="#898989"/><path d="M60.0,333.1 60.7,332.5 61.6,331.8 62.6,331.2 63.7,330.6 61.7,331.0 59.9,331.6 58.3,332.5 56.7,333.5 54.7,334.8 52.9,336.1 51.4,337.3 49.9,338.6 52.1,336.9 54.6,335.4 57.2,334.1Z" fill="#b1b1b1"/><path d="M63.7,330.6 64.8,330.0 66.1,329.5 67.4,329.0 68.8,328.5 68.1,328.4 67.4,328.6 66.8,328.8 66.1,329.0 63.5,330.0 61.1,331.1 58.8,332.2 56.7,333.5 58.3,332.5 59.9,331.6 61.7,331.0Z" fill="#808080"/><path d="M68.8,328.5 70.2,328.1 71.7,327.8 73.1,327.5 74.6,327.3 75.2,326.9 75.9,326.8 76.6,326.8 77.3,326.7 74.5,327.0 71.6,327.5 68.8,328.2 66.1,329.0 66.8,328.8 67.4,328.6 68.1,328.4Z" fill="#afafaf"/><path d="M74.6,327.3 76.0,327.2 77.4,327.1 78.8,327.1 80.1,327.1 82.1,326.7 84.0,326.6 86.0,326.7 87.9,326.9 85.4,326.7 82.8,326.5 80.1,326.5 77.3,326.7 76.6,326.8 75.9,326.8 75.2,326.9Z" fill="#858585"/><path d="M80.1,327.1 81.4,327.2 82.6,327.4 83.7,327.7 84.7,328.0 87.7,327.7 90.6,327.8 93.5,328.2 96.3,328.9 94.5,328.3 92.5,327.8 90.3,327.3 87.9,326.9 86.0,326.7 84.0,326.6 82.1,326.7Z" fill="#bcbcbc"/><path d="M84.7,328.0 85.5,328.3 86.3,328.7 86.9,329.2 87.4,329.7 91.1,329.9 94.6,330.4 98.1,331.1 101.5,332.2 100.6,331.2 99.4,330.3 98.0,329.5 96.3,328.9 93.5,328.2 90.6,327.8 87.7,327.7Z" fill="#959595"/><path d="M87.4,329.7 87.8,330.3 88.0,330.9 88.0,331.5 88.0,332.1 91.8,332.9 95.5,333.9 99.1,335.2 102.6,336.7 102.7,335.5 102.6,334.3 102.2,333.2 101.5,332.2 98.1,331.1 94.6,330.4 91.1,329.9Z" fill="#d8d8d8"/><path d="M88.0,332.1 87.8,332.8 87.4,333.5 86.9,334.1 86.3,334.8 89.7,336.2 93.0,337.8 96.3,339.7 99.4,341.7 100.6,340.5 101.5,339.2 102.2,337.9 102.6,336.7 99.1,335.2 95.5,333.9 91.8,332.9Z" fill="#aaaaaa"/><path d="M86.3,334.8 85.5,335.5 84.7,336.1 83.7,336.8 82.6,337.4 85.1,339.4 87.6,341.6 90.1,344.0 92.5,346.6 94.5,345.4 96.4,344.2 98.0,343.0 99.4,341.7 96.3,339.7 93.0,337.8 89.7,336.2Z" fill="#f0f0f0"/><path d="M82.6,337.4 81.4,338.0 80.2,338.5 78.9,339.0 77.5,339.4 78.8,341.9 80.2,344.6 81.5,347.4 82.9,350.4 85.4,349.6 87.9,348.6 90.3,347.6 92.5,346.6 90.1,344.0 87.6,341.6 85.1,339.4Z" fill="#b6b6b6"/><path d="M77.5,339.4 76.1,339.8 74.6,340.2 73.2,340.4 71.7,340.6 71.7,343.4 71.7,346.3 71.8,349.5 72.0,352.7 74.7,352.3 77.5,351.8 80.2,351.1 82.9,350.4 81.5,347.4 80.2,344.6 78.8,341.9Z" fill="#f5f5f5"/><path d="M71.7,340.6 70.2,340.8 68.8,340.9 67.4,340.9 66.1,340.8 64.8,343.7 63.5,346.6 62.5,349.8 61.5,353.1 64.0,353.2 66.6,353.1 69.3,353.0 72.0,352.7 71.8,349.5 71.7,346.3 71.7,343.4Z" fill="#b0b0b0"/><path d="M66.1,340.8 64.9,340.7 63.7,340.5 62.6,340.3 61.6,340.0 59.2,342.6 57.0,345.4 54.9,348.4 53.0,351.5 54.9,352.1 56.9,352.5 59.1,352.9 61.5,353.1 62.5,349.8 63.5,346.6 64.8,343.7Z" fill="#e2e2e2"/><path d="M61.6,340.0 60.7,339.6 60.0,339.2 59.4,338.8 58.9,338.2 55.8,340.4 52.9,342.8 50.3,345.4 47.9,348.2 48.8,349.2 50.0,350.0 51.4,350.8 53.0,351.5 54.9,348.4 57.0,345.4 59.2,342.6Z" fill="#9d9d9d"/><path d="M58.9,338.2 58.5,337.7 58.3,337.1 58.2,336.5 58.3,335.8 55.1,337.5 52.1,339.3 49.3,341.4 46.8,343.7 46.7,344.9 46.8,346.0 47.2,347.1 47.9,348.2 50.3,345.4 52.9,342.8 55.8,340.4Z" fill="#c6c6c6"/><path d="M46.8,343.7 47.2,342.4 47.9,341.2 48.8,339.9 49.9,338.6 48.0,340.5 46.1,342.6 44.5,344.8 42.9,347.1 41.7,349.1 40.8,350.9 40.0,352.7 39.5,354.4 40.8,351.5 42.5,348.7 44.5,346.1Z" fill="#9f9f9f"/><path d="M49.9,338.6 51.4,337.3 52.9,336.1 54.7,334.8 56.7,333.5 55.0,334.5 53.4,335.7 51.8,337.0 50.2,338.4 47.9,340.6 45.9,342.9 44.3,345.0 42.9,347.1 44.5,344.8 46.1,342.6 48.0,340.5Z" fill="#727272"/><path d="M87.9,326.9 90.3,327.3 92.5,327.8 94.5,328.3 96.3,328.9 99.0,329.8 101.6,330.9 104.2,332.2 106.7,333.7 104.5,332.4 102.0,331.1 99.2,329.9 96.1,328.8 94.0,328.1 91.9,327.6 89.9,327.2Z" fill="#7f7f7f"/><path d="M96.3,328.9 98.0,329.5 99.4,330.3 100.6,331.2 101.5,332.2 104.7,333.5 107.7,335.0 110.6,336.8 113.2,338.9 111.9,337.6 110.4,336.3 108.7,335.0 106.7,333.7 104.2,332.2 101.6,330.9 99.0,329.8Z" fill="#b7b7b7"/><path d="M101.5,332.2 102.2,333.2 102.6,334.3 102.7,335.5 102.6,336.7 105.9,338.4 109.0,340.4 111.9,342.6 114.6,345.0 114.8,343.3 114.6,341.8 114.1,340.3 113.2,338.9 110.6,336.8 107.7,335.0 104.7,333.5Z" fill="#979797"/><path d="M102.6,336.7 102.2,337.9 101.5,339.2 100.6,340.5 99.4,341.7 102.4,344.0 105.3,346.4 107.9,349.0 110.4,351.8 112.0,350.1 113.2,348.3 114.1,346.6 114.6,345.0 111.9,342.6 109.0,340.4 105.9,338.4Z" fill="#e1e1e1"/><path d="M99.4,341.7 98.0,343.0 96.4,344.2 94.5,345.4 92.5,346.6 94.8,349.3 97.0,352.2 99.1,355.2 101.0,358.3 103.8,356.7 106.3,355.1 108.5,353.5 110.4,351.8 107.9,349.0 105.3,346.4 102.4,344.0Z" fill="#b2b2b2"/><path d="M92.5,346.6 90.3,347.6 87.9,348.6 85.4,349.6 82.9,350.4 84.2,353.5 85.5,356.8 86.8,360.1 88.1,363.4 91.5,362.3 94.9,361.1 98.1,359.7 101.0,358.3 99.1,355.2 97.0,352.2 94.8,349.3Z" fill="#f8f8f8"/><path d="M82.9,350.4 80.2,351.1 77.5,351.8 74.7,352.3 72.0,352.7 72.2,356.0 72.6,359.5 72.9,363.0 73.4,366.5 77.1,366.0 80.8,365.3 84.5,364.4 88.1,363.4 86.8,360.1 85.5,356.8 84.2,353.5Z" fill="#b7b7b7"/><path d="M72.0,352.7 69.3,353.0 66.6,353.1 64.0,353.2 61.5,353.1 60.7,356.5 60.1,359.9 59.6,363.5 59.3,367.0 62.6,367.2 66.1,367.1 69.7,366.9 73.4,366.5 72.9,363.0 72.6,359.5 72.2,356.0Z" fill="#ececec"/><path d="M61.5,353.1 59.1,352.9 56.9,352.5 54.9,352.1 53.0,351.5 51.4,354.7 50.0,358.1 48.8,361.5 47.9,364.9 50.4,365.7 53.1,366.3 56.1,366.8 59.3,367.0 59.6,363.5 60.1,359.9 60.7,356.5Z" fill="#a2a2a2"/><path d="M53.0,351.5 51.4,350.8 50.0,350.0 48.8,349.2 47.9,348.2 45.7,351.1 43.8,354.1 42.2,357.3 40.9,360.5 42.2,361.8 43.8,362.9 45.7,364.0 47.9,364.9 48.8,361.5 50.0,358.1 51.4,354.7Z" fill="#c6c6c6"/><path d="M47.9,348.2 47.2,347.1 46.8,346.0 46.7,344.9 46.8,343.7 44.5,346.1 42.5,348.7 40.8,351.5 39.5,354.4 39.3,356.0 39.5,357.6 40.0,359.1 40.9,360.5 42.2,357.3 43.8,354.1 45.7,351.1Z" fill="#838383"/><path d="M39.5,354.4 40.0,352.7 40.8,350.9 41.7,349.1 42.9,347.1 41.5,349.6 40.2,352.2 39.1,355.1 38.2,358.1 37.7,360.4 37.3,362.6 37.1,364.7 37.0,366.6 37.2,363.5 37.7,360.4 38.4,357.3Z" fill="#6c6c6c"/><path d="M106.7,333.7 108.7,335.0 110.4,336.3 111.9,337.6 113.2,338.9 115.5,341.1 117.6,343.6 119.5,346.2 121.2,349.0 120.2,347.2 119.0,345.5 117.7,343.6 116.1,341.7 113.9,339.4 111.6,337.3 109.2,335.4Z" fill="#7c7c7c"/><path d="M113.2,338.9 114.1,340.3 114.6,341.8 114.8,343.3 114.6,345.0 117.1,347.5 119.2,350.2 121.1,353.0 122.7,356.0 122.9,354.1 122.7,352.3 122.1,350.6 121.2,349.0 119.5,346.2 117.6,343.6 115.5,341.1Z" fill="#b9b9b9"/><path d="M114.6,345.0 114.1,346.6 113.2,348.3 112.0,350.1 110.4,351.8 112.6,354.6 114.6,357.6 116.4,360.6 117.9,363.7 119.6,361.8 121.1,359.8 122.1,357.9 122.7,356.0 121.1,353.0 119.2,350.2 117.1,347.5Z" fill="#9b9b9b"/><path d="M110.4,351.8 108.5,353.5 106.3,355.1 103.8,356.7 101.0,358.3 102.9,361.4 104.5,364.6 106.0,367.9 107.2,371.1 110.4,369.3 113.2,367.5 115.7,365.6 117.9,363.7 116.4,360.6 114.6,357.6 112.6,354.6Z" fill="#e4e4e4"/><path d="M101.0,358.3 98.1,359.7 94.9,361.1 91.5,362.3 88.1,363.4 89.3,366.8 90.4,370.3 91.5,373.6 92.5,377.0 96.4,375.7 100.2,374.3 103.9,372.7 107.2,371.1 106.0,367.9 104.5,364.6 102.9,361.4Z" fill="#afafaf"/><path d="M88.1,363.4 84.5,364.4 80.8,365.3 77.1,366.0 73.4,366.5 73.9,370.1 74.5,373.6 75.1,377.1 75.8,380.5 80.0,379.9 84.2,379.1 88.4,378.1 92.5,377.0 91.5,373.6 90.4,370.3 89.3,366.8Z" fill="#ebebeb"/><path d="M73.4,366.5 69.7,366.9 66.1,367.1 62.6,367.2 59.3,367.0 59.2,370.6 59.2,374.2 59.4,377.7 59.8,381.1 63.6,381.2 67.5,381.2 71.6,380.9 75.8,380.5 75.1,377.1 74.5,373.6 73.9,370.1Z" fill="#a4a4a4"/><path d="M59.3,367.0 56.1,366.8 53.1,366.3 50.4,365.7 47.9,364.9 47.2,368.4 46.8,371.8 46.7,375.3 46.8,378.6 49.6,379.5 52.8,380.2 56.1,380.7 59.8,381.1 59.4,377.7 59.2,374.2 59.2,370.6Z" fill="#c9c9c9"/><path d="M47.9,364.9 45.7,364.0 43.8,362.9 42.2,361.8 40.9,360.5 39.9,363.7 39.3,367.0 38.9,370.3 38.9,373.6 40.3,375.1 42.1,376.4 44.3,377.6 46.8,378.6 46.7,375.3 46.8,371.8 47.2,368.4Z" fill="#838383"/><path d="M40.9,360.5 40.0,359.1 39.5,357.6 39.3,356.0 39.5,354.4 38.4,357.3 37.7,360.4 37.2,363.5 37.0,366.6 37.0,368.5 37.2,370.3 37.9,372.0 38.9,373.6 38.9,370.3 39.3,367.0 39.9,363.7Z" fill="#999999"/><path d="M121.2,349.0 122.1,350.6 122.7,352.3 122.9,354.1 122.7,356.0 124.0,359.0 124.9,362.1 125.5,365.2 125.8,368.4 126.0,366.5 125.9,364.7 125.7,363.0 125.5,361.2 124.8,358.0 123.8,354.8 122.6,351.8Z" fill="#787878"/><path d="M122.7,356.0 122.1,357.9 121.1,359.8 119.6,361.8 117.9,363.7 119.1,366.8 120.0,369.9 120.6,373.0 120.9,376.1 122.7,374.1 124.2,372.2 125.2,370.3 125.8,368.4 125.5,365.2 124.9,362.1 124.0,359.0Z" fill="#bababa"/><path d="M117.9,363.7 115.7,365.6 113.2,367.5 110.4,369.3 107.2,371.1 108.3,374.3 109.2,377.4 109.9,380.5 110.3,383.5 113.5,381.7 116.3,379.9 118.8,378.0 120.9,376.1 120.6,373.0 120.0,369.9 119.1,366.8Z" fill="#979797"/><path d="M107.2,371.1 103.9,372.7 100.2,374.3 96.4,375.7 92.5,377.0 93.4,380.2 94.2,383.4 94.9,386.5 95.6,389.4 99.5,388.1 103.3,386.7 107.0,385.1 110.3,383.5 109.9,380.5 109.2,377.4 108.3,374.3Z" fill="#d6d6d6"/><path d="M92.5,377.0 88.4,378.1 84.2,379.1 80.0,379.9 75.8,380.5 76.5,383.8 77.3,387.0 78.1,390.0 78.9,392.9 83.1,392.3 87.3,391.5 91.5,390.5 95.6,389.4 94.9,386.5 94.2,383.4 93.4,380.2Z" fill="#9c9c9c"/><path d="M75.8,380.5 71.6,380.9 67.5,381.2 63.6,381.2 59.8,381.1 60.3,384.4 61.0,387.6 61.9,390.6 62.9,393.5 66.7,393.6 70.6,393.5 74.7,393.3 78.9,392.9 78.1,390.0 77.3,387.0 76.5,383.8Z" fill="#c6c6c6"/><path d="M59.8,381.1 56.1,380.7 52.8,380.2 49.6,379.5 46.8,378.6 47.2,381.9 47.8,385.1 48.7,388.1 49.9,391.0 52.7,391.9 55.9,392.6 59.2,393.1 62.9,393.5 61.9,390.6 61.0,387.6 60.3,384.4Z" fill="#838383"/><path d="M46.8,378.6 44.3,377.6 42.1,376.4 40.3,375.1 38.9,373.6 39.2,376.8 39.8,380.0 40.7,383.0 42.0,386.0 43.4,387.4 45.2,388.8 47.4,390.0 49.9,391.0 48.7,388.1 47.8,385.1 47.2,381.9Z" fill="#9e9e9e"/><path d="M38.9,373.6 37.9,372.0 37.2,370.3 37.0,368.5 37.0,366.6 37.1,369.8 37.4,373.0 38.0,376.2 38.9,379.4 39.5,381.1 40.2,382.7 40.9,384.4 42.0,386.0 40.7,383.0 39.8,380.0 39.2,376.8Z" fill="#6c6c6c"/><path d="M125.5,361.2 125.7,363.0 125.9,364.7 126.0,366.5 125.8,368.4 125.7,371.5 125.3,374.6 124.6,377.7 123.6,380.7 124.2,379.1 124.6,377.7 125.0,376.3 125.2,375.1 125.8,371.5 126.0,368.0 125.9,364.6Z" fill="#929292"/><path d="M125.8,368.4 125.2,370.3 124.2,372.2 122.7,374.1 120.9,376.1 121.0,379.1 120.7,382.0 120.1,384.8 119.3,387.4 120.9,385.7 122.1,384.0 123.0,382.3 123.6,380.7 124.6,377.7 125.3,374.6 125.7,371.5Z" fill="#767676"/><path d="M120.9,376.1 118.8,378.0 116.3,379.9 113.5,381.7 110.3,383.5 110.6,386.3 110.6,389.0 110.4,391.6 109.9,393.9 112.7,392.4 115.2,390.8 117.4,389.1 119.3,387.4 120.1,384.8 120.7,382.0 121.0,379.1Z" fill="#afafaf"/><path d="M110.3,383.5 107.0,385.1 103.3,386.7 99.5,388.1 95.6,389.4 96.1,392.1 96.5,394.7 96.8,397.0 97.0,399.1 100.4,398.0 103.8,396.7 107.0,395.4 109.9,393.9 110.4,391.6 110.6,389.0 110.6,386.3Z" fill="#878787"/><path d="M95.6,389.4 91.5,390.5 87.3,391.5 83.1,392.3 78.9,392.9 79.7,395.5 80.6,398.0 81.4,400.2 82.3,402.2 86.0,401.7 89.7,401.0 93.4,400.1 97.0,399.1 96.8,397.0 96.5,394.7 96.1,392.1Z" fill="#b4b4b4"/><path d="M78.9,392.9 74.7,393.3 70.6,393.5 66.7,393.6 62.9,393.5 64.0,396.1 65.3,398.6 66.7,400.8 68.2,402.7 71.5,402.8 75.0,402.8 78.6,402.6 82.3,402.2 81.4,400.2 80.6,398.0 79.7,395.5Z" fill="#7d7d7d"/><path d="M62.9,393.5 59.2,393.1 55.9,392.6 52.7,391.9 49.9,391.0 51.3,393.7 52.9,396.2 54.8,398.5 56.8,400.6 59.3,401.4 62.0,402.0 65.0,402.4 68.2,402.7 66.7,400.8 65.3,398.6 64.0,396.1Z" fill="#a2a2a2"/><path d="M49.9,391.0 47.4,390.0 45.2,388.8 43.4,387.4 42.0,386.0 43.5,388.8 45.4,391.4 47.4,393.9 49.7,396.2 51.1,397.4 52.7,398.6 54.6,399.7 56.8,400.6 54.8,398.5 52.9,396.2 51.3,393.7Z" fill="#707070"/><path d="M42.0,386.0 40.9,384.4 40.2,382.7 39.5,381.1 38.9,379.4 40.1,382.6 41.7,385.8 43.5,388.9 45.7,391.8 46.5,392.9 47.5,393.9 48.5,395.0 49.7,396.2 47.4,393.9 45.4,391.4 43.5,388.8Z" fill="#929292"/><path d="M123.6,380.7 123.0,382.3 122.1,384.0 120.9,385.7 119.3,387.4 118.1,390.0 116.7,392.3 115.0,394.4 113.1,396.4 114.3,395.2 115.4,394.1 116.4,393.0 117.2,392.0 119.2,389.3 120.9,386.5 122.4,383.6Z" fill="#929292"/><path d="M119.3,387.4 117.4,389.1 115.2,390.8 112.7,392.4 109.9,393.9 109.3,396.1 108.4,398.0 107.4,399.7 106.1,401.2 108.2,400.1 110.0,398.9 111.6,397.7 113.1,396.4 115.0,394.4 116.7,392.3 118.1,390.0Z" fill="#717171"/><path d="M109.9,393.9 107.0,395.4 103.8,396.7 100.4,398.0 97.0,399.1 97.0,401.0 97.0,402.6 96.8,404.0 96.5,405.1 99.1,404.2 101.6,403.3 103.9,402.3 106.1,401.2 107.4,399.7 108.4,398.0 109.3,396.1Z" fill="#9e9e9e"/><path d="M97.0,399.1 93.4,400.1 89.7,401.0 86.0,401.7 82.3,402.2 83.2,403.9 84.0,405.3 84.8,406.5 85.6,407.3 88.4,406.9 91.1,406.4 93.8,405.8 96.5,405.1 96.8,404.0 97.0,402.6 97.0,401.0Z" fill="#767676"/><path d="M82.3,402.2 78.6,402.6 75.0,402.8 71.5,402.8 68.2,402.7 69.8,404.4 71.5,405.8 73.3,406.9 75.1,407.7 77.6,407.8 80.2,407.8 82.9,407.6 85.6,407.3 84.8,406.5 84.0,405.3 83.2,403.9Z" fill="#9e9e9e"/><path d="M68.2,402.7 65.0,402.4 62.0,402.0 59.3,401.4 56.8,400.6 59.0,402.4 61.4,403.9 64.0,405.2 66.7,406.2 68.5,406.7 70.6,407.2 72.8,407.5 75.1,407.7 73.3,406.9 71.5,405.8 69.8,404.4Z" fill="#717171"/><path d="M56.8,400.6 54.6,399.7 52.7,398.6 51.1,397.4 49.7,396.2 52.2,398.4 54.9,400.4 57.8,402.2 60.9,403.9 62.1,404.4 63.5,405.0 65.0,405.6 66.7,406.2 64.0,405.2 61.4,403.9 59.0,402.4Z" fill="#929292"/><path d="M113.1,396.4 111.6,397.7 110.0,398.9 108.2,400.1 106.1,401.2 104.7,402.4 103.1,403.4 101.4,404.2 99.6,405.0 100.8,404.5 101.8,404.0 102.8,403.5 103.7,403.0 106.3,401.5 108.7,399.9 111.0,398.2Z" fill="#929292"/><path d="M106.1,401.2 103.9,402.3 101.6,403.3 99.1,404.2 96.5,405.1 96.1,405.8 95.6,406.3 94.9,406.6 94.3,406.8 95.7,406.4 97.1,405.9 98.4,405.4 99.6,405.0 101.4,404.2 103.1,403.4 104.7,402.4Z" fill="#6c6c6c"/><path d="M96.5,405.1 93.8,405.8 91.1,406.4 88.4,406.9 85.6,407.3 86.4,407.9 87.1,408.1 87.8,408.1 88.5,408.0 89.9,407.8 91.4,407.5 92.9,407.1 94.3,406.8 94.9,406.6 95.6,406.3 96.1,405.8Z" fill="#949494"/><path d="M85.6,407.3 82.9,407.6 80.2,407.8 77.6,407.8 75.1,407.7 77.0,408.2 79.0,408.4 80.9,408.5 82.9,408.5 84.2,408.4 85.6,408.3 87.0,408.2 88.5,408.0 87.8,408.1 87.1,408.1 86.4,407.9Z" fill="#6c6c6c"/><path d="M75.1,407.7 72.8,407.5 70.6,407.2 68.5,406.7 66.7,406.2 69.4,407.0 72.3,407.6 75.2,408.1 78.2,408.4 79.3,408.4 80.4,408.5 81.6,408.5 82.9,408.5 80.9,408.5 79.0,408.4 77.0,408.2Z" fill="#929292"/><path d="M362.4,176.4 368.3,176.4 370.0,180.6 364.1,180.6Z" fill="#ececec"/><path d="M364.1,180.6 370.0,180.6 371.7,184.7 365.8,184.7Z" fill="#bebebe"/><path d="M365.8,184.7 371.7,184.7 373.4,188.9 367.5,188.9Z" fill="#ececec"/><path d="M368.3,176.4 374.2,176.4 375.9,180.6 370.0,180.6Z" fill="#bebebe"/><path d="M370.0,180.6 375.9,180.6 377.6,184.7 371.7,184.7Z" fill="#ececec"/><path d="M371.7,184.7 377.6,184.7 379.3,188.9 373.4,188.9Z" fill="#bebebe"/><path d="M374.2,176.4 380.1,176.4 381.8,180.6 375.9,180.6Z" fill="#ececec"/><path d="M375.9,180.6 381.8,180.6 383.5,184.7 377.6,184.7Z" fill="#bebebe"/><path d="M377.6,184.7 383.5,184.7 385.2,188.9 379.3,188.9Z" fill="#ececec"/><path d="M380.1,176.4 386.0,176.4 387.6,180.6 381.8,180.6Z" fill="#bebebe"/><path d="M381.8,180.6 387.6,180.6 389.3,184.7 383.5,184.7Z" fill="#ececec"/><path d="M383.5,184.7 389.3,184.7 391.0,188.9 385.2,188.9Z" fill="#bebebe"/><path d="M386.0,176.4 391.8,176.4 393.5,180.6 387.6,180.6Z" fill="#ececec"/><path d="M387.6,180.6 393.5,180.6 395.2,184.7 389.3,184.7Z" fill="#bebebe"/><path d="M389.3,184.7 395.2,184.7 396.9,188.9 391.0,188.9Z" fill="#ececec"/><path d="M391.8,176.4 397.7,176.4 399.4,180.6 393.5,180.6Z" fill="#bebebe"/><path d="M393.5,180.6 399.4,180.6 401.1,184.7 395.2,184.7Z" fill="#ececec"/><path d="M395.2,184.7 401.1,184.7 402.8,188.9 396.9,188.9Z" fill="#bebebe"/><path d="M397.7,176.4 403.6,176.4 405.3,180.6 399.4,180.6Z" fill="#ececec"/><path d="M399.4,180.6 405.3,180.6 407.0,184.7 401.1,184.7Z" fill="#bebebe"/><path d="M401.1,184.7 407.0,184.7 408.7,188.9 402.8,188.9Z" fill="#ececec"/><path d="M403.6,176.4 409.5,176.4 411.2,180.6 405.3,180.6Z" fill="#bebebe"/><path d="M405.3,180.6 411.2,180.6 412.9,184.7 407.0,184.7Z" fill="#ececec"/><path d="M407.0,184.7 412.9,184.7 414.6,188.9 408.7,188.9Z" fill="#bebebe"/><path d="M362.4,176.4 365.0,182.6 364.5,188.4 361.9,182.5Z" fill="#acacac"/><path d="M361.9,182.5 364.5,188.4 364.0,194.1 361.3,188.5Z" fill="#808080"/><path d="M361.3,188.5 364.0,194.1 363.5,199.8 360.8,194.6Z" fill="#acacac"/><path d="M360.8,194.6 363.5,199.8 363.0,205.5 360.3,200.7Z" fill="#808080"/><path d="M360.3,200.7 363.0,205.5 362.5,211.2 359.8,206.8Z" fill="#acacac"/><path d="M359.8,206.8 362.5,211.2 362.0,217.0 359.2,212.9Z" fill="#808080"/><path d="M359.2,212.9 362.0,217.0 361.5,222.7 358.7,218.9Z" fill="#acacac"/><path d="M358.7,218.9 361.5,222.7 361.0,228.4 358.2,225.0Z" fill="#808080"/><path d="M365.0,182.6 367.5,188.9 367.0,194.3 364.5,188.4Z" fill="#808080"/><path d="M364.5,188.4 367.0,194.3 366.6,199.6 364.0,194.1Z" fill="#acacac"/><path d="M364.0,194.1 366.6,199.6 366.1,205.0 363.5,199.8Z" fill="#808080"/><path d="M363.5,199.8 366.1,205.0 365.7,210.4 363.0,205.5Z" fill="#acacac"/><path d="M363.0,205.5 365.7,210.4 365.2,215.7 362.5,211.2Z" fill="#808080"/><path d="M362.5,211.2 365.2,215.7 364.8,221.1 362.0,217.0Z" fill="#acacac"/><path d="M362.0,217.0 364.8,221.1 364.4,226.4 361.5,222.7Z" fill="#808080"/><path d="M361.5,222.7 364.4,226.4 363.9,231.8 361.0,228.4Z" fill="#acacac"/><path d="M367.5,188.9 373.4,188.9 372.9,194.3 367.0,194.3Z" fill="#cdcdcd"/><path d="M367.0,194.3 372.9,194.3 372.5,199.6 366.6,199.6Z" fill="#9c9c9c"/><path d="M366.6,199.6 372.5,199.6 372.0,205.0 366.1,205.0Z" fill="#c9c9c9"/><path d="M366.1,205.0 372.0,205.0 371.6,210.4 365.7,210.4Z" fill="#999999"/><path d="M365.7,210.4 371.6,210.4 371.1,215.8 365.2,215.7Z" fill="#c5c5c5"/><path d="M365.2,215.7 371.1,215.8 370.7,221.1 364.8,221.1Z" fill="#969696"/><path d="M364.8,221.1 370.7,221.1 370.2,226.5 364.4,226.4Z" fill="#c1c1c1"/><path d="M364.4,226.4 370.2,226.5 369.8,231.9 363.9,231.8Z" fill="#939393"/><path d="M373.4,188.9 379.3,188.9 378.8,194.3 372.9,194.3Z" fill="#9e9e9e"/><path d="M372.9,194.3 378.8,194.3 378.4,199.7 372.5,199.6Z" fill="#cccccc"/><path d="M372.5,199.6 378.4,199.7 377.9,205.0 372.0,205.0Z" fill="#9b9b9b"/><path d="M372.0,205.0 377.9,205.0 377.5,210.4 371.6,210.4Z" fill="#c8c8c8"/><path d="M371.6,210.4 377.5,210.4 377.0,215.8 371.1,215.8Z" fill="#989898"/><path d="M371.1,215.8 377.0,215.8 376.6,221.2 370.7,221.1Z" fill="#c4c4c4"/><path d="M370.7,221.1 376.6,221.2 376.1,226.5 370.2,226.5Z" fill="#959595"/><path d="M370.2,226.5 376.1,226.5 375.7,231.9 369.8,231.9Z" fill="#c0c0c0"/><path d="M379.3,188.9 385.2,188.9 384.7,194.3 378.8,194.3Z" fill="#d0d0d0"/><path d="M378.8,194.3 384.7,194.3 384.3,199.7 378.4,199.7Z" fill="#9e9e9e"/><path d="M378.4,199.7 384.3,199.7 383.8,205.1 377.9,205.0Z" fill="#cbcbcb"/><path d="M377.9,205.0 383.8,205.1 383.4,210.4 377.5,210.4Z" fill="#9a9a9a"/><path d="M377.5,210.4 383.4,210.4 382.9,215.8 377.0,215.8Z" fill="#c7c7c7"/><path d="M377.0,215.8 382.9,215.8 382.5,221.2 376.6,221.2Z" fill="#979797"/><path d="M376.6,221.2 382.5,221.2 382.0,226.6 376.1,226.5Z" fill="#c3c3c3"/><path d="M376.1,226.5 382.0,226.6 381.6,232.0 375.7,231.9Z" fill="#949494"/><path d="M385.2,188.9 391.0,188.9 390.6,194.3 384.7,194.3Z" fill="#a0a0a0"/><path d="M384.7,194.3 390.6,194.3 390.1,199.7 384.3,199.7Z" fill="#cfcfcf"/><path d="M384.3,199.7 390.1,199.7 389.7,205.1 383.8,205.1Z" fill="#9d9d9d"/><path d="M383.8,205.1 389.7,205.1 389.2,210.5 383.4,210.4Z" fill="#cacaca"/><path d="M383.4,210.4 389.2,210.5 388.8,215.9 382.9,215.8Z" fill="#9a9a9a"/><path d="M382.9,215.8 388.8,215.9 388.3,221.3 382.5,221.2Z" fill="#c6c6c6"/><path d="M382.5,221.2 388.3,221.3 387.9,226.7 382.0,226.6Z" fill="#969696"/><path d="M382.0,226.6 387.9,226.7 387.5,232.1 381.6,232.0Z" fill="#c2c2c2"/><path d="M391.0,188.9 396.9,188.9 396.5,194.3 390.6,194.3Z" fill="#d2d2d2"/><path d="M390.6,194.3 396.5,194.3 396.0,199.7 390.1,199.7Z" fill="#9f9f9f"/><path d="M390.1,199.7 396.0,199.7 395.6,205.1 389.7,205.1Z" fill="#cdcdcd"/><path d="M389.7,205.1 395.6,205.1 395.1,210.5 389.2,210.5Z" fill="#9c9c9c"/><path d="M389.2,210.5 395.1,210.5 394.7,215.9 388.8,215.9Z" fill="#c9c9c9"/><path d="M388.8,215.9 394.7,215.9 394.2,221.3 388.3,221.3Z" fill="#999999"/><path d="M388.3,221.3 394.2,221.3 393.8,226.7 387.9,226.7Z" fill="#c5c5c5"/><path d="M387.9,226.7 393.8,226.7 393.3,232.1 387.5,232.1Z" fill="#969696"/><path d="M396.9,188.9 402.8,188.9 402.4,194.3 396.5,194.3Z" fill="#a2a2a2"/><path d="M396.5,194.3 402.4,194.3 401.9,199.7 396.0,199.7Z" fill="#d1d1d1"/><path d="M396.0,199.7 401.9,199.7 401.5,205.1 395.6,205.1Z" fill="#9e9e9e"/><path d="M395.6,205.1 401.5,205.1 401.0,210.5 395.1,210.5Z" fill="#cccccc"/><path d="M395.1,210.5 401.0,210.5 400.6,215.9 394.7,215.9Z" fill="#9b9b9b"/><path d="M394.7,215.9 400.6,215.9 400.1,221.4 394.2,221.3Z" fill="#c8c8c8"/><path d="M394.2,221.3 400.1,221.4 399.7,226.8 393.8,226.7Z" fill="#989898"/><path d="M393.8,226.7 399.7,226.8 399.2,232.2 393.3,232.1Z" fill="#c4c4c4"/><path d="M402.8,188.9 408.7,188.9 408.3,194.3 402.4,194.3Z" fill="#d4d4d4"/><path d="M402.4,194.3 408.3,194.3 407.8,199.7 401.9,199.7Z" fill="#a1a1a1"/><path d="M401.9,199.7 407.8,199.7 407.4,205.2 401.5,205.1Z" fill="#d0d0d0"/><path d="M401.5,205.1 407.4,205.2 406.9,210.6 401.0,210.5Z" fill="#9e9e9e"/><path d="M401.0,210.5 406.9,210.6 406.5,216.0 400.6,215.9Z" fill="#cbcbcb"/><path d="M400.6,215.9 406.5,216.0 406.0,221.4 400.1,221.4Z" fill="#9a9a9a"/><path d="M400.1,221.4 406.0,221.4 405.6,226.8 399.7,226.8Z" fill="#c7c7c7"/><path d="M399.7,226.8 405.6,226.8 405.1,232.2 399.2,232.2Z" fill="#979797"/><path d="M408.7,188.9 414.6,188.9 414.1,194.3 408.3,194.3Z" fill="#a3a3a3"/><path d="M408.3,194.3 414.1,194.3 413.7,199.8 407.8,199.7Z" fill="#d3d3d3"/><path d="M407.8,199.7 413.7,199.8 413.2,205.2 407.4,205.2Z" fill="#a0a0a0"/><path d="M407.4,205.2 413.2,205.2 412.8,210.6 406.9,210.6Z" fill="#cfcfcf"/><path d="M406.9,210.6 412.8,210.6 412.4,216.0 406.5,216.0Z" fill="#9d9d9d"/><path d="M406.5,216.0 412.4,216.0 411.9,221.5 406.0,221.4Z" fill="#cacaca"/><path d="M406.0,221.4 411.9,221.5 411.5,226.9 405.6,226.8Z" fill="#9a9a9a"/><path d="M405.6,226.8 411.5,226.9 411.0,232.3 405.1,232.2Z" fill="#c6c6c6"/><path d="M548.1,275.4 547.7,276.9 546.8,278.4 545.6,279.8 543.8,286.4 545.1,285.0 545.9,283.5 546.4,281.9Z" fill="#b2b2b2"/><path d="M546.4,281.9 545.9,283.5 545.1,285.0 543.8,286.4 542.1,292.9 543.3,291.5 544.2,290.0 544.6,288.5Z" fill="#757575"/><path d="M544.6,288.5 544.2,290.0 543.3,291.5 542.1,292.9 540.3,299.5 541.6,298.1 542.4,296.6 542.9,295.0Z" fill="#adadad"/><path d="M542.9,295.0 542.4,296.6 541.6,298.1 540.3,299.5 538.6,306.0 539.8,304.7 540.7,303.2 541.1,301.6Z" fill="#727272"/><path d="M541.1,301.6 540.7,303.2 539.8,304.7 538.6,306.0 536.8,312.6 538.1,311.2 538.9,309.7 539.4,308.2Z" fill="#a9a9a9"/><path d="M539.4,308.2 538.9,309.7 538.1,311.2 536.8,312.6 535.1,319.2 536.3,317.8 537.2,316.3 537.6,314.7Z" fill="#6f6f6f"/><path d="M537.6,314.7 537.2,316.3 536.3,317.8 535.1,319.2 533.3,325.7 534.6,324.3 535.4,322.9 535.9,321.3Z" fill="#a5a5a5"/><path d="M535.9,321.3 535.4,322.9 534.6,324.3 533.3,325.7 531.6,332.3 532.8,330.9 533.7,329.4 534.1,327.9Z" fill="#6d6d6d"/><path d="M545.6,279.8 544.0,281.1 542.0,282.2 539.8,283.2 538.0,289.8 540.3,288.8 542.2,287.6 543.8,286.4Z" fill="#828282"/><path d="M543.8,286.4 542.2,287.6 540.3,288.8 538.0,289.8 536.3,296.4 538.5,295.3 540.5,294.2 542.1,292.9Z" fill="#c1c1c1"/><path d="M542.1,292.9 540.5,294.2 538.5,295.3 536.3,296.4 534.5,302.9 536.8,301.9 538.7,300.8 540.3,299.5Z" fill="#7f7f7f"/><path d="M540.3,299.5 538.7,300.8 536.8,301.9 534.5,302.9 532.8,309.5 535.0,308.5 537.0,307.3 538.6,306.0Z" fill="#bdbdbd"/><path d="M538.6,306.0 537.0,307.3 535.0,308.5 532.8,309.5 531.0,316.0 533.3,315.0 535.2,313.9 536.8,312.6Z" fill="#7d7d7d"/><path d="M536.8,312.6 535.2,313.9 533.3,315.0 531.0,316.0 529.3,322.6 531.5,321.6 533.5,320.4 535.1,319.2Z" fill="#b9b9b9"/><path d="M535.1,319.2 533.5,320.4 531.5,321.6 529.3,322.6 527.5,329.2 529.8,328.2 531.7,327.0 533.3,325.7Z" fill="#7a7a7a"/><path d="M533.3,325.7 531.7,327.0 529.8,328.2 527.5,329.2 525.8,335.7 528.0,334.7 530.0,333.6 531.6,332.3Z" fill="#b5b5b5"/><path d="M539.8,283.2 537.2,284.1 534.3,284.8 531.2,285.3 529.5,291.9 532.6,291.3 535.4,290.6 538.0,289.8Z" fill="#cecece"/><path d="M538.0,289.8 535.4,290.6 532.6,291.3 529.5,291.9 527.7,298.4 530.8,297.9 533.7,297.2 536.3,296.4Z" fill="#888888"/><path d="M536.3,296.4 533.7,297.2 530.8,297.9 527.7,298.4 526.0,305.0 529.1,304.5 531.9,303.8 534.5,302.9Z" fill="#cacaca"/><path d="M534.5,302.9 531.9,303.8 529.1,304.5 526.0,305.0 524.2,311.6 527.3,311.0 530.2,310.3 532.8,309.5Z" fill="#858585"/><path d="M532.8,309.5 530.2,310.3 527.3,311.0 524.2,311.6 522.5,318.1 525.6,317.6 528.4,316.9 531.0,316.0Z" fill="#c6c6c6"/><path d="M531.0,316.0 528.4,316.9 525.6,317.6 522.5,318.1 520.7,324.7 523.8,324.2 526.7,323.5 529.3,322.6Z" fill="#838383"/><path d="M529.3,322.6 526.7,323.5 523.8,324.2 520.7,324.7 519.0,331.3 522.1,330.7 524.9,330.0 527.5,329.2Z" fill="#c2c2c2"/><path d="M527.5,329.2 524.9,330.0 522.1,330.7 519.0,331.3 517.2,337.8 520.3,337.3 523.2,336.6 525.8,335.7Z" fill="#808080"/><path d="M531.2,285.3 527.9,285.7 524.4,285.9 520.8,285.9 519.1,292.4 522.7,292.4 526.2,292.2 529.5,291.9Z" fill="#8c8c8c"/><path d="M529.5,291.9 526.2,292.2 522.7,292.4 519.1,292.4 517.3,299.0 520.9,299.0 524.4,298.8 527.7,298.4Z" fill="#d0d0d0"/><path d="M527.7,298.4 524.4,298.8 520.9,299.0 517.3,299.0 515.6,305.5 519.2,305.5 522.7,305.4 526.0,305.0Z" fill="#898989"/><path d="M526.0,305.0 522.7,305.4 519.2,305.5 515.6,305.5 513.8,312.1 517.4,312.1 520.9,311.9 524.2,311.6Z" fill="#cccccc"/><path d="M524.2,311.6 520.9,311.9 517.4,312.1 513.8,312.1 512.1,318.7 515.7,318.7 519.2,318.5 522.5,318.1Z" fill="#868686"/><path d="M522.5,318.1 519.2,318.5 515.7,318.7 512.1,318.7 510.3,325.2 513.9,325.2 517.4,325.1 520.7,324.7Z" fill="#c7c7c7"/><path d="M520.7,324.7 517.4,325.1 513.9,325.2 510.3,325.2 508.6,331.8 512.2,331.8 515.7,331.6 519.0,331.3Z" fill="#848484"/><path d="M519.0,331.3 515.7,331.6 512.2,331.8 508.6,331.8 506.8,338.4 510.4,338.4 513.9,338.2 517.2,337.8Z" fill="#c3c3c3"/><path d="M520.8,285.9 517.1,285.7 513.3,285.3 509.5,284.8 507.8,291.4 511.6,291.9 515.3,292.2 519.1,292.4Z" fill="#cecece"/><path d="M519.1,292.4 515.3,292.2 511.6,291.9 507.8,291.4 506.0,297.9 509.8,298.5 513.6,298.8 517.3,299.0Z" fill="#888888"/><path d="M517.3,299.0 513.6,298.8 509.8,298.5 506.0,297.9 504.3,304.5 508.1,305.0 511.8,305.4 515.6,305.5Z" fill="#c9c9c9"/><path d="M515.6,305.5 511.8,305.4 508.1,305.0 504.3,304.5 502.5,311.1 506.3,311.6 510.1,311.9 513.8,312.1Z" fill="#858585"/><path d="M513.8,312.1 510.1,311.9 506.3,311.6 502.5,311.1 500.8,317.6 504.6,318.1 508.3,318.5 512.1,318.7Z" fill="#c5c5c5"/><path d="M512.1,318.7 508.3,318.5 504.6,318.1 500.8,317.6 499.0,324.2 502.8,324.7 506.6,325.1 510.3,325.2Z" fill="#828282"/><path d="M510.3,325.2 506.6,325.1 502.8,324.7 499.0,324.2 497.3,330.7 501.1,331.3 504.8,331.6 508.6,331.8Z" fill="#c1c1c1"/><path d="M508.6,331.8 504.8,331.6 501.1,331.3 497.3,330.7 495.5,337.3 499.3,337.8 503.1,338.2 506.8,338.4Z" fill="#7f7f7f"/><path d="M509.5,284.8 505.8,284.1 502.1,283.2 498.5,282.2 496.7,288.8 500.3,289.8 504.0,290.7 507.8,291.4Z" fill="#818181"/><path d="M507.8,291.4 504.0,290.7 500.3,289.8 496.7,288.8 495.0,295.4 498.6,296.4 502.3,297.2 506.0,297.9Z" fill="#c0c0c0"/><path d="M506.0,297.9 502.3,297.2 498.6,296.4 495.0,295.4 493.2,301.9 496.8,302.9 500.5,303.8 504.3,304.5Z" fill="#7e7e7e"/><path d="M504.3,304.5 500.5,303.8 496.8,302.9 493.2,301.9 491.5,308.5 495.1,309.5 498.8,310.4 502.5,311.1Z" fill="#bbbbbb"/><path d="M502.5,311.1 498.8,310.4 495.1,309.5 491.5,308.5 489.7,315.1 493.3,316.1 497.0,316.9 500.8,317.6Z" fill="#7c7c7c"/><path d="M500.8,317.6 497.0,316.9 493.3,316.1 489.7,315.1 488.0,321.6 491.6,322.6 495.3,323.5 499.0,324.2Z" fill="#b7b7b7"/><path d="M499.0,324.2 495.3,323.5 491.6,322.6 488.0,321.6 486.2,328.2 489.8,329.2 493.5,330.0 497.3,330.7Z" fill="#797979"/><path d="M497.3,330.7 493.5,330.0 489.8,329.2 486.2,328.2 484.5,334.7 488.1,335.7 491.8,336.6 495.5,337.3Z" fill="#b3b3b3"/><path d="M498.5,282.2 495.0,281.1 491.8,279.8 488.8,278.4 487.0,285.0 490.0,286.4 493.3,287.7 496.7,288.8Z" fill="#b0b0b0"/><path d="M496.7,288.8 493.3,287.7 490.0,286.4 487.0,285.0 485.3,291.6 488.3,292.9 491.5,294.2 495.0,295.4Z" fill="#747474"/><path d="M495.0,295.4 491.5,294.2 488.3,292.9 485.3,291.6 483.5,298.1 486.5,299.5 489.8,300.8 493.2,301.9Z" fill="#ababab"/><path d="M493.2,301.9 489.8,300.8 486.5,299.5 483.5,298.1 481.8,304.7 484.8,306.1 488.0,307.3 491.5,308.5Z" fill="#717171"/><path d="M491.5,308.5 488.0,307.3 484.8,306.1 481.8,304.7 480.0,311.3 483.0,312.6 486.3,313.9 489.7,315.1Z" fill="#a7a7a7"/><path d="M489.7,315.1 486.3,313.9 483.0,312.6 480.0,311.3 478.3,317.8 481.3,319.2 484.5,320.5 488.0,321.6Z" fill="#6e6e6e"/><path d="M488.0,321.6 484.5,320.5 481.3,319.2 478.3,317.8 476.5,324.4 479.5,325.8 482.8,327.0 486.2,328.2Z" fill="#a3a3a3"/><path d="M486.2,328.2 482.8,327.0 479.5,325.8 476.5,324.4 474.8,330.9 477.8,332.3 481.0,333.6 484.5,334.7Z" fill="#6b6b6b"/><path d="M488.8,278.4 486.0,277.0 483.5,275.4 481.3,273.8 479.6,280.3 481.7,282.0 484.2,283.5 487.0,285.0Z" fill="#666666"/><path d="M487.0,285.0 484.2,283.5 481.7,282.0 479.6,280.3 477.8,286.9 480.0,288.5 482.5,290.1 485.3,291.6Z" fill="#979797"/><path d="M485.3,291.6 482.5,290.1 480.0,288.5 477.8,286.9 476.1,293.4 478.2,295.1 480.7,296.6 483.5,298.1Z" fill="#636363"/><path d="M483.5,298.1 480.7,296.6 478.2,295.1 476.1,293.4 474.3,300.0 476.5,301.6 479.0,303.2 481.8,304.7Z" fill="#939393"/><path d="M481.8,304.7 479.0,303.2 476.5,301.6 474.3,300.0 472.6,306.6 474.7,308.2 477.2,309.8 480.0,311.3Z" fill="#606060"/><path d="M480.0,311.3 477.2,309.8 474.7,308.2 472.6,306.6 470.8,313.1 473.0,314.8 475.5,316.3 478.3,317.8Z" fill="#8e8e8e"/><path d="M478.3,317.8 475.5,316.3 473.0,314.8 470.8,313.1 469.1,319.7 471.2,321.3 473.7,322.9 476.5,324.4Z" fill="#5e5e5e"/><path d="M476.5,324.4 473.7,322.9 471.2,321.3 469.1,319.7 467.3,326.3 469.5,327.9 472.0,329.5 474.8,330.9Z" fill="#8a8a8a"/><path d="M481.3,273.8 479.5,272.1 478.0,270.4 476.9,268.7 475.1,275.2 476.2,276.9 477.7,278.6 479.6,280.3Z" fill="#818181"/><path d="M479.6,280.3 477.7,278.6 476.2,276.9 475.1,275.2 473.4,281.8 474.5,283.5 476.0,285.2 477.8,286.9Z" fill="#555555"/><path d="M477.8,286.9 476.0,285.2 474.5,283.5 473.4,281.8 471.6,288.4 472.7,290.1 474.2,291.8 476.1,293.4Z" fill="#7d7d7d"/><path d="M476.1,293.4 474.2,291.8 472.7,290.1 471.6,288.4 469.9,294.9 471.0,296.6 472.5,298.3 474.3,300.0Z" fill="#525252"/><path d="M474.3,300.0 472.5,298.3 471.0,296.6 469.9,294.9 468.1,301.5 469.2,303.2 470.7,304.9 472.6,306.6Z" fill="#797979"/><path d="M472.6,306.6 470.7,304.9 469.2,303.2 468.1,301.5 466.4,308.0 467.5,309.8 469.0,311.5 470.8,313.1Z" fill="#4f4f4f"/><path d="M470.8,313.1 469.0,311.5 467.5,309.8 466.4,308.0 464.6,314.6 465.7,316.3 467.2,318.0 469.1,319.7Z" fill="#757575"/><path d="M469.1,319.7 467.2,318.0 465.7,316.3 464.6,314.6 462.9,321.2 464.0,322.9 465.5,324.6 467.3,326.3Z" fill="#4c4c4c"/><path d="M476.9,268.7 476.1,267.0 475.8,265.3 475.9,263.6 474.1,270.2 474.1,271.8 474.4,273.5 475.1,275.2Z" fill="#565656"/><path d="M475.1,275.2 474.4,273.5 474.1,271.8 474.1,270.2 472.4,276.8 472.3,278.4 472.6,280.1 473.4,281.8Z" fill="#7f7f7f"/><path d="M473.4,281.8 472.6,280.1 472.3,278.4 472.4,276.8 470.6,283.3 470.6,285.0 470.9,286.6 471.6,288.4Z" fill="#535353"/><path d="M471.6,288.4 470.9,286.6 470.6,285.0 470.6,283.3 468.9,289.9 468.8,291.5 469.1,293.2 469.9,294.9Z" fill="#7b7b7b"/><path d="M469.9,294.9 469.1,293.2 468.8,291.5 468.9,289.9 467.1,296.5 467.1,298.1 467.4,299.8 468.1,301.5Z" fill="#505050"/><path d="M468.1,301.5 467.4,299.8 467.1,298.1 467.1,296.5 465.4,303.0 465.3,304.7 465.6,306.3 466.4,308.0Z" fill="#777777"/><path d="M466.4,308.0 465.6,306.3 465.3,304.7 465.4,303.0 463.6,309.6 463.6,311.2 463.9,312.9 464.6,314.6Z" fill="#4e4e4e"/><path d="M464.6,314.6 463.9,312.9 463.6,311.2 463.6,309.6 461.9,316.1 461.8,317.8 462.1,319.5 462.9,321.2Z" fill="#727272"/><clipPath id="cyltop"><path d="M548.1,275.4 547.5,277.3 546.3,279.1 544.4,280.8 542.0,282.2 539.2,283.5 535.8,284.5 532.0,285.2 527.9,285.7 523.5,285.9 519.0,285.8 514.3,285.4 509.5,284.8 504.8,283.9 500.3,282.8 495.9,281.4 491.8,279.8 488.0,278.1 484.7,276.2 481.8,274.2 479.5,272.1 477.7,269.9 476.5,267.8 475.9,265.7 475.9,263.6 476.5,261.7 477.7,259.9 479.6,258.2 482.0,256.8 484.8,255.5 488.2,254.5 492.0,253.8 496.1,253.3 500.5,253.1 505.0,253.2 509.7,253.6 514.5,254.2 519.2,255.1 523.7,256.2 528.1,257.6 532.2,259.2 536.0,260.9 539.3,262.8 542.2,264.8 544.5,266.9 546.3,269.1 547.5,271.2 548.1,273.3Z"/></clipPath><g clip-path="url(#cyltop)"><path d="M548.1,275.4 547.5,277.3 546.3,279.1 544.4,280.8 542.0,282.2 539.2,283.5 535.8,284.5 532.0,285.2 527.9,285.7 523.5,285.9 519.0,285.8 514.3,285.4 509.5,284.8 504.8,283.9 500.3,282.8 495.9,281.4 491.8,279.8 488.0,278.1 484.7,276.2 481.8,274.2 479.5,272.1 477.7,269.9 476.5,267.8 475.9,265.7 475.9,263.6 476.5,261.7 477.7,259.9 479.6,258.2 482.0,256.8 484.8,255.5 488.2,254.5 492.0,253.8 496.1,253.3 500.5,253.1 505.0,253.2 509.7,253.6 514.5,254.2 519.2,255.1 523.7,256.2 528.1,257.6 532.2,259.2 536.0,260.9 539.3,262.8 542.2,264.8 544.5,266.9 546.3,269.1 547.5,271.2 548.1,273.3Z" fill="#eeeeee"/><path d="M477.9,251.4 485.1,252.6 484.6,255.6 477.4,254.5Z" fill="#c0c0c0"/><path d="M476.9,257.5 484.1,258.7 483.6,261.8 476.4,260.6Z" fill="#c0c0c0"/><path d="M475.9,263.6 483.1,264.8 482.6,267.9 475.4,266.7Z" fill="#c0c0c0"/><path d="M474.9,269.8 482.1,270.9 481.6,274.0 474.4,272.8Z" fill="#c0c0c0"/><path d="M473.9,275.9 481.1,277.1 480.6,280.1 473.4,278.9Z" fill="#c0c0c0"/><path d="M485.6,249.5 492.8,250.7 492.3,253.7 485.1,252.6Z" fill="#c0c0c0"/><path d="M484.6,255.6 491.8,256.8 491.3,259.9 484.1,258.7Z" fill="#c0c0c0"/><path d="M483.6,261.8 490.8,262.9 490.3,266.0 483.1,264.8Z" fill="#c0c0c0"/><path d="M482.6,267.9 489.8,269.0 489.3,272.1 482.1,270.9Z" fill="#c0c0c0"/><path d="M481.6,274.0 488.8,275.2 488.3,278.2 481.1,277.1Z" fill="#c0c0c0"/><path d="M492.3,253.7 499.5,254.9 499.0,258.0 491.8,256.8Z" fill="#c0c0c0"/><path d="M491.3,259.9 498.5,261.0 498.0,264.1 490.8,262.9Z" fill="#c0c0c0"/><path d="M490.3,266.0 497.5,267.2 497.1,270.2 489.8,269.0Z" fill="#c0c0c0"/><path d="M489.3,272.1 496.6,273.3 496.1,276.3 488.8,275.2Z" fill="#c0c0c0"/><path d="M488.3,278.2 495.6,279.4 495.1,282.5 487.8,281.3Z" fill="#c0c0c0"/><path d="M500.0,251.9 507.3,253.0 506.8,256.1 499.5,254.9Z" fill="#c0c0c0"/><path d="M499.0,258.0 506.3,259.1 505.8,262.2 498.5,261.0Z" fill="#c0c0c0"/><path d="M498.0,264.1 505.3,265.3 504.8,268.3 497.5,267.2Z" fill="#c0c0c0"/><path d="M497.1,270.2 504.3,271.4 503.8,274.4 496.6,273.3Z" fill="#c0c0c0"/><path d="M496.1,276.3 503.3,277.5 502.8,280.6 495.6,279.4Z" fill="#c0c0c0"/><path d="M506.8,256.1 514.0,257.3 513.5,260.3 506.3,259.1Z" fill="#c0c0c0"/><path d="M505.8,262.2 513.0,263.4 512.5,266.4 505.3,265.3Z" fill="#c0c0c0"/><path d="M504.8,268.3 512.0,269.5 511.5,272.6 504.3,271.4Z" fill="#c0c0c0"/><path d="M503.8,274.4 511.0,275.6 510.5,278.7 503.3,277.5Z" fill="#c0c0c0"/><path d="M502.8,280.6 510.0,281.7 509.5,284.8 502.3,283.6Z" fill="#c0c0c0"/><path d="M514.5,254.2 521.7,255.4 521.2,258.4 514.0,257.3Z" fill="#c0c0c0"/><path d="M513.5,260.3 520.7,261.5 520.2,264.6 513.0,263.4Z" fill="#c0c0c0"/><path d="M512.5,266.4 519.7,267.6 519.2,270.7 512.0,269.5Z" fill="#c0c0c0"/><path d="M511.5,272.6 518.7,273.7 518.2,276.8 511.0,275.6Z" fill="#c0c0c0"/><path d="M510.5,278.7 517.7,279.9 517.2,282.9 510.0,281.7Z" fill="#c0c0c0"/><path d="M521.2,258.4 528.4,259.6 527.9,262.7 520.7,261.5Z" fill="#c0c0c0"/><path d="M520.2,264.6 527.4,265.7 526.9,268.8 519.7,267.6Z" fill="#c0c0c0"/><path d="M519.2,270.7 526.5,271.8 526.0,274.9 518.7,273.7Z" fill="#c0c0c0"/><path d="M518.2,276.8 525.5,278.0 525.0,281.0 517.7,279.9Z" fill="#c0c0c0"/><path d="M517.2,282.9 524.5,284.1 524.0,287.1 516.7,286.0Z" fill="#c0c0c0"/><path d="M528.9,256.5 536.2,257.7 535.7,260.8 528.4,259.6Z" fill="#c0c0c0"/><path d="M527.9,262.7 535.2,263.8 534.7,266.9 527.4,265.7Z" fill="#c0c0c0"/><path d="M526.9,268.8 534.2,270.0 533.7,273.0 526.5,271.8Z" fill="#c0c0c0"/><path d="M526.0,274.9 533.2,276.1 532.7,279.1 525.5,278.0Z" fill="#c0c0c0"/><path d="M525.0,281.0 532.2,282.2 531.7,285.3 524.5,284.1Z" fill="#c0c0c0"/><path d="M535.7,260.8 542.9,261.9 542.4,265.0 535.2,263.8Z" fill="#c0c0c0"/><path d="M534.7,266.9 541.9,268.1 541.4,271.1 534.2,270.0Z" fill="#c0c0c0"/><path d="M533.7,273.0 540.9,274.2 540.4,277.2 533.2,276.1Z" fill="#c0c0c0"/><path d="M532.7,279.1 539.9,280.3 539.4,283.4 532.2,282.2Z" fill="#c0c0c0"/><path d="M531.7,285.3 538.9,286.4 538.4,289.5 531.2,288.3Z" fill="#c0c0c0"/><path d="M543.4,258.9 550.6,260.1 550.1,263.1 542.9,261.9Z" fill="#c0c0c0"/><path d="M542.4,265.0 549.6,266.2 549.1,269.2 541.9,268.1Z" fill="#c0c0c0"/><path d="M541.4,271.1 548.6,272.3 548.1,275.4 540.9,274.2Z" fill="#c0c0c0"/><path d="M540.4,277.2 547.6,278.4 547.1,281.5 539.9,280.3Z" fill="#c0c0c0"/><path d="M539.4,283.4 546.6,284.5 546.1,287.6 538.9,286.4Z" fill="#c0c0c0"/></g><circle cx="467" cy="19" r="11" fill="#f0f0f0"/><rect x="460" y="13.5" width="14" height="9" rx="1" fill="none" stroke="#8a8a8a" stroke-width="1.6"/><path d="M465 24h4l1 2h-6z" fill="#8a8a8a"/><circle cx="497" cy="19" r="11" fill="#f0f0f0"/><circle cx="497" cy="19" r="3" fill="#8a8a8a"/><path d="M502.0 19.0L505.5 19.0" stroke="#8a8a8a" stroke-width="1.3"/><path d="M500.5 22.5L503.0 25.0" stroke="#8a8a8a" stroke-width="1.3"/><path d="M497.0 24.0L497.0 27.5" stroke="#8a8a8a" stroke-width="1.3"/><path d="M493.5 22.5L491.0 25.0" stroke="#8a8a8a" stroke-width="1.3"/><path d="M492.0 19.0L488.5 19.0" stroke="#8a8a8a" stroke-width="1.3"/><path d="M493.5 15.5L491.0 13.0" stroke="#8a8a8a" stroke-width="1.3"/><path d="M497.0 14.0L497.0 10.5" stroke="#8a8a8a" stroke-width="1.3"/><path d="M500.5 15.5L503.0 13.0" stroke="#8a8a8a" stroke-width="1.3"/><circle cx="527" cy="19" r="11" fill="#f0f0f0"/><circle cx="527" cy="19" r="3" fill="#8a8a8a"/><path d="M532.0 19.0L535.5 19.0" stroke="#8a8a8a" stroke-width="1.3"/><path d="M530.5 22.5L533.0 25.0" stroke="#8a8a8a" stroke-width="1.3"/><path d="M527.0 24.0L527.0 27.5" stroke="#8a8a8a" stroke-width="1.3"/><path d="M523.5 22.5L521.0 25.0" stroke="#8a8a8a" stroke-width="1.3"/><path d="M522.0 19.0L518.5 19.0" stroke="#8a8a8a" stroke-width="1.3"/><path d="M523.5 15.5L521.0 13.0" stroke="#8a8a8a" stroke-width="1.3"/><path d="M527.0 14.0L527.0 10.5" stroke="#8a8a8a" stroke-width="1.3"/><path d="M530.5 15.5L533.0 13.0" stroke="#8a8a8a" stroke-width="1.3"/><circle cx="556" cy="19" r="11" fill="#f0f0f0"/><rect x="549.5" y="13.5" width="11" height="10.5" rx="1.2" fill="#8a8a8a"/><path d="M559.5 17.5l5-3.5v10l-5-3.5z" fill="#8a8a8a"/><text x="10.2" y="610.5" font-family="Liberation Sans" font-size="14" letter-spacing="0.6" fill="#1a30e0">www.historian.by</text>
</g></svg>
</body></html>
